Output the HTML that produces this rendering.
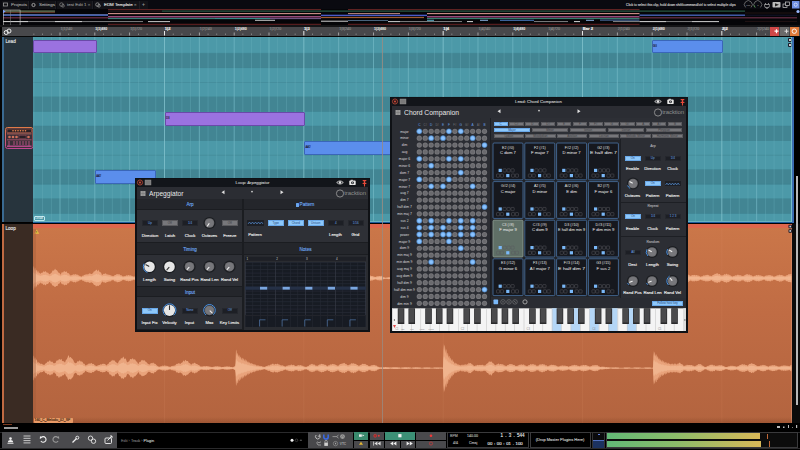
<!DOCTYPE html><html><head><meta charset="utf-8"><style>
html,body{margin:0;padding:0;width:800px;height:450px;overflow:hidden;background:#000;}
body{position:relative;font-family:"Liberation Sans",sans-serif;}
.t{position:absolute;white-space:nowrap;line-height:1;-webkit-text-stroke:0.12px currentColor;}
svg{position:absolute;left:0;top:0;}
</style></head><body>
<div style="position:absolute;left:0px;top:0px;width:800px;height:9px;background:#0a0a10;"></div>
<div style="position:absolute;left:2px;top:1px;width:27px;height:8px;background:#121217;border-right:0.8px solid #1e1e24;box-sizing:border-box;"></div>
<div style="position:absolute;left:30px;top:1px;width:26px;height:8px;background:#121217;border-right:0.8px solid #1e1e24;box-sizing:border-box;"></div>
<div style="position:absolute;left:57px;top:1px;width:36px;height:8px;background:#121217;border-right:0.8px solid #1e1e24;box-sizing:border-box;"></div>
<div style="position:absolute;left:94px;top:1px;width:46px;height:8px;background:#121217;border-right:0.8px solid #1e1e24;box-sizing:border-box;"></div>
<div style="position:absolute;left:140px;top:1px;width:8px;height:8px;background:#121217;"></div>
<div class="t" style="left:11px;top:3.0px;font-size:4.4px;color:#a4a4a4;">Projects</div>
<div class="t" style="left:39px;top:3.0px;font-size:4.4px;color:#a4a4a4;">Settings</div>
<div class="t" style="left:67px;top:3.0px;font-size:4.4px;color:#909090;">test Edit 1 <span style="color:#666">×</span></div>
<div class="t" style="left:104px;top:3.0px;font-size:4.4px;color:#e0e0e0;">EDM Template <span style="color:#777">×</span></div>
<div class="t" style="left:142px;top:2.0px;font-size:5px;color:#999;">+</div>
<div class="t" style="left:626px;top:4.1px;font-size:3.3px;color:#cfcfcf;">Click to select this clip, hold down shift/command/ctrl to select multiple clips</div>
<svg width="800" height="10" style="top:0">
<rect x="3.5" y="3" width="4" height="3" fill="none" stroke="#999" stroke-width="0.8"/>
<circle cx="33.5" cy="5" r="1.6" fill="none" stroke="#aaa" stroke-width="0.9"/>
<circle cx="61.5" cy="4.6" r="1.8" fill="none" stroke="#888" stroke-width="0.7"/><circle cx="63" cy="5.8" r="1.4" fill="none" stroke="#888" stroke-width="0.6"/>
<circle cx="97.5" cy="4.6" r="1.8" fill="none" stroke="#aaa" stroke-width="0.7"/><circle cx="99" cy="5.8" r="1.4" fill="none" stroke="#aaa" stroke-width="0.6"/>
<path d="M745.6 7.4 A3.9 3.9 0 1 1 751 7.4" fill="none" stroke="#888" stroke-width="0.7"/>
<path d="M755.1 7.4 A3.9 3.9 0 1 1 760.5 7.4" fill="none" stroke="#888" stroke-width="0.7"/>
<path d="M755.1 7.4 A3.9 3.9 0 0 1 754 5.5" stroke="#3aaa3a" stroke-width="0.8" fill="none"/>
<text x="748.3" y="5.6" font-size="2.4" fill="#bbb" text-anchor="middle" font-family="Liberation Sans">100</text>
<text x="757.8" y="5.6" font-size="2.4" fill="#bbb" text-anchor="middle" font-family="Liberation Sans">0</text>
<path d="M765.5 3 v1.5 M768.5 3 v1.5 M764.5 4.5 h5 v1 a2.5 2.5 0 0 1 -5 0 z M767 7 v2" stroke="#bbb" stroke-width="0.7" fill="none"/>
<rect x="772.5" y="2" width="8" height="5.6" rx="0.8" fill="#bbb"/><path d="M775 3.2 L779 4.8 L775 6.4 z" fill="#222"/>
<rect x="783" y="4" width="4" height="3.5" fill="none" stroke="#ccc" stroke-width="0.7"/><rect x="785.5" y="2" width="4" height="3.5" fill="#0a0a10" stroke="#ccc" stroke-width="0.7"/>
<rect x="792" y="1" width="7.5" height="7.5" fill="#6e8fe0"/><circle cx="795.7" cy="4.7" r="1.6" fill="none" stroke="#e8eeff" stroke-width="0.7"/>
</svg>
<div style="position:absolute;left:0px;top:9px;width:800px;height:17px;background:#050508;"></div>
<svg width="800" height="26" style="top:0"><rect x="108" y="9.10" width="213" height="1.0" fill="#6a2626"/><rect x="348" y="9.10" width="291.5" height="1.0" fill="#6a2626"/><rect x="745" y="12.60" width="52" height="0.8" fill="#2a1818"/><rect x="745" y="20.90" width="52" height="0.8" fill="#2a1818"/><rect x="745" y="14.80" width="52" height="0.8" fill="#141830"/><rect x="108" y="10.60" width="54" height="1.0" fill="#2a2222"/><rect x="162" y="10.60" width="583" height="1.0" fill="#2f6a50"/><rect x="108" y="13.05" width="213" height="1.1" fill="#d0908a"/><rect x="427" y="13.05" width="212.5" height="1.1" fill="#d0908a"/><rect x="348" y="13.10" width="52" height="1.0" fill="#c08a80"/><rect x="108" y="16.15" width="213" height="1.3" fill="#b0588e"/><rect x="427" y="16.15" width="212.5" height="1.3" fill="#b0588e"/><rect x="108" y="18.10" width="107" height="1.0" fill="#3a8a82"/><rect x="215" y="18.10" width="55" height="1.0" fill="#3a9a98"/><rect x="270" y="18.10" width="51" height="1.0" fill="#7a5a90"/><rect x="427" y="18.10" width="212.5" height="1.0" fill="#3a8a78"/><rect x="108" y="23.80" width="213" height="1.0" fill="#6a2424"/><rect x="348" y="23.80" width="291.5" height="1.0" fill="#6a2424"/><rect x="3" y="10.60" width="52" height="1.0" fill="#8aa070"/><rect x="3" y="12.15" width="52" height="0.9" fill="#6a3a28"/><rect x="3" y="14.50" width="105" height="1.4" fill="#4a68c0"/><rect x="3" y="14.40" width="105" height="0.4" fill="#90a8e0"/><rect x="321" y="14.70" width="106" height="1.4" fill="#4a5ac8"/><rect x="639.5" y="14.55" width="105.5" height="1.3" fill="#4a68c0"/><rect x="3" y="17.20" width="105" height="1.2" fill="#703048"/><rect x="321" y="16.90" width="103" height="1.2" fill="#a05a30"/><rect x="639.5" y="17.20" width="157.5" height="1.2" fill="#6a3048"/><rect x="3" y="21.10" width="25" height="1.0" fill="#e0e0e0"/><rect x="28" y="21.15" width="27" height="0.9" fill="#8a8a8a"/><rect x="55" y="21.10" width="27" height="1.0" fill="#e0e0e0"/><rect x="82" y="21.15" width="61" height="0.9" fill="#8a8a8a"/><rect x="148" y="21.10" width="22" height="1.0" fill="#c8c8c8"/><rect x="255" y="19.80" width="20" height="1.0" fill="#c8c8c8"/><rect x="321" y="20.70" width="27" height="1.0" fill="#d0d0d0"/><rect x="348" y="20.10" width="40" height="0.8" fill="#5a7a9a"/><rect x="388" y="21.10" width="12" height="1.0" fill="#d0d0d0"/><rect x="400" y="21.15" width="62" height="0.9" fill="#8a8a8a"/><rect x="467" y="21.10" width="6" height="1.0" fill="#d8d8d8"/><rect x="427" y="19.80" width="7" height="1.0" fill="#5ab0c8"/><rect x="480" y="19.80" width="8" height="1.0" fill="#8ab0e0"/><rect x="500" y="19.80" width="34" height="1.0" fill="#4a7ac0"/><rect x="534" y="21.15" width="34" height="0.9" fill="#8a8a8a"/><rect x="574" y="21.10" width="6" height="1.0" fill="#d8d8d8"/><rect x="586" y="19.80" width="8" height="1.0" fill="#8ab0e0"/><rect x="613" y="21.15" width="26.5" height="0.9" fill="#909090"/><rect x="639.5" y="21.10" width="26.5" height="1.0" fill="#d8d8d8"/><rect x="666" y="21.15" width="26" height="0.9" fill="#8a8a8a"/><rect x="692" y="21.10" width="27" height="1.0" fill="#d0d0d0"/><rect x="600" y="19.65" width="39.5" height="0.9" fill="#5a80c0"/><rect x="3.3" y="10" width="16.8" height="15.2" fill="none" stroke="#c8c8c8" stroke-width="0.6"/><rect x="10.5" y="10" width="0.5" height="15.2" fill="#888"/><path d="M3 10 L5.8 11.5 L3 13 z" fill="#7aa0ff"/><circle cx="798" cy="11.5" r="1.6" fill="#9ab8ff"/></svg>
<div style="position:absolute;left:0px;top:25px;width:800px;height:2px;background:#141416;"></div>
<div style="position:absolute;left:2px;top:27px;width:798px;height:8.5px;background:#48484b;"></div>
<div style="position:absolute;left:0px;top:35.5px;width:800px;height:1.5px;background:#070707;"></div>
<svg width="800" height="40" style="top:0"><rect x="33.48" y="33.5" width="0.8" height="1.5" fill="#8e8e8e"/><rect x="42.19" y="33.5" width="0.8" height="1.5" fill="#8e8e8e"/><rect x="50.89" y="33.5" width="0.8" height="1.5" fill="#8e8e8e"/><rect x="59.60" y="32.5" width="0.8" height="3" fill="#b8b8b8"/><rect x="68.31" y="33.5" width="0.8" height="1.5" fill="#8e8e8e"/><rect x="77.02" y="33.5" width="0.8" height="1.5" fill="#8e8e8e"/><rect x="85.73" y="33.5" width="0.8" height="1.5" fill="#8e8e8e"/><rect x="94.43" y="32.5" width="0.8" height="3" fill="#b8b8b8"/><rect x="103.14" y="33.5" width="0.8" height="1.5" fill="#8e8e8e"/><rect x="111.85" y="33.5" width="0.8" height="1.5" fill="#8e8e8e"/><rect x="120.56" y="33.5" width="0.8" height="1.5" fill="#8e8e8e"/><rect x="129.27" y="32.5" width="0.8" height="3" fill="#b8b8b8"/><rect x="137.98" y="33.5" width="0.8" height="1.5" fill="#8e8e8e"/><rect x="146.68" y="33.5" width="0.8" height="1.5" fill="#8e8e8e"/><rect x="155.39" y="33.5" width="0.8" height="1.5" fill="#8e8e8e"/><rect x="164.00" y="31" width="1" height="4.5" fill="#e8e8e8"/><rect x="172.81" y="33.5" width="0.8" height="1.5" fill="#8e8e8e"/><rect x="181.52" y="33.5" width="0.8" height="1.5" fill="#8e8e8e"/><rect x="190.22" y="33.5" width="0.8" height="1.5" fill="#8e8e8e"/><rect x="198.93" y="32.5" width="0.8" height="3" fill="#b8b8b8"/><rect x="207.64" y="33.5" width="0.8" height="1.5" fill="#8e8e8e"/><rect x="216.35" y="33.5" width="0.8" height="1.5" fill="#8e8e8e"/><rect x="225.06" y="33.5" width="0.8" height="1.5" fill="#8e8e8e"/><rect x="233.77" y="32.5" width="0.8" height="3" fill="#b8b8b8"/><rect x="242.47" y="33.5" width="0.8" height="1.5" fill="#8e8e8e"/><rect x="251.18" y="33.5" width="0.8" height="1.5" fill="#8e8e8e"/><rect x="259.89" y="33.5" width="0.8" height="1.5" fill="#8e8e8e"/><rect x="268.60" y="32.5" width="0.8" height="3" fill="#b8b8b8"/><rect x="277.31" y="33.5" width="0.8" height="1.5" fill="#8e8e8e"/><rect x="286.01" y="33.5" width="0.8" height="1.5" fill="#8e8e8e"/><rect x="294.72" y="33.5" width="0.8" height="1.5" fill="#8e8e8e"/><rect x="303.33" y="31" width="1" height="4.5" fill="#e8e8e8"/><rect x="312.14" y="33.5" width="0.8" height="1.5" fill="#8e8e8e"/><rect x="320.85" y="33.5" width="0.8" height="1.5" fill="#8e8e8e"/><rect x="329.55" y="33.5" width="0.8" height="1.5" fill="#8e8e8e"/><rect x="338.26" y="32.5" width="0.8" height="3" fill="#b8b8b8"/><rect x="346.97" y="33.5" width="0.8" height="1.5" fill="#8e8e8e"/><rect x="355.68" y="33.5" width="0.8" height="1.5" fill="#8e8e8e"/><rect x="364.39" y="33.5" width="0.8" height="1.5" fill="#8e8e8e"/><rect x="373.10" y="32.5" width="0.8" height="3" fill="#b8b8b8"/><rect x="381.80" y="33.5" width="0.8" height="1.5" fill="#8e8e8e"/><rect x="390.51" y="33.5" width="0.8" height="1.5" fill="#8e8e8e"/><rect x="399.22" y="33.5" width="0.8" height="1.5" fill="#8e8e8e"/><rect x="407.93" y="32.5" width="0.8" height="3" fill="#b8b8b8"/><rect x="416.64" y="33.5" width="0.8" height="1.5" fill="#8e8e8e"/><rect x="425.34" y="33.5" width="0.8" height="1.5" fill="#8e8e8e"/><rect x="434.05" y="33.5" width="0.8" height="1.5" fill="#8e8e8e"/><rect x="442.66" y="31" width="1" height="4.5" fill="#e8e8e8"/><rect x="451.47" y="33.5" width="0.8" height="1.5" fill="#8e8e8e"/><rect x="460.18" y="33.5" width="0.8" height="1.5" fill="#8e8e8e"/><rect x="468.88" y="33.5" width="0.8" height="1.5" fill="#8e8e8e"/><rect x="477.59" y="32.5" width="0.8" height="3" fill="#b8b8b8"/><rect x="486.30" y="33.5" width="0.8" height="1.5" fill="#8e8e8e"/><rect x="495.01" y="33.5" width="0.8" height="1.5" fill="#8e8e8e"/><rect x="503.72" y="33.5" width="0.8" height="1.5" fill="#8e8e8e"/><rect x="512.43" y="32.5" width="0.8" height="3" fill="#b8b8b8"/><rect x="521.13" y="33.5" width="0.8" height="1.5" fill="#8e8e8e"/><rect x="529.84" y="33.5" width="0.8" height="1.5" fill="#8e8e8e"/><rect x="538.55" y="33.5" width="0.8" height="1.5" fill="#8e8e8e"/><rect x="547.26" y="32.5" width="0.8" height="3" fill="#b8b8b8"/><rect x="555.97" y="33.5" width="0.8" height="1.5" fill="#8e8e8e"/><rect x="564.67" y="33.5" width="0.8" height="1.5" fill="#8e8e8e"/><rect x="573.38" y="33.5" width="0.8" height="1.5" fill="#8e8e8e"/><rect x="581.99" y="31" width="1" height="4.5" fill="#e8e8e8"/><rect x="590.80" y="33.5" width="0.8" height="1.5" fill="#8e8e8e"/><rect x="599.51" y="33.5" width="0.8" height="1.5" fill="#8e8e8e"/><rect x="608.21" y="33.5" width="0.8" height="1.5" fill="#8e8e8e"/><rect x="616.92" y="32.5" width="0.8" height="3" fill="#b8b8b8"/><rect x="625.63" y="33.5" width="0.8" height="1.5" fill="#8e8e8e"/><rect x="634.34" y="33.5" width="0.8" height="1.5" fill="#8e8e8e"/><rect x="643.05" y="33.5" width="0.8" height="1.5" fill="#8e8e8e"/><rect x="651.75" y="32.5" width="0.8" height="3" fill="#b8b8b8"/><rect x="660.46" y="33.5" width="0.8" height="1.5" fill="#8e8e8e"/><rect x="669.17" y="33.5" width="0.8" height="1.5" fill="#8e8e8e"/><rect x="677.88" y="33.5" width="0.8" height="1.5" fill="#8e8e8e"/><rect x="686.59" y="32.5" width="0.8" height="3" fill="#b8b8b8"/><rect x="695.30" y="33.5" width="0.8" height="1.5" fill="#8e8e8e"/><rect x="704.00" y="33.5" width="0.8" height="1.5" fill="#8e8e8e"/><rect x="712.71" y="33.5" width="0.8" height="1.5" fill="#8e8e8e"/><rect x="721.32" y="31" width="1" height="4.5" fill="#e8e8e8"/><rect x="730.13" y="33.5" width="0.8" height="1.5" fill="#8e8e8e"/><rect x="738.84" y="33.5" width="0.8" height="1.5" fill="#8e8e8e"/><rect x="747.54" y="33.5" width="0.8" height="1.5" fill="#8e8e8e"/><rect x="756.25" y="32.5" width="0.8" height="3" fill="#b8b8b8"/><rect x="764.96" y="33.5" width="0.8" height="1.5" fill="#8e8e8e"/></svg>
<div class="t" style="left:60.5025px;top:27.8px;font-size:3.6px;color:#8a8a8a;">1|1|240</div>
<div class="t" style="left:95.335px;top:27.8px;font-size:3.6px;color:#dcdcdc;font-weight:bold;">1|1|480</div>
<div class="t" style="left:130.1675px;top:27.8px;font-size:3.6px;color:#8a8a8a;">1|1|720</div>
<div class="t" style="left:164.7px;top:27.2px;font-size:4.2px;color:#f4f4f4;font-weight:bold;">1|2</div>
<div class="t" style="left:199.8325px;top:27.8px;font-size:3.6px;color:#8a8a8a;">1|2|240</div>
<div class="t" style="left:234.66500000000002px;top:27.8px;font-size:3.6px;color:#dcdcdc;font-weight:bold;">1|2|480</div>
<div class="t" style="left:269.4975px;top:27.8px;font-size:3.6px;color:#8a8a8a;">1|2|720</div>
<div class="t" style="left:304.03000000000003px;top:27.2px;font-size:4.2px;color:#f4f4f4;font-weight:bold;">1|3</div>
<div class="t" style="left:339.1625px;top:27.8px;font-size:3.6px;color:#8a8a8a;">1|3|240</div>
<div class="t" style="left:373.995px;top:27.8px;font-size:3.6px;color:#dcdcdc;font-weight:bold;">1|3|480</div>
<div class="t" style="left:408.8275px;top:27.8px;font-size:3.6px;color:#8a8a8a;">1|3|720</div>
<div class="t" style="left:443.36px;top:27.2px;font-size:4.2px;color:#f4f4f4;font-weight:bold;">1|4</div>
<div class="t" style="left:478.4925px;top:27.8px;font-size:3.6px;color:#8a8a8a;">1|4|240</div>
<div class="t" style="left:513.325px;top:27.8px;font-size:3.6px;color:#dcdcdc;font-weight:bold;">1|4|480</div>
<div class="t" style="left:548.1575px;top:27.8px;font-size:3.6px;color:#8a8a8a;">1|4|720</div>
<div class="t" style="left:582.69px;top:27.2px;font-size:4.2px;color:#f4f4f4;font-weight:bold;">Bar 2</div>
<div class="t" style="left:617.8225px;top:27.8px;font-size:3.6px;color:#8a8a8a;">2|1|240</div>
<div class="t" style="left:652.655px;top:27.8px;font-size:3.6px;color:#dcdcdc;font-weight:bold;">2|1|480</div>
<div class="t" style="left:687.4875000000001px;top:27.8px;font-size:3.6px;color:#8a8a8a;">2|1|720</div>
<div class="t" style="left:722.0200000000001px;top:27.2px;font-size:4.2px;color:#f4f4f4;font-weight:bold;">2|2</div>
<div class="t" style="left:757.1525px;top:27.8px;font-size:3.6px;color:#8a8a8a;">2|2|240</div>
<svg width="12" height="12" style="left:2px;top:26px"><circle cx="4.2" cy="6.5" r="2" fill="none" stroke="#eee" stroke-width="1"/><circle cx="7" cy="5" r="2" fill="none" stroke="#eee" stroke-width="1"/></svg>
<div style="position:absolute;left:770px;top:27px;width:9px;height:8.5px;background:#d04848;"></div>
<div style="position:absolute;left:780px;top:27px;width:9px;height:8.5px;background:#6a6a6a;"></div>
<div style="position:absolute;left:790px;top:27px;width:8.5px;height:8.5px;background:#e07a3a;"></div>
<svg width="40" height="10" style="left:768px;top:26px"><path d="M6.5 5.2 h4 M8.5 3.2 v4" stroke="#fff" stroke-width="1.2"/><path d="M16.5 5.2 h4 M18.5 3.2 v4" stroke="#ddd" stroke-width="1"/><circle cx="26.3" cy="5.2" r="2.2" fill="none" stroke="#fff" stroke-width="0.9"/></svg>
<div style="position:absolute;left:0px;top:37px;width:2px;height:386px;background:#050505;"></div>
<div style="position:absolute;left:2px;top:37px;width:2px;height:185px;background:#3a6a92;"></div>
<div style="position:absolute;left:4px;top:37px;width:29px;height:185px;background:#27343d;"></div>
<div style="position:absolute;left:2px;top:223.8px;width:2px;height:199.2px;background:#c06a42;"></div>
<div style="position:absolute;left:4px;top:223.8px;width:29px;height:199.2px;background:#3a2b23;"></div>
<div class="t" style="left:5.5px;top:39.5px;font-size:4.6px;color:#e8e8e8;">Lead</div>
<div class="t" style="left:5.5px;top:226.5px;font-size:4.6px;color:#e8e8e8;">Loop</div>
<svg width="30" height="24" style="left:4px;top:126px">
<defs><linearGradient id="pg" x1="0" y1="0" x2="0" y2="1"><stop offset="0" stop-color="#e07a48"/><stop offset="1" stop-color="#c04890"/></linearGradient></defs>
<rect x="1.5" y="1.5" width="27.5" height="21" rx="2" fill="#3a2f38" stroke="url(#pg)" stroke-width="1"/>
<rect x="3" y="3" width="24.5" height="3.5" fill="#2a2026" stroke="#c86a50" stroke-width="0.5"/>
<g fill="#f08a50"><circle cx="9" cy="4.7" r="0.8"/><circle cx="11.5" cy="4.7" r="0.8"/><circle cx="14" cy="4.7" r="0.8"/><circle cx="16.5" cy="4.7" r="0.8"/><circle cx="19" cy="4.7" r="0.8"/><circle cx="21.5" cy="4.7" r="0.8"/></g>
<rect x="3" y="7.5" width="24.5" height="0.8" fill="#d07060"/>
<g fill="#d0705a"><circle cx="5.5" cy="11" r="1.3"/><circle cx="9" cy="11" r="1.3"/><circle cx="12.5" cy="11" r="1.3"/><circle cx="24.5" cy="11" r="1.3"/></g>
<rect x="15" y="9.7" width="7" height="2.6" fill="#2a2026" stroke="#a05060" stroke-width="0.4"/>
<rect x="3" y="13.5" width="24.5" height="0.7" fill="#c05a78"/>
<g stroke="#d05a90" stroke-width="0.8"><path d="M5 15 v5 M25 15 v5 M10 15 v4 M13 15 v4 M16 15 v4 M19 15 v4 M22 15 v4"/></g>
<rect x="3" y="19.5" width="24.5" height="1.5" fill="#b04a88"/>
</svg>
<div style="position:absolute;left:33px;top:37px;width:759px;height:185px;background:#4c99a8;"></div>
<svg width="800" height="450" style="top:0"><g><rect x="33" y="52.91" width="759" height="0.6" fill="#3c7c88" opacity="0.6"/><rect x="33" y="53.21" width="759" height="14.56" fill="#428593"/><rect x="33" y="67.47" width="759" height="0.6" fill="#3c7c88" opacity="0.6"/><rect x="33" y="82.03" width="759" height="0.6" fill="#3c7c88" opacity="0.6"/><rect x="33" y="96.59" width="759" height="0.6" fill="#3c7c88" opacity="0.6"/><rect x="33" y="96.89" width="759" height="14.56" fill="#428593"/><rect x="33" y="111.15" width="759" height="0.6" fill="#3c7c88" opacity="0.6"/><rect x="33" y="125.71" width="759" height="0.6" fill="#3c7c88" opacity="0.6"/><rect x="33" y="126.01" width="759" height="14.56" fill="#428593"/><rect x="33" y="140.27" width="759" height="0.6" fill="#3c7c88" opacity="0.6"/><rect x="33" y="154.83" width="759" height="0.6" fill="#3c7c88" opacity="0.6"/><rect x="33" y="169.39" width="759" height="0.6" fill="#3c7c88" opacity="0.6"/><rect x="33" y="169.69" width="759" height="14.56" fill="#428593"/><rect x="33" y="183.95" width="759" height="0.6" fill="#3c7c88" opacity="0.6"/><rect x="33" y="198.51" width="759" height="0.6" fill="#3c7c88" opacity="0.6"/><rect x="33" y="198.81" width="759" height="14.56" fill="#428593"/><rect x="33" y="213.07" width="759" height="0.6" fill="#3c7c88" opacity="0.6"/><rect x="33" y="227.63" width="759" height="0.6" fill="#3c7c88" opacity="0.6"/></g></svg>
<svg width="800" height="450" style="top:0"><rect x="33.48" y="37" width="0.8" height="185" fill="#6ab0bc" opacity="0.42"/><rect x="42.19" y="37" width="0.8" height="185" fill="#6ab0bc" opacity="0.42"/><rect x="50.89" y="37" width="0.8" height="185" fill="#6ab0bc" opacity="0.42"/><rect x="59.50" y="37" width="1" height="185" fill="#74b8c4" opacity="0.7"/><rect x="68.31" y="37" width="0.8" height="185" fill="#6ab0bc" opacity="0.42"/><rect x="77.02" y="37" width="0.8" height="185" fill="#6ab0bc" opacity="0.42"/><rect x="85.73" y="37" width="0.8" height="185" fill="#6ab0bc" opacity="0.42"/><rect x="94.33" y="37" width="1" height="185" fill="#74b8c4" opacity="0.7"/><rect x="103.14" y="37" width="0.8" height="185" fill="#6ab0bc" opacity="0.42"/><rect x="111.85" y="37" width="0.8" height="185" fill="#6ab0bc" opacity="0.42"/><rect x="120.56" y="37" width="0.8" height="185" fill="#6ab0bc" opacity="0.42"/><rect x="129.17" y="37" width="1" height="185" fill="#74b8c4" opacity="0.7"/><rect x="137.98" y="37" width="0.8" height="185" fill="#6ab0bc" opacity="0.42"/><rect x="146.68" y="37" width="0.8" height="185" fill="#6ab0bc" opacity="0.42"/><rect x="155.39" y="37" width="0.8" height="185" fill="#6ab0bc" opacity="0.42"/><rect x="164.00" y="37" width="1" height="185" fill="#86c6d0" opacity="0.75"/><rect x="172.81" y="37" width="0.8" height="185" fill="#6ab0bc" opacity="0.42"/><rect x="181.52" y="37" width="0.8" height="185" fill="#6ab0bc" opacity="0.42"/><rect x="190.22" y="37" width="0.8" height="185" fill="#6ab0bc" opacity="0.42"/><rect x="198.83" y="37" width="1" height="185" fill="#74b8c4" opacity="0.7"/><rect x="207.64" y="37" width="0.8" height="185" fill="#6ab0bc" opacity="0.42"/><rect x="216.35" y="37" width="0.8" height="185" fill="#6ab0bc" opacity="0.42"/><rect x="225.06" y="37" width="0.8" height="185" fill="#6ab0bc" opacity="0.42"/><rect x="233.67" y="37" width="1" height="185" fill="#74b8c4" opacity="0.7"/><rect x="242.47" y="37" width="0.8" height="185" fill="#6ab0bc" opacity="0.42"/><rect x="251.18" y="37" width="0.8" height="185" fill="#6ab0bc" opacity="0.42"/><rect x="259.89" y="37" width="0.8" height="185" fill="#6ab0bc" opacity="0.42"/><rect x="268.50" y="37" width="1" height="185" fill="#74b8c4" opacity="0.7"/><rect x="277.31" y="37" width="0.8" height="185" fill="#6ab0bc" opacity="0.42"/><rect x="286.01" y="37" width="0.8" height="185" fill="#6ab0bc" opacity="0.42"/><rect x="294.72" y="37" width="0.8" height="185" fill="#6ab0bc" opacity="0.42"/><rect x="303.33" y="37" width="1" height="185" fill="#86c6d0" opacity="0.75"/><rect x="312.14" y="37" width="0.8" height="185" fill="#6ab0bc" opacity="0.42"/><rect x="320.85" y="37" width="0.8" height="185" fill="#6ab0bc" opacity="0.42"/><rect x="329.55" y="37" width="0.8" height="185" fill="#6ab0bc" opacity="0.42"/><rect x="338.16" y="37" width="1" height="185" fill="#74b8c4" opacity="0.7"/><rect x="346.97" y="37" width="0.8" height="185" fill="#6ab0bc" opacity="0.42"/><rect x="355.68" y="37" width="0.8" height="185" fill="#6ab0bc" opacity="0.42"/><rect x="364.39" y="37" width="0.8" height="185" fill="#6ab0bc" opacity="0.42"/><rect x="373.00" y="37" width="1" height="185" fill="#74b8c4" opacity="0.7"/><rect x="381.80" y="37" width="0.8" height="185" fill="#6ab0bc" opacity="0.42"/><rect x="390.51" y="37" width="0.8" height="185" fill="#6ab0bc" opacity="0.42"/><rect x="399.22" y="37" width="0.8" height="185" fill="#6ab0bc" opacity="0.42"/><rect x="407.83" y="37" width="1" height="185" fill="#74b8c4" opacity="0.7"/><rect x="416.64" y="37" width="0.8" height="185" fill="#6ab0bc" opacity="0.42"/><rect x="425.34" y="37" width="0.8" height="185" fill="#6ab0bc" opacity="0.42"/><rect x="434.05" y="37" width="0.8" height="185" fill="#6ab0bc" opacity="0.42"/><rect x="442.66" y="37" width="1" height="185" fill="#86c6d0" opacity="0.75"/><rect x="451.47" y="37" width="0.8" height="185" fill="#6ab0bc" opacity="0.42"/><rect x="460.18" y="37" width="0.8" height="185" fill="#6ab0bc" opacity="0.42"/><rect x="468.88" y="37" width="0.8" height="185" fill="#6ab0bc" opacity="0.42"/><rect x="477.49" y="37" width="1" height="185" fill="#74b8c4" opacity="0.7"/><rect x="486.30" y="37" width="0.8" height="185" fill="#6ab0bc" opacity="0.42"/><rect x="495.01" y="37" width="0.8" height="185" fill="#6ab0bc" opacity="0.42"/><rect x="503.72" y="37" width="0.8" height="185" fill="#6ab0bc" opacity="0.42"/><rect x="512.33" y="37" width="1" height="185" fill="#74b8c4" opacity="0.7"/><rect x="521.13" y="37" width="0.8" height="185" fill="#6ab0bc" opacity="0.42"/><rect x="529.84" y="37" width="0.8" height="185" fill="#6ab0bc" opacity="0.42"/><rect x="538.55" y="37" width="0.8" height="185" fill="#6ab0bc" opacity="0.42"/><rect x="547.16" y="37" width="1" height="185" fill="#74b8c4" opacity="0.7"/><rect x="555.97" y="37" width="0.8" height="185" fill="#6ab0bc" opacity="0.42"/><rect x="564.67" y="37" width="0.8" height="185" fill="#6ab0bc" opacity="0.42"/><rect x="573.38" y="37" width="0.8" height="185" fill="#6ab0bc" opacity="0.42"/><rect x="581.99" y="37" width="1" height="185" fill="#86c6d0" opacity="0.75"/><rect x="590.80" y="37" width="0.8" height="185" fill="#6ab0bc" opacity="0.42"/><rect x="599.51" y="37" width="0.8" height="185" fill="#6ab0bc" opacity="0.42"/><rect x="608.21" y="37" width="0.8" height="185" fill="#6ab0bc" opacity="0.42"/><rect x="616.82" y="37" width="1" height="185" fill="#74b8c4" opacity="0.7"/><rect x="625.63" y="37" width="0.8" height="185" fill="#6ab0bc" opacity="0.42"/><rect x="634.34" y="37" width="0.8" height="185" fill="#6ab0bc" opacity="0.42"/><rect x="643.05" y="37" width="0.8" height="185" fill="#6ab0bc" opacity="0.42"/><rect x="651.65" y="37" width="1" height="185" fill="#74b8c4" opacity="0.7"/><rect x="660.46" y="37" width="0.8" height="185" fill="#6ab0bc" opacity="0.42"/><rect x="669.17" y="37" width="0.8" height="185" fill="#6ab0bc" opacity="0.42"/><rect x="677.88" y="37" width="0.8" height="185" fill="#6ab0bc" opacity="0.42"/><rect x="686.49" y="37" width="1" height="185" fill="#74b8c4" opacity="0.7"/><rect x="695.30" y="37" width="0.8" height="185" fill="#6ab0bc" opacity="0.42"/><rect x="704.00" y="37" width="0.8" height="185" fill="#6ab0bc" opacity="0.42"/><rect x="712.71" y="37" width="0.8" height="185" fill="#6ab0bc" opacity="0.42"/><rect x="721.32" y="37" width="1" height="185" fill="#86c6d0" opacity="0.75"/><rect x="730.13" y="37" width="0.8" height="185" fill="#6ab0bc" opacity="0.42"/><rect x="738.84" y="37" width="0.8" height="185" fill="#6ab0bc" opacity="0.42"/><rect x="747.54" y="37" width="0.8" height="185" fill="#6ab0bc" opacity="0.42"/><rect x="756.15" y="37" width="1" height="185" fill="#74b8c4" opacity="0.7"/><rect x="764.96" y="37" width="0.8" height="185" fill="#6ab0bc" opacity="0.42"/><rect x="773.67" y="37" width="0.8" height="185" fill="#6ab0bc" opacity="0.42"/><rect x="782.38" y="37" width="0.8" height="185" fill="#6ab0bc" opacity="0.42"/><rect x="790.99" y="37" width="1" height="185" fill="#74b8c4" opacity="0.7"/></svg>
<div style="position:absolute;left:33px;top:39.6px;width:63.5px;height:13.799999999999997px;background:#9b72e0;border:0.8px solid #6a4aa8;box-sizing:border-box;border-radius:1px;"></div>
<div style="position:absolute;left:164.5px;top:112.3px;width:140.5px;height:13.799999999999997px;background:#9b72e0;border:0.8px solid #6a4aa8;box-sizing:border-box;border-radius:1px;"></div>
<div class="t" style="left:166.0px;top:117.3px;font-size:2.8px;color:#1a1a30;">D3</div>
<div style="position:absolute;left:304px;top:141.4px;width:96px;height:13.799999999999983px;background:#5b8eec;border:0.8px solid #3a66b8;box-sizing:border-box;border-radius:1px;"></div>
<div class="t" style="left:305.5px;top:146.4px;font-size:2.8px;color:#1a1a30;">A#2</div>
<div style="position:absolute;left:94.7px;top:170.0px;width:61.3px;height:14.0px;background:#5b8eec;border:0.8px solid #3a66b8;box-sizing:border-box;border-radius:1px;"></div>
<div class="t" style="left:96.2px;top:175.0px;font-size:2.8px;color:#1a1a30;">A#2</div>
<div style="position:absolute;left:651.5px;top:39.6px;width:71.0px;height:13.799999999999997px;background:#5b8eec;border:0.8px solid #3a66b8;box-sizing:border-box;border-radius:1px;"></div>
<div class="t" style="left:653.0px;top:44.6px;font-size:2.8px;color:#1a1a30;">G3</div>
<div style="position:absolute;left:33px;top:220.8px;width:759px;height:0.799999999999983px;background:#6ab2c0;"></div>
<div style="position:absolute;left:33px;top:221.6px;width:761px;height:1.0px;background:#1e5c9c;"></div>
<div style="position:absolute;left:792px;top:37px;width:2px;height:185.6px;background:#3a6cb0;"></div>
<div style="position:absolute;left:0px;top:222.6px;width:800px;height:1.200000000000017px;background:#030405;"></div>
<div style="position:absolute;left:34px;top:216.3px;width:11px;height:5px;border:0.6px solid #bfe8f0;border-radius:1px;background:#4a98a8;box-sizing:border-box"></div>
<div class="t" style="left:35.2px;top:217.3px;font-size:3.4px;color:#f4fcff;-webkit-text-stroke:0;">Lead</div>
<svg width="8" height="12" style="left:786px;top:37px"><rect x="2" y="1" width="4" height="4" rx="1" fill="#1a1a2a"/><rect x="2" y="6" width="4" height="4" rx="1" fill="#1a1a2a"/><rect x="3" y="2" width="2" height="2" fill="#ccc"/><rect x="3" y="7" width="2" height="2" fill="#ccc"/></svg>
<div style="position:absolute;left:33px;top:223.8px;width:759px;height:199.2px;background:linear-gradient(#cb7749,#c06c44 45%,#b3643f)"></div>
<div style="position:absolute;left:33px;top:223.8px;width:759px;height:4.599999999999994px;background:#df664c;"></div>
<div style="position:absolute;left:790.6px;top:228.6px;width:1.3999999999999773px;height:194.4px;background:#d89070;opacity:0.6;"></div>
<div style="position:absolute;left:792px;top:223.8px;width:8px;height:199.2px;background:#0b0b0b;"></div>
<div style="position:absolute;left:796px;top:176px;width:1.6000000000000227px;height:229px;background:#b8b8b8;"></div>
<div style="position:absolute;left:794px;top:37px;width:2px;height:139px;background:#000;"></div>
<div style="position:absolute;left:791px;top:37px;width:1px;height:184.6px;background:#7cc4d2;opacity:0.7;"></div>
<svg width="8" height="12" style="left:786px;top:223.5px"><rect x="2.5" y="0.8" width="3.5" height="3.5" rx="0.8" fill="#1a1a2a"/><rect x="2.5" y="5.2" width="3.5" height="3.5" rx="0.8" fill="#1a1a2a"/><rect x="3.4" y="1.7" width="1.7" height="1.7" fill="#ccc"/><rect x="3.4" y="6.1" width="1.7" height="1.7" fill="#ccc"/></svg>
<svg width="800" height="450" style="top:0"><rect x="164.00" y="228.4" width="1" height="194.6" fill="#e8a070" opacity="0.12"/><rect x="303.33" y="228.4" width="1" height="194.6" fill="#e8a070" opacity="0.12"/><rect x="442.66" y="228.4" width="1" height="194.6" fill="#e8a070" opacity="0.12"/><rect x="581.99" y="228.4" width="1" height="194.6" fill="#e8a070" opacity="0.12"/><rect x="721.32" y="228.4" width="1" height="194.6" fill="#e8a070" opacity="0.12"/></svg>
<div style="position:absolute;left:33px;top:417px;width:759px;height:6px;background:linear-gradient(rgba(0,0,0,0),rgba(60,20,0,0.18))"></div>
<svg width="6" height="6" style="left:33.5px;top:229px"><path d="M2.8 0.6 L5.2 4.8 L0.4 4.8 z" fill="#e8c040"/><rect x="2.5" y="2" width="0.6" height="1.6" fill="#553"/></svg>
<svg width="800" height="450" style="top:0"><polygon points="33.0,268.68 33.5,266.18 34.0,266.55 34.5,270.71 35.0,267.54 35.5,268.25 36.0,271.67 36.5,269.93 37.0,269.66 37.5,272.95 38.0,270.58 38.5,271.68 39.0,273.87 39.5,272.38 40.0,272.97 40.5,274.35 41.0,272.82 41.5,272.77 42.0,272.96 42.5,272.44 43.0,272.24 43.5,271.32 44.0,271.28 44.5,271.97 45.0,271.85 45.5,270.93 46.0,271.41 46.5,272.45 47.0,272.46 47.5,272.64 48.0,272.40 48.5,273.22 49.0,274.02 49.5,274.33 50.0,274.08 50.5,273.66 51.0,272.73 51.5,273.10 52.0,271.83 52.5,270.66 53.0,270.19 53.5,270.77 54.0,270.49 54.5,269.81 55.0,268.62 55.5,269.37 56.0,270.37 56.5,270.10 57.0,270.18 57.5,271.15 58.0,271.70 58.5,272.63 59.0,272.72 59.5,273.01 60.0,273.78 60.5,274.63 61.0,273.95 61.5,272.63 62.0,272.11 62.5,272.46 63.0,272.43 63.5,272.00 64.0,270.77 64.5,271.35 65.0,271.68 65.5,272.01 66.0,271.57 66.5,271.18 67.0,272.14 67.5,273.29 68.0,273.00 68.5,273.31 69.0,273.56 69.5,274.33 70.0,275.25 70.5,275.35 71.0,275.39 71.5,274.99 72.0,275.22 72.5,274.66 73.0,274.45 73.5,274.19 74.0,274.39 74.5,274.87 75.0,274.04 75.5,274.18 76.0,274.33 76.5,274.56 77.0,274.97 77.5,274.57 78.0,274.74 78.5,275.25 79.0,275.70 79.5,275.82 80.0,276.04 80.5,276.28 81.0,276.55 81.5,276.72 82.0,276.25 82.5,275.87 83.0,275.48 83.5,275.71 84.0,275.11 84.5,274.88 85.0,274.48 85.5,274.41 86.0,274.69 86.5,274.37 87.0,274.24 87.5,274.38 88.0,274.36 88.5,274.17 89.0,273.48 89.5,273.50 90.0,273.37 90.5,273.87 91.0,274.12 91.5,274.09 92.0,273.98 92.5,273.31 93.0,273.32 93.5,271.90 94.0,271.27 94.5,271.48 95.0,271.07 95.5,270.48 96.0,270.25 96.5,269.42 97.0,270.04 97.5,271.39 98.0,270.77 98.5,269.58 99.0,270.91 99.5,271.74 100.0,272.33 100.5,272.23 101.0,272.45 101.5,273.84 102.0,274.95 102.5,274.96 103.0,273.92 103.5,273.86 104.0,274.12 104.5,273.93 105.0,273.36 105.5,273.62 106.0,273.41 106.5,274.14 107.0,274.42 107.5,274.33 108.0,274.70 108.5,274.54 109.0,275.10 109.5,274.71 110.0,274.94 110.5,275.18 111.0,275.42 111.5,275.85 112.0,275.80 112.5,276.11 113.0,276.25 113.5,276.11 114.0,275.80 114.5,275.28 115.0,274.93 115.5,275.08 116.0,274.81 116.5,274.18 117.0,273.95 117.5,273.96 118.0,274.65 118.5,274.22 119.0,274.03 119.5,274.17 120.0,274.88 120.5,275.23 121.0,275.13 121.5,275.31 122.0,275.75 122.5,276.16 123.0,276.56 123.5,276.33 124.0,276.17 124.5,276.00 125.0,276.20 125.5,275.89 126.0,275.42 126.5,275.30 127.0,275.47 127.5,275.63 128.0,275.02 128.5,275.04 129.0,275.22 129.5,275.44 130.0,275.38 130.5,275.24 131.0,275.52 131.5,275.76 132.0,276.18 132.5,276.01 133.0,276.28 133.5,276.59 134.0,276.68 134.5,276.56 135.0,276.00 135.5,275.77 136.0,275.79 136.5,275.77 137.0,275.39 137.5,275.02 138.0,275.24 138.5,275.39 139.0,275.34 139.5,275.07 140.0,275.13 140.5,275.37 141.0,275.78 141.5,275.57 142.0,275.70 142.5,275.65 143.0,276.06 143.5,276.50 144.0,276.56 144.5,276.41 145.0,276.24 145.5,276.34 146.0,276.19 146.5,275.55 147.0,275.41 147.5,275.57 148.0,275.69 148.5,275.49 149.0,275.07 149.5,274.99 150.0,275.15 150.5,275.56 151.0,275.36 151.5,275.36 152.0,275.40 152.5,275.77 153.0,276.01 153.5,275.95 154.0,276.26 154.5,276.65 155.0,276.84 155.5,276.37 156.0,275.98 156.5,275.98 157.0,275.87 157.5,275.76 158.0,275.36 158.5,275.20 159.0,275.30 159.5,275.39 160.0,275.24 160.5,275.09 161.0,275.30 161.5,275.36 162.0,275.55 162.5,275.36 163.0,275.47 163.5,275.78 164.0,276.31 164.5,276.38 165.0,276.51 165.5,276.54 166.0,276.42 166.5,276.36 167.0,275.84 167.5,275.63 168.0,275.46 168.5,275.55 169.0,275.47 169.5,275.00 170.0,274.89 170.5,275.03 171.0,275.53 171.5,275.22 172.0,275.16 172.5,275.17 173.0,275.65 173.5,275.93 174.0,275.90 174.5,275.95 175.0,276.28 175.5,276.63 176.0,276.63 176.5,276.37 177.0,275.95 177.5,276.10 178.0,276.02 178.5,275.60 179.0,275.42 179.5,275.15 180.0,275.48 180.5,275.48 181.0,275.22 181.5,274.87 182.0,275.32 182.5,275.52 183.0,275.64 183.5,275.39 184.0,275.64 184.5,275.90 185.0,276.26 185.5,276.18 186.0,276.36 186.5,276.54 187.0,276.50 187.5,276.33 188.0,275.90 188.5,275.72 189.0,275.55 189.5,275.87 190.0,275.34 190.5,275.21 191.0,275.05 191.5,275.43 192.0,275.30 192.5,274.97 193.0,275.21 193.5,275.54 194.0,275.94 194.5,275.78 195.0,275.90 195.5,275.93 196.0,276.36 196.5,276.65 197.0,276.56 197.5,276.15 198.0,276.03 198.5,276.16 199.0,275.84 199.5,275.53 200.0,275.21 200.5,275.12 201.0,275.52 201.5,275.09 202.0,274.76 202.5,274.40 203.0,275.02 203.5,274.72 204.0,274.69 204.5,274.77 205.0,274.82 205.5,275.30 206.0,275.28 206.5,275.34 207.0,275.62 207.5,276.00 208.0,275.61 208.5,274.91 209.0,274.39 209.5,274.21 210.0,274.33 210.5,273.76 211.0,272.89 211.5,272.56 212.0,273.02 212.5,273.48 213.0,272.34 213.5,272.60 214.0,272.19 214.5,273.10 215.0,273.55 215.5,273.06 216.0,273.27 216.5,273.57 217.0,274.58 217.5,274.56 218.0,274.73 218.5,273.81 219.0,273.92 219.5,273.29 220.0,272.58 220.5,271.90 221.0,271.60 221.5,271.50 222.0,271.15 222.5,270.23 223.0,269.63 223.5,270.22 224.0,271.30 224.5,270.29 225.0,270.73 225.5,270.80 226.0,271.90 226.5,272.61 227.0,272.07 227.5,272.74 228.0,273.54 228.5,274.00 229.0,273.19 229.5,271.99 230.0,271.54 230.5,271.05 231.0,270.50 231.5,269.21 232.0,268.20 232.5,269.09 233.0,269.20 233.5,268.48 234.0,267.64 234.5,267.32 235.0,268.80 235.5,271.30 236.0,269.77 236.5,269.29 237.0,271.61 237.5,269.82 238.0,270.31 238.5,272.14 239.0,270.45 239.5,270.02 240.0,272.72 240.5,270.02 241.0,270.80 241.5,272.99 242.0,270.36 242.5,271.01 243.0,272.82 243.5,270.66 244.0,270.97 244.5,272.83 245.0,271.15 245.5,271.02 246.0,273.54 246.5,271.44 247.0,271.79 247.5,273.37 248.0,271.93 248.5,271.83 249.0,274.00 249.5,272.17 250.0,272.71 250.5,273.86 251.0,272.31 251.5,272.70 252.0,274.29 252.5,272.75 253.0,273.14 253.5,274.63 254.0,273.29 254.5,273.37 255.0,274.93 255.5,273.33 256.0,273.69 256.5,275.06 257.0,273.73 257.5,273.84 258.0,275.12 258.5,274.28 259.0,274.44 259.5,275.50 260.0,274.61 260.5,274.67 261.0,275.75 261.5,274.73 262.0,274.60 262.5,274.54 263.0,274.94 263.5,274.45 264.0,274.03 264.5,274.02 265.0,274.18 265.5,274.84 266.0,274.11 266.5,274.53 267.0,274.59 267.5,275.13 268.0,275.07 268.5,275.15 269.0,275.42 269.5,275.92 270.0,276.25 270.5,276.20 271.0,275.76 271.5,275.66 272.0,275.58 272.5,275.27 273.0,274.84 273.5,274.71 274.0,274.78 274.5,274.80 275.0,274.48 275.5,274.43 276.0,274.57 276.5,274.80 277.0,274.86 277.5,274.86 278.0,274.88 278.5,275.12 279.0,275.71 279.5,275.71 280.0,275.80 280.5,276.24 281.0,276.38 281.5,276.24 282.0,275.92 282.5,275.52 283.0,275.43 283.5,275.35 284.0,275.27 284.5,275.02 285.0,274.79 285.5,274.91 286.0,275.20 286.5,274.99 287.0,274.89 287.5,274.79 288.0,275.40 288.5,275.49 289.0,275.35 289.5,275.63 290.0,275.94 290.5,276.41 291.0,276.59 291.5,276.37 292.0,276.10 292.5,276.14 293.0,275.98 293.5,275.80 294.0,275.39 294.5,275.38 295.0,275.30 295.5,275.39 296.0,275.00 296.5,274.98 297.0,275.19 297.5,275.40 298.0,275.48 298.5,275.40 299.0,275.50 299.5,275.93 300.0,276.13 300.5,276.04 301.0,276.17 301.5,276.51 302.0,276.63 302.5,276.38 303.0,275.98 303.5,275.72 304.0,275.73 304.5,275.87 305.0,275.45 305.5,275.03 306.0,275.13 306.5,275.34 307.0,275.47 307.5,275.08 308.0,275.16 308.5,275.30 309.0,275.82 309.5,275.57 310.0,275.59 310.5,275.74 311.0,276.29 311.5,276.45 312.0,276.44 312.5,276.43 313.0,276.25 313.5,276.35 314.0,276.14 314.5,275.70 315.0,275.59 315.5,275.56 316.0,275.55 316.5,275.44 317.0,274.86 317.5,275.12 318.0,275.20 318.5,275.32 319.0,275.26 319.5,275.30 320.0,275.69 320.5,276.09 321.0,276.10 321.5,276.12 322.0,276.24 322.5,276.65 323.0,276.66 323.5,276.28 324.0,276.11 324.5,275.98 325.0,275.98 325.5,275.61 326.0,275.41 326.5,275.24 327.0,275.09 327.5,275.67 328.0,275.23 328.5,274.90 329.0,275.05 329.5,275.45 330.0,275.54 330.5,275.60 331.0,275.59 331.5,275.83 332.0,276.43 332.5,276.39 333.0,276.54 333.5,276.61 334.0,276.32 334.5,276.27 335.0,275.93 335.5,275.54 336.0,275.64 336.5,275.64 337.0,275.30 337.5,275.27 338.0,275.20 338.5,275.37 339.0,275.42 339.5,275.13 340.0,275.29 340.5,275.21 341.0,275.85 341.5,275.84 342.0,275.72 342.5,276.02 343.0,276.24 343.5,276.63 344.0,276.66 344.5,276.22 345.0,275.94 345.5,276.00 346.0,275.99 346.5,275.41 347.0,275.22 347.5,275.21 348.0,275.55 348.5,275.46 349.0,275.10 349.5,274.97 350.0,275.09 350.5,275.80 351.0,275.52 351.5,275.48 352.0,275.52 352.5,276.12 353.0,276.30 353.5,276.35 354.0,276.54 354.5,276.71 355.0,276.65 355.5,276.28 356.0,275.88 356.5,275.72 357.0,275.93 357.5,275.89 358.0,275.50 358.5,275.44 359.0,275.47 359.5,275.61 360.0,275.58 360.5,275.36 361.0,275.48 361.5,275.68 362.0,276.01 362.5,275.92 363.0,276.00 363.5,276.37 364.0,276.71 364.5,276.86 365.0,276.73 365.5,276.55 366.0,276.48 366.5,276.48 367.0,276.26 367.5,275.95 368.0,275.82 368.5,275.82 369.0,275.86 369.5,275.79 370.0,275.60 370.5,275.50 371.0,276.05 371.5,275.89 372.0,275.93 372.5,276.05 373.0,276.17 373.5,276.58 374.0,276.61 374.5,276.68 375.0,276.91 375.5,276.96 376.0,276.86 376.5,276.61 377.0,276.32 377.5,276.31 378.0,276.29 378.5,276.17 379.0,276.04 379.5,275.98 380.0,276.03 380.5,276.21 381.0,275.92 381.5,275.77 382.0,275.99 382.5,276.59 383.0,276.77 383.5,277.13 384.0,277.39 384.5,277.53 385.0,277.61 385.5,277.69 386.0,277.65 386.5,277.61 387.0,277.53 387.5,277.56 388.0,277.34 388.5,277.32 389.0,277.28 389.5,277.36 390.0,277.23 390.5,277.14 391.0,277.15 391.5,277.29 392.0,277.37 392.5,277.27 393.0,277.31 393.5,277.33 394.0,277.50 394.5,277.50 395.0,277.57 395.5,277.63 396.0,277.71 396.5,277.75 397.0,277.64 397.5,277.54 398.0,277.51 398.5,277.48 399.0,277.51 399.5,277.39 400.0,277.35 400.5,277.35 401.0,277.37 401.5,277.30 402.0,277.34 402.5,277.29 403.0,277.42 403.5,277.47 404.0,277.42 404.5,277.49 405.0,277.56 405.5,277.67 406.0,277.71 406.5,277.73 407.0,277.72 407.5,277.68 408.0,277.68 408.5,277.60 409.0,277.46 409.5,277.47 410.0,277.47 410.5,277.49 411.0,277.34 411.5,277.34 412.0,277.35 412.5,277.43 413.0,277.47 413.5,277.39 414.0,277.46 414.5,277.57 415.0,277.62 415.5,277.58 416.0,277.60 416.5,277.68 417.0,277.75 417.5,277.75 418.0,277.75 418.5,277.69 419.0,277.66 419.5,277.66 420.0,277.57 420.5,277.51 421.0,277.46 421.5,277.48 422.0,277.52 422.5,277.49 423.0,277.42 423.5,277.44 424.0,277.56 424.5,277.59 425.0,277.53 425.5,277.56 426.0,277.68 426.5,277.75 427.0,277.75 427.5,277.75 428.0,277.75 428.5,277.75 429.0,277.75 429.5,277.67 430.0,277.64 430.5,277.66 431.0,277.63 431.5,277.57 432.0,277.48 432.5,277.51 433.0,277.58 433.5,277.60 434.0,277.59 434.5,277.53 435.0,277.64 435.5,277.69 436.0,277.67 436.5,277.73 437.0,277.72 437.5,277.75 438.0,277.75 438.5,277.75 439.0,277.75 439.5,277.75 440.0,277.75 440.5,276.05 441.0,273.61 441.5,270.83 442.0,269.54 442.5,267.75 443.0,265.36 443.5,266.00 444.0,269.77 444.5,266.00 445.0,267.37 445.5,270.16 446.0,266.91 446.5,267.60 447.0,270.17 447.5,268.20 448.0,268.12 448.5,271.07 449.0,269.34 449.5,269.50 450.0,271.70 450.5,269.28 451.0,269.29 451.5,272.37 452.0,270.74 452.5,270.60 453.0,272.57 453.5,271.53 454.0,271.79 454.5,273.22 455.0,272.33 455.5,272.33 456.0,274.28 456.5,272.94 457.0,272.97 457.5,274.72 458.0,273.30 458.5,273.76 459.0,275.25 459.5,274.57 460.0,274.53 460.5,275.66 461.0,274.41 461.5,274.47 462.0,275.70 462.5,274.77 463.0,274.71 463.5,275.55 464.0,274.48 464.5,274.79 465.0,275.51 465.5,274.42 466.0,274.76 466.5,275.68 467.0,274.75 467.5,274.75 468.0,275.66 468.5,275.24 469.0,275.57 469.5,276.05 470.0,276.37 470.5,275.75 471.0,275.36 471.5,275.30 472.0,274.96 472.5,274.93 473.0,274.45 473.5,274.28 474.0,274.33 474.5,274.81 475.0,274.60 475.5,273.95 476.0,274.34 476.5,274.44 477.0,275.17 477.5,274.91 478.0,274.97 478.5,275.22 479.0,275.63 479.5,275.82 480.0,275.97 480.5,276.12 481.0,275.70 481.5,275.93 482.0,275.21 482.5,274.78 483.0,274.59 483.5,274.72 484.0,275.02 484.5,274.61 485.0,274.10 485.5,274.41 486.0,274.49 486.5,274.63 487.0,274.61 487.5,274.40 488.0,275.06 488.5,275.46 489.0,275.44 489.5,275.49 490.0,275.63 490.5,276.12 491.0,276.33 491.5,275.81 492.0,275.48 492.5,275.38 493.0,275.54 493.5,275.15 494.0,274.75 494.5,274.67 495.0,274.57 495.5,274.61 496.0,274.30 496.5,274.31 497.0,274.26 497.5,274.67 498.0,274.97 498.5,274.99 499.0,275.02 499.5,275.52 500.0,275.95 500.5,275.87 501.0,276.02 501.5,276.14 502.0,276.09 502.5,275.97 503.0,275.22 503.5,275.17 504.0,275.05 504.5,275.25 505.0,274.77 505.5,274.51 506.0,274.58 506.5,274.42 507.0,274.90 507.5,274.50 508.0,274.43 508.5,274.82 509.0,275.26 509.5,275.29 510.0,275.35 510.5,275.42 511.0,276.03 511.5,276.48 512.0,276.38 512.5,275.85 513.0,275.51 513.5,275.61 514.0,275.62 514.5,274.95 515.0,274.86 515.5,274.93 516.0,274.87 516.5,274.59 517.0,274.50 517.5,274.31 518.0,274.91 518.5,274.91 519.0,274.81 519.5,275.02 520.0,275.38 520.5,275.55 521.0,275.77 521.5,275.74 522.0,276.24 522.5,276.21 523.0,276.35 523.5,275.76 524.0,275.38 524.5,275.24 525.0,275.41 525.5,274.99 526.0,274.61 526.5,274.70 527.0,274.43 527.5,275.04 528.0,274.64 528.5,274.59 529.0,274.70 529.5,275.23 530.0,275.53 530.5,275.29 531.0,275.40 531.5,275.86 532.0,276.06 532.5,276.39 533.0,276.20 533.5,275.95 534.0,275.78 534.5,275.80 535.0,275.24 535.5,274.89 536.0,274.76 536.5,275.25 537.0,274.85 537.5,274.65 538.0,274.51 538.5,274.55 539.0,275.14 539.5,275.11 540.0,274.82 540.5,274.93 541.0,275.48 541.5,275.93 542.0,275.93 542.5,275.98 543.0,276.34 543.5,276.52 544.0,276.16 544.5,275.77 545.0,275.44 545.5,275.48 546.0,275.59 546.5,275.09 547.0,274.66 547.5,274.74 548.0,274.90 548.5,274.98 549.0,274.73 549.5,274.68 550.0,275.05 550.5,275.36 551.0,275.21 551.5,275.21 552.0,275.38 552.5,275.98 553.0,276.26 553.5,276.27 554.0,276.37 554.5,276.16 555.0,276.06 555.5,275.85 556.0,275.24 556.5,275.07 557.0,275.31 557.5,275.35 558.0,274.87 558.5,274.75 559.0,274.94 559.5,275.20 560.0,275.07 560.5,274.85 561.0,275.02 561.5,275.25 562.0,275.61 562.5,275.85 563.0,275.67 563.5,275.94 564.0,276.44 564.5,276.69 565.0,276.12 565.5,275.92 566.0,275.76 566.5,275.84 567.0,275.51 567.5,275.28 568.0,274.93 568.5,275.12 569.0,275.18 569.5,275.14 570.0,274.78 570.5,274.82 571.0,275.12 571.5,275.35 572.0,275.19 572.5,275.31 573.0,275.66 573.5,276.22 574.0,276.20 574.5,276.36 575.0,276.39 575.5,276.36 576.0,276.16 576.5,275.83 577.0,275.59 577.5,275.49 578.0,275.46 578.5,275.27 579.0,275.16 579.5,274.75 580.0,275.09 580.5,275.42 581.0,275.03 581.5,274.86 582.0,275.17 582.5,275.61 583.0,275.78 583.5,275.80 584.0,275.98 584.5,276.26 585.0,276.75 585.5,276.62 586.0,276.34 586.5,275.91 587.0,275.97 587.5,275.88 588.0,275.47 588.5,275.05 589.0,275.18 589.5,275.25 590.0,275.26 590.5,275.01 591.0,274.92 591.5,275.26 592.0,275.71 592.5,275.52 593.0,275.52 593.5,275.46 594.0,276.05 594.5,276.20 595.0,276.28 595.5,276.42 596.0,276.55 596.5,276.59 597.0,276.23 597.5,275.84 598.0,275.72 598.5,275.60 599.0,275.65 599.5,275.29 600.0,274.98 600.5,275.09 601.0,275.24 601.5,275.07 602.0,275.03 602.5,274.63 603.0,274.96 603.5,275.37 604.0,275.28 604.5,275.45 605.0,275.39 605.5,276.01 606.0,276.14 606.5,276.18 607.0,275.67 607.5,275.42 608.0,275.47 608.5,275.02 609.0,274.29 609.5,274.33 610.0,274.14 610.5,274.16 611.0,273.71 611.5,273.37 612.0,273.38 612.5,274.18 613.0,274.10 613.5,273.71 614.0,273.91 614.5,274.00 615.0,274.87 615.5,274.67 616.0,274.99 616.5,275.34 617.0,275.62 617.5,275.36 618.0,274.54 618.5,273.93 619.0,273.87 619.5,274.08 620.0,272.93 620.5,272.23 621.0,272.37 621.5,272.17 622.0,272.94 622.5,272.22 623.0,272.04 623.5,272.38 624.0,272.58 624.5,273.20 625.0,272.52 625.5,273.41 626.0,273.61 626.5,274.35 627.0,274.46 627.5,274.53 628.0,273.84 628.5,273.63 629.0,273.19 629.5,272.16 630.0,271.87 630.5,272.05 631.0,272.02 631.5,271.43 632.0,270.52 632.5,270.58 633.0,271.10 633.5,271.38 634.0,271.22 634.5,271.00 635.0,271.22 635.5,272.49 636.0,272.69 636.5,272.82 637.0,273.25 637.5,273.71 638.0,274.19 638.5,273.19 639.0,272.15 639.5,271.62 640.0,271.57 640.5,271.00 641.0,270.19 641.5,269.36 642.0,269.74 642.5,270.67 643.0,269.30 643.5,269.48 644.0,268.63 644.5,269.80 645.0,271.07 645.5,270.63 646.0,270.48 646.5,270.95 647.0,271.99 647.5,272.56 648.0,273.02 648.5,272.59 649.0,272.35 649.5,272.05 650.0,271.18 650.5,270.44 651.0,269.03 651.5,270.06 652.0,269.75 652.5,268.53 653.0,269.12 653.5,268.84 654.0,271.87 654.5,269.70 655.0,269.76 655.5,271.70 656.0,269.89 656.5,269.63 657.0,272.05 657.5,270.24 658.0,269.82 658.5,272.11 659.0,269.50 659.5,270.00 660.0,272.50 660.5,270.07 661.0,270.49 661.5,272.60 662.0,270.87 662.5,269.98 663.0,272.90 663.5,270.77 664.0,270.29 664.5,272.95 665.0,270.67 665.5,270.69 666.0,272.56 666.5,271.23 667.0,270.74 667.5,273.36 668.0,271.62 668.5,270.88 669.0,273.15 669.5,271.81 670.0,271.66 670.5,273.09 671.0,271.56 671.5,271.92 672.0,273.54 672.5,272.02 673.0,272.21 673.5,273.78 674.0,271.68 674.5,271.98 675.0,273.55 675.5,272.04 676.0,272.32 676.5,274.04 677.0,272.61 677.5,272.12 678.0,274.31 678.5,273.85 679.0,274.46 679.5,275.30 680.0,275.14 680.5,274.19 681.0,273.95 681.5,274.40 682.0,273.74 682.5,272.86 683.0,272.56 683.5,272.63 684.0,273.15 684.5,272.88 685.0,272.48 685.5,272.45 686.0,273.06 686.5,273.26 687.0,273.01 687.5,273.57 688.0,274.25 688.5,274.80 689.0,275.16 689.5,275.17 690.0,275.57 690.5,275.95 691.0,275.77 691.5,275.43 692.0,275.08 692.5,275.08 693.0,275.20 693.5,275.32 694.0,274.85 694.5,274.95 695.0,275.05 695.5,275.58 696.0,275.35 696.5,275.01 697.0,275.12 697.5,275.61 698.0,275.64 698.5,275.55 699.0,275.73 699.5,276.08 700.0,276.41 700.5,276.68 701.0,276.56 701.5,276.26 702.0,276.34 702.5,276.21 703.0,275.78 703.5,275.37 704.0,275.39 704.5,275.38 705.0,275.41 705.5,275.21 706.0,274.82 706.5,274.88 707.0,275.16 707.5,274.81 708.0,274.74 708.5,274.96 709.0,275.43 709.5,275.68 710.0,275.72 710.5,275.66 711.0,276.11 711.5,276.33 712.0,275.86 712.5,275.17 713.0,275.10 713.5,274.86 714.0,274.84 714.5,274.31 715.0,273.61 715.5,273.93 716.0,273.97 716.5,273.61 717.0,273.09 717.5,273.50 718.0,273.51 718.5,274.42 719.0,274.11 719.5,273.88 720.0,274.10 720.5,275.13 721.0,275.26 721.5,275.45 722.0,275.40 722.5,275.18 723.0,275.52 723.5,274.90 724.0,274.43 724.5,274.09 725.0,274.46 725.5,274.69 726.0,273.76 726.5,273.77 727.0,273.97 727.5,274.65 728.0,274.31 728.5,274.48 729.0,274.63 729.5,274.78 730.0,275.41 730.5,275.33 731.0,275.64 731.5,275.90 732.0,276.52 732.5,276.61 733.0,276.17 733.5,275.92 734.0,275.71 734.5,276.07 735.0,275.56 735.5,275.25 736.0,275.23 736.5,275.38 737.0,275.19 737.5,274.86 738.0,274.49 738.5,274.92 739.0,275.32 739.5,275.24 740.0,275.07 740.5,275.30 741.0,275.43 741.5,275.86 742.0,275.77 742.5,276.04 743.0,276.03 743.5,275.87 744.0,275.65 744.5,275.33 745.0,274.79 745.5,274.66 746.0,274.84 746.5,274.32 747.0,274.00 747.5,274.14 748.0,274.55 748.5,274.94 749.0,274.31 749.5,274.38 750.0,274.88 750.5,275.15 751.0,275.18 751.5,275.30 752.0,275.65 752.5,276.06 753.0,276.57 753.5,276.26 754.0,275.91 754.5,275.83 755.0,275.80 755.5,275.72 756.0,275.20 756.5,274.98 757.0,275.07 757.5,275.47 758.0,275.32 758.5,274.85 759.0,275.14 759.5,275.30 760.0,275.72 760.5,275.27 761.0,275.58 761.5,275.82 762.0,275.99 762.5,276.11 763.0,276.13 763.5,276.39 764.0,276.60 764.5,276.50 765.0,276.08 765.5,275.83 766.0,275.62 766.5,275.62 767.0,275.52 767.5,275.44 768.0,275.24 768.5,275.03 769.0,275.54 769.5,275.09 770.0,274.98 770.5,275.33 771.0,275.60 771.5,275.70 772.0,275.57 772.5,275.82 773.0,276.17 773.5,276.42 774.0,276.64 774.5,276.60 775.0,276.37 775.5,276.13 776.0,276.07 776.5,275.81 777.0,275.37 777.5,275.35 778.0,275.39 778.5,275.35 779.0,274.71 779.5,274.77 780.0,274.64 780.5,275.35 781.0,275.19 781.5,274.99 782.0,275.07 782.5,275.36 783.0,275.70 783.5,275.81 784.0,275.75 784.5,276.11 785.0,276.49 785.5,275.95 786.0,275.56 786.5,275.45 787.0,275.07 787.5,275.36 788.0,274.90 788.5,274.24 789.0,274.10 789.5,274.27 790.0,274.56 790.5,273.95 791.0,273.98 791.5,274.10 791.5,282.20 791.0,282.48 790.5,282.22 790.0,281.84 789.5,282.12 789.0,281.99 788.5,282.01 788.0,281.77 787.5,281.28 787.0,281.29 786.5,281.30 786.0,280.65 785.5,280.44 785.0,279.93 784.5,280.24 784.0,280.50 783.5,280.62 783.0,280.74 782.5,281.09 782.0,281.22 781.5,281.39 781.0,281.50 780.5,281.29 780.0,281.67 779.5,281.86 779.0,281.44 778.5,281.06 778.0,281.09 777.5,281.02 777.0,281.11 776.5,280.76 776.0,280.21 775.5,280.17 775.0,280.05 774.5,279.95 774.0,279.84 773.5,279.89 773.0,280.32 772.5,280.69 772.0,280.85 771.5,280.62 771.0,280.94 770.5,281.40 770.0,281.29 769.5,281.32 769.0,280.87 768.5,281.05 768.0,281.15 767.5,281.17 767.0,280.63 766.5,280.81 766.0,280.67 765.5,280.66 765.0,280.21 764.5,279.76 764.0,279.86 763.5,279.86 763.0,280.18 762.5,280.31 762.0,280.22 761.5,280.70 761.0,281.04 760.5,280.87 760.0,280.70 759.5,281.21 759.0,281.60 758.5,281.60 758.0,281.12 757.5,280.93 757.0,281.19 756.5,281.19 756.0,281.23 755.5,280.68 755.0,280.71 754.5,280.62 754.0,280.43 753.5,280.12 753.0,279.88 752.5,280.27 752.0,280.93 751.5,281.13 751.0,280.96 750.5,281.19 750.0,281.70 749.5,282.12 749.0,281.95 748.5,281.85 748.0,281.87 747.5,282.35 747.0,282.33 746.5,281.62 746.0,281.61 745.5,281.63 745.0,281.71 744.5,281.37 744.0,280.77 743.5,280.50 743.0,280.25 742.5,280.40 742.0,280.56 741.5,280.57 741.0,280.85 740.5,281.36 740.0,281.48 739.5,281.35 739.0,281.19 738.5,281.54 738.0,281.89 737.5,281.43 737.0,281.09 736.5,281.12 736.0,281.10 735.5,281.12 735.0,280.89 734.5,280.48 734.0,280.69 733.5,280.61 733.0,280.27 732.5,279.95 732.0,279.95 731.5,280.31 731.0,280.79 730.5,280.82 730.0,280.83 729.5,281.54 729.0,281.96 728.5,282.29 728.0,281.74 727.5,282.03 727.0,282.65 726.5,282.84 726.0,282.16 725.5,282.14 725.0,281.88 724.5,282.16 724.0,282.11 723.5,281.46 723.0,281.14 722.5,281.02 722.0,280.99 721.5,280.78 721.0,280.94 720.5,281.45 720.0,281.93 719.5,282.58 719.0,282.25 718.5,282.10 718.0,282.48 717.5,282.75 717.0,283.19 716.5,282.39 716.0,282.22 715.5,282.35 715.0,282.69 714.5,282.19 714.0,281.44 713.5,281.61 713.0,281.32 712.5,281.15 712.0,280.44 711.5,280.07 711.0,280.40 710.5,280.56 710.0,280.94 709.5,280.92 709.0,280.89 708.5,281.32 708.0,281.56 707.5,281.37 707.0,281.14 706.5,281.27 706.0,281.38 705.5,281.41 705.0,280.91 704.5,280.76 704.0,280.97 703.5,280.78 703.0,280.78 702.5,280.38 702.0,280.28 701.5,280.15 701.0,279.89 700.5,279.72 700.0,279.79 699.5,280.32 699.0,280.72 698.5,280.74 698.0,280.66 697.5,280.88 697.0,281.06 696.5,281.21 696.0,281.25 695.5,280.73 695.0,281.08 694.5,281.40 694.0,281.56 693.5,281.28 693.0,280.94 692.5,281.39 692.0,281.17 691.5,281.10 691.0,280.49 690.5,280.49 690.0,280.88 689.5,281.03 689.0,281.38 688.5,281.68 688.0,282.45 687.5,282.98 687.0,283.12 686.5,282.79 686.0,283.09 685.5,283.78 685.0,283.82 684.5,283.62 684.0,282.75 683.5,283.57 683.0,283.92 682.5,283.38 682.0,282.49 681.5,282.28 681.0,282.47 680.5,281.78 680.0,281.59 679.5,281.25 679.0,281.77 678.5,282.74 678.0,282.38 677.5,284.25 677.0,284.17 676.5,282.24 676.0,284.06 675.5,283.93 675.0,282.39 674.5,284.61 674.0,284.60 673.5,282.72 673.0,284.40 672.5,284.23 672.0,283.17 671.5,284.73 671.0,284.63 670.5,283.09 670.0,284.99 669.5,284.83 669.0,283.02 668.5,284.78 668.0,284.89 667.5,283.13 667.0,285.76 666.5,285.39 666.0,283.19 665.5,285.11 665.0,285.79 664.5,283.94 664.0,285.46 663.5,285.57 663.0,283.77 662.5,285.50 662.0,286.30 661.5,283.61 661.0,286.00 660.5,286.64 660.0,283.88 659.5,286.03 659.0,286.38 658.5,283.87 658.0,286.78 657.5,286.33 657.0,284.06 656.5,287.08 656.0,286.97 655.5,284.38 655.0,287.28 654.5,286.50 654.0,285.02 653.5,287.29 653.0,287.70 652.5,287.82 652.0,286.76 651.5,286.44 651.0,287.27 650.5,286.46 650.0,285.20 649.5,284.23 649.0,283.76 648.5,283.57 648.0,283.62 647.5,284.02 647.0,283.89 646.5,285.66 646.0,286.15 645.5,286.04 645.0,285.36 644.5,286.33 644.0,286.82 643.5,287.61 643.0,286.67 642.5,285.53 642.0,287.04 641.5,287.27 641.0,285.76 640.5,284.58 640.0,284.51 639.5,284.40 639.0,284.02 638.5,283.36 638.0,281.78 637.5,282.78 637.0,283.53 636.5,284.07 636.0,284.12 635.5,284.15 635.0,284.79 634.5,285.70 634.0,285.16 633.5,285.29 633.0,285.60 632.5,285.94 632.0,286.17 631.5,285.22 631.0,284.07 630.5,284.47 630.0,284.60 629.5,284.11 629.0,283.08 628.5,282.36 628.0,282.39 627.5,281.71 627.0,281.89 626.5,282.00 626.0,282.75 625.5,283.19 625.0,283.80 624.5,283.58 624.0,283.51 623.5,284.35 623.0,284.28 622.5,284.57 622.0,283.95 621.5,284.08 621.0,284.45 620.5,283.81 620.0,283.22 619.5,282.65 619.0,282.86 618.5,282.68 618.0,281.95 617.5,281.27 617.0,281.00 616.5,281.28 616.0,281.60 615.5,281.60 615.0,281.67 614.5,282.00 614.0,282.49 613.5,282.97 613.0,282.58 612.5,282.25 612.0,282.72 611.5,283.07 611.0,282.79 610.5,282.36 610.0,282.27 609.5,282.37 609.0,282.05 608.5,281.67 608.0,280.78 607.5,280.78 607.0,280.81 606.5,280.45 606.0,280.17 605.5,280.47 605.0,280.96 604.5,281.28 604.0,281.03 603.5,281.01 603.0,281.22 602.5,281.74 602.0,281.41 601.5,281.20 601.0,281.12 600.5,281.41 600.0,281.38 599.5,281.17 599.0,280.62 598.5,280.72 598.0,280.65 597.5,280.58 597.0,280.33 596.5,279.97 596.0,279.81 595.5,279.91 595.0,280.04 594.5,280.20 594.0,280.44 593.5,280.71 593.0,281.03 592.5,281.08 592.0,280.96 591.5,281.04 591.0,281.59 590.5,281.24 590.0,281.24 589.5,281.01 589.0,281.17 588.5,281.24 588.0,280.98 587.5,280.38 587.0,280.44 586.5,280.54 586.0,280.07 585.5,279.82 585.0,279.67 584.5,280.07 584.0,280.53 583.5,280.76 583.0,280.64 582.5,280.87 582.0,281.02 581.5,281.49 581.0,281.36 580.5,281.14 580.0,281.45 579.5,281.31 579.0,281.55 578.5,281.11 578.0,280.87 577.5,280.83 577.0,280.76 576.5,280.62 576.0,280.15 575.5,280.04 575.0,279.89 574.5,280.07 574.0,280.27 573.5,280.11 573.0,280.53 572.5,281.10 572.0,280.98 571.5,280.82 571.0,280.94 570.5,281.36 570.0,281.77 569.5,281.43 569.0,281.02 568.5,281.19 568.0,281.30 567.5,281.29 567.0,281.04 566.5,280.64 566.0,280.58 565.5,280.43 565.0,280.26 564.5,279.75 564.0,279.86 563.5,280.23 563.0,280.48 562.5,280.54 562.0,280.78 561.5,281.18 561.0,281.42 560.5,281.30 560.0,281.43 559.5,281.35 559.0,281.60 558.5,281.82 558.0,281.35 557.5,280.97 557.0,281.03 556.5,281.36 556.0,281.04 555.5,280.71 555.0,280.21 554.5,280.32 554.0,280.01 553.5,280.14 553.0,280.08 552.5,280.48 552.0,280.82 551.5,281.03 551.0,281.23 550.5,280.91 550.0,281.33 549.5,281.58 549.0,281.63 548.5,281.37 548.0,281.33 547.5,281.70 547.0,281.80 546.5,281.22 546.0,280.83 545.5,280.91 545.0,280.76 544.5,280.55 544.0,280.13 543.5,279.87 543.0,280.00 542.5,280.40 542.0,280.50 541.5,280.47 541.0,281.07 540.5,281.23 540.0,281.41 539.5,281.63 539.0,281.13 538.5,281.79 538.0,281.83 537.5,281.60 537.0,281.37 536.5,281.32 536.0,281.31 535.5,281.34 535.0,280.91 534.5,280.39 534.0,280.56 533.5,280.33 533.0,280.05 532.5,280.13 532.0,280.21 531.5,280.59 531.0,281.15 530.5,281.01 530.0,280.97 529.5,281.44 529.0,281.88 528.5,281.99 528.0,281.71 527.5,281.47 527.0,281.58 526.5,281.63 526.0,281.57 525.5,281.27 525.0,281.16 524.5,281.20 524.0,280.97 523.5,280.55 523.0,280.23 522.5,280.04 522.0,280.20 521.5,280.66 521.0,280.58 520.5,280.58 520.0,281.11 519.5,281.52 519.0,281.76 518.5,281.53 518.0,281.61 517.5,281.90 517.0,281.80 516.5,281.80 516.0,281.38 515.5,281.77 515.0,281.73 514.5,281.52 514.0,280.97 513.5,280.77 513.0,280.85 512.5,280.58 512.0,280.13 511.5,280.04 511.0,280.51 510.5,281.03 510.0,281.07 509.5,281.22 509.0,281.18 508.5,281.59 508.0,282.00 507.5,281.91 507.0,281.63 506.5,281.66 506.0,282.01 505.5,282.06 505.0,281.84 504.5,281.17 504.0,281.56 503.5,281.29 503.0,280.87 502.5,280.61 502.0,280.22 501.5,280.24 501.0,280.46 500.5,280.66 500.0,280.58 499.5,280.85 499.0,281.46 498.5,281.41 498.0,281.50 497.5,281.32 497.0,282.06 496.5,282.21 496.0,281.88 495.5,281.45 495.0,281.86 494.5,281.88 494.0,281.75 493.5,281.28 493.0,281.06 492.5,280.89 492.0,280.86 491.5,280.55 491.0,280.18 490.5,280.19 490.0,280.66 489.5,280.99 489.0,280.99 488.5,281.13 488.0,281.35 487.5,281.67 487.0,282.22 486.5,281.75 486.0,281.67 485.5,282.01 485.0,282.49 484.5,281.90 484.0,281.73 483.5,281.54 483.0,281.74 482.5,281.62 482.0,281.02 481.5,280.52 481.0,280.63 480.5,280.38 480.0,280.26 479.5,280.56 479.0,280.88 478.5,281.23 478.0,281.72 477.5,281.66 477.0,281.44 476.5,281.72 476.0,282.22 475.5,282.37 475.0,282.00 474.5,281.65 474.0,282.11 473.5,282.06 473.0,281.77 472.5,281.47 472.0,281.30 471.5,281.38 471.0,280.86 470.5,280.66 470.0,280.17 469.5,280.36 469.0,280.92 468.5,281.08 468.0,280.78 467.5,281.62 467.0,281.55 466.5,280.78 466.0,281.67 465.5,281.92 465.0,280.68 464.5,281.64 464.0,281.86 463.5,280.80 463.0,281.72 462.5,281.58 462.0,280.93 461.5,281.97 461.0,281.62 460.5,280.72 460.0,281.93 459.5,281.92 459.0,281.18 458.5,282.58 458.0,282.71 457.5,281.67 457.0,283.24 456.5,283.52 456.0,282.23 455.5,283.83 455.0,284.49 454.5,282.70 454.0,285.19 453.5,284.81 453.0,283.87 452.5,285.43 452.0,286.07 451.5,283.92 451.0,286.33 450.5,287.13 450.0,285.01 449.5,287.37 449.0,287.42 448.5,285.08 448.0,287.91 447.5,288.58 447.0,285.88 446.5,289.05 446.0,288.58 445.5,286.44 445.0,290.07 444.5,290.61 444.0,287.58 443.5,290.11 443.0,290.42 442.5,288.67 442.0,287.71 441.5,284.85 441.0,282.75 440.5,280.38 440.0,278.65 439.5,278.65 439.0,278.65 438.5,278.65 438.0,278.65 437.5,278.65 437.0,278.66 436.5,278.68 436.0,278.69 435.5,278.72 435.0,278.78 434.5,278.83 434.0,278.87 433.5,278.83 433.0,278.83 432.5,278.87 432.0,278.90 431.5,278.85 431.0,278.72 430.5,278.77 430.0,278.78 429.5,278.71 429.0,278.66 428.5,278.65 428.0,278.65 427.5,278.65 427.0,278.65 426.5,278.65 426.0,278.72 425.5,278.83 425.0,278.88 424.5,278.84 424.0,278.81 423.5,278.91 423.0,278.98 422.5,278.91 422.0,278.84 421.5,278.88 421.0,278.91 420.5,278.89 420.0,278.86 419.5,278.73 419.0,278.74 418.5,278.74 418.0,278.70 417.5,278.65 417.0,278.65 416.5,278.66 416.0,278.73 415.5,278.78 415.0,278.82 414.5,278.91 414.0,278.93 413.5,278.96 413.0,278.93 412.5,278.89 412.0,279.00 411.5,279.07 411.0,278.97 410.5,278.95 410.0,278.87 409.5,278.92 409.0,278.87 408.5,278.85 408.0,278.68 407.5,278.73 407.0,278.66 406.5,278.68 406.0,278.69 405.5,278.76 405.0,278.83 404.5,278.99 404.0,278.92 403.5,278.94 403.0,279.06 402.5,279.13 402.0,279.07 401.5,279.08 401.0,279.05 400.5,279.07 400.0,279.05 399.5,279.08 399.0,278.91 398.5,278.85 398.0,278.90 397.5,278.88 397.0,278.75 396.5,278.65 396.0,278.69 395.5,278.83 395.0,278.87 394.5,278.88 394.0,278.96 393.5,279.07 393.0,279.16 392.5,279.16 392.0,279.01 391.5,279.13 391.0,279.20 390.5,279.21 390.0,279.12 389.5,279.02 389.0,279.13 388.5,279.14 388.0,279.05 387.5,278.88 387.0,278.81 386.5,278.79 386.0,278.78 385.5,278.77 385.0,278.77 384.5,278.92 384.0,278.97 383.5,279.32 383.0,279.57 382.5,279.82 382.0,280.24 381.5,280.39 381.0,280.59 380.5,280.35 380.0,280.26 379.5,280.54 379.0,280.57 378.5,280.19 378.0,280.07 377.5,280.18 377.0,280.14 376.5,279.87 376.0,279.56 375.5,279.38 375.0,279.50 374.5,279.67 374.0,279.91 373.5,279.93 373.0,280.26 372.5,280.57 372.0,280.56 371.5,280.40 371.0,280.57 370.5,280.80 370.0,280.97 369.5,280.86 369.0,280.40 368.5,280.59 368.0,280.74 367.5,280.52 367.0,280.33 366.5,279.96 366.0,280.03 365.5,279.95 365.0,279.73 364.5,279.52 364.0,279.72 363.5,280.13 363.0,280.38 362.5,280.38 362.0,280.20 361.5,280.55 361.0,280.85 360.5,281.03 360.0,280.97 359.5,280.68 359.0,281.15 358.5,281.01 358.0,280.79 357.5,280.49 357.0,280.51 356.5,280.56 356.0,280.47 355.5,280.19 355.0,279.71 354.5,279.81 354.0,279.86 353.5,279.99 353.0,280.11 352.5,280.34 352.0,280.79 351.5,280.98 351.0,280.87 350.5,280.91 350.0,281.04 349.5,281.36 349.0,281.37 348.5,281.13 348.0,281.03 347.5,281.14 347.0,281.18 346.5,280.92 346.0,280.51 345.5,280.38 345.0,280.25 344.5,280.22 344.0,279.72 343.5,279.72 343.0,280.20 342.5,280.27 342.0,280.57 341.5,280.59 341.0,280.67 340.5,281.24 340.0,281.43 339.5,281.08 339.0,280.94 338.5,281.07 338.0,281.17 337.5,281.22 337.0,281.07 336.5,280.77 336.0,280.84 335.5,280.85 335.0,280.48 334.5,280.06 334.0,280.01 333.5,279.84 333.0,279.98 332.5,280.11 332.0,280.18 331.5,280.65 331.0,280.76 330.5,280.96 330.0,280.93 329.5,280.78 329.0,281.32 328.5,281.35 328.0,281.14 327.5,280.86 327.0,281.22 326.5,281.27 326.0,281.20 325.5,280.83 325.0,280.36 324.5,280.52 324.0,280.44 323.5,280.13 323.0,279.69 322.5,279.90 322.0,280.12 321.5,280.29 321.0,280.31 320.5,280.50 320.0,280.85 319.5,281.17 319.0,281.33 318.5,281.01 318.0,281.04 317.5,281.36 317.0,281.43 316.5,281.31 316.0,280.79 315.5,280.98 315.0,280.98 314.5,280.71 314.0,280.45 313.5,280.19 313.0,280.15 312.5,279.83 312.0,279.80 311.5,279.84 311.0,280.18 310.5,280.65 310.0,280.91 309.5,280.80 309.0,280.67 308.5,281.07 308.0,281.34 307.5,281.20 307.0,281.01 306.5,280.93 306.0,281.08 305.5,281.27 305.0,280.91 304.5,280.54 304.0,280.65 303.5,280.54 303.0,280.35 302.5,279.98 302.0,279.66 301.5,279.85 301.0,280.12 300.5,280.25 300.0,280.41 299.5,280.50 299.0,280.82 298.5,281.08 298.0,281.16 297.5,280.78 297.0,281.42 296.5,281.34 296.0,281.20 295.5,281.11 295.0,281.21 294.5,281.07 294.0,281.13 293.5,280.61 293.0,280.30 292.5,280.37 292.0,280.18 291.5,280.00 291.0,279.91 290.5,280.02 290.0,280.40 289.5,280.83 289.0,281.08 288.5,280.89 288.0,281.10 287.5,281.55 287.0,281.81 286.5,281.53 286.0,281.24 285.5,281.47 285.0,281.79 284.5,281.49 284.0,281.16 283.5,281.18 283.0,281.10 282.5,280.79 282.0,280.60 281.5,280.01 281.0,280.10 280.5,280.23 280.0,280.61 279.5,280.59 279.0,280.54 278.5,281.12 278.0,281.38 277.5,281.71 277.0,281.26 276.5,281.81 276.0,281.99 275.5,282.22 275.0,281.58 274.5,281.28 274.0,281.71 273.5,281.82 273.0,281.31 272.5,281.11 272.0,280.93 271.5,280.74 271.0,280.47 270.5,280.17 270.0,279.95 269.5,280.66 269.0,280.98 268.5,281.40 268.0,281.05 267.5,281.40 267.0,282.03 266.5,281.98 266.0,281.93 265.5,281.58 265.0,282.10 264.5,282.27 264.0,282.22 263.5,281.83 263.0,281.55 262.5,281.54 262.0,281.67 261.5,281.94 261.0,280.71 260.5,281.76 260.0,281.63 259.5,280.85 259.0,282.15 258.5,282.28 258.0,281.10 257.5,282.58 257.0,282.55 256.5,281.56 256.0,282.60 255.5,282.92 255.0,281.68 254.5,283.29 254.0,283.16 253.5,281.77 253.0,283.41 252.5,283.74 252.0,282.12 251.5,283.69 251.0,283.79 250.5,282.46 250.0,283.83 249.5,283.71 249.0,282.46 248.5,284.27 248.0,284.04 247.5,282.98 247.0,284.54 246.5,284.74 246.0,283.20 245.5,284.74 245.0,285.33 244.5,283.47 244.0,285.31 243.5,285.31 243.0,283.76 242.5,285.97 242.0,285.91 241.5,283.66 241.0,286.28 240.5,286.17 240.0,283.67 239.5,286.27 239.0,286.11 238.5,284.05 238.0,286.14 237.5,286.93 237.0,284.21 236.5,286.97 236.0,286.61 235.5,284.73 235.0,287.68 234.5,288.69 234.0,288.25 233.5,287.82 233.0,287.67 232.5,287.78 232.0,288.05 231.5,287.31 231.0,285.94 230.5,285.75 230.0,285.68 229.5,284.41 229.0,283.72 228.5,282.41 228.0,283.12 227.5,283.70 227.0,284.07 226.5,284.38 226.0,284.68 225.5,285.20 225.0,285.88 224.5,285.58 224.0,285.42 223.5,286.05 223.0,286.49 222.5,285.96 222.0,284.83 221.5,285.04 221.0,284.81 220.5,284.76 220.0,283.91 219.5,283.14 219.0,282.86 218.5,282.36 218.0,281.84 217.5,281.52 217.0,281.62 216.5,282.35 216.0,283.33 215.5,283.13 215.0,283.16 214.5,283.70 214.0,283.95 213.5,283.83 213.0,284.06 212.5,283.41 212.0,283.88 211.5,283.86 211.0,283.52 210.5,282.77 210.0,282.42 209.5,282.22 209.0,281.79 208.5,281.47 208.0,280.71 207.5,280.66 207.0,280.65 206.5,281.19 206.0,281.02 205.5,281.15 205.0,281.63 204.5,281.60 204.0,281.64 203.5,281.34 203.0,281.39 202.5,282.03 202.0,281.80 201.5,281.45 201.0,281.06 200.5,280.95 200.0,280.96 199.5,281.04 199.0,280.66 198.5,280.25 198.0,280.38 197.5,280.02 197.0,279.91 196.5,279.68 196.0,279.95 195.5,280.37 195.0,280.52 194.5,280.59 194.0,280.55 193.5,281.07 193.0,281.38 192.5,281.29 192.0,281.14 191.5,280.90 191.0,281.47 190.5,281.13 190.0,280.91 189.5,280.62 189.0,280.71 188.5,280.83 188.0,280.61 187.5,280.21 187.0,279.81 186.5,279.79 186.0,280.00 185.5,280.09 185.0,280.03 184.5,280.33 184.0,280.87 183.5,280.90 183.0,281.06 182.5,280.92 182.0,281.36 181.5,281.31 181.0,281.43 180.5,281.04 180.0,281.04 179.5,281.28 179.0,281.15 178.5,280.88 178.0,280.33 177.5,280.52 177.0,280.29 176.5,280.03 176.0,279.76 175.5,279.71 175.0,280.23 174.5,280.27 174.0,280.48 173.5,280.53 173.0,280.61 172.5,281.10 172.0,281.09 171.5,281.24 171.0,280.84 170.5,281.29 170.0,281.48 169.5,281.34 169.0,280.93 168.5,280.78 168.0,280.95 167.5,280.85 167.0,280.51 166.5,280.07 166.0,280.09 165.5,279.87 165.0,279.81 164.5,280.00 164.0,280.05 163.5,280.69 163.0,280.79 162.5,280.86 162.0,280.74 161.5,281.14 161.0,281.21 160.5,281.24 160.0,281.22 159.5,280.98 159.0,281.13 158.5,281.21 158.0,280.85 157.5,280.60 157.0,280.46 156.5,280.53 156.0,280.48 155.5,280.13 155.0,279.67 154.5,279.90 154.0,280.12 153.5,280.39 153.0,280.50 152.5,280.51 152.0,281.00 151.5,281.20 151.0,281.16 150.5,280.93 150.0,281.01 149.5,281.40 149.0,281.16 148.5,280.97 148.0,280.87 147.5,280.90 147.0,280.92 146.5,280.58 146.0,280.42 145.5,280.09 145.0,280.07 144.5,279.86 144.0,279.94 143.5,279.91 143.0,280.36 142.5,280.50 142.0,280.91 141.5,280.77 141.0,280.93 140.5,281.24 140.0,281.34 139.5,281.34 139.0,280.81 138.5,281.14 138.0,281.19 137.5,281.23 137.0,281.03 136.5,280.58 136.0,280.72 135.5,280.68 135.0,280.25 134.5,279.97 134.0,279.79 133.5,279.82 133.0,280.21 132.5,280.40 132.0,280.26 131.5,280.56 131.0,280.97 130.5,281.17 130.0,280.95 129.5,280.95 129.0,281.09 128.5,281.44 128.0,281.21 127.5,280.81 127.0,280.85 126.5,280.91 126.0,280.90 125.5,280.44 125.0,280.19 124.5,280.29 124.0,280.23 123.5,280.03 123.0,279.80 122.5,280.23 122.0,280.56 121.5,280.90 121.0,281.23 120.5,281.20 120.0,281.78 119.5,281.80 119.0,281.98 118.5,281.88 118.0,281.95 117.5,282.18 117.0,282.56 116.5,281.84 116.0,281.29 115.5,281.46 115.0,281.62 114.5,281.32 114.0,280.78 113.5,280.16 113.0,280.11 112.5,280.23 112.0,280.61 111.5,280.61 111.0,280.78 110.5,281.43 110.0,281.46 109.5,281.46 109.0,281.30 108.5,281.63 108.0,281.79 107.5,282.04 107.0,282.12 106.5,282.24 106.0,282.74 105.5,283.02 105.0,282.54 104.5,282.50 104.0,282.15 103.5,282.46 103.0,282.12 102.5,281.43 102.0,281.69 101.5,282.69 101.0,283.53 100.5,284.63 100.0,284.71 99.5,285.09 99.0,285.54 98.5,286.23 98.0,285.83 97.5,285.71 97.0,285.77 96.5,286.11 96.0,286.68 95.5,285.48 95.0,285.05 94.5,285.09 94.0,284.82 93.5,284.18 93.0,283.25 92.5,283.12 92.0,282.87 91.5,282.27 91.0,282.51 90.5,282.49 90.0,282.88 89.5,282.87 89.0,282.65 88.5,282.15 88.0,281.72 87.5,282.06 87.0,282.42 86.5,282.27 86.0,281.63 85.5,281.72 85.0,282.00 84.5,281.47 84.0,281.22 83.5,280.73 83.0,280.63 82.5,280.70 82.0,280.21 81.5,279.79 81.0,279.80 80.5,280.24 80.0,280.35 79.5,280.52 79.0,280.73 78.5,281.00 78.0,281.72 77.5,281.46 77.0,281.33 76.5,281.69 76.0,282.39 75.5,282.51 75.0,282.31 74.5,281.64 74.0,282.16 73.5,282.30 73.0,282.16 72.5,281.62 72.0,281.48 71.5,281.36 71.0,281.21 70.5,281.27 70.0,281.15 69.5,282.17 69.0,282.66 68.5,283.61 68.0,283.24 67.5,283.35 67.0,284.38 66.5,285.00 66.0,284.92 65.5,284.70 65.0,284.49 64.5,285.52 64.0,285.17 63.5,284.40 63.0,283.55 62.5,284.39 62.0,284.31 61.5,283.73 61.0,282.68 60.5,281.86 60.0,282.54 59.5,283.45 59.0,283.67 58.5,283.76 58.0,284.40 57.5,286.02 57.0,286.08 56.5,286.01 56.0,285.89 55.5,287.07 55.0,286.68 54.5,286.90 54.0,285.80 53.5,286.04 53.0,285.59 52.5,285.53 52.0,284.96 51.5,283.16 51.0,283.41 50.5,283.15 50.0,282.08 49.5,282.01 49.0,282.53 48.5,283.22 48.0,283.97 47.5,284.04 47.0,283.67 46.5,284.12 46.0,285.07 45.5,285.44 45.0,284.79 44.5,284.31 44.0,284.69 43.5,285.07 43.0,284.33 42.5,283.87 42.0,283.14 41.5,283.44 41.0,283.39 40.5,282.17 40.0,283.43 39.5,284.06 39.0,282.64 38.5,284.90 38.0,285.31 37.5,283.82 37.0,285.83 36.5,287.26 36.0,284.97 35.5,287.21 35.0,288.34 34.5,285.62 34.0,290.05 33.5,290.15 33.0,287.12" fill="#eeaa82" opacity="0.9"/><polygon points="33.0,273.44 33.5,272.19 34.0,272.38 34.5,274.46 35.0,272.87 35.5,273.23 36.0,274.93 36.5,274.06 37.0,273.93 37.5,275.57 38.0,274.39 38.5,274.94 39.0,276.04 39.5,275.29 40.0,275.59 40.5,276.28 41.0,275.51 41.5,275.49 42.0,275.58 42.5,275.32 43.0,275.22 43.5,274.76 44.0,274.74 44.5,275.08 45.0,275.02 45.5,274.56 46.0,274.80 46.5,275.32 47.0,275.33 47.5,275.42 48.0,275.30 48.5,275.71 49.0,276.11 49.5,276.26 50.0,276.14 50.5,275.93 51.0,275.47 51.5,275.65 52.0,275.02 52.5,274.43 53.0,274.20 53.5,274.49 54.0,274.34 54.5,274.00 55.0,273.41 55.5,273.79 56.0,274.29 56.5,274.15 57.0,274.19 57.5,274.68 58.0,274.95 58.5,275.41 59.0,275.46 59.5,275.60 60.0,275.99 60.5,276.42 61.0,276.08 61.5,275.41 62.0,275.15 62.5,275.33 63.0,275.31 63.5,275.10 64.0,274.48 64.5,274.78 65.0,274.94 65.5,275.10 66.0,274.89 66.5,274.69 67.0,275.17 67.5,275.74 68.0,275.60 68.5,275.75 69.0,275.88 69.5,276.27 70.0,276.73 70.5,276.77 71.0,276.80 71.5,276.59 72.0,276.71 72.5,276.43 73.0,276.33 73.5,276.19 74.0,276.30 74.5,276.53 75.0,276.12 75.5,276.19 76.0,276.26 76.5,276.38 77.0,276.59 77.5,276.38 78.0,276.47 78.5,276.73 79.0,276.95 79.5,277.01 80.0,277.12 80.5,277.24 81.0,277.37 81.5,277.46 82.0,277.22 82.5,277.04 83.0,276.84 83.5,276.96 84.0,276.65 84.5,276.54 85.0,276.34 85.5,276.31 86.0,276.44 86.5,276.29 87.0,276.22 87.5,276.29 88.0,276.28 88.5,276.18 89.0,275.84 89.5,275.85 90.0,275.78 90.5,276.04 91.0,276.16 91.5,276.15 92.0,276.09 92.5,275.75 93.0,275.76 93.5,275.05 94.0,274.74 94.5,274.84 95.0,274.63 95.5,274.34 96.0,274.22 96.5,273.81 97.0,274.12 97.5,274.80 98.0,274.49 98.5,273.89 99.0,274.56 99.5,274.97 100.0,275.26 100.5,275.22 101.0,275.32 101.5,276.02 102.0,276.58 102.5,276.58 103.0,276.06 103.5,276.03 104.0,276.16 104.5,276.06 105.0,275.78 105.5,275.91 106.0,275.80 106.5,276.17 107.0,276.31 107.5,276.27 108.0,276.45 108.5,276.37 109.0,276.65 109.5,276.46 110.0,276.57 110.5,276.69 111.0,276.81 111.5,277.03 112.0,277.00 112.5,277.15 113.0,277.23 113.5,277.16 114.0,277.00 114.5,276.74 115.0,276.57 115.5,276.64 116.0,276.51 116.5,276.19 117.0,276.07 117.5,276.08 118.0,276.42 118.5,276.21 119.0,276.12 119.5,276.18 120.0,276.54 120.5,276.72 121.0,276.67 121.5,276.76 122.0,276.97 122.5,277.18 123.0,277.38 123.5,277.27 124.0,277.18 124.5,277.10 125.0,277.20 125.5,277.04 126.0,276.81 126.5,276.75 127.0,276.84 127.5,276.92 128.0,276.61 128.5,276.62 129.0,276.71 129.5,276.82 130.0,276.79 130.5,276.72 131.0,276.86 131.5,276.98 132.0,277.19 132.5,277.10 133.0,277.24 133.5,277.39 134.0,277.44 134.5,277.38 135.0,277.10 135.5,276.98 136.0,276.99 136.5,276.99 137.0,276.79 137.5,276.61 138.0,276.72 138.5,276.79 139.0,276.77 139.5,276.64 140.0,276.66 140.5,276.79 141.0,276.99 141.5,276.89 142.0,276.95 142.5,276.92 143.0,277.13 143.5,277.35 144.0,277.38 144.5,277.31 145.0,277.22 145.5,277.27 146.0,277.20 146.5,276.87 147.0,276.81 147.5,276.88 148.0,276.95 148.5,276.85 149.0,276.64 149.5,276.59 150.0,276.68 150.5,276.88 151.0,276.78 151.5,276.78 152.0,276.80 152.5,276.98 153.0,277.10 153.5,277.08 154.0,277.23 154.5,277.42 155.0,277.52 155.5,277.28 156.0,277.09 156.5,277.09 157.0,277.03 157.5,276.98 158.0,276.78 158.5,276.70 159.0,276.75 159.5,276.79 160.0,276.72 160.5,276.65 161.0,276.75 161.5,276.78 162.0,276.88 162.5,276.78 163.0,276.84 163.5,276.99 164.0,277.26 164.5,277.29 165.0,277.36 165.5,277.37 166.0,277.31 166.5,277.28 167.0,277.02 167.5,276.92 168.0,276.83 168.5,276.87 169.0,276.84 169.5,276.60 170.0,276.54 170.5,276.62 171.0,276.86 171.5,276.71 172.0,276.68 172.5,276.69 173.0,276.93 173.5,277.07 174.0,277.05 174.5,277.07 175.0,277.24 175.5,277.42 176.0,277.41 176.5,277.29 177.0,277.07 177.5,277.15 178.0,277.11 178.5,276.90 179.0,276.81 179.5,276.68 180.0,276.84 180.5,276.84 181.0,276.71 181.5,276.53 182.0,276.76 182.5,276.86 183.0,276.92 183.5,276.79 184.0,276.92 184.5,277.05 185.0,277.23 185.5,277.19 186.0,277.28 186.5,277.37 187.0,277.35 187.5,277.27 188.0,277.05 188.5,276.96 189.0,276.88 189.5,277.04 190.0,276.77 190.5,276.71 191.0,276.63 191.5,276.82 192.0,276.75 192.5,276.58 193.0,276.71 193.5,276.87 194.0,277.07 194.5,276.99 195.0,277.05 195.5,277.06 196.0,277.28 196.5,277.42 197.0,277.38 197.5,277.17 198.0,277.12 198.5,277.18 199.0,277.02 199.5,276.86 200.0,276.71 200.5,276.66 201.0,276.86 201.5,276.64 202.0,276.48 202.5,276.30 203.0,276.61 203.5,276.46 204.0,276.44 204.5,276.48 205.0,276.51 205.5,276.75 206.0,276.74 206.5,276.77 207.0,276.91 207.5,277.10 208.0,276.91 208.5,276.56 209.0,276.29 209.5,276.20 210.0,276.27 210.5,275.98 211.0,275.55 211.5,275.38 212.0,275.61 212.5,275.84 213.0,275.27 213.5,275.40 214.0,275.20 214.5,275.65 215.0,275.87 215.5,275.63 216.0,275.73 216.5,275.88 217.0,276.39 217.5,276.38 218.0,276.46 218.5,276.01 219.0,276.06 219.5,275.74 220.0,275.39 220.5,275.05 221.0,274.90 221.5,274.85 222.0,274.67 222.5,274.22 223.0,273.92 223.5,274.21 224.0,274.75 224.5,274.25 225.0,274.47 225.5,274.50 226.0,275.05 226.5,275.40 227.0,275.13 227.5,275.47 228.0,275.87 228.5,276.10 229.0,275.70 229.5,275.09 230.0,274.87 230.5,274.62 231.0,274.35 231.5,273.70 232.0,273.20 232.5,273.65 233.0,273.70 233.5,273.34 234.0,272.92 234.5,272.76 235.0,273.50 235.5,274.75 236.0,273.98 236.5,273.75 237.0,274.91 237.5,274.01 238.0,274.25 238.5,275.17 239.0,274.33 239.5,274.11 240.0,275.46 240.5,274.11 241.0,274.50 241.5,275.59 242.0,274.28 242.5,274.60 243.0,275.51 243.5,274.43 244.0,274.58 244.5,275.52 245.0,274.67 245.5,274.61 246.0,275.87 246.5,274.82 247.0,274.99 247.5,275.78 248.0,275.06 248.5,275.01 249.0,276.10 249.5,275.19 250.0,275.45 250.5,276.03 251.0,275.25 251.5,275.45 252.0,276.25 252.5,275.48 253.0,275.67 253.5,276.42 254.0,275.74 254.5,275.78 255.0,276.56 255.5,275.76 256.0,275.94 256.5,276.63 257.0,275.96 257.5,276.02 258.0,276.66 258.5,276.24 259.0,276.32 259.5,276.85 260.0,276.41 260.5,276.43 261.0,276.97 261.5,276.47 262.0,276.40 262.5,276.37 263.0,276.57 263.5,276.33 264.0,276.12 264.5,276.11 265.0,276.19 265.5,276.52 266.0,276.15 266.5,276.37 267.0,276.39 267.5,276.67 268.0,276.63 268.5,276.67 269.0,276.81 269.5,277.06 270.0,277.23 270.5,277.20 271.0,276.98 271.5,276.93 272.0,276.89 272.5,276.73 273.0,276.52 273.5,276.45 274.0,276.49 274.5,276.50 275.0,276.34 275.5,276.32 276.0,276.38 276.5,276.50 277.0,276.53 277.5,276.53 278.0,276.54 278.5,276.66 279.0,276.95 279.5,276.95 280.0,277.00 280.5,277.22 281.0,277.29 281.5,277.22 282.0,277.06 282.5,276.86 283.0,276.82 283.5,276.78 284.0,276.73 284.5,276.61 285.0,276.50 285.5,276.55 286.0,276.70 286.5,276.59 287.0,276.55 287.5,276.49 288.0,276.80 288.5,276.85 289.0,276.77 289.5,276.91 290.0,277.07 290.5,277.31 291.0,277.39 291.5,277.29 292.0,277.15 292.5,277.17 293.0,277.09 293.5,277.00 294.0,276.79 294.5,276.79 295.0,276.75 295.5,276.79 296.0,276.60 296.5,276.59 297.0,276.69 297.5,276.80 298.0,276.84 298.5,276.80 299.0,276.85 299.5,277.07 300.0,277.17 300.5,277.12 301.0,277.19 301.5,277.35 302.0,277.42 302.5,277.29 303.0,277.09 303.5,276.96 304.0,276.97 304.5,277.04 305.0,276.82 305.5,276.61 306.0,276.66 306.5,276.77 307.0,276.83 307.5,276.64 308.0,276.68 308.5,276.75 309.0,277.01 309.5,276.88 310.0,276.89 310.5,276.97 311.0,277.25 311.5,277.32 312.0,277.32 312.5,277.31 313.0,277.23 313.5,277.27 314.0,277.17 314.5,276.95 315.0,276.90 315.5,276.88 316.0,276.87 316.5,276.82 317.0,276.53 317.5,276.66 318.0,276.70 318.5,276.76 319.0,276.73 319.5,276.75 320.0,276.95 320.5,277.15 321.0,277.15 321.5,277.16 322.0,277.22 322.5,277.42 323.0,277.43 323.5,277.24 324.0,277.16 324.5,277.09 325.0,277.09 325.5,276.91 326.0,276.80 326.5,276.72 327.0,276.65 327.5,276.94 328.0,276.71 328.5,276.55 329.0,276.63 329.5,276.83 330.0,276.87 330.5,276.90 331.0,276.89 331.5,277.02 332.0,277.31 332.5,277.30 333.0,277.37 333.5,277.41 334.0,277.26 334.5,277.23 335.0,277.06 335.5,276.87 336.0,276.92 336.5,276.92 337.0,276.75 337.5,276.73 338.0,276.70 338.5,276.78 339.0,276.81 339.5,276.66 340.0,276.75 340.5,276.70 341.0,277.02 341.5,277.02 342.0,276.96 342.5,277.11 343.0,277.22 343.5,277.42 344.0,277.43 344.5,277.21 345.0,277.07 345.5,277.10 346.0,277.10 346.5,276.81 347.0,276.71 347.5,276.71 348.0,276.88 348.5,276.83 349.0,276.65 349.5,276.59 350.0,276.64 350.5,277.00 351.0,276.86 351.5,276.84 352.0,276.86 352.5,277.16 353.0,277.25 353.5,277.27 354.0,277.37 354.5,277.45 355.0,277.42 355.5,277.24 356.0,277.04 356.5,276.96 357.0,277.06 357.5,277.04 358.0,276.85 358.5,276.82 359.0,276.83 359.5,276.90 360.0,276.89 360.5,276.78 361.0,276.84 361.5,276.94 362.0,277.10 362.5,277.06 363.0,277.10 363.5,277.29 364.0,277.46 364.5,277.53 365.0,277.46 365.5,277.38 366.0,277.34 366.5,277.34 367.0,277.23 367.5,277.08 368.0,277.01 368.5,277.01 369.0,277.03 369.5,277.00 370.0,276.90 370.5,276.85 371.0,277.12 371.5,277.04 372.0,277.06 372.5,277.13 373.0,277.18 373.5,277.39 374.0,277.41 374.5,277.44 375.0,277.56 375.5,277.58 376.0,277.53 376.5,277.41 377.0,277.26 377.5,277.25 378.0,277.24 378.5,277.18 379.0,277.12 379.5,277.09 380.0,277.11 380.5,277.21 381.0,277.06 381.5,276.98 382.0,277.09 382.5,277.39 383.0,277.49 383.5,277.66 384.0,277.80 384.5,277.86 385.0,277.91 385.5,277.94 386.0,277.92 386.5,277.90 387.0,277.87 387.5,277.88 388.0,277.77 388.5,277.76 389.0,277.74 389.5,277.78 390.0,277.72 390.5,277.67 391.0,277.67 391.5,277.74 392.0,277.78 392.5,277.74 393.0,277.76 393.5,277.77 394.0,277.85 394.5,277.85 395.0,277.88 395.5,277.92 396.0,277.96 396.5,277.97 397.0,277.92 397.5,277.87 398.0,277.85 398.5,277.84 399.0,277.85 399.5,277.80 400.0,277.77 400.5,277.77 401.0,277.79 401.5,277.75 402.0,277.77 402.5,277.74 403.0,277.81 403.5,277.83 404.0,277.81 404.5,277.84 405.0,277.88 405.5,277.93 406.0,277.96 406.5,277.97 407.0,277.96 407.5,277.94 408.0,277.94 408.5,277.90 409.0,277.83 409.5,277.84 410.0,277.83 410.5,277.85 411.0,277.77 411.5,277.77 412.0,277.77 412.5,277.82 413.0,277.84 413.5,277.80 414.0,277.83 414.5,277.89 415.0,277.91 415.5,277.89 416.0,277.90 416.5,277.94 417.0,277.97 417.5,277.97 418.0,277.97 418.5,277.95 419.0,277.93 419.5,277.93 420.0,277.88 420.5,277.86 421.0,277.83 421.5,277.84 422.0,277.86 422.5,277.85 423.0,277.81 423.5,277.82 424.0,277.88 424.5,277.90 425.0,277.87 425.5,277.88 426.0,277.94 426.5,277.97 427.0,277.97 427.5,277.97 428.0,277.97 428.5,277.97 429.0,277.97 429.5,277.93 430.0,277.92 430.5,277.93 431.0,277.92 431.5,277.89 432.0,277.84 432.5,277.86 433.0,277.89 433.5,277.90 434.0,277.89 434.5,277.87 435.0,277.92 435.5,277.95 436.0,277.93 436.5,277.96 437.0,277.96 437.5,277.97 438.0,277.97 438.5,277.97 439.0,277.97 439.5,277.97 440.0,277.97 440.5,277.13 441.0,275.90 441.5,274.52 442.0,273.87 442.5,272.97 443.0,271.78 443.5,272.10 444.0,273.98 444.5,272.10 445.0,272.78 445.5,274.18 446.0,272.56 446.5,272.90 447.0,274.18 447.5,273.20 448.0,273.16 448.5,274.64 449.0,273.77 449.5,273.85 450.0,274.95 450.5,273.74 451.0,273.75 451.5,275.29 452.0,274.47 452.5,274.40 453.0,275.39 453.5,274.87 454.0,274.99 454.5,275.71 455.0,275.27 455.5,275.27 456.0,276.24 456.5,275.57 457.0,275.58 457.5,276.46 458.0,275.75 458.5,275.98 459.0,276.72 459.5,276.38 460.0,276.36 460.5,276.93 461.0,276.31 461.5,276.33 462.0,276.95 462.5,276.48 463.0,276.45 463.5,276.88 464.0,276.34 464.5,276.50 465.0,276.85 465.5,276.31 466.0,276.48 466.5,276.94 467.0,276.48 467.5,276.48 468.0,276.93 468.5,276.72 469.0,276.88 469.5,277.13 470.0,277.28 470.5,276.97 471.0,276.78 471.5,276.75 472.0,276.58 472.5,276.56 473.0,276.33 473.5,276.24 474.0,276.26 474.5,276.50 475.0,276.40 475.5,276.07 476.0,276.27 476.5,276.32 477.0,276.69 477.5,276.56 478.0,276.59 478.5,276.71 479.0,276.91 479.5,277.01 480.0,277.08 480.5,277.16 481.0,276.95 481.5,277.06 482.0,276.71 482.5,276.49 483.0,276.40 483.5,276.46 484.0,276.61 484.5,276.41 485.0,276.15 485.5,276.30 486.0,276.35 486.5,276.42 487.0,276.40 487.5,276.30 488.0,276.63 488.5,276.83 489.0,276.82 489.5,276.84 490.0,276.91 490.5,277.16 491.0,277.26 491.5,277.01 492.0,276.84 492.5,276.79 493.0,276.87 493.5,276.68 494.0,276.47 494.5,276.43 495.0,276.39 495.5,276.40 496.0,276.25 496.5,276.26 497.0,276.23 497.5,276.43 498.0,276.58 498.5,276.60 499.0,276.61 499.5,276.86 500.0,277.07 500.5,277.03 501.0,277.11 501.5,277.17 502.0,277.14 502.5,277.09 503.0,276.71 503.5,276.68 504.0,276.63 504.5,276.72 505.0,276.48 505.5,276.35 506.0,276.39 506.5,276.31 507.0,276.55 507.5,276.35 508.0,276.31 508.5,276.51 509.0,276.73 509.5,276.75 510.0,276.77 510.5,276.81 511.0,277.11 511.5,277.34 512.0,277.29 512.5,277.03 513.0,276.86 513.5,276.90 514.0,276.91 514.5,276.58 515.0,276.53 515.5,276.57 516.0,276.53 516.5,276.39 517.0,276.35 517.5,276.25 518.0,276.55 518.5,276.56 519.0,276.51 519.5,276.61 520.0,276.79 520.5,276.88 521.0,276.99 521.5,276.97 522.0,277.22 522.5,277.20 523.0,277.28 523.5,276.98 524.0,276.79 524.5,276.72 525.0,276.80 525.5,276.60 526.0,276.40 526.5,276.45 527.0,276.31 527.5,276.62 528.0,276.42 528.5,276.39 529.0,276.45 529.5,276.72 530.0,276.86 530.5,276.75 531.0,276.80 531.5,277.03 532.0,277.13 532.5,277.29 533.0,277.20 533.5,277.07 534.0,276.99 534.5,277.00 535.0,276.72 535.5,276.55 536.0,276.48 536.5,276.72 537.0,276.52 537.5,276.42 538.0,276.36 538.5,276.37 539.0,276.67 539.5,276.66 540.0,276.51 540.5,276.56 541.0,276.84 541.5,277.07 542.0,277.06 542.5,277.09 543.0,277.27 543.5,277.36 544.0,277.18 544.5,276.99 545.0,276.82 545.5,276.84 546.0,276.90 546.5,276.65 547.0,276.43 547.5,276.47 548.0,276.55 548.5,276.59 549.0,276.47 549.5,276.44 550.0,276.63 550.5,276.78 551.0,276.71 551.5,276.70 552.0,276.79 552.5,277.09 553.0,277.23 553.5,277.24 554.0,277.29 554.5,277.18 555.0,277.13 555.5,277.03 556.0,276.72 556.5,276.63 557.0,276.75 557.5,276.77 558.0,276.54 558.5,276.47 559.0,276.57 559.5,276.70 560.0,276.63 560.5,276.52 561.0,276.61 561.5,276.72 562.0,276.91 562.5,277.02 563.0,276.94 563.5,277.07 564.0,277.32 564.5,277.44 565.0,277.16 565.5,277.06 566.0,276.98 566.5,277.02 567.0,276.86 567.5,276.74 568.0,276.56 568.5,276.66 569.0,276.69 569.5,276.67 570.0,276.49 570.5,276.51 571.0,276.66 571.5,276.78 572.0,276.69 572.5,276.75 573.0,276.93 573.5,277.21 574.0,277.20 574.5,277.28 575.0,277.29 575.5,277.28 576.0,277.18 576.5,277.02 577.0,276.89 577.5,276.84 578.0,276.83 578.5,276.73 579.0,276.68 579.5,276.47 580.0,276.65 580.5,276.81 581.0,276.61 581.5,276.53 582.0,276.68 582.5,276.90 583.0,276.99 583.5,277.00 584.0,277.09 584.5,277.23 585.0,277.47 585.5,277.41 586.0,277.27 586.5,277.06 587.0,277.09 587.5,277.04 588.0,276.83 588.5,276.62 589.0,276.69 589.5,276.72 590.0,276.73 590.5,276.60 591.0,276.56 591.5,276.73 592.0,276.96 592.5,276.86 593.0,276.86 593.5,276.83 594.0,277.12 594.5,277.20 595.0,277.24 595.5,277.31 596.0,277.37 596.5,277.39 597.0,277.22 597.5,277.02 598.0,276.96 598.5,276.90 599.0,276.93 599.5,276.74 600.0,276.59 600.5,276.65 601.0,276.72 601.5,276.63 602.0,276.62 602.5,276.41 603.0,276.58 603.5,276.78 604.0,276.74 604.5,276.83 605.0,276.80 605.5,277.10 606.0,277.17 606.5,277.19 607.0,276.93 607.5,276.81 608.0,276.83 608.5,276.61 609.0,276.25 609.5,276.26 610.0,276.17 610.5,276.18 611.0,275.95 611.5,275.78 612.0,275.79 612.5,276.19 613.0,276.15 613.5,275.95 614.0,276.05 614.5,276.10 615.0,276.54 615.5,276.43 616.0,276.59 616.5,276.77 617.0,276.91 617.5,276.78 618.0,276.37 618.5,276.06 619.0,276.04 619.5,276.14 620.0,275.57 620.5,275.21 621.0,275.29 621.5,275.19 622.0,275.57 622.5,275.21 623.0,275.12 623.5,275.29 624.0,275.39 624.5,275.70 625.0,275.36 625.5,275.80 626.0,275.90 626.5,276.28 627.0,276.33 627.5,276.36 628.0,276.02 628.5,275.91 629.0,275.69 629.5,275.18 630.0,275.03 630.5,275.12 631.0,275.11 631.5,274.81 632.0,274.36 632.5,274.39 633.0,274.65 633.5,274.79 634.0,274.71 634.5,274.60 635.0,274.71 635.5,275.35 636.0,275.45 636.5,275.51 637.0,275.72 637.5,275.96 638.0,276.20 638.5,275.70 639.0,275.17 639.5,274.91 640.0,274.88 640.5,274.60 641.0,274.19 641.5,273.78 642.0,273.97 642.5,274.43 643.0,273.75 643.5,273.84 644.0,273.41 644.5,274.00 645.0,274.64 645.5,274.41 646.0,274.34 646.5,274.58 647.0,275.09 647.5,275.38 648.0,275.61 648.5,275.40 649.0,275.28 649.5,275.13 650.0,274.69 650.5,274.32 651.0,273.62 651.5,274.13 652.0,273.98 652.5,273.37 653.0,273.66 653.5,273.52 654.0,275.03 654.5,273.95 655.0,273.98 655.5,274.95 656.0,274.04 656.5,273.92 657.0,275.13 657.5,274.22 658.0,274.01 658.5,275.16 659.0,273.85 659.5,274.10 660.0,275.35 660.5,274.14 661.0,274.34 661.5,275.40 662.0,274.53 662.5,274.09 663.0,275.55 663.5,274.49 664.0,274.25 664.5,275.58 665.0,274.43 665.5,274.45 666.0,275.38 666.5,274.72 667.0,274.47 667.5,275.78 668.0,274.91 668.5,274.54 669.0,275.68 669.5,275.01 670.0,274.93 670.5,275.65 671.0,274.88 671.5,275.06 672.0,275.87 672.5,275.11 673.0,275.21 673.5,275.99 674.0,274.94 674.5,275.09 675.0,275.87 675.5,275.12 676.0,275.26 676.5,276.12 677.0,275.41 677.5,275.16 678.0,276.25 678.5,276.03 679.0,276.33 679.5,276.75 680.0,276.67 680.5,276.20 681.0,276.08 681.5,276.30 682.0,275.97 682.5,275.53 683.0,275.38 683.5,275.41 684.0,275.68 684.5,275.54 685.0,275.34 685.5,275.33 686.0,275.63 686.5,275.73 687.0,275.61 687.5,275.89 688.0,276.23 688.5,276.50 689.0,276.68 689.5,276.69 690.0,276.88 690.5,277.07 691.0,276.98 691.5,276.82 692.0,276.64 692.5,276.64 693.0,276.70 693.5,276.76 694.0,276.52 694.5,276.58 695.0,276.63 695.5,276.89 696.0,276.78 696.5,276.60 697.0,276.66 697.5,276.90 698.0,276.92 698.5,276.88 699.0,276.96 699.5,277.14 700.0,277.31 700.5,277.44 701.0,277.38 701.5,277.23 702.0,277.27 702.5,277.21 703.0,276.99 703.5,276.79 704.0,276.79 704.5,276.79 705.0,276.80 705.5,276.70 706.0,276.51 706.5,276.54 707.0,276.68 707.5,276.50 708.0,276.47 708.5,276.58 709.0,276.81 709.5,276.94 710.0,276.96 710.5,276.93 711.0,277.16 711.5,277.27 712.0,277.03 712.5,276.68 713.0,276.65 713.5,276.53 714.0,276.52 714.5,276.25 715.0,275.91 715.5,276.06 716.0,276.08 716.5,275.90 717.0,275.65 717.5,275.85 718.0,275.85 718.5,276.31 719.0,276.15 719.5,276.04 720.0,276.15 720.5,276.66 721.0,276.73 721.5,276.82 722.0,276.80 722.5,276.69 723.0,276.86 723.5,276.55 724.0,276.32 724.5,276.15 725.0,276.33 725.5,276.44 726.0,275.98 726.5,275.99 727.0,276.08 727.5,276.42 728.0,276.25 728.5,276.34 729.0,276.41 729.5,276.49 730.0,276.80 730.5,276.77 731.0,276.92 731.5,277.05 732.0,277.36 732.5,277.40 733.0,277.19 733.5,277.06 734.0,276.95 734.5,277.13 735.0,276.88 735.5,276.72 736.0,276.72 736.5,276.79 737.0,276.69 737.5,276.53 738.0,276.34 738.5,276.56 739.0,276.76 739.5,276.72 740.0,276.64 740.5,276.75 741.0,276.82 741.5,277.03 742.0,276.99 742.5,277.12 743.0,277.12 743.5,277.03 744.0,276.93 744.5,276.77 745.0,276.50 745.5,276.43 746.0,276.52 746.5,276.26 747.0,276.10 747.5,276.17 748.0,276.38 748.5,276.57 749.0,276.25 749.5,276.29 750.0,276.54 750.5,276.68 751.0,276.69 751.5,276.75 752.0,276.92 752.5,277.13 753.0,277.39 753.5,277.23 754.0,277.05 754.5,277.01 755.0,277.00 755.5,276.96 756.0,276.70 756.5,276.59 757.0,276.63 757.5,276.83 758.0,276.76 758.5,276.52 759.0,276.67 759.5,276.75 760.0,276.96 760.5,276.74 761.0,276.89 761.5,277.01 762.0,277.10 762.5,277.15 763.0,277.17 763.5,277.30 764.0,277.40 764.5,277.35 765.0,277.14 765.5,277.01 766.0,276.91 766.5,276.91 767.0,276.86 767.5,276.82 768.0,276.72 768.5,276.62 769.0,276.87 769.5,276.64 770.0,276.59 770.5,276.77 771.0,276.90 771.5,276.95 772.0,276.88 772.5,277.01 773.0,277.19 773.5,277.31 774.0,277.42 774.5,277.40 775.0,277.28 775.5,277.16 776.0,277.13 776.5,277.01 777.0,276.78 777.5,276.78 778.0,276.79 778.5,276.77 779.0,276.45 779.5,276.49 780.0,276.42 780.5,276.77 781.0,276.69 781.5,276.59 782.0,276.63 782.5,276.78 783.0,276.95 783.5,277.01 784.0,276.97 784.5,277.16 785.0,277.34 785.5,277.08 786.0,276.88 786.5,276.82 787.0,276.64 787.5,276.78 788.0,276.55 788.5,276.22 789.0,276.15 789.5,276.23 790.0,276.38 790.5,276.07 791.0,276.09 791.5,276.15 791.5,280.20 791.0,280.34 790.5,280.21 790.0,280.02 789.5,280.16 789.0,280.09 788.5,280.10 788.0,279.98 787.5,279.74 787.0,279.75 786.5,279.75 786.0,279.42 785.5,279.32 785.0,279.06 784.5,279.22 784.0,279.35 783.5,279.41 783.0,279.47 782.5,279.65 782.0,279.71 781.5,279.79 781.0,279.85 780.5,279.74 780.0,279.93 779.5,280.03 779.0,279.82 778.5,279.63 778.0,279.65 777.5,279.61 777.0,279.65 776.5,279.48 776.0,279.20 775.5,279.19 775.0,279.13 774.5,279.08 774.0,279.02 773.5,279.04 773.0,279.26 772.5,279.44 772.0,279.53 771.5,279.41 771.0,279.57 770.5,279.80 770.0,279.75 769.5,279.76 769.0,279.53 768.5,279.63 768.0,279.68 767.5,279.69 767.0,279.41 766.5,279.50 766.0,279.43 765.5,279.43 765.0,279.21 764.5,278.98 764.0,279.03 763.5,279.03 763.0,279.19 762.5,279.25 762.0,279.21 761.5,279.45 761.0,279.62 760.5,279.54 760.0,279.45 759.5,279.71 759.0,279.90 758.5,279.90 758.0,279.66 757.5,279.56 757.0,279.69 756.5,279.70 756.0,279.72 755.5,279.44 755.0,279.45 754.5,279.41 754.0,279.31 753.5,279.16 753.0,279.04 752.5,279.23 752.0,279.57 751.5,279.67 751.0,279.58 750.5,279.70 750.0,279.95 749.5,280.16 749.0,280.08 748.5,280.02 748.0,280.04 747.5,280.27 747.0,280.26 746.5,279.91 746.0,279.90 745.5,279.92 745.0,279.96 744.5,279.78 744.0,279.48 743.5,279.35 743.0,279.22 742.5,279.30 742.0,279.38 741.5,279.38 741.0,279.52 740.5,279.78 740.0,279.84 739.5,279.78 739.0,279.70 738.5,279.87 738.0,280.04 737.5,279.81 737.0,279.65 736.5,279.66 736.0,279.65 735.5,279.66 735.0,279.54 734.5,279.34 734.0,279.44 733.5,279.40 733.0,279.23 732.5,279.08 732.0,279.07 731.5,279.25 731.0,279.50 730.5,279.51 730.0,279.51 729.5,279.87 729.0,280.08 728.5,280.25 728.0,279.97 727.5,280.11 727.0,280.42 726.5,280.52 726.0,280.18 725.5,280.17 725.0,280.04 724.5,280.18 724.0,280.15 723.5,279.83 723.0,279.67 722.5,279.61 722.0,279.60 721.5,279.49 721.0,279.57 720.5,279.82 720.0,280.06 719.5,280.39 719.0,280.23 718.5,280.15 718.0,280.34 717.5,280.48 717.0,280.69 716.5,280.30 716.0,280.21 715.5,280.28 715.0,280.44 714.5,280.19 714.0,279.82 713.5,279.91 713.0,279.76 712.5,279.67 712.0,279.32 711.5,279.13 711.0,279.30 710.5,279.38 710.0,279.57 709.5,279.56 709.0,279.54 708.5,279.76 708.0,279.88 707.5,279.79 707.0,279.67 706.5,279.73 706.0,279.79 705.5,279.81 705.0,279.56 704.5,279.48 704.0,279.59 703.5,279.49 703.0,279.49 702.5,279.29 702.0,279.24 701.5,279.18 701.0,279.04 700.5,278.96 700.0,279.00 699.5,279.26 699.0,279.46 698.5,279.47 698.0,279.43 697.5,279.54 697.0,279.63 696.5,279.71 696.0,279.73 695.5,279.47 695.0,279.64 694.5,279.80 694.0,279.88 693.5,279.74 693.0,279.57 692.5,279.79 692.0,279.68 691.5,279.65 691.0,279.35 690.5,279.35 690.0,279.54 689.5,279.61 689.0,279.79 688.5,279.94 688.0,280.33 687.5,280.59 687.0,280.66 686.5,280.50 686.0,280.65 685.5,280.99 685.0,281.01 684.5,280.91 684.0,280.48 683.5,280.88 683.0,281.06 682.5,280.79 682.0,280.35 681.5,280.24 681.0,280.33 680.5,279.99 680.0,279.89 679.5,279.72 679.0,279.98 678.5,280.47 678.0,280.29 677.5,281.22 677.0,281.18 676.5,280.22 676.0,281.13 675.5,281.07 675.0,280.29 674.5,281.40 674.0,281.40 673.5,280.46 673.0,281.30 672.5,281.21 672.0,280.69 671.5,281.47 671.0,281.41 670.5,280.65 670.0,281.59 669.5,281.51 669.0,280.61 668.5,281.49 668.0,281.55 667.5,280.66 667.0,281.98 666.5,281.80 666.0,280.70 665.5,281.65 665.0,282.00 664.5,281.07 664.0,281.83 663.5,281.89 663.0,280.99 662.5,281.85 662.0,282.25 661.5,280.90 661.0,282.10 660.5,282.42 660.0,281.04 659.5,282.12 659.0,282.29 658.5,281.03 658.0,282.49 657.5,282.27 657.0,281.13 656.5,282.64 656.0,282.59 655.5,281.29 655.0,282.74 654.5,282.35 654.0,281.61 653.5,282.75 653.0,282.95 652.5,283.01 652.0,282.48 651.5,282.32 651.0,282.73 650.5,282.33 650.0,281.70 649.5,281.21 649.0,280.98 648.5,280.89 648.0,280.91 647.5,281.11 647.0,281.05 646.5,281.93 646.0,282.18 645.5,282.12 645.0,281.78 644.5,282.26 644.0,282.51 643.5,282.91 643.0,282.44 642.5,281.86 642.0,282.62 641.5,282.73 641.0,281.98 640.5,281.39 640.0,281.35 639.5,281.30 639.0,281.11 638.5,280.78 638.0,279.99 637.5,280.49 637.0,280.86 636.5,281.13 636.0,281.16 635.5,281.18 635.0,281.50 634.5,281.95 634.0,281.68 633.5,281.75 633.0,281.90 632.5,282.07 632.0,282.19 631.5,281.71 631.0,281.14 630.5,281.34 630.0,281.40 629.5,281.15 629.0,280.64 628.5,280.28 628.0,280.30 627.5,279.95 627.0,280.05 626.5,280.10 626.0,280.47 625.5,280.70 625.0,281.00 624.5,280.89 624.0,280.85 623.5,281.28 623.0,281.24 622.5,281.38 622.0,281.08 621.5,281.14 621.0,281.32 620.5,281.00 620.0,280.71 619.5,280.43 619.0,280.53 618.5,280.44 618.0,280.08 617.5,279.74 617.0,279.60 616.5,279.74 616.0,279.90 615.5,279.90 615.0,279.94 614.5,280.10 614.0,280.34 613.5,280.59 613.0,280.39 612.5,280.23 612.0,280.46 611.5,280.64 611.0,280.49 610.5,280.28 610.0,280.24 609.5,280.29 609.0,280.12 608.5,279.94 608.0,279.49 607.5,279.49 607.0,279.50 606.5,279.32 606.0,279.18 605.5,279.34 605.0,279.58 604.5,279.74 604.0,279.62 603.5,279.61 603.0,279.71 602.5,279.97 602.0,279.80 601.5,279.70 601.0,279.66 600.5,279.81 600.0,279.79 599.5,279.68 599.0,279.41 598.5,279.46 598.0,279.43 597.5,279.39 597.0,279.27 596.5,279.08 596.0,279.01 595.5,279.06 595.0,279.12 594.5,279.20 594.0,279.32 593.5,279.46 593.0,279.62 592.5,279.64 592.0,279.58 591.5,279.62 591.0,279.89 590.5,279.72 590.0,279.72 589.5,279.61 589.0,279.69 588.5,279.72 588.0,279.59 587.5,279.29 587.0,279.32 586.5,279.37 586.0,279.13 585.5,279.01 585.0,278.94 584.5,279.13 584.0,279.37 583.5,279.48 583.0,279.42 582.5,279.54 582.0,279.61 581.5,279.85 581.0,279.78 580.5,279.67 580.0,279.83 579.5,279.75 579.0,279.88 578.5,279.66 578.0,279.53 577.5,279.52 577.0,279.48 576.5,279.41 576.0,279.18 575.5,279.12 575.0,279.05 574.5,279.14 574.0,279.24 573.5,279.15 573.0,279.37 572.5,279.65 572.0,279.59 571.5,279.51 571.0,279.57 570.5,279.78 570.0,279.99 569.5,279.81 569.0,279.61 568.5,279.70 568.0,279.75 567.5,279.75 567.0,279.62 566.5,279.42 566.0,279.39 565.5,279.31 565.0,279.23 564.5,278.98 564.0,279.03 563.5,279.21 563.0,279.34 562.5,279.37 562.0,279.49 561.5,279.69 561.0,279.81 560.5,279.75 560.0,279.82 559.5,279.77 559.0,279.90 558.5,280.01 558.0,279.78 557.5,279.58 557.0,279.62 556.5,279.78 556.0,279.62 555.5,279.45 555.0,279.20 554.5,279.26 554.0,279.11 553.5,279.17 553.0,279.14 552.5,279.34 552.0,279.51 551.5,279.62 551.0,279.72 550.5,279.56 550.0,279.76 549.5,279.89 549.0,279.91 548.5,279.78 548.0,279.77 547.5,279.95 547.0,280.00 546.5,279.71 546.0,279.52 545.5,279.55 545.0,279.48 544.5,279.37 544.0,279.17 543.5,279.04 543.0,279.10 542.5,279.30 542.0,279.35 541.5,279.33 541.0,279.64 540.5,279.72 540.0,279.81 539.5,279.91 539.0,279.67 538.5,279.99 538.0,280.02 537.5,279.90 537.0,279.78 536.5,279.76 536.0,279.76 535.5,279.77 535.0,279.56 534.5,279.29 534.0,279.38 533.5,279.27 533.0,279.13 532.5,279.17 532.0,279.20 531.5,279.39 531.0,279.67 530.5,279.60 530.0,279.59 529.5,279.82 529.0,280.04 528.5,280.09 528.0,279.95 527.5,279.84 527.0,279.89 526.5,279.92 526.0,279.88 525.5,279.73 525.0,279.68 524.5,279.70 524.0,279.59 523.5,279.37 523.0,279.21 522.5,279.12 522.0,279.20 521.5,279.43 521.0,279.39 520.5,279.39 520.0,279.66 519.5,279.86 519.0,279.98 518.5,279.87 518.0,279.91 517.5,280.05 517.0,280.00 516.5,280.00 516.0,279.79 515.5,279.98 515.0,279.96 514.5,279.86 514.0,279.58 513.5,279.49 513.0,279.52 512.5,279.39 512.0,279.17 511.5,279.12 511.0,279.36 510.5,279.61 510.0,279.64 509.5,279.71 509.0,279.69 508.5,279.90 508.0,280.10 507.5,280.05 507.0,279.92 506.5,279.93 506.0,280.10 505.5,280.13 505.0,280.02 504.5,279.69 504.0,279.88 503.5,279.75 503.0,279.54 502.5,279.40 502.0,279.21 501.5,279.22 501.0,279.33 500.5,279.43 500.0,279.39 499.5,279.53 499.0,279.83 498.5,279.81 498.0,279.85 497.5,279.76 497.0,280.13 496.5,280.20 496.0,280.04 495.5,279.82 495.0,280.03 494.5,280.04 494.0,279.97 493.5,279.74 493.0,279.63 492.5,279.54 492.0,279.53 491.5,279.38 491.0,279.19 490.5,279.19 490.0,279.43 489.5,279.59 489.0,279.59 488.5,279.67 488.0,279.78 487.5,279.94 487.0,280.21 486.5,279.97 486.0,279.94 485.5,280.10 485.0,280.34 484.5,280.05 484.0,279.97 483.5,279.87 483.0,279.97 482.5,279.91 482.0,279.61 481.5,279.36 481.0,279.41 480.5,279.29 480.0,279.23 479.5,279.38 479.0,279.54 478.5,279.71 478.0,279.96 477.5,279.93 477.0,279.82 476.5,279.96 476.0,280.21 475.5,280.29 475.0,280.10 474.5,279.92 474.0,280.15 473.5,280.13 473.0,279.99 472.5,279.84 472.0,279.75 471.5,279.79 471.0,279.53 470.5,279.43 470.0,279.19 469.5,279.28 469.0,279.56 468.5,279.64 468.0,279.49 467.5,279.91 467.0,279.88 466.5,279.49 466.0,279.94 465.5,280.06 465.0,279.44 464.5,279.92 464.0,280.03 463.5,279.50 463.0,279.96 462.5,279.89 462.0,279.57 461.5,280.09 461.0,279.91 460.5,279.46 460.0,280.06 459.5,280.06 459.0,279.69 458.5,280.39 458.0,280.46 457.5,279.93 457.0,280.72 456.5,280.86 456.0,280.21 455.5,281.01 455.0,281.35 454.5,280.45 454.0,281.70 453.5,281.51 453.0,281.03 452.5,281.82 452.0,282.13 451.5,281.06 451.0,282.27 450.5,282.66 450.0,281.60 449.5,282.79 449.0,282.81 448.5,281.64 448.0,283.06 447.5,283.39 447.0,282.04 446.5,283.62 446.0,283.39 445.5,282.32 445.0,284.14 444.5,284.40 444.0,282.89 443.5,284.15 443.0,284.31 442.5,283.43 442.0,282.96 441.5,281.53 441.0,280.48 440.5,279.29 440.0,278.43 439.5,278.43 439.0,278.43 438.5,278.43 438.0,278.43 437.5,278.43 437.0,278.43 436.5,278.44 436.0,278.44 435.5,278.46 435.0,278.49 434.5,278.52 434.0,278.54 433.5,278.52 433.0,278.52 432.5,278.53 432.0,278.55 431.5,278.52 431.0,278.46 430.5,278.49 430.0,278.49 429.5,278.45 429.0,278.43 428.5,278.43 428.0,278.43 427.5,278.43 427.0,278.43 426.5,278.43 426.0,278.46 425.5,278.52 425.0,278.54 424.5,278.52 424.0,278.50 423.5,278.55 423.0,278.59 422.5,278.56 422.0,278.52 421.5,278.54 421.0,278.55 420.5,278.54 420.0,278.53 419.5,278.47 419.0,278.47 418.5,278.47 418.0,278.45 417.5,278.43 417.0,278.43 416.5,278.43 416.0,278.47 415.5,278.49 415.0,278.51 414.5,278.55 414.0,278.57 413.5,278.58 413.0,278.57 412.5,278.55 412.0,278.60 411.5,278.63 411.0,278.58 410.5,278.57 410.0,278.53 409.5,278.56 409.0,278.54 408.5,278.53 408.0,278.44 407.5,278.47 407.0,278.43 406.5,278.44 406.0,278.44 405.5,278.48 405.0,278.51 404.5,278.59 404.0,278.56 403.5,278.57 403.0,278.63 402.5,278.67 402.0,278.63 401.5,278.64 401.0,278.62 400.5,278.64 400.0,278.62 399.5,278.64 399.0,278.56 398.5,278.52 398.0,278.55 397.5,278.54 397.0,278.47 396.5,278.43 396.0,278.44 395.5,278.52 395.0,278.54 394.5,278.54 394.0,278.58 393.5,278.63 393.0,278.68 392.5,278.68 392.0,278.61 391.5,278.67 391.0,278.70 390.5,278.70 390.0,278.66 389.5,278.61 389.0,278.66 388.5,278.67 388.0,278.62 387.5,278.54 387.0,278.51 386.5,278.50 386.0,278.49 385.5,278.49 385.0,278.49 384.5,278.56 384.0,278.59 383.5,278.76 383.0,278.88 382.5,279.01 382.0,279.22 381.5,279.30 381.0,279.39 380.5,279.27 380.0,279.23 379.5,279.37 379.0,279.39 378.5,279.20 378.0,279.13 377.5,279.19 377.0,279.17 376.5,279.03 376.0,278.88 375.5,278.79 375.0,278.85 374.5,278.94 374.0,279.06 373.5,279.07 373.0,279.23 372.5,279.39 372.0,279.38 371.5,279.30 371.0,279.39 370.5,279.50 370.0,279.59 369.5,279.53 369.0,279.30 368.5,279.39 368.0,279.47 367.5,279.36 367.0,279.27 366.5,279.08 366.0,279.12 365.5,279.08 365.0,278.97 364.5,278.86 364.0,278.96 363.5,279.16 363.0,279.29 362.5,279.29 362.0,279.20 361.5,279.38 361.0,279.53 360.5,279.62 360.0,279.59 359.5,279.44 359.0,279.68 358.5,279.60 358.0,279.50 357.5,279.34 357.0,279.35 356.5,279.38 356.0,279.34 355.5,279.20 355.0,278.96 354.5,279.01 354.0,279.03 353.5,279.10 353.0,279.15 352.5,279.27 352.0,279.49 351.5,279.59 351.0,279.53 350.5,279.56 350.0,279.62 349.5,279.78 349.0,279.79 348.5,279.67 348.0,279.62 347.5,279.67 347.0,279.69 346.5,279.56 346.0,279.36 345.5,279.29 345.0,279.22 344.5,279.21 344.0,278.96 343.5,278.96 343.0,279.20 342.5,279.23 342.0,279.38 341.5,279.39 341.0,279.44 340.5,279.72 340.0,279.81 339.5,279.64 339.0,279.57 338.5,279.64 338.0,279.69 337.5,279.71 337.0,279.63 336.5,279.49 336.0,279.52 335.5,279.52 335.0,279.34 334.5,279.13 334.0,279.10 333.5,279.02 333.0,279.09 332.5,279.16 332.0,279.19 331.5,279.42 331.0,279.48 330.5,279.58 330.0,279.57 329.5,279.49 329.0,279.76 328.5,279.78 328.0,279.67 327.5,279.53 327.0,279.71 326.5,279.74 326.0,279.70 325.5,279.51 325.0,279.28 324.5,279.36 324.0,279.32 323.5,279.16 323.0,278.95 322.5,279.05 322.0,279.16 321.5,279.24 321.0,279.26 320.5,279.35 320.0,279.52 319.5,279.69 319.0,279.77 318.5,279.61 318.0,279.62 317.5,279.78 317.0,279.81 316.5,279.76 316.0,279.49 315.5,279.59 315.0,279.59 314.5,279.46 314.0,279.33 313.5,279.19 313.0,279.17 312.5,279.02 312.0,279.00 311.5,279.02 311.0,279.19 310.5,279.43 310.0,279.56 309.5,279.50 309.0,279.43 308.5,279.64 308.0,279.77 307.5,279.70 307.0,279.61 306.5,279.57 306.0,279.64 305.5,279.74 305.0,279.55 304.5,279.37 304.0,279.42 303.5,279.37 303.0,279.28 302.5,279.09 302.0,278.93 301.5,279.02 301.0,279.16 300.5,279.22 300.0,279.31 299.5,279.35 299.0,279.51 298.5,279.64 298.0,279.68 297.5,279.49 297.0,279.81 296.5,279.77 296.0,279.70 295.5,279.65 295.0,279.70 294.5,279.64 294.0,279.66 293.5,279.40 293.0,279.25 292.5,279.28 292.0,279.19 291.5,279.10 291.0,279.06 290.5,279.11 290.0,279.30 289.5,279.52 289.0,279.64 288.5,279.55 288.0,279.65 287.5,279.87 287.0,280.01 286.5,279.86 286.0,279.72 285.5,279.83 285.0,280.00 284.5,279.85 284.0,279.68 283.5,279.69 283.0,279.65 282.5,279.49 282.0,279.40 281.5,279.11 281.0,279.15 280.5,279.21 280.0,279.40 279.5,279.40 279.0,279.37 278.5,279.66 278.0,279.79 277.5,279.96 277.0,279.73 276.5,280.01 276.0,280.09 275.5,280.21 275.0,279.89 274.5,279.74 274.0,279.96 273.5,280.01 273.0,279.75 272.5,279.65 272.0,279.56 271.5,279.47 271.0,279.34 270.5,279.18 270.0,279.07 269.5,279.43 269.0,279.59 268.5,279.80 268.0,279.62 267.5,279.80 267.0,280.11 266.5,280.09 266.0,280.06 265.5,279.89 265.0,280.15 264.5,280.23 264.0,280.21 263.5,280.01 263.0,279.87 262.5,279.87 262.0,279.93 261.5,280.07 261.0,279.45 260.5,279.98 260.0,279.92 259.5,279.53 259.0,280.17 258.5,280.24 258.0,279.65 257.5,280.39 257.0,280.38 256.5,279.88 256.0,280.40 255.5,280.56 255.0,279.94 254.5,280.75 254.0,280.68 253.5,279.98 253.0,280.80 252.5,280.97 252.0,280.16 251.5,280.94 251.0,280.99 250.5,280.33 250.0,281.01 249.5,280.96 249.0,280.33 248.5,281.23 248.0,281.12 247.5,280.59 247.0,281.37 246.5,281.47 246.0,280.70 245.5,281.47 245.0,281.77 244.5,280.84 244.0,281.76 243.5,281.76 243.0,280.98 242.5,282.08 242.0,282.05 241.5,280.93 241.0,282.24 240.5,282.19 240.0,280.94 239.5,282.24 239.0,282.15 238.5,281.12 238.0,282.17 237.5,282.56 237.0,281.21 236.5,282.58 236.0,282.41 235.5,281.46 235.0,282.94 234.5,283.44 234.0,283.23 233.5,283.01 233.0,282.94 232.5,282.99 232.0,283.13 231.5,282.76 231.0,282.07 230.5,281.97 230.0,281.94 229.5,281.31 229.0,280.96 228.5,280.31 228.0,280.66 227.5,280.95 227.0,281.14 226.5,281.29 226.0,281.44 225.5,281.70 225.0,282.04 224.5,281.89 224.0,281.81 223.5,282.12 223.0,282.35 222.5,282.08 222.0,281.51 221.5,281.62 221.0,281.50 220.5,281.48 220.0,281.06 219.5,280.67 219.0,280.53 218.5,280.28 218.0,280.02 217.5,279.86 217.0,279.91 216.5,280.28 216.0,280.77 215.5,280.67 215.0,280.68 214.5,280.95 214.0,281.08 213.5,281.02 213.0,281.13 212.5,280.80 212.0,281.04 211.5,281.03 211.0,280.86 210.5,280.49 210.0,280.31 209.5,280.21 209.0,279.99 208.5,279.84 208.0,279.45 207.5,279.43 207.0,279.42 206.5,279.69 206.0,279.61 205.5,279.68 205.0,279.91 204.5,279.90 204.0,279.92 203.5,279.77 203.0,279.79 202.5,280.11 202.0,280.00 201.5,279.82 201.0,279.63 200.5,279.57 200.0,279.58 199.5,279.62 199.0,279.43 198.5,279.23 198.0,279.29 197.5,279.11 197.0,279.05 196.5,278.94 196.0,279.08 195.5,279.29 195.0,279.36 194.5,279.39 194.0,279.38 193.5,279.63 193.0,279.79 192.5,279.75 192.0,279.67 191.5,279.55 191.0,279.83 190.5,279.67 190.0,279.56 189.5,279.41 189.0,279.46 188.5,279.52 188.0,279.41 187.5,279.21 187.0,279.01 186.5,278.99 186.0,279.10 185.5,279.14 185.0,279.11 184.5,279.27 184.0,279.54 183.5,279.55 183.0,279.63 182.5,279.56 182.0,279.78 181.5,279.76 181.0,279.81 180.5,279.62 180.0,279.62 179.5,279.74 179.0,279.68 178.5,279.54 178.0,279.27 177.5,279.36 177.0,279.24 176.5,279.11 176.0,278.98 175.5,278.96 175.0,279.21 174.5,279.24 174.0,279.34 173.5,279.37 173.0,279.41 172.5,279.65 172.0,279.65 171.5,279.72 171.0,279.52 170.5,279.74 170.0,279.84 169.5,279.77 169.0,279.57 168.5,279.49 168.0,279.57 167.5,279.52 167.0,279.36 166.5,279.14 166.0,279.14 165.5,279.03 165.0,279.00 164.5,279.10 164.0,279.13 163.5,279.44 163.0,279.49 162.5,279.53 162.0,279.47 161.5,279.67 161.0,279.71 160.5,279.72 160.0,279.71 159.5,279.59 159.0,279.67 158.5,279.70 158.0,279.52 157.5,279.40 157.0,279.33 156.5,279.36 156.0,279.34 155.5,279.16 155.0,278.94 154.5,279.05 154.0,279.16 153.5,279.30 153.0,279.35 152.5,279.35 152.0,279.60 151.5,279.70 151.0,279.68 150.5,279.56 150.0,279.61 149.5,279.80 149.0,279.68 148.5,279.59 148.0,279.54 147.5,279.55 147.0,279.56 146.5,279.39 146.0,279.31 145.5,279.15 145.0,279.14 144.5,279.03 144.0,279.07 143.5,279.06 143.0,279.28 142.5,279.35 142.0,279.56 141.5,279.49 141.0,279.57 140.5,279.72 140.0,279.77 139.5,279.77 139.0,279.50 138.5,279.67 138.0,279.69 137.5,279.72 137.0,279.61 136.5,279.39 136.0,279.46 135.5,279.44 135.0,279.22 134.5,279.08 134.0,279.00 133.5,279.01 133.0,279.21 132.5,279.30 132.0,279.23 131.5,279.38 131.0,279.59 130.5,279.69 130.0,279.57 129.5,279.57 129.0,279.64 128.5,279.82 128.0,279.70 127.5,279.51 127.0,279.53 126.5,279.56 126.0,279.55 125.5,279.32 125.0,279.19 124.5,279.25 124.0,279.21 123.5,279.12 123.0,279.00 122.5,279.22 122.0,279.38 121.5,279.55 121.0,279.72 120.5,279.70 120.0,279.99 119.5,280.00 119.0,280.09 118.5,280.04 118.0,280.07 117.5,280.19 117.0,280.38 116.5,280.02 116.0,279.75 115.5,279.83 115.0,279.91 114.5,279.76 114.0,279.49 113.5,279.18 113.0,279.15 112.5,279.22 112.0,279.40 111.5,279.41 111.0,279.49 110.5,279.82 110.0,279.83 109.5,279.83 109.0,279.75 108.5,279.91 108.0,280.00 107.5,280.12 107.0,280.16 106.5,280.22 106.0,280.47 105.5,280.61 105.0,280.37 104.5,280.35 104.0,280.17 103.5,280.33 103.0,280.16 102.5,279.81 102.0,279.94 101.5,280.44 101.0,280.86 100.5,281.41 100.0,281.46 99.5,281.64 99.0,281.87 98.5,282.22 98.0,282.01 97.5,281.95 97.0,281.98 96.5,282.15 96.0,282.44 95.5,281.84 95.0,281.62 94.5,281.65 94.0,281.51 93.5,281.19 93.0,280.73 92.5,280.66 92.0,280.54 91.5,280.24 91.0,280.35 90.5,280.35 90.0,280.54 89.5,280.53 89.0,280.42 88.5,280.18 88.0,279.96 87.5,280.13 87.0,280.31 86.5,280.24 86.0,279.91 85.5,279.96 85.0,280.10 84.5,279.84 84.0,279.71 83.5,279.47 83.0,279.41 82.5,279.45 82.0,279.20 81.5,278.99 81.0,279.00 80.5,279.22 80.0,279.27 79.5,279.36 79.0,279.47 78.5,279.60 78.0,279.96 77.5,279.83 77.0,279.76 76.5,279.94 76.0,280.29 75.5,280.35 75.0,280.26 74.5,279.92 74.0,280.18 73.5,280.25 73.0,280.18 72.5,279.91 72.0,279.84 71.5,279.78 71.0,279.70 70.5,279.73 70.0,279.67 69.5,280.19 69.0,280.43 68.5,280.91 68.0,280.72 67.5,280.78 67.0,281.29 66.5,281.60 66.0,281.56 65.5,281.45 65.0,281.34 64.5,281.86 64.0,281.68 63.5,281.30 63.0,280.87 62.5,281.29 62.0,281.25 61.5,280.97 61.0,280.44 60.5,280.03 60.0,280.37 59.5,280.82 59.0,280.94 58.5,280.98 58.0,281.30 57.5,282.11 57.0,282.14 56.5,282.11 56.0,282.05 55.5,282.63 55.0,282.44 54.5,282.55 54.0,282.00 53.5,282.12 53.0,281.90 52.5,281.86 52.0,281.58 51.5,280.68 51.0,280.80 50.5,280.67 50.0,280.14 49.5,280.11 49.0,280.36 48.5,280.71 48.0,281.09 47.5,281.12 47.0,280.93 46.5,281.16 46.0,281.63 45.5,281.82 45.0,281.49 44.5,281.26 44.0,281.45 43.5,281.63 43.0,281.26 42.5,281.03 42.0,280.67 41.5,280.82 41.0,280.79 40.5,280.18 40.0,280.81 39.5,281.13 39.0,280.42 38.5,281.55 38.0,281.75 37.5,281.01 37.0,282.02 36.5,282.73 36.0,281.58 35.5,282.71 35.0,283.27 34.5,281.91 34.0,284.12 33.5,284.18 33.0,282.66" fill="#f6c29e" opacity="0.55"/><polygon points="33.0,359.41 33.5,355.40 34.0,356.12 34.5,359.76 35.0,357.16 35.5,358.11 36.0,361.11 36.5,359.04 37.0,360.34 37.5,363.25 38.0,361.81 38.5,362.18 39.0,363.92 39.5,362.87 40.0,363.10 40.5,364.59 41.0,363.49 41.5,363.83 42.0,364.29 42.5,364.17 43.0,364.55 43.5,364.79 44.0,365.25 44.5,364.74 45.0,363.94 45.5,363.40 46.0,363.33 46.5,363.00 47.0,362.23 47.5,361.43 48.0,361.70 48.5,361.67 49.0,361.30 49.5,360.57 50.0,360.37 50.5,361.21 51.0,361.94 51.5,361.79 52.0,361.50 52.5,361.84 53.0,362.60 53.5,363.22 54.0,363.35 54.5,363.37 55.0,363.10 55.5,363.04 56.0,361.53 56.5,360.89 57.0,360.00 57.5,360.50 58.0,360.70 58.5,359.69 59.0,359.17 59.5,359.32 60.0,359.26 60.5,360.02 61.0,359.27 61.5,358.74 62.0,360.63 62.5,361.12 63.0,361.21 63.5,361.27 64.0,361.23 64.5,362.25 65.0,362.59 65.5,361.31 66.0,359.82 66.5,359.73 67.0,358.83 67.5,357.76 68.0,356.15 68.5,355.12 69.0,356.37 69.5,358.16 70.0,356.98 70.5,356.88 71.0,357.46 71.5,358.35 72.0,358.38 72.5,359.08 73.0,359.65 73.5,360.51 74.0,362.00 74.5,362.42 75.0,363.19 75.5,363.28 76.0,362.92 76.5,363.07 77.0,362.00 77.5,361.13 78.0,361.27 78.5,361.82 79.0,360.68 79.5,360.55 80.0,360.40 80.5,361.17 81.0,362.11 81.5,361.15 82.0,361.42 82.5,361.92 83.0,362.64 83.5,363.67 84.0,363.70 84.5,363.73 85.0,364.86 85.5,365.44 86.0,365.40 86.5,364.91 87.0,364.47 87.5,364.59 88.0,364.44 88.5,363.71 89.0,363.15 89.5,363.58 90.0,363.98 90.5,363.40 91.0,363.03 91.5,363.12 92.0,363.54 92.5,364.27 93.0,363.81 93.5,364.02 94.0,364.22 94.5,364.88 95.0,365.41 95.5,365.44 96.0,365.77 96.5,365.88 97.0,365.90 97.5,365.58 98.0,365.28 98.5,365.15 99.0,364.92 99.5,365.03 100.0,364.78 100.5,364.23 101.0,364.28 101.5,364.65 102.0,363.92 102.5,363.97 103.0,363.57 103.5,363.80 104.0,364.32 104.5,363.87 105.0,364.07 105.5,364.47 106.0,364.98 106.5,365.41 107.0,365.09 107.5,364.36 108.0,363.99 108.5,363.77 109.0,362.88 109.5,361.95 110.0,361.90 110.5,361.80 111.0,361.20 111.5,361.04 112.0,359.80 112.5,359.99 113.0,361.28 113.5,360.30 114.0,359.70 114.5,360.74 115.0,360.96 115.5,361.96 116.0,362.19 116.5,362.49 117.0,363.01 117.5,363.51 118.0,363.01 118.5,361.89 119.0,360.64 119.5,360.15 120.0,360.56 120.5,359.38 121.0,358.07 121.5,358.29 122.0,358.64 122.5,358.09 123.0,357.10 123.5,356.47 124.0,358.02 124.5,358.89 125.0,359.30 125.5,358.12 126.0,359.37 126.5,360.81 127.0,362.25 127.5,362.27 128.0,361.97 128.5,361.41 129.0,361.48 129.5,360.83 130.0,359.37 130.5,358.90 131.0,359.10 131.5,359.52 132.0,359.02 132.5,358.16 133.0,358.51 133.5,359.56 134.0,359.82 134.5,359.36 135.0,359.33 135.5,360.16 136.0,361.04 136.5,361.64 137.0,361.40 137.5,362.71 138.0,363.64 138.5,364.12 139.0,362.80 139.5,361.91 140.0,361.84 140.5,362.00 141.0,361.10 141.5,360.33 142.0,359.86 142.5,360.00 143.0,360.89 143.5,360.62 144.0,359.84 144.5,360.40 145.0,360.74 145.5,361.80 146.0,361.84 146.5,362.16 147.0,362.75 147.5,363.45 148.0,363.86 148.5,364.25 149.0,364.33 149.5,364.42 150.0,364.46 150.5,363.26 151.0,363.21 151.5,363.03 152.0,363.32 152.5,363.19 153.0,362.44 153.5,362.70 154.0,363.43 154.5,363.78 155.0,363.75 155.5,364.04 156.0,364.60 156.5,365.18 157.0,365.58 157.5,365.92 158.0,366.30 158.5,366.48 159.0,366.82 159.5,366.74 160.0,366.53 160.5,366.32 161.0,366.36 161.5,366.36 162.0,365.87 162.5,365.82 163.0,365.55 163.5,365.91 164.0,365.83 164.5,365.44 165.0,365.29 165.5,365.77 166.0,366.02 166.5,365.79 167.0,365.78 167.5,366.03 168.0,366.18 168.5,366.45 169.0,366.57 169.5,366.71 170.0,366.82 170.5,366.79 171.0,366.49 171.5,366.06 172.0,365.92 172.5,365.86 173.0,366.15 173.5,365.67 174.0,365.55 174.5,365.54 175.0,365.76 175.5,365.09 176.0,364.43 176.5,363.74 177.0,363.89 177.5,363.85 178.0,363.64 178.5,363.18 179.0,363.02 179.5,363.53 180.0,363.90 180.5,364.05 181.0,362.84 181.5,362.63 182.0,362.97 182.5,361.93 183.0,361.42 183.5,360.31 184.0,361.02 184.5,361.67 185.0,360.36 185.5,359.76 186.0,360.53 186.5,361.07 187.0,361.31 187.5,360.97 188.0,361.05 188.5,362.31 189.0,363.30 189.5,362.97 190.0,363.32 190.5,364.04 191.0,364.75 191.5,364.54 192.0,363.98 192.5,363.55 193.0,363.28 193.5,363.84 194.0,363.11 194.5,362.85 195.0,362.69 195.5,363.50 196.0,363.74 196.5,363.93 197.0,363.88 197.5,364.22 198.0,364.69 198.5,365.12 199.0,365.07 199.5,365.49 200.0,366.09 200.5,366.50 201.0,366.55 201.5,366.57 202.0,366.40 202.5,366.54 203.0,366.35 203.5,366.27 204.0,365.99 204.5,366.10 205.0,366.41 205.5,366.31 206.0,366.12 206.5,366.04 207.0,366.05 207.5,366.36 208.0,366.28 208.5,366.20 209.0,366.44 209.5,366.57 210.0,366.68 210.5,366.72 211.0,366.84 211.5,367.02 212.0,367.19 212.5,367.03 213.0,366.78 213.5,366.73 214.0,366.66 214.5,366.61 215.0,366.49 215.5,366.37 216.0,366.31 216.5,366.49 217.0,366.36 217.5,366.27 218.0,366.16 218.5,366.52 219.0,366.66 219.5,366.53 220.0,366.51 220.5,366.66 221.0,367.00 221.5,367.15 222.0,367.07 222.5,367.11 223.0,367.08 223.5,367.10 224.0,366.83 224.5,366.78 225.0,366.53 225.5,366.63 226.0,366.60 226.5,366.53 227.0,366.31 227.5,366.38 228.0,366.62 228.5,366.64 229.0,366.62 229.5,366.58 230.0,366.73 230.5,366.95 231.0,366.93 231.5,367.03 232.0,367.12 232.5,367.27 233.0,367.35 233.5,366.97 234.0,366.50 234.5,366.33 235.0,366.17 235.5,363.33 236.0,349.43 236.5,351.03 237.0,356.34 237.5,352.76 238.0,353.89 238.5,357.31 239.0,354.66 239.5,355.93 240.0,359.03 240.5,356.59 241.0,357.36 241.5,360.37 242.0,357.69 242.5,357.88 243.0,360.96 243.5,358.27 244.0,358.89 244.5,361.41 245.0,359.03 245.5,359.74 246.0,362.34 246.5,360.02 247.0,360.68 247.5,362.87 248.0,361.17 248.5,362.03 249.0,363.61 249.5,362.37 250.0,362.47 250.5,364.07 251.0,363.09 251.5,363.02 252.0,364.57 252.5,363.59 253.0,363.73 253.5,364.84 254.0,363.99 254.5,364.37 255.0,365.45 255.5,364.50 256.0,364.54 256.5,365.88 257.0,365.24 257.5,365.15 258.0,366.17 258.5,365.35 259.0,365.45 259.5,366.31 260.0,365.72 260.5,365.90 261.0,366.51 261.5,366.03 262.0,366.11 262.5,366.67 263.0,366.66 263.5,366.79 264.0,366.82 264.5,366.93 265.0,366.80 265.5,366.49 266.0,366.21 266.5,366.05 267.0,366.09 267.5,365.69 268.0,365.39 268.5,365.35 269.0,365.16 269.5,365.60 270.0,365.24 270.5,364.61 271.0,364.52 271.5,364.45 272.0,364.37 272.5,363.63 273.0,363.55 273.5,364.00 274.0,364.73 274.5,364.57 275.0,364.07 275.5,363.75 276.0,364.22 276.5,364.35 277.0,363.92 277.5,363.55 278.0,364.02 278.5,364.20 279.0,364.69 279.5,364.52 280.0,364.85 280.5,365.22 281.0,365.60 281.5,365.39 282.0,365.17 282.5,365.18 283.0,365.68 283.5,365.85 284.0,366.04 284.5,366.23 285.0,366.38 285.5,366.57 286.0,366.43 286.5,365.85 287.0,365.76 287.5,365.85 288.0,365.62 288.5,365.23 289.0,365.14 289.5,365.20 290.0,365.25 290.5,365.13 291.0,364.60 291.5,364.53 292.0,364.89 292.5,365.31 293.0,365.00 293.5,364.74 294.0,364.90 294.5,365.53 295.0,365.64 295.5,366.02 296.0,366.00 296.5,365.75 297.0,365.93 297.5,365.44 298.0,365.10 298.5,365.22 299.0,365.18 299.5,365.43 300.0,365.14 300.5,365.05 301.0,365.34 301.5,365.60 302.0,365.65 302.5,365.69 303.0,365.80 303.5,366.16 304.0,366.38 304.5,366.58 305.0,366.70 305.5,366.71 306.0,366.89 306.5,366.86 307.0,366.61 307.5,366.19 308.0,366.03 308.5,365.94 309.0,365.56 309.5,364.84 310.0,364.71 310.5,364.50 311.0,364.54 311.5,364.04 312.0,363.82 312.5,363.98 313.0,364.67 313.5,364.40 314.0,364.47 314.5,364.46 315.0,365.04 315.5,365.71 316.0,365.52 316.5,365.63 317.0,365.76 317.5,365.77 318.0,365.70 318.5,364.93 319.0,364.67 319.5,364.50 320.0,364.62 320.5,364.38 321.0,363.97 321.5,363.63 322.0,363.99 322.5,364.28 323.0,363.96 323.5,364.16 324.0,364.39 324.5,364.73 325.0,364.80 325.5,364.82 326.0,365.22 326.5,365.44 327.0,366.13 327.5,366.13 328.0,365.40 328.5,365.21 329.0,365.40 329.5,365.14 330.0,364.62 330.5,364.42 331.0,364.32 331.5,364.64 332.0,364.27 332.5,363.64 333.0,364.14 333.5,363.98 334.0,364.51 334.5,364.16 335.0,364.32 335.5,364.82 336.0,365.26 336.5,365.23 337.0,365.24 337.5,365.77 338.0,365.96 338.5,365.62 339.0,365.31 339.5,364.53 340.0,364.35 340.5,364.12 341.0,364.11 341.5,363.85 342.0,363.38 342.5,363.44 343.0,363.56 343.5,363.15 344.0,362.74 344.5,363.00 345.0,363.44 345.5,364.28 346.0,363.79 346.5,364.26 347.0,364.64 347.5,365.23 348.0,365.37 348.5,365.31 349.0,364.80 349.5,364.50 350.0,364.84 350.5,364.14 351.0,363.55 351.5,363.16 352.0,363.35 352.5,363.63 353.0,363.17 353.5,363.19 354.0,363.49 354.5,363.77 355.0,363.94 355.5,363.69 356.0,363.88 356.5,364.46 357.0,365.12 357.5,364.95 358.0,365.33 358.5,365.72 359.0,365.96 359.5,365.46 360.0,365.18 360.5,364.92 361.0,364.82 361.5,364.78 362.0,364.09 362.5,363.79 363.0,363.65 363.5,363.99 364.0,364.21 364.5,363.95 365.0,363.77 365.5,364.10 366.0,364.68 366.5,364.74 367.0,365.02 367.5,365.02 368.0,365.57 368.5,366.01 369.0,365.98 369.5,366.16 370.0,365.81 370.5,365.83 371.0,365.80 371.5,365.33 372.0,364.95 372.5,365.21 373.0,365.24 373.5,365.01 374.0,364.69 374.5,364.90 375.0,365.27 375.5,365.52 376.0,365.40 376.5,365.58 377.0,365.93 377.5,366.42 378.0,366.70 378.5,366.76 379.0,367.05 379.5,367.26 380.0,367.42 380.5,367.36 381.0,367.42 381.5,367.30 382.0,367.37 382.5,367.30 383.0,367.14 383.5,367.16 384.0,367.19 384.5,367.19 385.0,367.16 385.5,367.12 386.0,367.12 386.5,367.22 387.0,367.24 387.5,367.26 388.0,367.30 388.5,367.33 389.0,367.52 389.5,367.53 390.0,367.53 390.5,367.61 391.0,367.54 391.5,367.53 392.0,367.44 392.5,367.28 393.0,367.31 393.5,367.35 394.0,367.32 394.5,367.20 395.0,367.13 395.5,367.18 396.0,367.24 396.5,367.21 397.0,367.23 397.5,367.19 398.0,367.39 398.5,367.45 399.0,367.44 399.5,367.43 400.0,367.54 400.5,367.65 401.0,367.65 401.5,367.57 402.0,367.47 402.5,367.46 403.0,367.48 403.5,367.38 404.0,367.25 404.5,367.25 405.0,367.34 405.5,367.30 406.0,367.26 406.5,367.17 407.0,367.33 407.5,367.38 408.0,367.31 408.5,367.31 409.0,367.36 409.5,367.53 410.0,367.59 410.5,367.57 411.0,367.63 411.5,367.65 412.0,367.65 412.5,367.58 413.0,367.50 413.5,367.45 414.0,367.44 414.5,367.47 415.0,367.35 415.5,367.31 416.0,367.28 416.5,367.34 417.0,367.43 417.5,367.33 418.0,367.30 418.5,367.38 419.0,367.49 419.5,367.53 420.0,367.47 420.5,367.55 421.0,367.65 421.5,367.65 422.0,367.65 422.5,367.65 423.0,367.64 423.5,367.63 424.0,367.54 424.5,367.45 425.0,367.42 425.5,367.48 426.0,367.52 426.5,367.42 427.0,367.32 427.5,367.40 428.0,367.50 428.5,367.51 429.0,367.43 429.5,367.46 430.0,367.52 430.5,367.65 431.0,367.64 431.5,367.65 432.0,367.65 432.5,367.65 433.0,367.65 433.5,367.63 434.0,367.62 434.5,367.60 435.0,367.61 435.5,367.56 436.0,367.44 436.5,367.46 437.0,367.50 437.5,367.51 438.0,367.50 438.5,367.46 439.0,367.48 439.5,367.54 440.0,367.63 440.5,367.56 441.0,367.53 441.5,367.61 442.0,367.65 442.5,367.65 443.0,367.36 443.5,342.88 444.0,350.59 444.5,344.53 445.0,346.52 445.5,353.33 446.0,348.73 446.5,350.61 447.0,356.18 447.5,353.18 448.0,352.78 448.5,358.00 449.0,355.74 449.5,356.18 450.0,360.31 450.5,357.48 451.0,358.58 451.5,361.28 452.0,359.35 452.5,359.66 453.0,362.37 453.5,361.35 454.0,361.64 454.5,363.99 455.0,362.85 455.5,362.78 456.0,364.54 456.5,363.24 457.0,363.51 457.5,365.12 458.0,364.11 458.5,364.40 459.0,365.52 459.5,364.85 460.0,364.94 460.5,365.65 461.0,364.79 461.5,364.85 462.0,365.68 462.5,364.63 463.0,364.62 463.5,365.45 464.0,364.16 464.5,364.41 465.0,365.44 465.5,364.18 466.0,364.08 466.5,365.19 467.0,364.05 467.5,363.80 468.0,365.02 468.5,362.86 469.0,362.83 469.5,363.62 470.0,363.25 470.5,363.11 471.0,363.30 471.5,363.88 472.0,364.57 472.5,364.62 473.0,364.68 473.5,365.42 474.0,365.94 474.5,365.96 475.0,365.64 475.5,365.48 476.0,365.39 476.5,365.49 477.0,365.18 477.5,364.65 478.0,364.92 478.5,365.16 479.0,365.04 479.5,364.98 480.0,364.83 480.5,364.88 481.0,365.22 481.5,364.94 482.0,364.71 482.5,364.69 483.0,364.90 483.5,365.46 484.0,365.26 484.5,365.52 485.0,365.43 485.5,365.35 486.0,364.58 486.5,363.95 487.0,363.38 487.5,363.26 488.0,363.30 488.5,362.28 489.0,361.27 489.5,361.54 490.0,362.06 490.5,361.84 491.0,361.44 491.5,361.40 492.0,361.93 492.5,362.94 493.0,363.26 493.5,363.40 494.0,363.66 494.5,364.73 495.0,365.35 495.5,365.35 496.0,364.87 496.5,364.51 497.0,364.42 497.5,364.28 498.0,363.81 498.5,363.61 499.0,363.73 499.5,364.63 500.0,364.25 500.5,364.02 501.0,363.91 501.5,364.21 502.0,364.60 502.5,364.31 503.0,364.33 503.5,364.71 504.0,365.38 504.5,365.34 505.0,365.51 505.5,365.66 506.0,366.01 506.5,365.95 507.0,365.46 507.5,365.03 508.0,364.95 508.5,364.78 509.0,364.65 509.5,364.08 510.0,363.92 510.5,364.11 511.0,364.39 511.5,364.09 512.0,364.23 512.5,364.24 513.0,364.88 513.5,364.97 514.0,364.70 514.5,364.95 515.0,365.43 515.5,365.88 516.0,366.04 516.5,366.06 517.0,365.87 517.5,365.69 518.0,365.79 518.5,365.28 519.0,364.69 519.5,364.77 520.0,364.96 520.5,364.68 521.0,364.37 521.5,364.46 522.0,364.58 522.5,364.94 523.0,364.58 523.5,364.52 524.0,364.60 524.5,365.25 525.0,365.60 525.5,365.56 526.0,365.66 526.5,366.09 527.0,366.20 527.5,365.88 528.0,365.47 528.5,365.32 529.0,365.07 529.5,365.22 530.0,364.85 530.5,364.07 531.0,364.29 531.5,364.52 532.0,364.38 532.5,364.26 533.0,363.87 533.5,364.22 534.0,364.74 534.5,364.64 535.0,364.53 535.5,364.81 536.0,365.58 536.5,365.84 537.0,365.83 537.5,365.76 538.0,365.82 538.5,365.59 539.0,365.14 539.5,364.56 540.0,364.25 540.5,364.43 541.0,364.54 541.5,364.40 542.0,364.16 542.5,363.89 543.0,364.34 543.5,364.46 544.0,364.51 544.5,364.29 545.0,365.00 545.5,365.40 546.0,365.16 546.5,365.27 547.0,365.65 547.5,366.24 548.0,366.32 548.5,365.89 549.0,365.45 549.5,365.53 550.0,365.49 550.5,365.09 551.0,364.85 551.5,364.80 552.0,364.84 552.5,365.04 553.0,364.89 553.5,364.66 554.0,364.94 554.5,365.13 555.0,365.21 555.5,365.23 556.0,365.43 556.5,365.68 557.0,366.21 557.5,366.35 558.0,366.40 558.5,366.51 559.0,366.48 559.5,366.33 560.0,365.97 560.5,365.70 561.0,365.78 561.5,365.73 562.0,365.46 562.5,365.41 563.0,365.16 563.5,365.65 564.0,365.88 564.5,365.49 565.0,365.53 565.5,365.68 566.0,366.04 566.5,365.95 567.0,366.10 567.5,366.07 568.0,366.46 568.5,366.69 569.0,366.57 569.5,366.36 570.0,366.12 570.5,365.92 571.0,365.89 571.5,365.39 572.0,365.19 572.5,365.32 573.0,365.41 573.5,365.14 574.0,364.89 574.5,364.78 575.0,364.90 575.5,365.49 576.0,365.02 576.5,365.22 577.0,365.20 577.5,365.85 578.0,365.99 578.5,365.83 579.0,366.12 579.5,366.31 580.0,366.31 580.5,365.87 581.0,365.26 581.5,365.39 582.0,365.39 582.5,365.43 583.0,364.79 583.5,364.95 584.0,365.10 584.5,365.42 585.0,365.00 585.5,364.94 586.0,365.12 586.5,365.25 587.0,365.58 587.5,365.70 588.0,365.77 588.5,365.94 589.0,366.24 589.5,366.59 590.0,366.53 590.5,366.21 591.0,366.18 591.5,366.01 592.0,365.67 592.5,365.27 593.0,365.24 593.5,365.34 594.0,365.49 594.5,365.17 595.0,364.86 595.5,365.19 596.0,365.28 596.5,365.34 597.0,365.01 597.5,365.37 598.0,365.54 598.5,366.23 599.0,366.16 599.5,366.50 600.0,366.64 600.5,366.94 601.0,366.91 601.5,366.70 602.0,366.62 602.5,366.65 603.0,366.85 603.5,366.83 604.0,366.85 604.5,366.87 605.0,367.17 605.5,367.16 606.0,367.11 606.5,367.06 607.0,367.18 607.5,367.32 608.0,367.30 608.5,367.33 609.0,367.37 609.5,367.47 610.0,367.61 610.5,367.60 611.0,367.63 611.5,367.57 612.0,367.55 612.5,367.54 613.0,367.40 613.5,367.41 614.0,367.45 614.5,367.48 615.0,367.43 615.5,367.36 616.0,367.33 616.5,367.46 617.0,367.44 617.5,367.43 618.0,367.48 618.5,367.50 619.0,367.64 619.5,367.65 620.0,367.65 620.5,367.65 621.0,367.65 621.5,367.65 622.0,367.65 622.5,367.65 623.0,367.65 623.5,367.65 624.0,367.59 624.5,367.52 625.0,367.49 625.5,367.49 626.0,367.56 626.5,367.51 627.0,367.45 627.5,367.46 628.0,367.56 628.5,367.56 629.0,367.59 629.5,367.60 630.0,367.61 630.5,367.65 631.0,367.65 631.5,367.65 632.0,367.65 632.5,367.65 633.0,367.65 633.5,367.64 634.0,367.57 634.5,367.53 635.0,367.58 635.5,367.53 636.0,367.48 636.5,367.45 637.0,367.49 637.5,367.56 638.0,367.49 638.5,367.50 639.0,367.50 639.5,367.58 640.0,367.63 640.5,367.61 641.0,367.65 641.5,367.65 642.0,367.65 642.5,367.65 643.0,367.65 643.5,367.65 644.0,367.64 644.5,367.64 645.0,367.56 645.5,367.51 646.0,367.51 646.5,367.55 647.0,367.50 647.5,367.47 648.0,367.47 648.5,367.48 649.0,367.55 649.5,367.58 650.0,367.57 650.5,367.61 651.0,367.65 651.5,367.65 652.0,367.65 652.5,367.65 653.0,367.55 653.5,350.51 654.0,356.46 654.5,351.47 655.0,353.24 655.5,356.76 656.0,354.34 656.5,354.73 657.0,358.66 657.5,356.21 658.0,356.62 658.5,359.73 659.0,358.19 659.5,358.69 660.0,361.54 660.5,359.33 661.0,360.03 661.5,362.18 662.0,360.12 662.5,360.59 663.0,362.84 663.5,361.17 664.0,361.05 664.5,363.32 665.0,362.10 665.5,362.09 666.0,363.97 666.5,362.45 667.0,362.34 667.5,364.27 668.0,362.76 668.5,362.86 669.0,364.36 669.5,363.43 670.0,363.82 670.5,364.77 671.0,363.84 671.5,363.79 672.0,364.86 672.5,363.61 673.0,363.63 673.5,364.99 674.0,363.60 674.5,363.44 675.0,364.65 675.5,363.40 676.0,363.80 676.5,364.93 677.0,363.87 677.5,363.42 678.0,364.87 678.5,363.25 679.0,363.32 679.5,362.86 680.0,362.59 680.5,363.55 681.0,363.98 681.5,364.37 682.0,363.94 682.5,364.46 683.0,365.17 683.5,365.71 684.0,365.81 684.5,365.94 685.0,365.48 685.5,365.52 686.0,365.43 686.5,365.16 687.0,364.60 687.5,364.93 688.0,365.16 688.5,365.03 689.0,364.92 689.5,364.98 690.0,365.01 690.5,365.36 691.0,365.03 691.5,365.08 692.0,365.25 692.5,365.58 693.0,365.71 693.5,365.78 694.0,365.83 694.5,366.31 695.0,366.53 695.5,365.86 696.0,365.69 696.5,365.27 697.0,365.24 697.5,365.01 698.0,364.34 698.5,364.09 699.0,364.36 699.5,364.32 700.0,364.01 700.5,364.31 701.0,364.19 701.5,364.77 702.0,365.59 702.5,365.59 703.0,365.69 703.5,366.12 704.0,366.54 704.5,366.76 705.0,367.02 705.5,366.98 706.0,366.80 706.5,366.79 707.0,366.31 707.5,365.95 708.0,365.85 708.5,365.70 709.0,365.66 709.5,365.29 710.0,364.80 710.5,364.79 711.0,365.20 711.5,364.77 712.0,364.47 712.5,364.69 713.0,365.15 713.5,365.49 714.0,365.32 714.5,365.21 715.0,365.41 715.5,365.99 716.0,366.12 716.5,365.69 717.0,365.47 717.5,365.65 718.0,365.64 718.5,365.38 719.0,365.00 719.5,365.22 720.0,365.39 720.5,365.56 721.0,365.12 721.5,365.15 722.0,365.45 722.5,365.79 723.0,365.82 723.5,366.01 724.0,366.16 724.5,366.56 725.0,366.85 725.5,366.88 726.0,366.90 726.5,367.03 727.0,366.96 727.5,366.69 728.0,366.50 728.5,366.17 729.0,366.19 729.5,366.21 730.0,365.91 730.5,365.86 731.0,365.79 731.5,365.79 732.0,365.96 732.5,365.72 733.0,365.64 733.5,365.94 734.0,366.13 734.5,366.00 735.0,366.21 735.5,366.31 736.0,366.55 736.5,366.65 737.0,366.55 737.5,366.31 738.0,366.13 738.5,366.05 739.0,365.69 739.5,365.31 740.0,364.97 740.5,364.65 741.0,365.21 741.5,364.38 742.0,363.97 742.5,364.29 743.0,364.55 743.5,364.71 744.0,364.21 744.5,364.50 745.0,364.43 745.5,365.15 746.0,364.99 746.5,365.11 747.0,365.38 747.5,365.80 748.0,365.52 748.5,364.83 749.0,364.35 749.5,364.07 750.0,363.78 750.5,363.88 751.0,363.50 751.5,363.23 752.0,363.25 752.5,363.81 753.0,363.90 753.5,363.90 754.0,363.67 754.5,364.26 755.0,364.73 755.5,364.90 756.0,365.17 756.5,365.60 757.0,366.09 757.5,366.11 758.0,366.20 758.5,366.01 759.0,365.97 759.5,366.01 760.0,365.65 760.5,365.47 761.0,365.28 761.5,365.49 762.0,365.45 762.5,364.90 763.0,364.76 763.5,365.08 764.0,365.49 764.5,365.07 765.0,365.22 765.5,365.52 766.0,365.57 766.5,365.94 767.0,365.99 767.5,366.21 768.0,366.49 768.5,366.69 769.0,366.32 769.5,365.90 770.0,365.61 770.5,365.72 771.0,365.84 771.5,365.43 772.0,365.19 772.5,365.20 773.0,365.25 773.5,365.50 774.0,365.07 774.5,365.22 775.0,365.36 775.5,365.67 776.0,365.80 776.5,365.69 777.0,365.90 777.5,366.35 778.0,366.43 778.5,366.47 779.0,366.55 779.5,366.40 780.0,366.38 780.5,366.21 781.0,366.02 781.5,365.69 782.0,365.67 782.5,365.81 783.0,365.63 783.5,365.49 784.0,365.36 784.5,365.61 785.0,365.77 785.5,365.56 786.0,365.55 786.5,365.65 787.0,365.98 787.5,365.79 788.0,365.76 788.5,365.90 789.0,366.23 789.5,366.31 790.0,365.83 790.5,365.35 791.0,365.11 791.5,364.94 791.5,371.15 791.0,371.25 790.5,370.95 790.0,370.48 789.5,369.98 789.0,369.94 788.5,370.31 788.0,370.40 787.5,370.50 787.0,370.28 786.5,370.50 786.0,370.90 785.5,370.70 785.0,370.41 784.5,370.58 784.0,370.74 783.5,370.81 783.0,370.69 782.5,370.34 782.0,370.50 781.5,370.40 781.0,370.38 780.5,369.96 780.0,369.70 779.5,369.77 779.0,369.62 778.5,369.69 778.0,369.67 777.5,370.05 777.0,370.41 776.5,370.50 776.0,370.62 775.5,370.54 775.0,370.75 774.5,370.91 774.0,371.12 773.5,370.88 773.0,370.85 772.5,371.13 772.0,370.91 771.5,370.79 771.0,370.54 770.5,370.59 770.0,370.40 769.5,370.26 769.0,369.86 768.5,369.64 768.0,369.71 767.5,370.01 767.0,370.36 766.5,370.12 766.0,370.41 765.5,370.94 765.0,371.18 764.5,371.00 764.0,370.84 763.5,371.17 763.0,371.43 762.5,371.13 762.0,370.77 761.5,370.94 761.0,370.88 760.5,370.78 760.0,370.39 759.5,370.09 759.0,370.28 758.5,370.07 758.0,370.02 757.5,369.86 757.0,370.27 756.5,370.82 756.0,371.29 755.5,371.22 755.0,371.25 754.5,371.79 754.0,372.44 753.5,372.65 753.0,372.53 752.5,372.35 752.0,372.82 751.5,373.09 751.0,373.02 750.5,372.07 750.0,372.08 749.5,372.13 749.0,371.90 748.5,371.32 748.0,370.53 747.5,370.50 747.0,370.71 746.5,371.04 746.0,371.04 745.5,371.16 745.0,371.46 744.5,371.71 744.0,371.88 743.5,371.53 743.0,371.76 742.5,371.81 742.0,371.95 741.5,371.52 741.0,371.17 740.5,371.28 740.0,371.50 739.5,370.88 739.0,370.49 738.5,370.16 738.0,370.18 737.5,369.95 737.0,369.62 736.5,369.43 736.0,369.73 735.5,369.98 735.0,369.98 734.5,370.03 734.0,370.02 733.5,370.35 733.0,370.53 732.5,370.37 732.0,370.16 731.5,370.35 731.0,370.52 730.5,370.58 730.0,370.20 729.5,369.93 729.0,370.01 728.5,370.02 728.0,369.76 727.5,369.38 727.0,369.25 726.5,369.23 726.0,369.31 725.5,369.31 725.0,369.42 724.5,369.68 724.0,370.02 723.5,370.16 723.0,370.27 722.5,370.31 722.0,370.85 721.5,371.05 721.0,371.17 720.5,370.86 720.0,371.11 719.5,371.12 719.0,371.12 718.5,370.85 718.0,370.56 717.5,370.86 717.0,370.80 716.5,370.52 716.0,370.04 715.5,370.10 715.0,370.73 714.5,371.13 714.0,371.07 713.5,370.85 713.0,371.16 712.5,371.49 712.0,371.47 711.5,371.16 711.0,370.90 710.5,371.45 710.0,371.19 709.5,371.09 709.0,370.48 708.5,370.62 708.0,370.47 707.5,370.29 707.0,369.87 706.5,369.43 706.0,369.38 705.5,369.35 705.0,369.21 704.5,369.39 704.0,369.77 703.5,370.15 703.0,370.68 702.5,370.67 702.0,370.69 701.5,371.48 701.0,371.87 700.5,371.97 700.0,372.17 699.5,371.79 699.0,371.77 698.5,372.17 698.0,371.70 697.5,371.19 697.0,370.89 696.5,371.08 696.0,370.59 695.5,370.26 695.0,369.80 694.5,370.06 694.0,370.46 693.5,370.50 693.0,370.61 692.5,370.47 692.0,371.19 691.5,371.27 691.0,371.00 690.5,370.78 690.0,371.05 689.5,371.52 689.0,371.30 688.5,371.21 688.0,371.18 687.5,371.19 687.0,371.33 686.5,371.06 686.0,370.58 685.5,370.49 685.0,370.70 684.5,370.32 684.0,370.41 683.5,370.47 683.0,371.04 682.5,371.82 682.0,372.07 681.5,371.94 681.0,372.36 680.5,373.05 680.0,373.44 679.5,372.98 679.0,372.60 678.5,373.31 678.0,371.46 677.5,372.65 677.0,372.72 676.5,371.41 676.0,372.60 675.5,372.61 675.0,371.41 674.5,372.33 674.0,372.44 673.5,371.46 673.0,372.56 672.5,372.65 672.0,371.57 671.5,372.51 671.0,372.49 670.5,371.47 670.0,372.81 669.5,372.88 669.0,371.63 668.5,373.23 668.0,373.08 667.5,371.84 667.0,373.79 666.5,373.91 666.0,372.21 665.5,374.50 665.0,374.42 664.5,372.74 664.0,375.02 663.5,375.46 663.0,373.66 662.5,376.03 662.0,375.63 661.5,373.90 661.0,377.09 660.5,377.35 660.0,374.35 659.5,377.54 659.0,378.95 658.5,376.38 658.0,380.10 657.5,380.03 657.0,377.50 656.5,382.26 656.0,381.89 655.5,378.64 655.0,383.59 654.5,383.48 654.0,379.59 653.5,385.23 653.0,368.64 652.5,368.55 652.0,368.55 651.5,368.55 651.0,368.55 650.5,368.64 650.0,368.68 649.5,368.63 649.0,368.65 648.5,368.72 648.0,368.77 647.5,368.71 647.0,368.67 646.5,368.64 646.0,368.67 645.5,368.70 645.0,368.60 644.5,368.55 644.0,368.55 643.5,368.55 643.0,368.55 642.5,368.55 642.0,368.55 641.5,368.55 641.0,368.55 640.5,368.59 640.0,368.55 639.5,368.62 639.0,368.71 638.5,368.73 638.0,368.66 637.5,368.64 637.0,368.73 636.5,368.76 636.0,368.68 635.5,368.63 635.0,368.60 634.5,368.64 634.0,368.58 633.5,368.55 633.0,368.55 632.5,368.55 632.0,368.55 631.5,368.55 631.0,368.55 630.5,368.55 630.0,368.58 629.5,368.62 629.0,368.66 628.5,368.62 628.0,368.65 627.5,368.74 627.0,368.72 626.5,368.69 626.0,368.66 625.5,368.72 625.0,368.69 624.5,368.69 624.0,368.60 623.5,368.58 623.0,368.58 622.5,368.55 622.0,368.55 621.5,368.55 621.0,368.55 620.5,368.55 620.0,368.55 619.5,368.57 619.0,368.58 618.5,368.68 618.0,368.74 617.5,368.73 617.0,368.70 616.5,368.77 616.0,368.85 615.5,368.87 615.0,368.79 614.5,368.72 614.0,368.81 613.5,368.84 613.0,368.72 612.5,368.67 612.0,368.64 611.5,368.60 611.0,368.58 610.5,368.60 610.0,368.62 609.5,368.68 609.0,368.82 608.5,368.93 608.0,368.93 607.5,368.90 607.0,369.02 606.5,369.15 606.0,369.05 605.5,369.07 605.0,369.01 604.5,369.24 604.0,369.37 603.5,369.36 603.0,369.39 602.5,369.57 602.0,369.60 601.5,369.58 601.0,369.39 600.5,369.27 600.0,369.52 599.5,369.76 599.0,369.95 598.5,370.13 598.0,370.48 597.5,371.05 597.0,371.11 596.5,370.78 596.0,370.74 595.5,371.08 595.0,371.47 594.5,371.10 594.0,370.95 593.5,370.94 593.0,371.08 592.5,370.71 592.0,370.44 591.5,370.23 591.0,370.26 590.5,370.10 590.0,369.65 589.5,369.66 589.0,369.87 588.5,370.27 588.0,370.38 587.5,370.53 587.0,370.62 586.5,370.66 586.0,370.96 585.5,371.06 585.0,371.01 584.5,370.75 584.0,371.22 583.5,371.50 583.0,371.17 582.5,370.73 582.0,370.85 581.5,371.03 581.0,370.86 580.5,370.39 580.0,370.04 579.5,369.97 579.0,370.16 578.5,370.23 578.0,370.32 577.5,370.52 577.0,370.92 576.5,370.96 576.0,371.15 575.5,370.92 575.0,371.09 574.5,371.20 574.0,371.42 573.5,370.93 573.0,370.96 572.5,370.99 572.0,371.14 571.5,370.60 571.0,370.34 570.5,370.24 570.0,370.22 569.5,369.85 569.0,369.47 568.5,369.49 568.0,369.80 567.5,370.12 567.0,370.28 566.5,370.25 566.0,370.15 565.5,370.46 565.0,370.58 564.5,370.74 564.0,370.35 563.5,370.73 563.0,371.03 562.5,370.96 562.0,370.62 561.5,370.45 561.0,370.54 560.5,370.51 560.0,370.38 559.5,369.88 559.0,369.74 558.5,369.76 558.0,369.86 557.5,369.98 557.0,370.10 556.5,370.57 556.0,370.64 555.5,371.00 555.0,370.83 554.5,371.10 554.0,371.44 553.5,371.52 553.0,371.56 552.5,371.17 552.0,371.32 551.5,371.37 551.0,371.35 550.5,371.14 550.0,370.55 549.5,370.90 549.0,370.74 548.5,370.29 548.0,369.90 547.5,370.09 547.0,370.57 546.5,370.89 546.0,370.97 545.5,370.81 545.0,371.22 544.5,371.70 544.0,371.91 543.5,371.48 543.0,371.68 542.5,372.34 542.0,372.42 541.5,372.01 541.0,371.70 540.5,371.53 540.0,371.79 539.5,371.45 539.0,370.86 538.5,370.48 538.0,370.54 537.5,370.28 537.0,370.31 536.5,370.39 536.0,370.62 535.5,371.17 535.0,371.58 534.5,371.52 534.0,371.33 533.5,371.85 533.0,372.11 532.5,371.86 532.0,371.90 531.5,371.70 531.0,371.74 530.5,371.98 530.0,371.60 529.5,371.04 529.0,370.99 528.5,371.13 528.0,370.65 527.5,370.24 527.0,369.89 526.5,370.10 526.0,370.54 525.5,370.58 525.0,370.76 524.5,371.07 524.0,371.34 523.5,371.62 523.0,371.48 522.5,371.23 522.0,371.72 521.5,371.65 521.0,371.68 520.5,371.30 520.0,371.32 519.5,371.37 519.0,371.37 518.5,371.04 518.0,370.38 517.5,370.58 517.0,370.53 516.5,370.24 516.0,369.99 515.5,370.19 515.0,370.86 514.5,371.21 514.0,371.42 513.5,371.31 513.0,371.67 512.5,371.98 512.0,371.90 511.5,371.76 511.0,371.72 510.5,372.26 510.0,372.12 509.5,372.26 509.0,371.42 508.5,371.50 508.0,371.55 507.5,371.16 507.0,370.82 506.5,370.41 506.0,370.26 505.5,370.31 505.0,370.69 504.5,370.64 504.0,370.83 503.5,371.32 503.0,371.76 502.5,371.71 502.0,371.78 501.5,371.97 501.0,372.31 500.5,372.11 500.0,372.25 499.5,371.96 499.0,372.21 498.5,372.27 498.0,372.38 497.5,371.68 497.0,371.64 496.5,371.55 496.0,371.50 495.5,370.97 495.0,370.80 494.5,371.87 494.0,372.78 493.5,372.76 493.0,373.02 492.5,373.46 492.0,374.49 491.5,375.43 491.0,375.42 490.5,374.12 490.0,374.79 489.5,374.46 489.0,374.86 488.5,373.68 488.0,372.81 487.5,373.02 487.0,373.01 486.5,372.05 486.0,371.48 485.5,371.05 485.0,370.72 484.5,370.77 484.0,371.00 483.5,370.78 483.0,371.08 482.5,371.29 482.0,371.62 481.5,371.29 481.0,371.15 480.5,371.50 480.0,371.18 479.5,371.10 479.0,371.07 478.5,371.31 478.0,371.36 477.5,371.30 477.0,371.06 476.5,370.66 476.0,371.03 475.5,370.86 475.0,370.69 474.5,370.07 474.0,370.26 473.5,370.72 473.0,371.23 472.5,371.41 472.0,371.71 471.5,372.13 471.0,372.75 470.5,373.19 470.0,372.95 469.5,372.83 469.0,373.22 468.5,373.26 468.0,371.27 467.5,372.05 467.0,372.34 466.5,371.04 466.0,371.83 465.5,372.09 465.0,370.77 464.5,372.09 464.0,372.02 463.5,370.79 463.0,371.44 462.5,371.43 462.0,370.57 461.5,371.60 461.0,371.32 460.5,370.31 460.0,371.28 459.5,371.59 459.0,370.66 458.5,372.03 458.0,372.28 457.5,371.25 457.0,372.45 456.5,373.03 456.0,371.68 455.5,373.09 455.0,373.23 454.5,372.19 454.0,374.47 453.5,375.29 453.0,373.39 452.5,375.72 452.0,376.72 451.5,374.97 451.0,377.95 450.5,378.86 450.0,376.10 449.5,379.71 449.0,380.16 448.5,378.70 448.0,383.77 447.5,384.07 447.0,380.56 446.5,386.27 446.0,387.71 445.5,383.36 445.0,389.27 444.5,391.99 444.0,385.26 443.5,393.07 443.0,368.78 442.5,368.55 442.0,368.55 441.5,368.58 441.0,368.65 440.5,368.62 440.0,368.60 439.5,368.62 439.0,368.69 438.5,368.75 438.0,368.72 437.5,368.64 437.0,368.73 436.5,368.75 436.0,368.69 435.5,368.64 435.0,368.62 434.5,368.66 434.0,368.58 433.5,368.55 433.0,368.55 432.5,368.55 432.0,368.55 431.5,368.55 431.0,368.55 430.5,368.58 430.0,368.65 429.5,368.75 429.0,368.74 428.5,368.72 428.0,368.73 427.5,368.80 427.0,368.85 426.5,368.84 426.0,368.70 425.5,368.75 425.0,368.73 424.5,368.77 424.0,368.67 423.5,368.61 423.0,368.56 422.5,368.58 422.0,368.55 421.5,368.55 421.0,368.55 420.5,368.63 420.0,368.70 419.5,368.73 419.0,368.67 418.5,368.75 418.0,368.83 417.5,368.88 417.0,368.82 416.5,368.85 416.0,368.86 415.5,368.89 415.0,368.80 414.5,368.76 414.0,368.73 413.5,368.80 413.0,368.70 412.5,368.62 412.0,368.55 411.5,368.55 411.0,368.57 410.5,368.60 410.0,368.65 409.5,368.71 409.0,368.78 408.5,368.84 408.0,368.81 407.5,368.78 407.0,368.88 406.5,368.95 406.0,368.99 405.5,368.93 405.0,368.87 404.5,368.97 404.0,368.94 403.5,368.79 403.0,368.74 402.5,368.74 402.0,368.70 401.5,368.63 401.0,368.55 400.5,368.55 400.0,368.67 399.5,368.75 399.0,368.75 398.5,368.78 398.0,368.88 397.5,368.98 397.0,369.01 396.5,368.93 396.0,368.92 395.5,369.00 395.0,369.07 394.5,369.06 394.0,368.89 393.5,368.89 393.0,368.93 392.5,368.85 392.0,368.79 391.5,368.69 391.0,368.66 390.5,368.61 390.0,368.67 389.5,368.67 389.0,368.71 388.5,368.88 388.0,368.91 387.5,368.91 387.0,368.88 386.5,369.00 386.0,369.04 385.5,369.12 385.0,369.10 384.5,369.02 384.0,369.03 383.5,369.11 383.0,369.05 382.5,368.90 382.0,368.88 381.5,368.89 381.0,368.83 380.5,368.84 380.0,368.76 379.5,368.96 379.0,369.17 378.5,369.42 378.0,369.61 377.5,369.82 377.0,370.17 376.5,370.67 376.0,370.78 375.5,370.67 375.0,371.11 374.5,371.37 374.0,371.34 373.5,371.05 373.0,370.79 372.5,371.12 372.0,371.30 371.5,371.03 371.0,370.41 370.5,370.40 370.0,370.22 369.5,369.98 369.0,370.18 368.5,370.25 368.0,370.69 367.5,371.30 367.0,371.22 366.5,371.19 366.0,371.24 365.5,371.87 365.0,372.45 364.5,372.11 364.0,371.90 363.5,371.84 363.0,372.56 362.5,372.10 362.0,372.01 361.5,371.43 361.0,371.58 360.5,371.32 360.0,371.27 359.5,370.68 359.0,370.37 358.5,370.50 358.0,371.22 357.5,371.19 357.0,371.27 356.5,371.72 356.0,372.20 355.5,372.67 355.0,372.28 354.5,372.36 354.0,372.91 353.5,373.26 353.0,373.10 352.5,372.26 352.0,372.52 351.5,372.84 351.0,372.51 350.5,372.15 350.0,371.26 349.5,371.29 349.0,371.48 348.5,370.77 348.0,370.74 347.5,370.90 347.0,371.57 346.5,372.14 346.0,372.13 345.5,371.88 345.0,372.87 344.5,372.97 344.0,373.22 343.5,372.51 343.0,372.36 342.5,373.04 342.0,372.82 341.5,372.50 341.0,372.01 340.5,372.08 340.0,371.77 339.5,371.66 339.0,371.10 338.5,370.57 338.0,370.41 337.5,370.50 337.0,370.66 336.5,370.94 336.0,371.14 335.5,371.34 335.0,371.87 334.5,372.02 334.0,371.56 333.5,372.06 333.0,372.25 332.5,372.35 332.0,372.14 331.5,371.84 331.0,372.05 330.5,372.06 330.0,371.72 329.5,370.99 329.0,370.90 328.5,371.06 328.0,370.63 327.5,370.16 327.0,370.00 326.5,370.66 326.0,370.97 325.5,371.15 325.0,371.05 324.5,371.37 324.0,371.69 323.5,372.05 323.0,372.08 322.5,371.75 322.0,372.26 321.5,372.42 321.0,372.10 320.5,371.98 320.0,371.26 319.5,371.49 319.0,371.63 318.5,371.01 318.0,370.47 317.5,370.54 317.0,370.42 316.5,370.41 316.0,370.65 315.5,370.51 315.0,371.22 314.5,371.59 314.0,371.56 313.5,371.78 313.0,371.50 312.5,372.09 312.0,372.36 311.5,371.91 311.0,371.31 310.5,371.66 310.0,371.52 309.5,371.16 309.0,370.74 308.5,370.26 308.0,370.20 307.5,370.00 307.0,369.75 306.5,369.24 306.0,369.35 305.5,369.41 305.0,369.53 304.5,369.62 304.0,369.80 303.5,370.25 303.0,370.37 302.5,370.61 302.0,370.61 301.5,370.62 301.0,370.91 300.5,371.13 300.0,370.96 299.5,370.70 299.0,371.05 298.5,371.16 298.0,371.05 297.5,370.49 297.0,370.35 296.5,370.29 296.0,370.21 295.5,370.36 295.0,370.47 294.5,370.62 294.0,371.19 293.5,371.25 293.0,371.30 292.5,370.98 292.0,371.21 291.5,371.43 291.0,371.45 290.5,370.90 290.0,371.06 289.5,371.06 289.0,371.25 288.5,371.00 288.0,370.32 287.5,370.52 287.0,370.39 286.5,370.27 286.0,369.91 285.5,369.61 285.0,369.84 284.5,369.97 284.0,370.26 283.5,370.29 283.0,370.44 282.5,371.01 282.0,371.18 281.5,371.05 281.0,370.63 280.5,371.28 280.0,371.43 279.5,371.75 279.0,371.69 278.5,371.70 278.0,372.34 277.5,372.49 277.0,372.54 276.5,371.96 276.0,372.43 275.5,372.18 275.0,371.99 274.5,371.44 274.0,371.51 273.5,372.47 273.0,372.69 272.5,372.15 272.0,371.67 271.5,371.88 271.0,372.10 270.5,371.79 270.0,370.95 269.5,370.84 269.0,370.78 268.5,370.88 268.0,370.87 267.5,370.49 267.0,370.25 266.5,370.10 266.0,370.01 265.5,369.64 265.0,369.36 264.5,369.21 264.0,369.30 263.5,369.51 263.0,369.40 262.5,369.64 262.0,370.10 261.5,370.12 261.0,369.72 260.5,370.45 260.0,370.35 259.5,369.81 259.0,370.67 258.5,370.87 258.0,370.07 257.5,370.81 257.0,371.14 256.5,370.30 256.0,371.46 255.5,371.61 255.0,370.67 254.5,372.16 254.0,372.28 253.5,371.13 253.0,372.28 252.5,372.40 252.0,371.63 251.5,373.25 251.0,373.27 250.5,371.96 250.0,373.45 249.5,374.19 249.0,372.46 248.5,374.59 248.0,374.65 247.5,373.11 247.0,375.66 246.5,375.62 246.0,374.23 245.5,376.49 245.0,376.25 244.5,374.71 244.0,377.77 243.5,377.52 243.0,375.69 242.5,378.29 242.0,378.78 241.5,376.31 241.0,379.50 240.5,379.78 240.0,376.71 239.5,381.12 239.0,380.54 238.5,378.72 238.0,383.31 237.5,383.13 237.0,379.89 236.5,384.48 236.0,386.00 235.5,373.31 235.0,370.09 234.5,369.97 234.0,369.67 233.5,369.31 233.0,368.85 232.5,368.89 232.0,369.07 231.5,369.22 231.0,369.35 230.5,369.26 230.0,369.37 229.5,369.58 229.0,369.66 228.5,369.55 228.0,369.48 227.5,369.66 227.0,369.78 226.5,369.78 226.0,369.45 225.5,369.50 225.0,369.64 224.5,369.52 224.0,369.27 223.5,369.10 223.0,369.13 222.5,368.99 222.0,369.10 221.5,369.14 221.0,369.28 220.5,369.38 220.0,369.62 219.5,369.70 219.0,369.65 218.5,369.82 218.0,369.96 217.5,369.93 217.0,369.94 216.5,369.78 216.0,369.82 215.5,369.97 215.0,369.81 214.5,369.65 214.0,369.55 213.5,369.50 213.0,369.36 212.5,369.15 212.0,369.02 211.5,369.15 211.0,369.36 210.5,369.40 210.0,369.47 209.5,369.51 209.0,369.95 208.5,370.07 208.0,369.92 207.5,369.82 207.0,370.01 206.5,370.17 206.0,370.20 205.5,370.03 205.0,369.79 204.5,370.06 204.0,370.14 203.5,370.05 203.0,369.84 202.5,369.69 202.0,369.83 201.5,369.60 201.0,369.71 200.5,369.64 200.0,370.23 199.5,370.57 199.0,370.83 198.5,371.07 198.0,371.35 197.5,371.95 197.0,372.38 196.5,372.75 196.0,372.17 195.5,372.64 195.0,373.38 194.5,373.38 194.0,372.71 193.5,372.61 193.0,372.76 192.5,372.81 192.0,372.37 191.5,371.56 191.0,371.40 190.5,372.00 190.0,372.84 189.5,372.78 189.0,372.98 188.5,374.05 188.0,374.55 187.5,374.85 187.0,374.43 186.5,374.90 186.0,375.68 185.5,376.10 185.0,375.43 184.5,375.06 184.0,375.03 183.5,375.82 183.0,375.47 182.5,374.20 182.0,373.17 181.5,373.19 181.0,373.37 180.5,372.55 180.0,372.18 179.5,372.74 179.0,373.22 178.5,373.02 178.0,372.87 177.5,372.32 177.0,372.57 176.5,372.58 176.0,371.68 175.5,371.02 175.0,370.56 174.5,370.65 174.0,370.63 173.5,370.41 173.0,370.24 172.5,370.13 172.0,370.23 171.5,370.15 171.0,369.76 170.5,369.44 170.0,369.40 169.5,369.49 169.0,369.70 168.5,369.79 168.0,369.95 167.5,370.37 167.0,370.29 166.5,370.28 166.0,370.25 165.5,370.70 165.0,370.80 164.5,370.57 164.0,370.36 163.5,370.37 163.0,370.40 162.5,370.45 162.0,370.39 161.5,370.02 161.0,370.05 160.5,369.77 160.0,369.66 159.5,369.44 159.0,369.45 158.5,369.71 158.0,370.03 157.5,370.32 157.0,370.44 156.5,370.94 156.0,371.80 155.5,372.33 155.0,372.10 154.5,372.20 154.0,372.82 153.5,373.78 153.0,373.57 152.5,373.01 152.0,372.94 151.5,373.29 151.0,373.03 150.5,372.45 150.0,371.82 149.5,371.95 149.0,371.67 148.5,371.80 148.0,372.17 147.5,372.73 147.0,373.46 146.5,373.96 146.0,375.01 145.5,374.74 145.0,374.92 144.5,375.58 144.0,376.04 143.5,375.91 143.0,375.51 142.5,376.27 142.0,376.35 141.5,376.12 141.0,374.74 140.5,374.62 140.0,374.70 139.5,374.16 139.0,373.03 138.5,372.07 138.0,372.85 137.5,373.59 137.0,374.31 136.5,374.72 136.0,375.18 135.5,375.89 135.0,376.55 134.5,376.57 134.0,376.36 133.5,377.45 133.0,378.55 132.5,377.76 132.0,377.09 131.5,376.51 131.0,377.46 130.5,377.02 130.0,376.03 129.5,375.13 129.0,374.84 128.5,374.36 128.0,373.61 127.5,373.97 127.0,374.21 126.5,375.80 126.0,376.66 125.5,377.36 125.0,377.55 124.5,377.11 124.0,378.47 123.5,378.69 123.0,379.26 122.5,377.65 122.0,378.28 121.5,378.80 121.0,377.52 120.5,376.75 120.0,375.82 119.5,376.15 119.0,375.90 118.5,374.25 118.0,373.71 117.5,372.63 117.0,373.07 116.5,374.07 116.0,374.49 115.5,374.12 115.0,374.74 114.5,376.16 114.0,376.48 113.5,375.78 113.0,375.77 112.5,376.38 112.0,376.58 111.5,375.60 111.0,374.72 110.5,374.62 110.0,374.63 109.5,374.32 109.0,373.26 108.5,372.10 108.0,372.10 107.5,371.95 107.0,371.08 106.5,370.91 106.0,371.33 105.5,371.54 105.0,371.91 104.5,372.22 104.0,371.74 103.5,372.18 103.0,372.37 102.5,372.46 102.0,372.19 101.5,371.75 101.0,371.96 100.5,371.97 100.0,371.39 99.5,370.97 99.0,371.31 98.5,371.05 98.0,371.02 97.5,370.83 97.0,370.10 96.5,370.23 96.0,370.51 95.5,370.68 95.0,370.76 94.5,371.28 94.0,371.91 93.5,372.15 93.0,372.11 92.5,371.98 92.0,372.54 91.5,373.16 91.0,372.75 90.5,372.99 90.0,372.65 89.5,372.62 89.0,372.83 88.5,372.53 88.0,371.95 87.5,371.93 87.0,372.00 86.5,371.38 86.0,370.94 85.5,370.79 85.0,371.53 84.5,372.38 84.0,372.62 83.5,372.93 83.0,373.16 82.5,374.03 82.0,375.12 81.5,374.67 81.0,374.02 80.5,375.13 80.0,375.28 79.5,375.73 79.0,375.31 78.5,374.96 78.0,375.22 77.5,375.02 77.0,374.19 76.5,373.19 76.0,372.97 75.5,372.73 75.0,373.03 74.5,373.85 74.0,373.86 73.5,375.86 73.0,376.93 72.5,377.38 72.0,377.89 71.5,378.44 71.0,379.51 70.5,379.51 70.0,379.09 69.5,378.77 69.0,379.56 68.5,379.98 68.0,379.49 67.5,378.18 67.0,376.53 66.5,376.86 66.0,376.02 65.5,374.68 65.0,373.50 64.5,373.85 64.0,374.95 63.5,375.31 63.0,375.20 62.5,375.19 62.0,375.88 61.5,376.51 61.0,376.54 60.5,376.73 60.0,376.23 59.5,377.16 59.0,377.89 58.5,377.50 58.0,376.00 57.5,376.04 57.0,376.51 56.5,375.95 56.0,374.18 55.5,373.44 55.0,373.53 54.5,372.61 54.0,372.44 53.5,372.56 53.0,373.54 52.5,373.92 52.0,375.06 51.5,374.32 51.0,374.21 50.5,375.00 50.0,375.60 49.5,375.08 49.0,374.37 48.5,374.11 48.0,374.59 47.5,374.58 47.0,374.23 46.5,372.93 46.0,373.19 45.5,373.00 45.0,372.49 44.5,371.49 44.0,370.93 43.5,371.09 43.0,371.94 42.5,372.05 42.0,371.99 41.5,372.32 41.0,372.43 40.5,371.83 40.0,372.98 39.5,373.18 39.0,372.30 38.5,374.42 38.0,374.27 37.5,372.94 37.0,375.69 36.5,376.72 36.0,375.33 35.5,378.04 35.0,378.45 34.5,376.44 34.0,379.54 33.5,380.65 33.0,376.82" fill="#eeaa82" opacity="0.9"/><polygon points="33.0,363.75 33.5,361.75 34.0,362.11 34.5,363.93 35.0,362.63 35.5,363.11 36.0,364.60 36.5,363.57 37.0,364.22 37.5,365.68 38.0,364.96 38.5,365.14 39.0,366.01 39.5,365.48 40.0,365.60 40.5,366.34 41.0,365.79 41.5,365.96 42.0,366.20 42.5,366.13 43.0,366.33 43.5,366.44 44.0,366.68 44.5,366.42 45.0,366.02 45.5,365.75 46.0,365.72 46.5,365.55 47.0,365.17 47.5,364.76 48.0,364.90 48.5,364.88 49.0,364.70 49.5,364.34 50.0,364.23 50.5,364.66 51.0,365.02 51.5,364.94 52.0,364.80 52.5,364.97 53.0,365.35 53.5,365.66 54.0,365.73 54.5,365.73 55.0,365.60 55.5,365.57 56.0,364.81 56.5,364.50 57.0,364.05 57.5,364.30 58.0,364.40 58.5,363.89 59.0,363.63 59.5,363.71 60.0,363.68 60.5,364.06 61.0,363.68 61.5,363.42 62.0,364.37 62.5,364.61 63.0,364.65 63.5,364.69 64.0,364.66 64.5,365.17 65.0,365.35 65.5,364.70 66.0,363.96 66.5,363.92 67.0,363.46 67.5,362.93 68.0,362.12 68.5,361.61 69.0,362.23 69.5,363.13 70.0,362.54 70.5,362.49 71.0,362.78 71.5,363.23 72.0,363.24 72.5,363.59 73.0,363.87 73.5,364.30 74.0,365.05 74.5,365.26 75.0,365.65 75.5,365.69 76.0,365.51 76.5,365.58 77.0,365.05 77.5,364.62 78.0,364.69 78.5,364.96 79.0,364.39 79.5,364.32 80.0,364.25 80.5,364.63 81.0,365.11 81.5,364.63 82.0,364.76 82.5,365.01 83.0,365.37 83.5,365.89 84.0,365.90 84.5,365.92 85.0,366.48 85.5,366.77 86.0,366.75 86.5,366.51 87.0,366.28 87.5,366.35 88.0,366.27 88.5,365.91 89.0,365.62 89.5,365.84 90.0,366.04 90.5,365.75 91.0,365.57 91.5,365.61 92.0,365.82 92.5,366.18 93.0,365.96 93.5,366.06 94.0,366.16 94.5,366.49 95.0,366.76 95.5,366.77 96.0,366.93 96.5,366.99 97.0,367.00 97.5,366.84 98.0,366.69 98.5,366.63 99.0,366.51 99.5,366.57 100.0,366.44 100.5,366.17 101.0,366.19 101.5,366.37 102.0,366.01 102.5,366.04 103.0,365.84 103.5,365.95 104.0,366.21 104.5,365.98 105.0,366.09 105.5,366.29 106.0,366.54 106.5,366.75 107.0,366.60 107.5,366.23 108.0,366.04 108.5,365.94 109.0,365.49 109.5,365.02 110.0,365.00 110.5,364.95 111.0,364.65 111.5,364.57 112.0,363.95 112.5,364.05 113.0,364.69 113.5,364.20 114.0,363.90 114.5,364.42 115.0,364.53 115.5,365.03 116.0,365.15 116.5,365.29 117.0,365.55 117.5,365.81 118.0,365.55 118.5,365.00 119.0,364.37 119.5,364.12 120.0,364.33 120.5,363.74 121.0,363.09 121.5,363.20 122.0,363.37 122.5,363.09 123.0,362.60 123.5,362.29 124.0,363.06 124.5,363.49 125.0,363.70 125.5,363.11 126.0,363.73 126.5,364.45 127.0,365.18 127.5,365.18 128.0,365.04 128.5,364.76 129.0,364.79 129.5,364.47 130.0,363.74 130.5,363.50 131.0,363.60 131.5,363.81 132.0,363.56 132.5,363.13 133.0,363.30 133.5,363.83 134.0,363.96 134.5,363.73 135.0,363.71 135.5,364.13 136.0,364.57 136.5,364.87 137.0,364.75 137.5,365.40 138.0,365.87 138.5,366.11 139.0,365.45 139.5,365.01 140.0,364.97 140.5,365.05 141.0,364.60 141.5,364.22 142.0,363.98 142.5,364.05 143.0,364.50 143.5,364.36 144.0,363.97 144.5,364.25 145.0,364.42 145.5,364.95 146.0,364.97 146.5,365.13 147.0,365.42 147.5,365.78 148.0,365.98 148.5,366.17 149.0,366.21 149.5,366.26 150.0,366.28 150.5,365.68 151.0,365.65 151.5,365.56 152.0,365.71 152.5,365.65 153.0,365.27 153.5,365.40 154.0,365.77 154.5,365.94 155.0,365.93 155.5,366.07 156.0,366.35 156.5,366.64 157.0,366.84 157.5,367.01 158.0,367.20 158.5,367.29 159.0,367.46 159.5,367.42 160.0,367.32 160.5,367.21 161.0,367.23 161.5,367.23 162.0,366.99 162.5,366.96 163.0,366.83 163.5,367.00 164.0,366.97 164.5,366.77 165.0,366.70 165.5,366.93 166.0,367.06 166.5,366.95 167.0,366.94 167.5,367.06 168.0,367.14 168.5,367.27 169.0,367.34 169.5,367.40 170.0,367.46 170.5,367.45 171.0,367.29 171.5,367.08 172.0,367.01 172.5,366.98 173.0,367.12 173.5,366.88 174.0,366.82 174.5,366.82 175.0,366.93 175.5,366.59 176.0,366.27 176.5,365.92 177.0,366.00 177.5,365.98 178.0,365.87 178.5,365.64 179.0,365.56 179.5,365.81 180.0,366.00 180.5,366.07 181.0,365.47 181.5,365.36 182.0,365.53 182.5,365.01 183.0,364.76 183.5,364.21 184.0,364.56 184.5,364.88 185.0,364.23 185.5,363.93 186.0,364.31 186.5,364.59 187.0,364.70 187.5,364.54 188.0,364.58 188.5,365.20 189.0,365.70 189.5,365.53 190.0,365.71 190.5,366.07 191.0,366.43 191.5,366.32 192.0,366.04 192.5,365.83 193.0,365.69 193.5,365.97 194.0,365.60 194.5,365.47 195.0,365.39 195.5,365.80 196.0,365.92 196.5,366.02 197.0,365.99 197.5,366.16 198.0,366.40 198.5,366.61 199.0,366.58 199.5,366.79 200.0,367.10 200.5,367.30 201.0,367.33 201.5,367.33 202.0,367.25 202.5,367.32 203.0,367.22 203.5,367.19 204.0,367.05 204.5,367.10 205.0,367.25 205.5,367.21 206.0,367.11 206.5,367.07 207.0,367.07 207.5,367.23 208.0,367.19 208.5,367.15 209.0,367.27 209.5,367.34 210.0,367.39 210.5,367.41 211.0,367.47 211.5,367.56 212.0,367.64 212.5,367.56 213.0,367.44 213.5,367.41 214.0,367.38 214.5,367.35 215.0,367.29 215.5,367.24 216.0,367.21 216.5,367.30 217.0,367.23 217.5,367.19 218.0,367.13 218.5,367.31 219.0,367.38 219.5,367.32 220.0,367.30 220.5,367.38 221.0,367.55 221.5,367.63 222.0,367.58 222.5,367.61 223.0,367.59 223.5,367.60 224.0,367.47 224.5,367.44 225.0,367.32 225.5,367.37 226.0,367.35 226.5,367.32 227.0,367.21 227.5,367.24 228.0,367.36 228.5,367.37 229.0,367.36 229.5,367.34 230.0,367.41 230.5,367.52 231.0,367.52 231.5,367.56 232.0,367.61 232.5,367.68 233.0,367.72 233.5,367.53 234.0,367.30 234.5,367.22 235.0,367.13 235.5,365.72 236.0,358.77 236.5,359.57 237.0,362.22 237.5,360.43 238.0,361.00 238.5,362.71 239.0,361.38 239.5,362.02 240.0,363.56 240.5,362.34 241.0,362.73 241.5,364.24 242.0,362.89 242.5,362.99 243.0,364.53 243.5,363.19 244.0,363.50 244.5,364.76 245.0,363.56 245.5,363.92 246.0,365.22 246.5,364.06 247.0,364.39 247.5,365.49 248.0,364.63 248.5,365.06 249.0,365.85 249.5,365.24 250.0,365.29 250.5,366.09 251.0,365.59 251.5,365.56 252.0,366.34 252.5,365.85 253.0,365.91 253.5,366.47 254.0,366.04 254.5,366.23 255.0,366.77 255.5,366.30 256.0,366.32 256.5,366.99 257.0,366.67 257.5,366.62 258.0,367.13 258.5,366.73 259.0,366.78 259.5,367.20 260.0,366.91 260.5,367.00 261.0,367.30 261.5,367.07 262.0,367.11 262.5,367.39 263.0,367.38 263.5,367.44 264.0,367.46 264.5,367.52 265.0,367.45 265.5,367.30 266.0,367.15 266.5,367.08 267.0,367.09 267.5,366.90 268.0,366.74 268.5,366.72 269.0,366.63 269.5,366.85 270.0,366.67 270.5,366.36 271.0,366.31 271.5,366.27 272.0,366.23 272.5,365.86 273.0,365.83 273.5,366.05 274.0,366.41 274.5,366.34 275.0,366.09 275.5,365.92 276.0,366.16 276.5,366.22 277.0,366.01 277.5,365.83 278.0,366.06 278.5,366.15 279.0,366.40 279.5,366.31 280.0,366.47 280.5,366.66 281.0,366.85 281.5,366.75 282.0,366.64 282.5,366.64 283.0,366.89 283.5,366.98 284.0,367.07 284.5,367.17 285.0,367.24 285.5,367.34 286.0,367.26 286.5,366.97 287.0,366.93 287.5,366.97 288.0,366.86 288.5,366.67 289.0,366.62 289.5,366.65 290.0,366.68 290.5,366.61 291.0,366.35 291.5,366.32 292.0,366.50 292.5,366.71 293.0,366.55 293.5,366.42 294.0,366.50 294.5,366.81 295.0,366.87 295.5,367.06 296.0,367.05 296.5,366.92 297.0,367.01 297.5,366.77 298.0,366.60 298.5,366.66 299.0,366.64 299.5,366.76 300.0,366.62 300.5,366.58 301.0,366.72 301.5,366.85 302.0,366.87 302.5,366.89 303.0,366.95 303.5,367.13 304.0,367.24 304.5,367.34 305.0,367.40 305.5,367.41 306.0,367.50 306.5,367.48 307.0,367.36 307.5,367.14 308.0,367.06 308.5,367.02 309.0,366.83 309.5,366.47 310.0,366.40 310.5,366.30 311.0,366.32 311.5,366.07 312.0,365.96 312.5,366.04 313.0,366.39 313.5,366.25 314.0,366.29 314.5,366.28 315.0,366.57 315.5,366.90 316.0,366.81 316.5,366.86 317.0,366.93 317.5,366.94 318.0,366.90 318.5,366.52 319.0,366.39 319.5,366.30 320.0,366.36 320.5,366.24 321.0,366.04 321.5,365.87 322.0,366.05 322.5,366.19 323.0,366.03 323.5,366.13 324.0,366.25 324.5,366.42 325.0,366.45 325.5,366.46 326.0,366.66 326.5,366.77 327.0,367.11 327.5,367.11 328.0,366.75 328.5,366.66 329.0,366.75 329.5,366.62 330.0,366.36 330.5,366.26 331.0,366.21 331.5,366.37 332.0,366.18 332.5,365.87 333.0,366.12 333.5,366.04 334.0,366.31 334.5,366.13 335.0,366.21 335.5,366.46 336.0,366.68 336.5,366.67 337.0,366.67 337.5,366.93 338.0,367.03 338.5,366.86 339.0,366.70 339.5,366.32 340.0,366.22 340.5,366.11 341.0,366.10 341.5,365.97 342.0,365.74 342.5,365.77 343.0,365.83 343.5,365.62 344.0,365.42 344.5,365.55 345.0,365.77 345.5,366.19 346.0,365.94 346.5,366.18 347.0,366.37 347.5,366.66 348.0,366.74 348.5,366.70 349.0,366.45 349.5,366.30 350.0,366.47 350.5,366.12 351.0,365.82 351.5,365.63 352.0,365.73 352.5,365.87 353.0,365.64 353.5,365.65 354.0,365.80 354.5,365.94 355.0,366.02 355.5,365.89 356.0,365.99 356.5,366.28 357.0,366.61 357.5,366.52 358.0,366.71 358.5,366.91 359.0,367.03 359.5,366.78 360.0,366.64 360.5,366.51 361.0,366.46 361.5,366.44 362.0,366.10 362.5,365.95 363.0,365.87 363.5,366.04 364.0,366.15 364.5,366.02 365.0,365.94 365.5,366.10 366.0,366.39 366.5,366.42 367.0,366.56 367.5,366.56 368.0,366.83 368.5,367.06 369.0,367.04 369.5,367.13 370.0,366.95 370.5,366.97 371.0,366.95 371.5,366.71 372.0,366.53 372.5,366.66 373.0,366.67 373.5,366.56 374.0,366.39 374.5,366.50 375.0,366.68 375.5,366.81 376.0,366.75 376.5,366.84 377.0,367.01 377.5,367.26 378.0,367.40 378.5,367.43 379.0,367.58 379.5,367.68 380.0,367.76 380.5,367.73 381.0,367.76 381.5,367.70 382.0,367.73 382.5,367.70 383.0,367.62 383.5,367.63 384.0,367.65 384.5,367.64 385.0,367.63 385.5,367.61 386.0,367.61 386.5,367.66 387.0,367.67 387.5,367.68 388.0,367.70 388.5,367.72 389.0,367.81 389.5,367.81 390.0,367.81 390.5,367.85 391.0,367.82 391.5,367.82 392.0,367.77 392.5,367.69 393.0,367.71 393.5,367.72 394.0,367.71 394.5,367.65 395.0,367.62 395.5,367.64 396.0,367.67 396.5,367.66 397.0,367.66 397.5,367.65 398.0,367.75 398.5,367.78 399.0,367.77 399.5,367.77 400.0,367.82 400.5,367.88 401.0,367.88 401.5,367.84 402.0,367.78 402.5,367.78 403.0,367.79 403.5,367.74 404.0,367.67 404.5,367.67 405.0,367.72 405.5,367.70 406.0,367.68 406.5,367.64 407.0,367.72 407.5,367.74 408.0,367.70 408.5,367.70 409.0,367.73 409.5,367.82 410.0,367.85 410.5,367.83 411.0,367.87 411.5,367.88 412.0,367.88 412.5,367.84 413.0,367.80 413.5,367.77 414.0,367.77 414.5,367.79 415.0,367.72 415.5,367.71 416.0,367.69 416.5,367.72 417.0,367.76 417.5,367.71 418.0,367.70 418.5,367.74 419.0,367.79 419.5,367.82 420.0,367.79 420.5,367.82 421.0,367.88 421.5,367.88 422.0,367.88 422.5,367.88 423.0,367.87 423.5,367.87 424.0,367.82 424.5,367.77 425.0,367.76 425.5,367.79 426.0,367.81 426.5,367.76 427.0,367.71 427.5,367.75 428.0,367.80 428.5,367.81 429.0,367.76 429.5,367.78 430.0,367.81 430.5,367.88 431.0,367.87 431.5,367.88 432.0,367.88 432.5,367.88 433.0,367.88 433.5,367.87 434.0,367.86 434.5,367.85 435.0,367.85 435.5,367.83 436.0,367.77 436.5,367.78 437.0,367.80 437.5,367.81 438.0,367.80 438.5,367.78 439.0,367.79 439.5,367.82 440.0,367.86 440.5,367.83 441.0,367.82 441.5,367.85 442.0,367.88 442.5,367.88 443.0,367.73 443.5,355.49 444.0,359.35 444.5,356.31 445.0,357.31 445.5,360.71 446.0,358.41 446.5,359.35 447.0,362.14 447.5,360.64 448.0,360.44 448.5,363.05 449.0,361.92 449.5,362.14 450.0,364.20 450.5,362.79 451.0,363.34 451.5,364.69 452.0,363.72 452.5,363.88 453.0,365.24 453.5,364.72 454.0,364.87 454.5,366.05 455.0,365.47 455.5,365.44 456.0,366.32 456.5,365.67 457.0,365.81 457.5,366.61 458.0,366.10 458.5,366.25 459.0,366.81 459.5,366.48 460.0,366.52 460.5,366.87 461.0,366.44 461.5,366.47 462.0,366.89 462.5,366.37 463.0,366.36 463.5,366.78 464.0,366.13 464.5,366.26 465.0,366.77 465.5,366.14 466.0,366.09 466.5,366.65 467.0,366.08 467.5,365.95 468.0,366.56 468.5,365.48 469.0,365.46 469.5,365.86 470.0,365.67 470.5,365.61 471.0,365.70 471.5,365.99 472.0,366.33 472.5,366.36 473.0,366.39 473.5,366.76 474.0,367.02 474.5,367.03 475.0,366.87 475.5,366.79 476.0,366.75 476.5,366.80 477.0,366.64 477.5,366.37 478.0,366.51 478.5,366.63 479.0,366.57 479.5,366.54 480.0,366.46 480.5,366.49 481.0,366.66 481.5,366.52 482.0,366.41 482.5,366.40 483.0,366.50 483.5,366.78 484.0,366.68 484.5,366.81 485.0,366.76 485.5,366.72 486.0,366.34 486.5,366.02 487.0,365.74 487.5,365.68 488.0,365.70 488.5,365.19 489.0,364.69 489.5,364.82 490.0,365.08 490.5,364.97 491.0,364.77 491.5,364.75 492.0,365.01 492.5,365.52 493.0,365.68 493.5,365.75 494.0,365.88 494.5,366.41 495.0,366.73 495.5,366.72 496.0,366.49 496.5,366.31 497.0,366.26 497.5,366.19 498.0,365.95 498.5,365.85 499.0,365.92 499.5,366.37 500.0,366.17 500.5,366.06 501.0,366.00 501.5,366.15 502.0,366.35 502.5,366.20 503.0,366.22 503.5,366.41 504.0,366.74 504.5,366.72 505.0,366.80 505.5,366.88 506.0,367.06 506.5,367.02 507.0,366.78 507.5,366.56 508.0,366.52 508.5,366.44 509.0,366.38 509.5,366.09 510.0,366.01 510.5,366.10 511.0,366.25 511.5,366.09 512.0,366.17 512.5,366.17 513.0,366.49 513.5,366.53 514.0,366.40 514.5,366.52 515.0,366.76 515.5,366.99 516.0,367.07 516.5,367.08 517.0,366.98 517.5,366.90 518.0,366.94 518.5,366.69 519.0,366.40 519.5,366.44 520.0,366.53 520.5,366.39 521.0,366.24 521.5,366.28 522.0,366.34 522.5,366.52 523.0,366.34 523.5,366.31 524.0,366.35 524.5,366.67 525.0,366.85 525.5,366.83 526.0,366.88 526.5,367.09 527.0,367.15 527.5,366.99 528.0,366.78 528.5,366.71 529.0,366.59 529.5,366.66 530.0,366.47 530.5,366.09 531.0,366.20 531.5,366.31 532.0,366.24 532.5,366.18 533.0,365.98 533.5,366.16 534.0,366.42 534.5,366.37 535.0,366.32 535.5,366.45 536.0,366.84 536.5,366.97 537.0,366.96 537.5,366.93 538.0,366.96 538.5,366.84 539.0,366.62 539.5,366.33 540.0,366.18 540.5,366.27 541.0,366.32 541.5,366.25 542.0,366.13 542.5,365.99 543.0,366.22 543.5,366.28 544.0,366.30 544.5,366.20 545.0,366.55 545.5,366.75 546.0,366.63 546.5,366.68 547.0,366.88 547.5,367.17 548.0,367.21 548.5,367.00 549.0,366.77 549.5,366.82 550.0,366.79 550.5,366.59 551.0,366.48 551.5,366.45 552.0,366.47 552.5,366.57 553.0,366.49 553.5,366.38 554.0,366.52 554.5,366.62 555.0,366.65 555.5,366.66 556.0,366.77 556.5,366.89 557.0,367.15 557.5,367.22 558.0,367.25 558.5,367.30 559.0,367.29 559.5,367.21 560.0,367.03 560.5,366.90 561.0,366.94 561.5,366.92 562.0,366.78 562.5,366.75 563.0,366.63 563.5,366.88 564.0,366.99 564.5,366.80 565.0,366.81 565.5,366.89 566.0,367.07 566.5,367.02 567.0,367.10 567.5,367.09 568.0,367.28 568.5,367.40 569.0,367.34 569.5,367.23 570.0,367.11 570.5,367.01 571.0,366.99 571.5,366.75 572.0,366.64 572.5,366.71 573.0,366.76 573.5,366.62 574.0,366.49 574.5,366.44 575.0,366.50 575.5,366.79 576.0,366.56 576.5,366.66 577.0,366.65 577.5,366.97 578.0,367.05 578.5,366.97 579.0,367.11 579.5,367.21 580.0,367.21 580.5,366.99 581.0,366.68 581.5,366.74 582.0,366.74 582.5,366.77 583.0,366.45 583.5,366.53 584.0,366.60 584.5,366.76 585.0,366.55 585.5,366.52 586.0,366.61 586.5,366.67 587.0,366.84 587.5,366.90 588.0,366.94 588.5,367.02 589.0,367.17 589.5,367.35 590.0,367.31 590.5,367.16 591.0,367.14 591.5,367.06 592.0,366.89 592.5,366.69 593.0,366.67 593.5,366.72 594.0,366.79 594.5,366.64 595.0,366.48 595.5,366.64 596.0,366.69 596.5,366.72 597.0,366.56 597.5,366.73 598.0,366.82 598.5,367.17 599.0,367.13 599.5,367.30 600.0,367.37 600.5,367.52 601.0,367.50 601.5,367.40 602.0,367.36 602.5,367.37 603.0,367.47 603.5,367.46 604.0,367.48 604.5,367.49 605.0,367.63 605.5,367.63 606.0,367.61 606.5,367.58 607.0,367.64 607.5,367.71 608.0,367.70 608.5,367.72 609.0,367.74 609.5,367.78 610.0,367.85 610.5,367.85 611.0,367.86 611.5,367.83 612.0,367.83 612.5,367.82 613.0,367.75 613.5,367.76 614.0,367.77 614.5,367.79 615.0,367.76 615.5,367.73 616.0,367.71 616.5,367.78 617.0,367.77 617.5,367.76 618.0,367.79 618.5,367.80 619.0,367.87 619.5,367.88 620.0,367.88 620.5,367.88 621.0,367.88 621.5,367.88 622.0,367.88 622.5,367.88 623.0,367.88 623.5,367.88 624.0,367.84 624.5,367.81 625.0,367.79 625.5,367.79 626.0,367.83 626.5,367.81 627.0,367.78 627.5,367.78 628.0,367.83 628.5,367.83 629.0,367.85 629.5,367.85 630.0,367.85 630.5,367.88 631.0,367.88 631.5,367.88 632.0,367.88 632.5,367.88 633.0,367.88 633.5,367.87 634.0,367.83 634.5,367.82 635.0,367.84 635.5,367.82 636.0,367.79 636.5,367.78 637.0,367.79 637.5,367.83 638.0,367.79 638.5,367.80 639.0,367.80 639.5,367.84 640.0,367.87 640.5,367.86 641.0,367.88 641.5,367.88 642.0,367.88 642.5,367.88 643.0,367.88 643.5,367.88 644.0,367.87 644.5,367.87 645.0,367.83 645.5,367.80 646.0,367.80 646.5,367.82 647.0,367.80 647.5,367.78 648.0,367.78 648.5,367.79 649.0,367.83 649.5,367.84 650.0,367.84 650.5,367.85 651.0,367.88 651.5,367.88 652.0,367.88 652.5,367.88 653.0,367.83 653.5,359.30 654.0,362.28 654.5,359.78 655.0,360.67 655.5,362.43 656.0,361.22 656.5,361.42 657.0,363.38 657.5,362.15 658.0,362.36 658.5,363.91 659.0,363.14 659.5,363.39 660.0,364.82 660.5,363.72 661.0,364.07 661.5,365.14 662.0,364.11 662.5,364.35 663.0,365.47 663.5,364.64 664.0,364.58 664.5,365.71 665.0,365.10 665.5,365.09 666.0,366.04 666.5,365.27 667.0,365.22 667.5,366.19 668.0,365.43 668.5,365.48 669.0,366.23 669.5,365.77 670.0,365.96 670.5,366.44 671.0,365.97 671.5,365.95 672.0,366.48 672.5,365.85 673.0,365.87 673.5,366.55 674.0,365.85 674.5,365.77 675.0,366.37 675.5,365.75 676.0,365.95 676.5,366.51 677.0,365.99 677.5,365.76 678.0,366.49 678.5,365.68 679.0,365.71 679.5,365.48 680.0,365.35 680.5,365.82 681.0,366.04 681.5,366.24 682.0,366.02 682.5,366.28 683.0,366.64 683.5,366.91 684.0,366.96 684.5,367.02 685.0,366.79 685.5,366.81 686.0,366.76 686.5,366.63 687.0,366.35 687.5,366.51 688.0,366.63 688.5,366.56 689.0,366.51 689.5,366.54 690.0,366.55 690.5,366.73 691.0,366.56 691.5,366.59 692.0,366.67 692.5,366.84 693.0,366.91 693.5,366.94 694.0,366.97 694.5,367.20 695.0,367.31 695.5,366.98 696.0,366.90 696.5,366.69 697.0,366.67 697.5,366.55 698.0,366.22 698.5,366.09 699.0,366.23 699.5,366.21 700.0,366.06 700.5,366.20 701.0,366.15 701.5,366.43 702.0,366.85 702.5,366.84 703.0,366.89 703.5,367.11 704.0,367.32 704.5,367.43 705.0,367.56 705.5,367.54 706.0,367.45 706.5,367.44 707.0,367.21 707.5,367.03 708.0,366.97 708.5,366.90 709.0,366.88 709.5,366.70 710.0,366.45 710.5,366.45 711.0,366.65 711.5,366.44 712.0,366.28 712.5,366.40 713.0,366.63 713.5,366.79 714.0,366.71 714.5,366.65 715.0,366.75 715.5,367.05 716.0,367.11 716.5,366.89 717.0,366.79 717.5,366.88 718.0,366.87 718.5,366.74 719.0,366.55 719.5,366.66 720.0,366.74 720.5,366.83 721.0,366.61 721.5,366.62 722.0,366.77 722.5,366.95 723.0,366.96 723.5,367.05 724.0,367.13 724.5,367.33 725.0,367.48 725.5,367.49 726.0,367.50 726.5,367.57 727.0,367.53 727.5,367.40 728.0,367.30 728.5,367.13 729.0,367.15 729.5,367.15 730.0,367.00 730.5,366.98 731.0,366.94 731.5,366.95 732.0,367.03 732.5,366.91 733.0,366.87 733.5,367.02 734.0,367.12 734.5,367.05 735.0,367.15 735.5,367.20 736.0,367.33 736.5,367.38 737.0,367.33 737.5,367.21 738.0,367.12 738.5,367.07 739.0,366.89 739.5,366.70 740.0,366.54 740.5,366.37 741.0,366.66 741.5,366.24 742.0,366.03 742.5,366.20 743.0,366.33 743.5,366.40 744.0,366.15 744.5,366.30 745.0,366.27 745.5,366.63 746.0,366.55 746.5,366.61 747.0,366.74 747.5,366.95 748.0,366.81 748.5,366.46 749.0,366.23 749.5,366.08 750.0,365.94 750.5,365.99 751.0,365.80 751.5,365.66 752.0,365.68 752.5,365.95 753.0,366.00 753.5,366.00 754.0,365.88 754.5,366.18 755.0,366.41 755.5,366.50 756.0,366.63 756.5,366.85 757.0,367.09 757.5,367.11 758.0,367.15 758.5,367.06 759.0,367.04 759.5,367.06 760.0,366.87 760.5,366.79 761.0,366.69 761.5,366.80 762.0,366.78 762.5,366.50 763.0,366.43 763.5,366.59 764.0,366.79 764.5,366.59 765.0,366.66 765.5,366.81 766.0,366.84 766.5,367.02 767.0,367.04 767.5,367.16 768.0,367.29 768.5,367.40 769.0,367.21 769.5,367.00 770.0,366.85 770.5,366.91 771.0,366.97 771.5,366.77 772.0,366.64 772.5,366.65 773.0,366.67 773.5,366.80 774.0,366.58 774.5,366.66 775.0,366.73 775.5,366.88 776.0,366.95 776.5,366.90 777.0,367.00 777.5,367.22 778.0,367.26 778.5,367.29 779.0,367.33 779.5,367.25 780.0,367.24 780.5,367.15 781.0,367.06 781.5,366.89 782.0,366.89 782.5,366.95 783.0,366.86 783.5,366.79 784.0,366.73 784.5,366.86 785.0,366.94 785.5,366.83 786.0,366.83 786.5,366.87 787.0,367.04 787.5,366.94 788.0,366.93 788.5,367.00 789.0,367.17 789.5,367.21 790.0,366.96 790.5,366.72 791.0,366.60 791.5,366.52 791.5,369.63 791.0,369.68 790.5,369.52 790.0,369.29 789.5,369.04 789.0,369.02 788.5,369.20 788.0,369.25 787.5,369.30 787.0,369.19 786.5,369.30 786.0,369.50 785.5,369.40 785.0,369.25 784.5,369.34 784.0,369.42 783.5,369.45 783.0,369.39 782.5,369.22 782.0,369.30 781.5,369.25 781.0,369.24 780.5,369.03 780.0,368.90 779.5,368.93 779.0,368.86 778.5,368.90 778.0,368.89 777.5,369.08 777.0,369.26 776.5,369.30 776.0,369.36 775.5,369.32 775.0,369.42 774.5,369.50 774.0,369.61 773.5,369.49 773.0,369.48 772.5,369.62 772.0,369.50 771.5,369.45 771.0,369.32 770.5,369.35 770.0,369.25 769.5,369.18 769.0,368.98 768.5,368.87 768.0,368.91 767.5,369.06 767.0,369.23 766.5,369.11 766.0,369.25 765.5,369.52 765.0,369.64 764.5,369.55 764.0,369.47 763.5,369.63 763.0,369.77 762.5,369.62 762.0,369.43 761.5,369.52 761.0,369.49 760.5,369.44 760.0,369.25 759.5,369.10 759.0,369.19 758.5,369.08 758.0,369.06 757.5,368.98 757.0,369.18 756.5,369.46 756.0,369.69 755.5,369.66 755.0,369.67 754.5,369.95 754.0,370.27 753.5,370.38 753.0,370.32 752.5,370.22 752.0,370.46 751.5,370.59 751.0,370.56 750.5,370.08 750.0,370.09 749.5,370.11 749.0,370.00 748.5,369.71 748.0,369.32 747.5,369.30 747.0,369.40 746.5,369.57 746.0,369.57 745.5,369.63 745.0,369.78 744.5,369.90 744.0,369.99 743.5,369.82 743.0,369.93 742.5,369.96 742.0,370.02 741.5,369.81 741.0,369.63 740.5,369.69 740.0,369.80 739.5,369.49 739.0,369.29 738.5,369.13 738.0,369.14 737.5,369.02 737.0,368.86 736.5,368.76 736.0,368.92 735.5,369.04 735.0,369.04 734.5,369.07 734.0,369.06 733.5,369.22 733.0,369.31 732.5,369.23 732.0,369.13 731.5,369.23 731.0,369.31 730.5,369.34 730.0,369.15 729.5,369.01 729.0,369.05 728.5,369.06 728.0,368.93 727.5,368.74 727.0,368.67 726.5,368.66 726.0,368.70 725.5,368.70 725.0,368.76 724.5,368.89 724.0,369.06 723.5,369.13 723.0,369.19 722.5,369.21 722.0,369.47 721.5,369.57 721.0,369.63 720.5,369.48 720.0,369.61 719.5,369.61 719.0,369.61 718.5,369.48 718.0,369.33 717.5,369.48 717.0,369.45 716.5,369.31 716.0,369.07 715.5,369.10 715.0,369.41 714.5,369.62 714.0,369.58 713.5,369.48 713.0,369.63 712.5,369.79 712.0,369.79 711.5,369.63 711.0,369.50 710.5,369.78 710.0,369.65 709.5,369.59 709.0,369.29 708.5,369.36 708.0,369.29 707.5,369.19 707.0,368.98 706.5,368.77 706.0,368.74 705.5,368.72 705.0,368.66 704.5,368.75 704.0,368.93 703.5,369.13 703.0,369.39 702.5,369.38 702.0,369.39 701.5,369.79 701.0,369.98 700.5,370.03 700.0,370.14 699.5,369.94 699.0,369.93 698.5,370.13 698.0,369.90 697.5,369.64 697.0,369.49 696.5,369.59 696.0,369.35 695.5,369.18 695.0,368.95 694.5,369.08 694.0,369.28 693.5,369.30 693.0,369.35 692.5,369.28 692.0,369.65 691.5,369.69 691.0,369.55 690.5,369.44 690.0,369.57 689.5,369.81 689.0,369.70 688.5,369.65 688.0,369.64 687.5,369.64 687.0,369.72 686.5,369.58 686.0,369.34 685.5,369.30 685.0,369.40 684.5,369.21 684.0,369.25 683.5,369.29 683.0,369.57 682.5,369.96 682.0,370.09 681.5,370.02 681.0,370.23 680.5,370.58 680.0,370.77 679.5,370.54 679.0,370.35 678.5,370.70 678.0,369.78 677.5,370.37 677.0,370.41 676.5,369.76 676.0,370.35 675.5,370.36 675.0,369.75 674.5,370.22 674.0,370.27 673.5,369.78 673.0,370.33 672.5,370.37 672.0,369.84 671.5,370.31 671.0,370.29 670.5,369.78 670.0,370.46 669.5,370.49 669.0,369.86 668.5,370.67 668.0,370.59 667.5,369.97 667.0,370.94 666.5,371.00 666.0,370.16 665.5,371.30 665.0,371.26 664.5,370.42 664.0,371.56 663.5,371.78 663.0,370.88 662.5,372.06 662.0,371.87 661.5,371.00 661.0,372.59 660.5,372.73 660.0,371.22 659.5,372.82 659.0,373.53 658.5,372.24 658.0,374.10 657.5,374.07 657.0,372.80 656.5,375.18 656.0,375.00 655.5,373.37 655.0,375.85 654.5,375.79 654.0,373.85 653.5,376.66 653.0,368.37 652.5,368.33 652.0,368.33 651.5,368.33 651.0,368.33 650.5,368.37 650.0,368.39 649.5,368.37 649.0,368.37 648.5,368.41 648.0,368.43 647.5,368.41 647.0,368.38 646.5,368.37 646.0,368.38 645.5,368.40 645.0,368.35 644.5,368.33 644.0,368.33 643.5,368.33 643.0,368.33 642.5,368.33 642.0,368.33 641.5,368.33 641.0,368.33 640.5,368.34 640.0,368.33 639.5,368.36 639.0,368.40 638.5,368.42 638.0,368.38 637.5,368.37 637.0,368.41 636.5,368.43 636.0,368.39 635.5,368.37 635.0,368.35 634.5,368.37 634.0,368.34 633.5,368.33 633.0,368.33 632.5,368.33 632.0,368.33 631.5,368.33 631.0,368.33 630.5,368.33 630.0,368.34 629.5,368.36 629.0,368.38 628.5,368.36 628.0,368.37 627.5,368.42 627.0,368.41 626.5,368.40 626.0,368.38 625.5,368.41 625.0,368.40 624.5,368.39 624.0,368.35 623.5,368.34 623.0,368.34 622.5,368.33 622.0,368.33 621.5,368.33 621.0,368.33 620.5,368.33 620.0,368.33 619.5,368.33 619.0,368.34 618.5,368.39 618.0,368.42 617.5,368.42 617.0,368.40 616.5,368.44 616.0,368.48 615.5,368.49 615.0,368.45 614.5,368.41 614.0,368.46 613.5,368.47 613.0,368.41 612.5,368.39 612.0,368.37 611.5,368.35 611.0,368.34 610.5,368.35 610.0,368.36 609.5,368.39 609.0,368.46 608.5,368.51 608.0,368.51 607.5,368.50 607.0,368.56 606.5,368.62 606.0,368.58 605.5,368.58 605.0,368.56 604.5,368.67 604.0,368.73 603.5,368.73 603.0,368.74 602.5,368.84 602.0,368.85 601.5,368.84 601.0,368.74 600.5,368.68 600.0,368.81 599.5,368.93 599.0,369.03 598.5,369.11 598.0,369.29 597.5,369.58 597.0,369.61 596.5,369.44 596.0,369.42 595.5,369.59 595.0,369.78 594.5,369.60 594.0,369.52 593.5,369.52 593.0,369.59 592.5,369.40 592.0,369.27 591.5,369.16 591.0,369.18 590.5,369.10 590.0,368.87 589.5,368.88 589.0,368.98 588.5,369.18 588.0,369.24 587.5,369.31 587.0,369.36 586.5,369.38 586.0,369.53 585.5,369.58 585.0,369.56 584.5,369.43 584.0,369.66 583.5,369.80 583.0,369.63 582.5,369.42 582.0,369.47 581.5,369.57 581.0,369.48 580.5,369.24 580.0,369.07 579.5,369.03 579.0,369.13 578.5,369.16 578.0,369.21 577.5,369.31 577.0,369.51 576.5,369.53 576.0,369.63 575.5,369.51 575.0,369.60 574.5,369.65 574.0,369.76 573.5,369.52 573.0,369.53 572.5,369.54 572.0,369.62 571.5,369.35 571.0,369.22 570.5,369.17 570.0,369.16 569.5,368.98 569.0,368.78 568.5,368.79 568.0,368.95 567.5,369.11 567.0,369.19 566.5,369.17 566.0,369.12 565.5,369.28 565.0,369.34 564.5,369.42 564.0,369.23 563.5,369.42 563.0,369.57 562.5,369.53 562.0,369.36 561.5,369.28 561.0,369.32 560.5,369.31 560.0,369.24 559.5,368.99 559.0,368.92 558.5,368.93 558.0,368.98 557.5,369.04 557.0,369.10 556.5,369.34 556.0,369.37 555.5,369.55 555.0,369.46 554.5,369.60 554.0,369.77 553.5,369.81 553.0,369.83 552.5,369.63 552.0,369.71 551.5,369.73 551.0,369.72 550.5,369.62 550.0,369.33 549.5,369.50 549.0,369.42 548.5,369.20 548.0,369.00 547.5,369.10 547.0,369.33 546.5,369.50 546.0,369.53 545.5,369.46 545.0,369.66 544.5,369.90 544.0,370.01 543.5,369.79 543.0,369.89 542.5,370.22 542.0,370.26 541.5,370.06 541.0,369.90 540.5,369.82 540.0,369.94 539.5,369.77 539.0,369.48 538.5,369.29 538.0,369.32 537.5,369.19 537.0,369.20 536.5,369.24 536.0,369.36 535.5,369.64 535.0,369.84 534.5,369.81 534.0,369.72 533.5,369.97 533.0,370.10 532.5,369.98 532.0,370.00 531.5,369.90 531.0,369.92 530.5,370.04 530.0,369.85 529.5,369.57 529.0,369.54 528.5,369.62 528.0,369.37 527.5,369.17 527.0,368.99 526.5,369.10 526.0,369.32 525.5,369.34 525.0,369.43 524.5,369.59 524.0,369.72 523.5,369.86 523.0,369.79 522.5,369.67 522.0,369.91 521.5,369.87 521.0,369.89 520.5,369.70 520.0,369.71 519.5,369.73 519.0,369.74 518.5,369.57 518.0,369.24 517.5,369.34 517.0,369.32 516.5,369.17 516.0,369.05 515.5,369.15 515.0,369.48 514.5,369.66 514.0,369.76 513.5,369.70 513.0,369.89 512.5,370.04 512.0,370.00 511.5,369.93 511.0,369.91 510.5,370.18 510.0,370.11 509.5,370.18 509.0,369.76 508.5,369.80 508.0,369.83 507.5,369.63 507.0,369.46 506.5,369.25 506.0,369.18 505.5,369.21 505.0,369.39 504.5,369.37 504.0,369.46 503.5,369.71 503.0,369.93 502.5,369.91 502.0,369.94 501.5,370.04 501.0,370.21 500.5,370.10 500.0,370.18 499.5,370.03 499.0,370.15 498.5,370.18 498.0,370.24 497.5,369.89 497.0,369.87 496.5,369.83 496.0,369.80 495.5,369.54 495.0,369.45 494.5,369.99 494.0,370.44 493.5,370.43 493.0,370.56 492.5,370.78 492.0,371.29 491.5,371.77 491.0,371.76 490.5,371.11 490.0,371.45 489.5,371.28 489.0,371.48 488.5,370.89 488.0,370.46 487.5,370.56 487.0,370.55 486.5,370.08 486.0,369.79 485.5,369.58 485.0,369.41 484.5,369.43 484.0,369.55 483.5,369.44 483.0,369.59 482.5,369.70 482.0,369.86 481.5,369.70 481.0,369.62 480.5,369.80 480.0,369.64 479.5,369.60 479.0,369.59 478.5,369.71 478.0,369.73 477.5,369.70 477.0,369.58 476.5,369.38 476.0,369.57 475.5,369.48 475.0,369.39 474.5,369.09 474.0,369.18 473.5,369.41 473.0,369.66 472.5,369.76 472.0,369.91 471.5,370.11 471.0,370.42 470.5,370.64 470.0,370.52 469.5,370.47 469.0,370.66 468.5,370.68 468.0,369.69 467.5,370.08 467.0,370.22 466.5,369.57 466.0,369.97 465.5,370.10 465.0,369.44 464.5,370.09 464.0,370.06 463.5,369.45 463.0,369.77 462.5,369.77 462.0,369.34 461.5,369.85 461.0,369.71 460.5,369.21 460.0,369.69 459.5,369.85 459.0,369.38 458.5,370.06 458.0,370.19 457.5,369.67 457.0,370.27 456.5,370.56 456.0,369.89 455.5,370.59 455.0,370.67 454.5,370.15 454.0,371.28 453.5,371.70 453.0,370.75 452.5,371.91 452.0,372.41 451.5,371.54 451.0,373.02 450.5,373.48 450.0,372.10 449.5,373.90 449.0,374.13 448.5,373.40 448.0,375.93 447.5,376.09 447.0,374.33 446.5,377.18 446.0,377.91 445.5,375.73 445.0,378.68 444.5,380.04 444.0,376.68 443.5,380.58 443.0,368.44 442.5,368.33 442.0,368.33 441.5,368.34 441.0,368.37 440.5,368.36 440.0,368.35 439.5,368.36 439.0,368.40 438.5,368.42 438.0,368.41 437.5,368.37 437.0,368.41 436.5,368.42 436.0,368.40 435.5,368.37 435.0,368.36 434.5,368.38 434.0,368.34 433.5,368.33 433.0,368.33 432.5,368.33 432.0,368.33 431.5,368.33 431.0,368.33 430.5,368.34 430.0,368.37 429.5,368.42 429.0,368.42 428.5,368.41 428.0,368.42 427.5,368.45 427.0,368.47 426.5,368.47 426.0,368.40 425.5,368.42 425.0,368.42 424.5,368.43 424.0,368.39 423.5,368.35 423.0,368.33 422.5,368.34 422.0,368.33 421.5,368.33 421.0,368.33 420.5,368.36 420.0,368.40 419.5,368.41 419.0,368.38 418.5,368.42 418.0,368.47 417.5,368.49 417.0,368.46 416.5,368.47 416.0,368.48 415.5,368.49 415.0,368.45 414.5,368.43 414.0,368.41 413.5,368.45 413.0,368.40 412.5,368.36 412.0,368.33 411.5,368.33 411.0,368.33 410.5,368.35 410.0,368.37 409.5,368.40 409.0,368.44 408.5,368.47 408.0,368.45 407.5,368.44 407.0,368.49 406.5,368.52 406.0,368.55 405.5,368.51 405.0,368.48 404.5,368.54 404.0,368.52 403.5,368.45 403.0,368.42 402.5,368.42 402.0,368.40 401.5,368.36 401.0,368.33 400.5,368.33 400.0,368.39 399.5,368.42 399.0,368.42 398.5,368.44 398.0,368.49 397.5,368.54 397.0,368.56 396.5,368.51 396.0,368.51 395.5,368.55 395.0,368.58 394.5,368.58 394.0,368.49 393.5,368.50 393.0,368.52 392.5,368.48 392.0,368.45 391.5,368.39 391.0,368.38 390.5,368.36 390.0,368.39 389.5,368.39 389.0,368.40 388.5,368.49 388.0,368.50 387.5,368.50 387.0,368.49 386.5,368.55 386.0,368.57 385.5,368.61 385.0,368.60 384.5,368.56 384.0,368.56 383.5,368.60 383.0,368.58 382.5,368.50 382.0,368.49 381.5,368.50 381.0,368.47 380.5,368.47 380.0,368.43 379.5,368.53 379.0,368.63 378.5,368.76 378.0,368.86 377.5,368.96 377.0,369.13 376.5,369.38 376.0,369.44 375.5,369.38 375.0,369.61 374.5,369.73 374.0,369.72 373.5,369.57 373.0,369.44 372.5,369.61 372.0,369.70 371.5,369.56 371.0,369.25 370.5,369.25 370.0,369.16 369.5,369.04 369.0,369.14 368.5,369.18 368.0,369.39 367.5,369.70 367.0,369.66 366.5,369.64 366.0,369.67 365.5,369.99 365.0,370.27 364.5,370.11 364.0,370.00 363.5,369.97 363.0,370.33 362.5,370.10 362.0,370.06 361.5,369.77 361.0,369.84 360.5,369.71 360.0,369.68 359.5,369.39 359.0,369.24 358.5,369.30 358.0,369.66 357.5,369.65 357.0,369.68 356.5,369.91 356.0,370.15 355.5,370.39 355.0,370.19 354.5,370.23 354.0,370.50 353.5,370.68 353.0,370.60 352.5,370.18 352.0,370.31 351.5,370.47 351.0,370.30 350.5,370.12 350.0,369.68 349.5,369.70 349.0,369.79 348.5,369.43 348.0,369.42 347.5,369.50 347.0,369.84 346.5,370.12 346.0,370.11 345.5,369.99 345.0,370.49 344.5,370.53 344.0,370.66 343.5,370.31 343.0,370.23 342.5,370.57 342.0,370.46 341.5,370.30 341.0,370.05 340.5,370.09 340.0,369.93 339.5,369.88 339.0,369.60 338.5,369.34 338.0,369.25 337.5,369.30 337.0,369.38 336.5,369.52 336.0,369.62 335.5,369.72 335.0,369.98 334.5,370.06 334.0,369.83 333.5,370.08 333.0,370.17 332.5,370.23 332.0,370.12 331.5,369.97 331.0,370.08 330.5,370.08 330.0,369.91 329.5,369.54 329.0,369.50 328.5,369.58 328.0,369.36 327.5,369.13 327.0,369.05 326.5,369.38 326.0,369.54 325.5,369.62 325.0,369.58 324.5,369.74 324.0,369.90 323.5,370.08 323.0,370.09 322.5,369.93 322.0,370.18 321.5,370.26 321.0,370.10 320.5,370.04 320.0,369.68 319.5,369.80 319.0,369.86 318.5,369.55 318.0,369.28 317.5,369.32 317.0,369.26 316.5,369.25 316.0,369.38 315.5,369.31 315.0,369.66 314.5,369.85 314.0,369.83 313.5,369.94 313.0,369.80 312.5,370.09 312.0,370.23 311.5,370.00 311.0,369.70 310.5,369.88 310.0,369.81 309.5,369.63 309.0,369.42 308.5,369.18 308.0,369.15 307.5,369.05 307.0,368.92 306.5,368.67 306.0,368.72 305.5,368.76 305.0,368.82 304.5,368.86 304.0,368.95 303.5,369.17 303.0,369.23 302.5,369.35 302.0,369.36 301.5,369.36 301.0,369.50 300.5,369.61 300.0,369.53 299.5,369.40 299.0,369.57 298.5,369.63 298.0,369.58 297.5,369.30 297.0,369.22 296.5,369.20 296.0,369.15 295.5,369.23 295.0,369.28 294.5,369.36 294.0,369.65 293.5,369.68 293.0,369.70 292.5,369.54 292.0,369.65 291.5,369.76 291.0,369.78 290.5,369.50 290.0,369.58 289.5,369.58 289.0,369.68 288.5,369.55 288.0,369.21 287.5,369.31 287.0,369.24 286.5,369.18 286.0,369.00 285.5,368.85 285.0,368.97 284.5,369.03 284.0,369.18 283.5,369.19 283.0,369.27 282.5,369.56 282.0,369.64 281.5,369.58 281.0,369.36 280.5,369.69 280.0,369.77 279.5,369.93 279.0,369.89 278.5,369.90 278.0,370.22 277.5,370.30 277.0,370.32 276.5,370.03 276.0,370.26 275.5,370.14 275.0,370.04 274.5,369.77 274.0,369.81 273.5,370.28 273.0,370.39 272.5,370.12 272.0,369.88 271.5,369.99 271.0,370.10 270.5,369.94 270.0,369.53 269.5,369.47 269.0,369.44 268.5,369.49 268.0,369.49 267.5,369.29 267.0,369.17 266.5,369.10 266.0,369.05 265.5,368.87 265.0,368.73 264.5,368.66 264.0,368.70 263.5,368.81 263.0,368.75 262.5,368.87 262.0,369.10 261.5,369.11 261.0,368.91 260.5,369.28 260.0,369.22 259.5,368.96 259.0,369.39 258.5,369.49 258.0,369.08 257.5,369.46 257.0,369.62 256.5,369.20 256.0,369.78 255.5,369.85 255.0,369.38 254.5,370.13 254.0,370.19 253.5,369.62 253.0,370.19 252.5,370.25 252.0,369.86 251.5,370.68 251.0,370.69 250.5,370.03 250.0,370.77 249.5,371.14 249.0,370.28 248.5,371.35 248.0,371.37 247.5,370.61 247.0,371.88 246.5,371.86 246.0,371.17 245.5,372.29 245.0,372.18 244.5,371.40 244.0,372.94 243.5,372.81 243.0,371.89 242.5,373.20 242.0,373.44 241.5,372.21 241.0,373.80 240.5,373.94 240.0,372.40 239.5,374.61 239.0,374.32 238.5,373.41 238.0,375.70 237.5,375.62 237.0,374.00 236.5,376.29 236.0,377.05 235.5,370.70 235.0,369.10 234.5,369.04 234.0,368.88 233.5,368.70 233.0,368.47 232.5,368.50 232.0,368.58 231.5,368.66 231.0,368.72 230.5,368.68 230.0,368.73 229.5,368.84 229.0,368.88 228.5,368.83 228.0,368.79 227.5,368.88 227.0,368.94 226.5,368.94 226.0,368.77 225.5,368.80 225.0,368.87 224.5,368.81 224.0,368.69 223.5,368.60 223.0,368.61 222.5,368.55 222.0,368.60 221.5,368.62 221.0,368.69 220.5,368.74 220.0,368.86 219.5,368.90 219.0,368.87 218.5,368.96 218.0,369.03 217.5,369.01 217.0,369.02 216.5,368.94 216.0,368.96 215.5,369.03 215.0,368.96 214.5,368.87 214.0,368.83 213.5,368.80 213.0,368.73 212.5,368.62 212.0,368.56 211.5,368.63 211.0,368.73 210.5,368.75 210.0,368.78 209.5,368.80 209.0,369.03 208.5,369.09 208.0,369.01 207.5,368.96 207.0,369.06 206.5,369.14 206.0,369.15 205.5,369.07 205.0,368.94 204.5,369.08 204.0,369.12 203.5,369.07 203.0,368.97 202.5,368.89 202.0,368.96 201.5,368.85 201.0,368.91 200.5,368.87 200.0,369.16 199.5,369.33 199.0,369.47 198.5,369.59 198.0,369.72 197.5,370.02 197.0,370.24 196.5,370.43 196.0,370.14 195.5,370.37 195.0,370.74 194.5,370.74 194.0,370.40 193.5,370.35 193.0,370.43 192.5,370.46 192.0,370.24 191.5,369.83 191.0,369.75 190.5,370.05 190.0,370.47 189.5,370.44 189.0,370.54 188.5,371.07 188.0,371.33 187.5,371.47 187.0,371.27 186.5,371.50 186.0,371.89 185.5,372.10 185.0,371.76 184.5,371.58 184.0,371.56 183.5,371.96 183.0,371.78 182.5,371.15 182.0,370.64 181.5,370.64 181.0,370.73 180.5,370.33 180.0,370.14 179.5,370.42 179.0,370.66 178.5,370.56 178.0,370.49 177.5,370.21 177.0,370.34 176.5,370.34 176.0,369.89 175.5,369.56 175.0,369.33 174.5,369.38 174.0,369.36 173.5,369.25 173.0,369.17 172.5,369.12 172.0,369.16 171.5,369.12 171.0,368.93 170.5,368.77 170.0,368.75 169.5,368.80 169.0,368.90 168.5,368.95 168.0,369.02 167.5,369.24 167.0,369.19 166.5,369.19 166.0,369.17 165.5,369.40 165.0,369.45 164.5,369.34 164.0,369.23 163.5,369.23 163.0,369.25 162.5,369.28 162.0,369.25 161.5,369.06 161.0,369.07 160.5,368.94 160.0,368.88 159.5,368.77 159.0,368.77 158.5,368.91 158.0,369.06 157.5,369.21 157.0,369.27 156.5,369.52 156.0,369.95 155.5,370.22 155.0,370.10 154.5,370.15 154.0,370.46 153.5,370.94 153.0,370.83 152.5,370.55 152.0,370.52 151.5,370.69 151.0,370.57 150.5,370.28 150.0,369.96 149.5,370.03 149.0,369.88 148.5,369.95 148.0,370.13 147.5,370.41 147.0,370.78 146.5,371.03 146.0,371.55 145.5,371.42 145.0,371.51 144.5,371.84 144.0,372.07 143.5,372.00 143.0,371.80 142.5,372.18 142.0,372.23 141.5,372.11 141.0,371.42 140.5,371.36 140.0,371.40 139.5,371.13 139.0,370.57 138.5,370.09 138.0,370.48 137.5,370.85 137.0,371.21 136.5,371.41 136.0,371.64 135.5,371.99 135.0,372.32 134.5,372.33 134.0,372.23 133.5,372.77 133.0,373.32 132.5,372.93 132.0,372.60 131.5,372.30 131.0,372.78 130.5,372.56 130.0,372.07 129.5,371.62 129.0,371.47 128.5,371.23 128.0,370.85 127.5,371.04 127.0,371.15 126.5,371.95 126.0,372.38 125.5,372.73 125.0,372.83 124.5,372.61 124.0,373.29 123.5,373.40 123.0,373.68 122.5,372.87 122.0,373.19 121.5,373.45 121.0,372.81 120.5,372.42 120.0,371.96 119.5,372.12 119.0,372.00 118.5,371.17 118.0,370.90 117.5,370.36 117.0,370.59 116.5,371.08 116.0,371.29 115.5,371.11 115.0,371.42 114.5,372.13 114.0,372.29 113.5,371.94 113.0,371.94 112.5,372.24 112.0,372.34 111.5,371.85 111.0,371.41 110.5,371.36 110.0,371.36 109.5,371.21 109.0,370.68 108.5,370.10 108.0,370.10 107.5,370.02 107.0,369.59 106.5,369.50 106.0,369.71 105.5,369.82 105.0,370.00 104.5,370.16 104.0,369.92 103.5,370.14 103.0,370.24 102.5,370.28 102.0,370.14 101.5,369.93 101.0,370.03 100.5,370.04 100.0,369.74 99.5,369.53 99.0,369.71 98.5,369.58 98.0,369.56 97.5,369.46 97.0,369.10 96.5,369.16 96.0,369.30 95.5,369.39 95.0,369.43 94.5,369.69 94.0,370.01 93.5,370.13 93.0,370.10 92.5,370.04 92.0,370.32 91.5,370.63 91.0,370.42 90.5,370.54 90.0,370.38 89.5,370.36 89.0,370.47 88.5,370.31 88.0,370.02 87.5,370.01 87.0,370.05 86.5,369.74 86.0,369.52 85.5,369.44 85.0,369.82 84.5,370.24 84.0,370.36 83.5,370.52 83.0,370.63 82.5,371.06 82.0,371.61 81.5,371.39 81.0,371.06 80.5,371.61 80.0,371.69 79.5,371.91 79.0,371.71 78.5,371.53 78.0,371.66 77.5,371.56 77.0,371.15 76.5,370.64 76.0,370.53 75.5,370.42 75.0,370.56 74.5,370.98 74.0,370.98 73.5,371.98 73.0,372.52 72.5,372.74 72.0,373.00 71.5,373.27 71.0,373.80 70.5,373.81 70.0,373.60 69.5,373.44 69.0,373.83 68.5,374.04 68.0,373.79 67.5,373.14 67.0,372.31 66.5,372.48 66.0,372.06 65.5,371.39 65.0,370.80 64.5,370.98 64.0,371.53 63.5,371.71 63.0,371.65 62.5,371.65 62.0,371.99 61.5,372.31 61.0,372.32 60.5,372.42 60.0,372.16 59.5,372.63 59.0,372.99 58.5,372.80 58.0,372.05 57.5,372.07 57.0,372.30 56.5,372.02 56.0,371.14 55.5,370.77 55.0,370.82 54.5,370.35 54.0,370.27 53.5,370.33 53.0,370.82 52.5,371.01 52.0,371.58 51.5,371.21 51.0,371.16 50.5,371.55 50.0,371.85 49.5,371.59 49.0,371.24 48.5,371.10 48.0,371.34 47.5,371.34 47.0,371.17 46.5,370.51 46.0,370.65 45.5,370.55 45.0,370.30 44.5,369.80 44.0,369.52 43.5,369.60 43.0,370.02 42.5,370.07 42.0,370.04 41.5,370.21 41.0,370.26 40.5,369.97 40.0,370.54 39.5,370.64 39.0,370.20 38.5,371.26 38.0,371.18 37.5,370.52 37.0,371.89 36.5,372.41 36.0,371.71 35.5,373.07 35.0,373.28 34.5,372.27 34.0,373.82 33.5,374.37 33.0,372.46" fill="#f6c29e" opacity="0.55"/></svg>
<div style="position:absolute;left:33px;top:228.6px;width:3px;height:194.4px;background:#9a5a3a;opacity:0.35;"></div>
<div style="position:absolute;left:382.2px;top:37px;width:1.3000000000000114px;height:386px;background:#9a8a80;opacity:0.8;"></div>
<div style="position:absolute;left:33.5px;top:417.6px;width:39px;height:5px;background:#e99a66;border-radius:0.8px"></div>
<div class="t" style="left:34.6px;top:418.9px;font-size:3.4px;color:#3a1e0c;">160_C_Melodic_02_SP</div>
<div style="position:absolute;left:0px;top:423px;width:800px;height:9px;background:#000;"></div>
<div style="position:absolute;left:4px;top:427px;width:14px;height:1.6000000000000227px;background:#9a9a9a;"></div>
<div style="position:absolute;left:3px;top:424px;width:9px;height:0.8000000000000114px;background:#7a3a20;"></div>
<svg width="30" height="10" style="left:770px;top:422px"><g fill="#bbb"><rect x="7" y="4" width="3" height="2"/><rect x="13" y="4.5" width="1.5" height="1.5"/><rect x="18" y="3" width="1" height="3"/><rect x="22" y="5" width="0.8" height="0.8"/><rect x="26" y="3" width="1.2" height="3"/></g></svg>
<div style="position:absolute;left:0px;top:431.5px;width:800px;height:0.8000000000000114px;background:#2a2a2c;"></div>
<div style="position:absolute;left:0px;top:447.8px;width:800px;height:0.8000000000000114px;background:#2a2a2c;"></div>
<div style="position:absolute;left:2px;top:432px;width:115px;height:16px;background:#4a4a4d;"></div>
<svg width="120" height="18" style="left:0;top:431px">
<g fill="#f0f0f0" stroke="none">
<circle cx="10.5" cy="7.6" r="1.3"/><path d="M8 11.2 h5 v-0.6 a2.5 1.6 0 0 0 -5 0 z"/><rect x="7.5" y="11.8" width="6" height="0.9"/>
</g>
<g fill="#c8c8c8"><rect x="23.5" y="4.5" width="7" height="1"/><rect x="23.5" y="6.8" width="7" height="1"/><rect x="23.5" y="9.1" width="7" height="1"/><rect x="23.5" y="11.4" width="7" height="1"/></g>
<path d="M41.2 6.5 A2.8 2.8 0 1 1 40.9 10" fill="none" stroke="#f4f4f4" stroke-width="1.1"/><path d="M40 5 L42 6.8 L39.8 8 z" fill="#f4f4f4"/>
<path d="M57.8 6.5 A2.8 2.8 0 1 0 58.1 10" fill="none" stroke="#9a9a9a" stroke-width="1.1"/><path d="M59 5 L57 6.8 L59.2 8 z" fill="#9a9a9a"/>
<path d="M72.5 11.5 L76.5 7.5" stroke="#f0f0f0" stroke-width="1.3"/><circle cx="77.3" cy="6.7" r="1.5" fill="none" stroke="#f0f0f0" stroke-width="0.9"/>
<circle cx="90.5" cy="7.2" r="2.2" fill="none" stroke="#e8e8e8" stroke-width="0.9"/><circle cx="93.5" cy="10.2" r="2.2" fill="none" stroke="#e8e8e8" stroke-width="0.9"/>
<rect x="105" y="7" width="6.5" height="5.5" rx="1" fill="none" stroke="#f0f0f0" stroke-width="0.9"/><path d="M107.5 9.5 L112 5 M110 5 h2 v2" stroke="#f0f0f0" stroke-width="0.9" fill="none"/>
</g></svg>
<div class="t" style="left:121px;top:439.6px;font-size:3.8px;color:#c8c8c8;"><span style="color:#6a6a6a">Edit</span> <span style="color:#5a5a5a">›</span> <span style="color:#7a7a7a">Track</span> <span style="color:#5a5a5a">›</span> Plugin</div>
<svg width="20" height="10" style="left:288px;top:435px"><circle cx="4" cy="5.3" r="1.5" fill="#f4f4f4"/><circle cx="8.5" cy="5.3" r="1.3" fill="none" stroke="#666" stroke-width="0.5"/><path d="M11.5 5.8 l1.5 -1.5 l1.2 1.5 z" fill="#666"/></svg>
<div style="position:absolute;left:308.2px;top:432.2px;width:44.60000000000002px;height:15.800000000000011px;background:#48484b;"></div>
<svg width="50" height="18" style="left:306px;top:431px">
<path d="M10.2 4 a2.3 2.3 0 1 0 3.6 0.5" stroke="#c8c8c8" stroke-width="0.9" fill="none"/><path d="M13.8 3.2 v2 h-2" stroke="#c8c8c8" stroke-width="0.8" fill="none"/>
<path d="M17.8 3.6 v2.3 a2.2 2.2 0 0 0 4.4 0 v-2.3" stroke="#3a6ae8" stroke-width="1.5" fill="none"/>
<path d="M26.5 5.6 h4 M30.5 5.6 l2 -1.5 M30.5 5.6 l2 1.5" stroke="#b0b0b0" stroke-width="0.7" fill="none"/>
<circle cx="36.5" cy="5.6" r="2.4" fill="#9a9a9a"/><path d="M35 6.5 l1.5 -2 l1.5 2" stroke="#555" stroke-width="0.5" fill="none"/>
<path d="M10.5 11.5 l1.5 2.5 h3 M11 10.8 l2 1 l2 -1" stroke="#b8b8b8" stroke-width="0.7" fill="none"/>
<rect x="18.3" y="11.6" width="3.6" height="3.3" fill="#d0d0d0"/><path d="M18.9 11.6 v-1 a1.2 1.2 0 0 1 2.4 0 v1" stroke="#d0d0d0" stroke-width="0.6" fill="none"/>
<circle cx="29.5" cy="12.6" r="2.2" fill="none" stroke="#999" stroke-width="0.6"/><path d="M29 11.5 l1.4 1.1 l-1.4 1.1 z" fill="#aaa"/>
<text x="33.8" y="14" font-size="3.2" fill="#aaa" font-family="Liberation Sans" font-weight="bold">VTC</text>
</svg>
<div style="position:absolute;left:354px;top:432px;width:14px;height:8px;background:#3a8a6e;"></div>
<div style="position:absolute;left:354px;top:441px;width:14px;height:7px;background:#4a4a4d;"></div>
<div style="position:absolute;left:370px;top:432px;width:13.5px;height:8px;background:#4a4a4d;"></div>
<div style="position:absolute;left:370px;top:441px;width:13.5px;height:7px;background:#4a4a4d;"></div>
<div style="position:absolute;left:385px;top:432px;width:30px;height:8px;background:#3c9076;"></div>
<div style="position:absolute;left:385px;top:441px;width:14.5px;height:7px;background:#4a4a4d;"></div>
<div style="position:absolute;left:400.5px;top:441px;width:14.5px;height:7px;background:#4a4a4d;"></div>
<div style="position:absolute;left:416px;top:432px;width:30px;height:8px;background:#4a4a4d;"></div>
<div style="position:absolute;left:416px;top:441px;width:30px;height:7px;background:#4a4a4d;"></div>
<svg width="100" height="18" style="left:350px;top:431px">
<rect x="9" y="3.4" width="2.8" height="2.4" fill="#eee"/><path d="M12.5 3.6 l1.8 1 l-1.8 1 z" fill="#eee"/>
<path d="M11 10.8 l2 3 h-4 z" fill="#e8b830"/>
<circle cx="25.2" cy="4.8" r="1.5" fill="#a02a2a" stroke="#d04040" stroke-width="0.6"/><circle cx="28.8" cy="4.8" r="1" fill="#e03a3a"/>
<path d="M23.6 10.6 v4" stroke="#ddd" stroke-width="0.8"/><path d="M27.4 10.6 l-3 2 l3 2 z M30.6 10.6 l-3 2 l3 2 z" fill="#ddd"/>
<rect x="48.3" y="3.1" width="3.2" height="3.2" fill="#f2f2f2"/>
<path d="M43.2 10.6 l-3 2 l3 2 z M46.4 10.6 l-3 2 l3 2 z" fill="#eee"/>
<path d="M56.6 10.6 l3 2 l-3 2 z M59.8 10.6 l3 2 l-3 2 z" fill="#eee"/>
<circle cx="81" cy="4.8" r="1.3" fill="#f03838"/>
<circle cx="81" cy="12.5" r="1.6" fill="none" stroke="#e03a3a" stroke-width="0.6"/>
</svg>
<div style="position:absolute;left:447px;top:432px;width:81.5px;height:16px;background:#000;border:0.8px solid #3a3a3c;box-sizing:border-box;"></div>
<div class="t" style="left:450px;top:434.5px;font-size:3.6px;color:#a8a8a8;">BPM</div>
<div class="t" style="left:467px;top:434.5px;font-size:3.6px;color:#b8b8b8;">140.00</div>
<div class="t" style="left:500.5px;top:434.0px;font-size:4.5px;color:#e8e8e8;word-spacing:1px;">1 . 3 . 544</div>
<div class="t" style="left:453px;top:442.2px;font-size:3.6px;color:#b0b0b0;">4/4</div>
<div class="t" style="left:469px;top:442.2px;font-size:3.6px;color:#b8b8b8;">Cmaj</div>
<div class="t" style="left:487.5px;top:441.8px;font-size:4.3px;color:#e8e8e8;word-spacing:0.5px;">00 : 00 : 01 . 100</div>
<div style="position:absolute;left:529.5px;top:432px;width:61.0px;height:16px;background:#000;border:0.8px solid #3a3a3c;box-sizing:border-box;"></div>
<div class="t" style="left:530.00px;top:438.0px;width:60px;text-align:center;font-size:4.0px;color:#d0d0d0;">(Drop Master Plugins Here)</div>
<div style="position:absolute;left:592px;top:432px;width:13px;height:16px;background:#0a0a0c;border:0.6px solid #333;box-sizing:border-box;"></div>
<div style="position:absolute;left:593px;top:441px;width:11px;height:6.5px;background:#1c3260;"></div>
<div style="position:absolute;left:593px;top:439.5px;width:11px;height:1.0px;background:#5070c0;"></div>
<div style="position:absolute;left:598px;top:433.5px;width:1.5px;height:1.5px;background:#6080e0;"></div>
<div style="position:absolute;left:605.5px;top:432px;width:192.0px;height:16px;background:#0c0c0c;border:0.8px solid #3a3a3c;box-sizing:border-box;"></div>
<div style="position:absolute;left:607px;top:433.3px;width:153px;height:6px;background:linear-gradient(90deg,#62b876,#8cbc6a 45%,#d8b858)"></div>
<div style="position:absolute;left:607px;top:440.8px;width:154px;height:6px;background:linear-gradient(90deg,#62b876,#8cbc6a 45%,#d8b858)"></div>
<div style="position:absolute;left:767px;top:433.5px;width:0.7999999999999545px;height:5.5px;background:#c06838;"></div>
<div style="position:absolute;left:769px;top:441px;width:0.7999999999999545px;height:5.5px;background:#c06838;"></div>
<div style="position:absolute;left:135px;top:178px;width:235px;height:154px;background:#0f1115;"></div>
<div style="position:absolute;left:136px;top:179px;width:233px;height:8px;background:#12151a;"></div>
<svg width="235" height="10" style="left:135px;top:178px">
<circle cx="5" cy="4.5" r="2.6" fill="#2a1616" stroke="#b84a3a" stroke-width="0.8"/><circle cx="5" cy="4.5" r="0.9" fill="#e05040"/>
<rect x="10" y="2" width="6" height="5" fill="#7a7a7a" stroke="#999" stroke-width="0.4"/>
<g transform="translate(199.5,0)">
<path d="M2.2 4.5 Q5.5 1.4 8.8 4.5 Q5.5 7.6 2.2 4.5 z" fill="none" stroke="#e8e8e8" stroke-width="0.8"/><circle cx="5.5" cy="4.5" r="1.2" fill="#e8e8e8"/>
<rect x="14.8" y="2.5" width="6.4" height="4.6" rx="0.9" fill="#e8e8e8"/><rect x="16.2" y="1.8" width="2.2" height="1" fill="#e8e8e8"/><circle cx="18" cy="4.8" r="1.4" fill="#12151a"/><circle cx="18" cy="4.8" r="0.6" fill="#e8e8e8"/>
<path d="M28.6 2.6 h2.8 M30 2.6 v2.8 M28.6 5.4 h2.8 M30 5.4 v2.6" stroke="#e84a3a" stroke-width="1.1" stroke-linecap="round"/>
</g></svg>
<div class="t" style="left:212.50px;top:180.5px;width:80px;text-align:center;font-size:4.3px;color:#c8c8c8;">Loop: Arpeggiator</div>
<div style="position:absolute;left:137px;top:187px;width:231px;height:12px;background:#2b2d33;"></div>
<svg width="10" height="10" style="left:139.5px;top:190px"><rect x="0.5" y="1" width="5" height="5" fill="#9a9a9a"/><path d="M3 1 v5 M0.5 3.5 h5" stroke="#6a6a6a" stroke-width="0.4"/></svg>
<div class="t" style="left:149px;top:190.8px;font-size:7.1px;color:#e8e8e8;transform:scaleX(0.94);transform-origin:0 0;-webkit-text-stroke:0;">Arpeggiator</div>
<svg width="235" height="10" style="left:135px;top:188px"><path d="M89.5 2.3 L86.5 4.3 L89.5 6.3 z" fill="#e0e0e0"/><circle cx="117" cy="3.6" r="0.9" fill="#d0d0d0"/><path d="M145.5 2.3 L148.5 4.3 L145.5 6.3 z" fill="#e0e0e0"/></svg>
<svg width="12" height="12" style="left:335px;top:188px"><circle cx="5" cy="5.5" r="3.6" fill="none" stroke="#a0a0a0" stroke-width="0.8"/></svg>
<div class="t" style="left:344.3px;top:189.8px;font-size:6.0px;color:#8e8e8e;letter-spacing:-0.1px;-webkit-text-stroke:0;">tracktion</div>
<div style="position:absolute;left:137px;top:199px;width:231px;height:131px;background:#1b1d21;"></div>
<div style="position:absolute;left:137px;top:199px;width:105px;height:11px;background:#24262b;"></div>
<div style="position:absolute;left:137px;top:209.4px;width:105px;height:0.5999999999999943px;background:#1b1d21;"></div>
<div class="t" style="left:165.00px;top:203.0px;width:50px;text-align:center;font-size:4.6px;color:#6eaaf4;">Arp</div>
<div style="position:absolute;left:137px;top:210px;width:105px;height:33px;background:#2e3036;"></div>
<div style="position:absolute;left:137px;top:242.4px;width:105px;height:0.5999999999999943px;background:#1b1d21;"></div>
<div style="position:absolute;left:137px;top:243px;width:105px;height:12px;background:#24262b;"></div>
<div style="position:absolute;left:137px;top:254.4px;width:105px;height:0.5999999999999943px;background:#1b1d21;"></div>
<div class="t" style="left:165.00px;top:247.5px;width:50px;text-align:center;font-size:4.6px;color:#6eaaf4;">Timing</div>
<div style="position:absolute;left:137px;top:255px;width:105px;height:32px;background:#2e3036;"></div>
<div style="position:absolute;left:137px;top:286.4px;width:105px;height:0.6000000000000227px;background:#1b1d21;"></div>
<div style="position:absolute;left:137px;top:287px;width:105px;height:10px;background:#24262b;"></div>
<div style="position:absolute;left:137px;top:296.4px;width:105px;height:0.6000000000000227px;background:#1b1d21;"></div>
<div class="t" style="left:165.00px;top:290.5px;width:50px;text-align:center;font-size:4.6px;color:#6eaaf4;">Input</div>
<div style="position:absolute;left:137px;top:297px;width:105px;height:33px;background:#2e3036;"></div>
<div style="position:absolute;left:137px;top:329.4px;width:105px;height:0.6000000000000227px;background:#1b1d21;"></div>
<div style="position:absolute;left:244px;top:199px;width:124px;height:11px;background:#24262b;"></div>
<div style="position:absolute;left:244px;top:209.4px;width:124px;height:0.5999999999999943px;background:#1b1d21;"></div>
<div class="t" style="left:280.00px;top:203.0px;width:50px;text-align:center;font-size:4.6px;color:#6eaaf4;"></div>
<div class="t" style="left:280.00px;top:203.2px;width:50px;text-align:center;font-size:4.6px;color:#6eaaf4;"><span style="display:inline-block;width:3.4px;height:3.4px;background:#6aa6ee;border-radius:0.5px;vertical-align:-0.3px;margin-right:0.6px"></span>Pattern</div>
<div style="position:absolute;left:244px;top:210px;width:124px;height:33px;background:#2e3036;"></div>
<div style="position:absolute;left:244px;top:242.4px;width:124px;height:0.5999999999999943px;background:#1b1d21;"></div>
<div style="position:absolute;left:244px;top:243px;width:124px;height:12px;background:#24262b;"></div>
<div style="position:absolute;left:244px;top:254.4px;width:124px;height:0.5999999999999943px;background:#1b1d21;"></div>
<div class="t" style="left:280.50px;top:247.5px;width:50px;text-align:center;font-size:4.6px;color:#6eaaf4;">Notes</div>
<div style="position:absolute;left:244px;top:255px;width:124px;height:75px;background:#2a2c31;"></div>
<div style="position:absolute;left:142px;top:220px;width:16px;height:6px;background:#1d1f25;border:0.5px solid #25272d;box-sizing:border-box;"></div>
<div class="t" style="left:130.00px;top:221.5px;width:40px;text-align:center;font-size:3.0px;color:#6ea8f0;-webkit-text-stroke:0;">Up</div>
<div style="position:absolute;left:162px;top:220px;width:15.5px;height:6px;background:#77777b;border:0.5px solid #5a5a5e;box-sizing:border-box;"></div>
<div class="t" style="left:149.75px;top:221.5px;width:40px;text-align:center;font-size:3.0px;color:#3a3a3e;-webkit-text-stroke:0;">Off</div>
<div style="position:absolute;left:182px;top:220px;width:16px;height:6px;background:#1d1f25;border:0.5px solid #25272d;box-sizing:border-box;"></div>
<div class="t" style="left:170.00px;top:221.5px;width:40px;text-align:center;font-size:3.0px;color:#6ea8f0;-webkit-text-stroke:0;">1/4</div>
<div style="position:absolute;left:222px;top:220px;width:15.5px;height:6px;background:#77777b;border:0.5px solid #5a5a5e;box-sizing:border-box;"></div>
<div class="t" style="left:209.75px;top:221.5px;width:40px;text-align:center;font-size:3.0px;color:#3a3a3e;-webkit-text-stroke:0;">Off</div>
<div class="t" style="left:135.00px;top:233.8px;width:30px;text-align:center;font-size:4.2px;color:#f2f2f2;">Direction</div>
<div class="t" style="left:155.00px;top:233.8px;width:30px;text-align:center;font-size:4.2px;color:#f2f2f2;">Latch</div>
<div class="t" style="left:175.00px;top:233.8px;width:30px;text-align:center;font-size:4.2px;color:#f2f2f2;">Clock</div>
<div class="t" style="left:194.50px;top:233.8px;width:30px;text-align:center;font-size:4.2px;color:#f2f2f2;">Octaves</div>
<div class="t" style="left:214.80px;top:233.8px;width:30px;text-align:center;font-size:4.2px;color:#f2f2f2;">Freeze</div>
<div class="t" style="left:134.50px;top:277.6px;width:30px;text-align:center;font-size:4.2px;color:#f2f2f2;">Length</div>
<div class="t" style="left:154.50px;top:277.6px;width:30px;text-align:center;font-size:4.2px;color:#f2f2f2;">Swing</div>
<div class="t" style="left:174.50px;top:277.6px;width:30px;text-align:center;font-size:4.2px;color:#f2f2f2;">Rand Pos</div>
<div class="t" style="left:194.50px;top:277.6px;width:30px;text-align:center;font-size:4.2px;color:#f2f2f2;">Rand Len</div>
<div class="t" style="left:214.50px;top:277.6px;width:30px;text-align:center;font-size:4.2px;color:#f2f2f2;">Rand Vel</div>
<div style="position:absolute;left:142px;top:307.5px;width:15.5px;height:6.0px;background:#8ec8fa;border:0.5px solid #6aa8e8;box-sizing:border-box;"></div>
<div class="t" style="left:129.75px;top:309.0px;width:40px;text-align:center;font-size:3.0px;color:#2a4a7a;-webkit-text-stroke:0;">On</div>
<div style="position:absolute;left:182px;top:307.5px;width:15.5px;height:6.0px;background:#1d1f25;border:0.5px solid #25272d;box-sizing:border-box;"></div>
<div class="t" style="left:169.75px;top:309.0px;width:40px;text-align:center;font-size:3.0px;color:#6ea8f0;-webkit-text-stroke:0;">None</div>
<div style="position:absolute;left:222px;top:307.5px;width:15.5px;height:6.0px;background:#1d1f25;border:0.5px solid #25272d;box-sizing:border-box;"></div>
<div class="t" style="left:209.75px;top:309.0px;width:40px;text-align:center;font-size:3.0px;color:#6ea8f0;-webkit-text-stroke:0;">Off</div>
<div class="t" style="left:134.50px;top:321px;width:30px;text-align:center;font-size:4.2px;color:#f2f2f2;">Input Fix</div>
<div class="t" style="left:154.50px;top:321px;width:30px;text-align:center;font-size:4.2px;color:#f2f2f2;">Velocity</div>
<div class="t" style="left:174.50px;top:321px;width:30px;text-align:center;font-size:4.2px;color:#f2f2f2;">Input</div>
<div class="t" style="left:194.50px;top:321px;width:30px;text-align:center;font-size:4.2px;color:#f2f2f2;">Max</div>
<div class="t" style="left:214.50px;top:321px;width:30px;text-align:center;font-size:4.2px;color:#f2f2f2;">Key Limits</div>
<svg width="800" height="450" style="top:0"><circle cx="209.5" cy="223" r="6.1" fill="#1c1e22"/><circle cx="209.5" cy="223" r="4.8" fill="#6a6a6e"/><circle cx="209.5" cy="223" r="4.0" fill="#77777b"/><path d="M209.04 223.66 L207.44 225.95" stroke="#f0f0f0" stroke-width="1.1" stroke-linecap="round"/><circle cx="149.5" cy="266.7" r="6.6" fill="#1c1e22"/><path d="M147.38 272.53 A6.2 6.2 0 0 1 144.13 263.60" stroke="#4a94e8" stroke-width="1.0" fill="none"/><circle cx="149.5" cy="266.7" r="5.3" fill="#e6e6e6"/><path d="M148.81 266.30 L145.95 264.65" stroke="#333" stroke-width="1.1" stroke-linecap="round"/><circle cx="169.5" cy="266.7" r="6.6" fill="#1c1e22"/><circle cx="169.5" cy="266.7" r="5.3" fill="#e6e6e6"/><path d="M168.99 267.31 L166.86 269.84" stroke="#333" stroke-width="1.1" stroke-linecap="round"/><circle cx="189.5" cy="266.7" r="6.1" fill="#1c1e22"/><circle cx="189.5" cy="266.7" r="4.8" fill="#6a6a6e"/><circle cx="189.5" cy="266.7" r="4.0" fill="#77777b"/><path d="M188.99 267.31 L187.19 269.46" stroke="#f0f0f0" stroke-width="1.1" stroke-linecap="round"/><circle cx="209.5" cy="266.7" r="6.1" fill="#1c1e22"/><circle cx="209.5" cy="266.7" r="4.8" fill="#6a6a6e"/><circle cx="209.5" cy="266.7" r="4.0" fill="#77777b"/><path d="M208.99 267.31 L207.19 269.46" stroke="#f0f0f0" stroke-width="1.1" stroke-linecap="round"/><circle cx="229.5" cy="266.7" r="6.1" fill="#1c1e22"/><circle cx="229.5" cy="266.7" r="4.8" fill="#6a6a6e"/><circle cx="229.5" cy="266.7" r="4.0" fill="#77777b"/><path d="M228.99 267.31 L227.19 269.46" stroke="#f0f0f0" stroke-width="1.1" stroke-linecap="round"/><circle cx="169.5" cy="310.3" r="6.8999999999999995" fill="#1c1e22"/><path d="M165.77 315.62 A6.5 6.5 0 1 1 173.68 315.28" stroke="#4a94e8" stroke-width="1.0" fill="none"/><circle cx="169.5" cy="310.3" r="5.6" fill="#e6e6e6"/><path d="M169.50 309.50 L169.50 305.90" stroke="#333" stroke-width="1.1" stroke-linecap="round"/><circle cx="209.5" cy="310.3" r="6.2" fill="#1c1e22"/><path d="M206.17 315.05 A5.800000000000001 5.800000000000001 0 1 1 213.23 314.74" stroke="#4a94e8" stroke-width="1.0" fill="none"/><circle cx="209.5" cy="310.3" r="4.9" fill="#6a6a6e"/><circle cx="209.5" cy="310.3" r="4.1000000000000005" fill="#77777b"/><path d="M210.07 310.87 L212.12 312.92" stroke="#f0f0f0" stroke-width="1.1" stroke-linecap="round"/></svg>
<div style="position:absolute;left:247px;top:220px;width:16.5px;height:6px;background:#1d1f25;"></div>
<svg width="18" height="8" style="left:247px;top:219px"><path d="M1 5 l1.5 -2 l1.5 2 l1.5 -2 l1.5 2 l1.5 -2 l1.5 2 l1.5 -2 l1.5 2 l1.5 -2 l1.5 2" stroke="#5a9ae8" stroke-width="0.6" fill="none"/></svg>
<div style="position:absolute;left:268px;top:220px;width:15.5px;height:6px;background:#8ec8fa;border:0.5px solid #6aa8e8;box-sizing:border-box;"></div>
<div class="t" style="left:255.75px;top:221.5px;width:40px;text-align:center;font-size:3.0px;color:#2a4a7a;-webkit-text-stroke:0;">Type</div>
<div style="position:absolute;left:288px;top:220px;width:15.5px;height:6px;background:#8ec8fa;border:0.5px solid #6aa8e8;box-sizing:border-box;"></div>
<div class="t" style="left:275.75px;top:221.5px;width:40px;text-align:center;font-size:3.0px;color:#2a4a7a;-webkit-text-stroke:0;">Chord</div>
<div style="position:absolute;left:308px;top:220px;width:15.5px;height:6px;background:#8ec8fa;border:0.5px solid #6aa8e8;box-sizing:border-box;"></div>
<div class="t" style="left:295.75px;top:221.5px;width:40px;text-align:center;font-size:3.0px;color:#2a4a7a;-webkit-text-stroke:0;">Unison</div>
<div style="position:absolute;left:328px;top:220px;width:15.5px;height:6px;background:#1d1f25;border:0.5px solid #25272d;box-sizing:border-box;"></div>
<div class="t" style="left:315.75px;top:221.5px;width:40px;text-align:center;font-size:3.0px;color:#6ea8f0;-webkit-text-stroke:0;">4</div>
<div style="position:absolute;left:348px;top:220px;width:15.5px;height:6px;background:#1d1f25;border:0.5px solid #25272d;box-sizing:border-box;"></div>
<div class="t" style="left:335.75px;top:221.5px;width:40px;text-align:center;font-size:3.0px;color:#6ea8f0;-webkit-text-stroke:0;">1/16</div>
<div class="t" style="left:240.00px;top:233.4px;width:30px;text-align:center;font-size:4.2px;color:#f2f2f2;">Pattern</div>
<div class="t" style="left:320.50px;top:233.4px;width:30px;text-align:center;font-size:4.2px;color:#f2f2f2;">Length</div>
<div class="t" style="left:340.50px;top:233.4px;width:30px;text-align:center;font-size:4.2px;color:#f2f2f2;">Grid</div>
<svg width="800" height="450" style="top:0"><rect x="245" y="256.8" width="121" height="4" fill="#1e2026"/><text x="246.5" y="260.4" font-size="3" fill="#ccc" font-family="Liberation Sans">1</text><text x="276.3" y="260.4" font-size="3" fill="#ccc" font-family="Liberation Sans">2</text><text x="306.1" y="260.4" font-size="3" fill="#ccc" font-family="Liberation Sans">3</text><text x="335.9" y="260.4" font-size="3" fill="#ccc" font-family="Liberation Sans">4</text><rect x="245" y="262" width="121" height="53" fill="#171b23"/><rect x="245" y="262.00" width="121" height="0.5" fill="#2c313c"/><rect x="245" y="265.60" width="121" height="0.5" fill="#2c313c"/><rect x="245" y="269.20" width="121" height="0.5" fill="#2c313c"/><rect x="245" y="272.80" width="121" height="0.5" fill="#2c313c"/><rect x="245" y="276.40" width="121" height="0.5" fill="#2c313c"/><rect x="245" y="280.00" width="121" height="0.5" fill="#2c313c"/><rect x="245" y="283.60" width="121" height="0.5" fill="#2c313c"/><rect x="245" y="287.20" width="121" height="0.5" fill="#2c313c"/><rect x="245" y="290.80" width="121" height="0.5" fill="#2c313c"/><rect x="245" y="294.40" width="121" height="0.5" fill="#2c313c"/><rect x="245" y="298.00" width="121" height="0.5" fill="#2c313c"/><rect x="245" y="301.60" width="121" height="0.5" fill="#2c313c"/><rect x="245" y="305.20" width="121" height="0.5" fill="#2c313c"/><rect x="245" y="308.80" width="121" height="0.5" fill="#2c313c"/><rect x="245" y="312.40" width="121" height="0.5" fill="#2c313c"/><rect x="245.00" y="262" width="0.6" height="53" fill="#3a3f4a"/><rect x="252.50" y="262" width="0.6" height="53" fill="#262b35"/><rect x="260.00" y="262" width="0.6" height="53" fill="#262b35"/><rect x="267.50" y="262" width="0.6" height="53" fill="#262b35"/><rect x="275.00" y="262" width="0.6" height="53" fill="#3a3f4a"/><rect x="282.50" y="262" width="0.6" height="53" fill="#262b35"/><rect x="290.00" y="262" width="0.6" height="53" fill="#262b35"/><rect x="297.50" y="262" width="0.6" height="53" fill="#262b35"/><rect x="305.00" y="262" width="0.6" height="53" fill="#3a3f4a"/><rect x="312.50" y="262" width="0.6" height="53" fill="#262b35"/><rect x="320.00" y="262" width="0.6" height="53" fill="#262b35"/><rect x="327.50" y="262" width="0.6" height="53" fill="#262b35"/><rect x="335.00" y="262" width="0.6" height="53" fill="#3a3f4a"/><rect x="342.50" y="262" width="0.6" height="53" fill="#262b35"/><rect x="350.00" y="262" width="0.6" height="53" fill="#262b35"/><rect x="357.50" y="262" width="0.6" height="53" fill="#262b35"/><rect x="365.00" y="262" width="0.6" height="53" fill="#3a3f4a"/><rect x="245" y="286.5" width="121" height="3.3" fill="#253046"/><rect x="260.00" y="286.8" width="7.2" height="2.8" fill="#7aa6e0"/><rect x="282.60" y="286.8" width="7.2" height="2.8" fill="#7aa6e0"/><rect x="305.20" y="286.8" width="7.2" height="2.8" fill="#7aa6e0"/><rect x="327.80" y="286.8" width="7.2" height="2.8" fill="#7aa6e0"/><rect x="350.40" y="286.8" width="7.2" height="2.8" fill="#7aa6e0"/><rect x="245" y="315.6" width="121" height="11.4" fill="#171b23"/><rect x="245.00" y="315.6" width="0.5" height="11.4" fill="#262b35"/><rect x="252.50" y="315.6" width="0.5" height="11.4" fill="#262b35"/><rect x="260.00" y="315.6" width="0.5" height="11.4" fill="#262b35"/><rect x="267.50" y="315.6" width="0.5" height="11.4" fill="#262b35"/><rect x="275.00" y="315.6" width="0.5" height="11.4" fill="#262b35"/><rect x="282.50" y="315.6" width="0.5" height="11.4" fill="#262b35"/><rect x="290.00" y="315.6" width="0.5" height="11.4" fill="#262b35"/><rect x="297.50" y="315.6" width="0.5" height="11.4" fill="#262b35"/><rect x="305.00" y="315.6" width="0.5" height="11.4" fill="#262b35"/><rect x="312.50" y="315.6" width="0.5" height="11.4" fill="#262b35"/><rect x="320.00" y="315.6" width="0.5" height="11.4" fill="#262b35"/><rect x="327.50" y="315.6" width="0.5" height="11.4" fill="#262b35"/><rect x="335.00" y="315.6" width="0.5" height="11.4" fill="#262b35"/><rect x="342.50" y="315.6" width="0.5" height="11.4" fill="#262b35"/><rect x="350.00" y="315.6" width="0.5" height="11.4" fill="#262b35"/><rect x="357.50" y="315.6" width="0.5" height="11.4" fill="#262b35"/><rect x="365.00" y="315.6" width="0.5" height="11.4" fill="#262b35"/><path d="M259.50 326.5 V319.8 H265.50" stroke="#5a86c0" stroke-width="0.6" fill="none"/><path d="M282.10 326.5 V319.8 H288.10" stroke="#5a86c0" stroke-width="0.6" fill="none"/><path d="M304.70 326.5 V319.8 H310.70" stroke="#5a86c0" stroke-width="0.6" fill="none"/><path d="M327.30 326.5 V319.8 H333.30" stroke="#5a86c0" stroke-width="0.6" fill="none"/><path d="M349.90 326.5 V319.8 H355.90" stroke="#5a86c0" stroke-width="0.6" fill="none"/></svg>
<div style="position:absolute;left:242px;top:199px;width:2px;height:131px;background:#1b1d21;"></div>
<div style="position:absolute;left:390px;top:97px;width:298px;height:236px;background:#0f1115;"></div>
<div style="position:absolute;left:391px;top:98px;width:296px;height:8px;background:#12151a;"></div>
<svg width="298" height="10" style="left:390px;top:97px">
<circle cx="5" cy="4.5" r="2.6" fill="#2a1616" stroke="#b84a3a" stroke-width="0.8"/><circle cx="5" cy="4.5" r="0.9" fill="#e05040"/>
<rect x="10" y="2" width="6" height="5" fill="#7a7a7a" stroke="#999" stroke-width="0.4"/>
<g transform="translate(262.5,0)">
<path d="M2.2 4.5 Q5.5 1.4 8.8 4.5 Q5.5 7.6 2.2 4.5 z" fill="none" stroke="#e8e8e8" stroke-width="0.8"/><circle cx="5.5" cy="4.5" r="1.2" fill="#e8e8e8"/>
<rect x="14.8" y="2.5" width="6.4" height="4.6" rx="0.9" fill="#e8e8e8"/><rect x="16.2" y="1.8" width="2.2" height="1" fill="#e8e8e8"/><circle cx="18" cy="4.8" r="1.4" fill="#12151a"/><circle cx="18" cy="4.8" r="0.6" fill="#e8e8e8"/>
<path d="M28.6 2.6 h2.8 M30 2.6 v2.8 M28.6 5.4 h2.8 M30 5.4 v2.6" stroke="#e84a3a" stroke-width="1.1" stroke-linecap="round"/>
</g></svg>
<div class="t" style="left:498.50px;top:99.5px;width:80px;text-align:center;font-size:4.3px;color:#c8c8c8;">Lead: Chord Companion</div>
<div style="position:absolute;left:392px;top:106px;width:294px;height:12px;background:#2b2d33;"></div>
<svg width="10" height="10" style="left:394.5px;top:109px"><rect x="0.5" y="1" width="5" height="5" fill="#9a9a9a"/><path d="M3 1 v5 M0.5 3.5 h5" stroke="#6a6a6a" stroke-width="0.4"/></svg>
<div class="t" style="left:404px;top:108.6px;font-size:7.9px;color:#e8e8e8;transform:scaleX(0.86);transform-origin:0 0;-webkit-text-stroke:0;">Chord Companion</div>
<svg width="298" height="10" style="left:390px;top:107px"><path d="M110.5 2.3 L107.5 4.3 L110.5 6.3 z" fill="#e0e0e0"/><circle cx="149" cy="3.6" r="0.9" fill="#d0d0d0"/><path d="M187.5 2.3 L190.5 4.3 L187.5 6.3 z" fill="#e0e0e0"/></svg>
<svg width="12" height="12" style="left:653px;top:107px"><circle cx="5" cy="5.5" r="3.6" fill="none" stroke="#a0a0a0" stroke-width="0.8"/></svg>
<div class="t" style="left:662.3px;top:108.8px;font-size:6.0px;color:#8e8e8e;letter-spacing:-0.1px;-webkit-text-stroke:0;">tracktion</div>
<div style="position:absolute;left:392px;top:118px;width:294px;height:213px;background:#1d1f24;"></div>
<div style="position:absolute;left:392px;top:118px;width:97.5px;height:189.5px;background:#2b2d33;"></div>
<svg width="800" height="450" style="top:0"><text x="419.30" y="126.2" font-size="3.2" fill="#6aa0e8" text-anchor="middle" font-family="Liberation Sans">C</text><text x="425.23" y="126.2" font-size="2.6" fill="#7a7a7e" text-anchor="middle" font-family="Liberation Sans">C#</text><text x="431.16" y="126.2" font-size="3.2" fill="#6aa0e8" text-anchor="middle" font-family="Liberation Sans">D</text><text x="437.09" y="126.2" font-size="2.6" fill="#7a7a7e" text-anchor="middle" font-family="Liberation Sans">D#</text><text x="443.02" y="126.2" font-size="3.2" fill="#6aa0e8" text-anchor="middle" font-family="Liberation Sans">E</text><text x="448.95" y="126.2" font-size="3.2" fill="#6aa0e8" text-anchor="middle" font-family="Liberation Sans">F</text><text x="454.88" y="126.2" font-size="2.6" fill="#7a7a7e" text-anchor="middle" font-family="Liberation Sans">F#</text><text x="460.81" y="126.2" font-size="3.2" fill="#6aa0e8" text-anchor="middle" font-family="Liberation Sans">G</text><text x="466.74" y="126.2" font-size="2.6" fill="#7a7a7e" text-anchor="middle" font-family="Liberation Sans">G#</text><text x="472.67" y="126.2" font-size="3.2" fill="#6aa0e8" text-anchor="middle" font-family="Liberation Sans">A</text><text x="478.60" y="126.2" font-size="2.6" fill="#7a7a7e" text-anchor="middle" font-family="Liberation Sans">A#</text><text x="484.53" y="126.2" font-size="3.2" fill="#6aa0e8" text-anchor="middle" font-family="Liberation Sans">B</text><text x="404.5" y="132.50" font-size="3.4" fill="#dcdcdf" text-anchor="middle" font-family="Liberation Sans">major</text><circle cx="419.30" cy="131.30" r="2.65" fill="#74b2f4" stroke="#3d6aa0" stroke-width="0.4"/><circle cx="419.30" cy="131.30" r="1.6" fill="#8cc4ff"/><circle cx="425.23" cy="131.30" r="2.6" fill="#76767a"/><circle cx="425.23" cy="131.30" r="1.7" fill="#6a6a6e"/><circle cx="431.16" cy="131.30" r="2.6" fill="#76767a"/><circle cx="431.16" cy="131.30" r="1.7" fill="#6a6a6e"/><circle cx="437.09" cy="131.30" r="2.6" fill="#76767a"/><circle cx="437.09" cy="131.30" r="1.7" fill="#6a6a6e"/><circle cx="443.02" cy="131.30" r="2.6" fill="#76767a"/><circle cx="443.02" cy="131.30" r="1.7" fill="#6a6a6e"/><circle cx="448.95" cy="131.30" r="2.65" fill="#74b2f4" stroke="#3d6aa0" stroke-width="0.4"/><circle cx="448.95" cy="131.30" r="1.6" fill="#8cc4ff"/><circle cx="454.88" cy="131.30" r="2.6" fill="#76767a"/><circle cx="454.88" cy="131.30" r="1.7" fill="#6a6a6e"/><circle cx="460.81" cy="131.30" r="2.65" fill="#74b2f4" stroke="#3d6aa0" stroke-width="0.4"/><circle cx="460.81" cy="131.30" r="1.6" fill="#8cc4ff"/><circle cx="466.74" cy="131.30" r="2.6" fill="#76767a"/><circle cx="466.74" cy="131.30" r="1.7" fill="#6a6a6e"/><circle cx="472.67" cy="131.30" r="2.6" fill="#76767a"/><circle cx="472.67" cy="131.30" r="1.7" fill="#6a6a6e"/><circle cx="478.60" cy="131.30" r="2.6" fill="#76767a"/><circle cx="478.60" cy="131.30" r="1.7" fill="#6a6a6e"/><circle cx="484.53" cy="131.30" r="2.6" fill="#76767a"/><circle cx="484.53" cy="131.30" r="1.7" fill="#6a6a6e"/><text x="404.5" y="139.38" font-size="3.4" fill="#dcdcdf" text-anchor="middle" font-family="Liberation Sans">minor</text><circle cx="419.30" cy="138.18" r="2.6" fill="#76767a"/><circle cx="419.30" cy="138.18" r="1.7" fill="#6a6a6e"/><circle cx="425.23" cy="138.18" r="2.6" fill="#76767a"/><circle cx="425.23" cy="138.18" r="1.7" fill="#6a6a6e"/><circle cx="431.16" cy="138.18" r="2.65" fill="#74b2f4" stroke="#3d6aa0" stroke-width="0.4"/><circle cx="431.16" cy="138.18" r="1.6" fill="#8cc4ff"/><circle cx="437.09" cy="138.18" r="2.6" fill="#76767a"/><circle cx="437.09" cy="138.18" r="1.7" fill="#6a6a6e"/><circle cx="443.02" cy="138.18" r="2.65" fill="#74b2f4" stroke="#3d6aa0" stroke-width="0.4"/><circle cx="443.02" cy="138.18" r="1.6" fill="#8cc4ff"/><circle cx="448.95" cy="138.18" r="2.6" fill="#76767a"/><circle cx="448.95" cy="138.18" r="1.7" fill="#6a6a6e"/><circle cx="454.88" cy="138.18" r="2.6" fill="#76767a"/><circle cx="454.88" cy="138.18" r="1.7" fill="#6a6a6e"/><circle cx="460.81" cy="138.18" r="2.6" fill="#76767a"/><circle cx="460.81" cy="138.18" r="1.7" fill="#6a6a6e"/><circle cx="466.74" cy="138.18" r="2.6" fill="#76767a"/><circle cx="466.74" cy="138.18" r="1.7" fill="#6a6a6e"/><circle cx="472.67" cy="138.18" r="2.65" fill="#74b2f4" stroke="#3d6aa0" stroke-width="0.4"/><circle cx="472.67" cy="138.18" r="1.6" fill="#8cc4ff"/><circle cx="478.60" cy="138.18" r="2.6" fill="#76767a"/><circle cx="478.60" cy="138.18" r="1.7" fill="#6a6a6e"/><circle cx="484.53" cy="138.18" r="2.6" fill="#76767a"/><circle cx="484.53" cy="138.18" r="1.7" fill="#6a6a6e"/><text x="404.5" y="146.26" font-size="3.4" fill="#dcdcdf" text-anchor="middle" font-family="Liberation Sans">dim</text><circle cx="419.30" cy="145.06" r="2.6" fill="#76767a"/><circle cx="419.30" cy="145.06" r="1.7" fill="#6a6a6e"/><circle cx="425.23" cy="145.06" r="2.6" fill="#76767a"/><circle cx="425.23" cy="145.06" r="1.7" fill="#6a6a6e"/><circle cx="431.16" cy="145.06" r="2.6" fill="#76767a"/><circle cx="431.16" cy="145.06" r="1.7" fill="#6a6a6e"/><circle cx="437.09" cy="145.06" r="2.6" fill="#76767a"/><circle cx="437.09" cy="145.06" r="1.7" fill="#6a6a6e"/><circle cx="443.02" cy="145.06" r="2.6" fill="#76767a"/><circle cx="443.02" cy="145.06" r="1.7" fill="#6a6a6e"/><circle cx="448.95" cy="145.06" r="2.6" fill="#76767a"/><circle cx="448.95" cy="145.06" r="1.7" fill="#6a6a6e"/><circle cx="454.88" cy="145.06" r="2.6" fill="#76767a"/><circle cx="454.88" cy="145.06" r="1.7" fill="#6a6a6e"/><circle cx="460.81" cy="145.06" r="2.6" fill="#76767a"/><circle cx="460.81" cy="145.06" r="1.7" fill="#6a6a6e"/><circle cx="466.74" cy="145.06" r="2.6" fill="#76767a"/><circle cx="466.74" cy="145.06" r="1.7" fill="#6a6a6e"/><circle cx="472.67" cy="145.06" r="2.6" fill="#76767a"/><circle cx="472.67" cy="145.06" r="1.7" fill="#6a6a6e"/><circle cx="478.60" cy="145.06" r="2.6" fill="#76767a"/><circle cx="478.60" cy="145.06" r="1.7" fill="#6a6a6e"/><circle cx="484.53" cy="145.06" r="2.65" fill="#74b2f4" stroke="#3d6aa0" stroke-width="0.4"/><circle cx="484.53" cy="145.06" r="1.6" fill="#8cc4ff"/><text x="404.5" y="153.14" font-size="3.4" fill="#dcdcdf" text-anchor="middle" font-family="Liberation Sans">aug</text><circle cx="419.30" cy="151.94" r="2.6" fill="#76767a"/><circle cx="419.30" cy="151.94" r="1.7" fill="#6a6a6e"/><circle cx="425.23" cy="151.94" r="2.6" fill="#76767a"/><circle cx="425.23" cy="151.94" r="1.7" fill="#6a6a6e"/><circle cx="431.16" cy="151.94" r="2.6" fill="#76767a"/><circle cx="431.16" cy="151.94" r="1.7" fill="#6a6a6e"/><circle cx="437.09" cy="151.94" r="2.6" fill="#76767a"/><circle cx="437.09" cy="151.94" r="1.7" fill="#6a6a6e"/><circle cx="443.02" cy="151.94" r="2.6" fill="#76767a"/><circle cx="443.02" cy="151.94" r="1.7" fill="#6a6a6e"/><circle cx="448.95" cy="151.94" r="2.6" fill="#76767a"/><circle cx="448.95" cy="151.94" r="1.7" fill="#6a6a6e"/><circle cx="454.88" cy="151.94" r="2.6" fill="#76767a"/><circle cx="454.88" cy="151.94" r="1.7" fill="#6a6a6e"/><circle cx="460.81" cy="151.94" r="2.6" fill="#76767a"/><circle cx="460.81" cy="151.94" r="1.7" fill="#6a6a6e"/><circle cx="466.74" cy="151.94" r="2.6" fill="#76767a"/><circle cx="466.74" cy="151.94" r="1.7" fill="#6a6a6e"/><circle cx="472.67" cy="151.94" r="2.6" fill="#76767a"/><circle cx="472.67" cy="151.94" r="1.7" fill="#6a6a6e"/><circle cx="478.60" cy="151.94" r="2.6" fill="#76767a"/><circle cx="478.60" cy="151.94" r="1.7" fill="#6a6a6e"/><circle cx="484.53" cy="151.94" r="2.6" fill="#76767a"/><circle cx="484.53" cy="151.94" r="1.7" fill="#6a6a6e"/><text x="404.5" y="160.02" font-size="3.4" fill="#dcdcdf" text-anchor="middle" font-family="Liberation Sans">major 6</text><circle cx="419.30" cy="158.82" r="2.65" fill="#74b2f4" stroke="#3d6aa0" stroke-width="0.4"/><circle cx="419.30" cy="158.82" r="1.6" fill="#8cc4ff"/><circle cx="425.23" cy="158.82" r="2.6" fill="#76767a"/><circle cx="425.23" cy="158.82" r="1.7" fill="#6a6a6e"/><circle cx="431.16" cy="158.82" r="2.6" fill="#76767a"/><circle cx="431.16" cy="158.82" r="1.7" fill="#6a6a6e"/><circle cx="437.09" cy="158.82" r="2.6" fill="#76767a"/><circle cx="437.09" cy="158.82" r="1.7" fill="#6a6a6e"/><circle cx="443.02" cy="158.82" r="2.6" fill="#76767a"/><circle cx="443.02" cy="158.82" r="1.7" fill="#6a6a6e"/><circle cx="448.95" cy="158.82" r="2.65" fill="#74b2f4" stroke="#3d6aa0" stroke-width="0.4"/><circle cx="448.95" cy="158.82" r="1.6" fill="#8cc4ff"/><circle cx="454.88" cy="158.82" r="2.6" fill="#76767a"/><circle cx="454.88" cy="158.82" r="1.7" fill="#6a6a6e"/><circle cx="460.81" cy="158.82" r="2.65" fill="#74b2f4" stroke="#3d6aa0" stroke-width="0.4"/><circle cx="460.81" cy="158.82" r="1.6" fill="#8cc4ff"/><circle cx="466.74" cy="158.82" r="2.6" fill="#76767a"/><circle cx="466.74" cy="158.82" r="1.7" fill="#6a6a6e"/><circle cx="472.67" cy="158.82" r="2.6" fill="#76767a"/><circle cx="472.67" cy="158.82" r="1.7" fill="#6a6a6e"/><circle cx="478.60" cy="158.82" r="2.6" fill="#76767a"/><circle cx="478.60" cy="158.82" r="1.7" fill="#6a6a6e"/><circle cx="484.53" cy="158.82" r="2.6" fill="#76767a"/><circle cx="484.53" cy="158.82" r="1.7" fill="#6a6a6e"/><text x="404.5" y="166.90" font-size="3.4" fill="#dcdcdf" text-anchor="middle" font-family="Liberation Sans">minor 6</text><circle cx="419.30" cy="165.70" r="2.6" fill="#76767a"/><circle cx="419.30" cy="165.70" r="1.7" fill="#6a6a6e"/><circle cx="425.23" cy="165.70" r="2.6" fill="#76767a"/><circle cx="425.23" cy="165.70" r="1.7" fill="#6a6a6e"/><circle cx="431.16" cy="165.70" r="2.65" fill="#74b2f4" stroke="#3d6aa0" stroke-width="0.4"/><circle cx="431.16" cy="165.70" r="1.6" fill="#8cc4ff"/><circle cx="437.09" cy="165.70" r="2.6" fill="#76767a"/><circle cx="437.09" cy="165.70" r="1.7" fill="#6a6a6e"/><circle cx="443.02" cy="165.70" r="2.6" fill="#76767a"/><circle cx="443.02" cy="165.70" r="1.7" fill="#6a6a6e"/><circle cx="448.95" cy="165.70" r="2.6" fill="#76767a"/><circle cx="448.95" cy="165.70" r="1.7" fill="#6a6a6e"/><circle cx="454.88" cy="165.70" r="2.6" fill="#76767a"/><circle cx="454.88" cy="165.70" r="1.7" fill="#6a6a6e"/><circle cx="460.81" cy="165.70" r="2.6" fill="#76767a"/><circle cx="460.81" cy="165.70" r="1.7" fill="#6a6a6e"/><circle cx="466.74" cy="165.70" r="2.6" fill="#76767a"/><circle cx="466.74" cy="165.70" r="1.7" fill="#6a6a6e"/><circle cx="472.67" cy="165.70" r="2.6" fill="#76767a"/><circle cx="472.67" cy="165.70" r="1.7" fill="#6a6a6e"/><circle cx="478.60" cy="165.70" r="2.6" fill="#76767a"/><circle cx="478.60" cy="165.70" r="1.7" fill="#6a6a6e"/><circle cx="484.53" cy="165.70" r="2.6" fill="#76767a"/><circle cx="484.53" cy="165.70" r="1.7" fill="#6a6a6e"/><text x="404.5" y="173.78" font-size="3.4" fill="#dcdcdf" text-anchor="middle" font-family="Liberation Sans">dom 7</text><circle cx="419.30" cy="172.58" r="2.6" fill="#76767a"/><circle cx="419.30" cy="172.58" r="1.7" fill="#6a6a6e"/><circle cx="425.23" cy="172.58" r="2.6" fill="#76767a"/><circle cx="425.23" cy="172.58" r="1.7" fill="#6a6a6e"/><circle cx="431.16" cy="172.58" r="2.6" fill="#76767a"/><circle cx="431.16" cy="172.58" r="1.7" fill="#6a6a6e"/><circle cx="437.09" cy="172.58" r="2.6" fill="#76767a"/><circle cx="437.09" cy="172.58" r="1.7" fill="#6a6a6e"/><circle cx="443.02" cy="172.58" r="2.6" fill="#76767a"/><circle cx="443.02" cy="172.58" r="1.7" fill="#6a6a6e"/><circle cx="448.95" cy="172.58" r="2.6" fill="#76767a"/><circle cx="448.95" cy="172.58" r="1.7" fill="#6a6a6e"/><circle cx="454.88" cy="172.58" r="2.6" fill="#76767a"/><circle cx="454.88" cy="172.58" r="1.7" fill="#6a6a6e"/><circle cx="460.81" cy="172.58" r="2.65" fill="#74b2f4" stroke="#3d6aa0" stroke-width="0.4"/><circle cx="460.81" cy="172.58" r="1.6" fill="#8cc4ff"/><circle cx="466.74" cy="172.58" r="2.6" fill="#76767a"/><circle cx="466.74" cy="172.58" r="1.7" fill="#6a6a6e"/><circle cx="472.67" cy="172.58" r="2.6" fill="#76767a"/><circle cx="472.67" cy="172.58" r="1.7" fill="#6a6a6e"/><circle cx="478.60" cy="172.58" r="2.6" fill="#76767a"/><circle cx="478.60" cy="172.58" r="1.7" fill="#6a6a6e"/><circle cx="484.53" cy="172.58" r="2.6" fill="#76767a"/><circle cx="484.53" cy="172.58" r="1.7" fill="#6a6a6e"/><text x="404.5" y="180.66" font-size="3.4" fill="#dcdcdf" text-anchor="middle" font-family="Liberation Sans">major 7</text><circle cx="419.30" cy="179.46" r="2.65" fill="#74b2f4" stroke="#3d6aa0" stroke-width="0.4"/><circle cx="419.30" cy="179.46" r="1.6" fill="#8cc4ff"/><circle cx="425.23" cy="179.46" r="2.6" fill="#76767a"/><circle cx="425.23" cy="179.46" r="1.7" fill="#6a6a6e"/><circle cx="431.16" cy="179.46" r="2.6" fill="#76767a"/><circle cx="431.16" cy="179.46" r="1.7" fill="#6a6a6e"/><circle cx="437.09" cy="179.46" r="2.6" fill="#76767a"/><circle cx="437.09" cy="179.46" r="1.7" fill="#6a6a6e"/><circle cx="443.02" cy="179.46" r="2.6" fill="#76767a"/><circle cx="443.02" cy="179.46" r="1.7" fill="#6a6a6e"/><circle cx="448.95" cy="179.46" r="2.65" fill="#74b2f4" stroke="#3d6aa0" stroke-width="0.4"/><circle cx="448.95" cy="179.46" r="1.6" fill="#8cc4ff"/><circle cx="454.88" cy="179.46" r="2.6" fill="#76767a"/><circle cx="454.88" cy="179.46" r="1.7" fill="#6a6a6e"/><circle cx="460.81" cy="179.46" r="2.6" fill="#76767a"/><circle cx="460.81" cy="179.46" r="1.7" fill="#6a6a6e"/><circle cx="466.74" cy="179.46" r="2.6" fill="#76767a"/><circle cx="466.74" cy="179.46" r="1.7" fill="#6a6a6e"/><circle cx="472.67" cy="179.46" r="2.6" fill="#76767a"/><circle cx="472.67" cy="179.46" r="1.7" fill="#6a6a6e"/><circle cx="478.60" cy="179.46" r="2.6" fill="#76767a"/><circle cx="478.60" cy="179.46" r="1.7" fill="#6a6a6e"/><circle cx="484.53" cy="179.46" r="2.6" fill="#76767a"/><circle cx="484.53" cy="179.46" r="1.7" fill="#6a6a6e"/><text x="404.5" y="187.54" font-size="3.4" fill="#dcdcdf" text-anchor="middle" font-family="Liberation Sans">minor 7</text><circle cx="419.30" cy="186.34" r="2.6" fill="#76767a"/><circle cx="419.30" cy="186.34" r="1.7" fill="#6a6a6e"/><circle cx="425.23" cy="186.34" r="2.6" fill="#76767a"/><circle cx="425.23" cy="186.34" r="1.7" fill="#6a6a6e"/><circle cx="431.16" cy="186.34" r="2.65" fill="#74b2f4" stroke="#3d6aa0" stroke-width="0.4"/><circle cx="431.16" cy="186.34" r="1.6" fill="#8cc4ff"/><circle cx="437.09" cy="186.34" r="2.6" fill="#76767a"/><circle cx="437.09" cy="186.34" r="1.7" fill="#6a6a6e"/><circle cx="443.02" cy="186.34" r="2.65" fill="#74b2f4" stroke="#3d6aa0" stroke-width="0.4"/><circle cx="443.02" cy="186.34" r="1.6" fill="#8cc4ff"/><circle cx="448.95" cy="186.34" r="2.6" fill="#76767a"/><circle cx="448.95" cy="186.34" r="1.7" fill="#6a6a6e"/><circle cx="454.88" cy="186.34" r="2.6" fill="#76767a"/><circle cx="454.88" cy="186.34" r="1.7" fill="#6a6a6e"/><circle cx="460.81" cy="186.34" r="2.6" fill="#76767a"/><circle cx="460.81" cy="186.34" r="1.7" fill="#6a6a6e"/><circle cx="466.74" cy="186.34" r="2.6" fill="#76767a"/><circle cx="466.74" cy="186.34" r="1.7" fill="#6a6a6e"/><circle cx="472.67" cy="186.34" r="2.65" fill="#74b2f4" stroke="#3d6aa0" stroke-width="0.4"/><circle cx="472.67" cy="186.34" r="1.6" fill="#8cc4ff"/><circle cx="478.60" cy="186.34" r="2.6" fill="#76767a"/><circle cx="478.60" cy="186.34" r="1.7" fill="#6a6a6e"/><circle cx="484.53" cy="186.34" r="2.6" fill="#76767a"/><circle cx="484.53" cy="186.34" r="1.7" fill="#6a6a6e"/><text x="404.5" y="194.42" font-size="3.4" fill="#dcdcdf" text-anchor="middle" font-family="Liberation Sans">aug 7</text><circle cx="419.30" cy="193.22" r="2.6" fill="#76767a"/><circle cx="419.30" cy="193.22" r="1.7" fill="#6a6a6e"/><circle cx="425.23" cy="193.22" r="2.6" fill="#76767a"/><circle cx="425.23" cy="193.22" r="1.7" fill="#6a6a6e"/><circle cx="431.16" cy="193.22" r="2.6" fill="#76767a"/><circle cx="431.16" cy="193.22" r="1.7" fill="#6a6a6e"/><circle cx="437.09" cy="193.22" r="2.6" fill="#76767a"/><circle cx="437.09" cy="193.22" r="1.7" fill="#6a6a6e"/><circle cx="443.02" cy="193.22" r="2.6" fill="#76767a"/><circle cx="443.02" cy="193.22" r="1.7" fill="#6a6a6e"/><circle cx="448.95" cy="193.22" r="2.6" fill="#76767a"/><circle cx="448.95" cy="193.22" r="1.7" fill="#6a6a6e"/><circle cx="454.88" cy="193.22" r="2.6" fill="#76767a"/><circle cx="454.88" cy="193.22" r="1.7" fill="#6a6a6e"/><circle cx="460.81" cy="193.22" r="2.6" fill="#76767a"/><circle cx="460.81" cy="193.22" r="1.7" fill="#6a6a6e"/><circle cx="466.74" cy="193.22" r="2.6" fill="#76767a"/><circle cx="466.74" cy="193.22" r="1.7" fill="#6a6a6e"/><circle cx="472.67" cy="193.22" r="2.6" fill="#76767a"/><circle cx="472.67" cy="193.22" r="1.7" fill="#6a6a6e"/><circle cx="478.60" cy="193.22" r="2.6" fill="#76767a"/><circle cx="478.60" cy="193.22" r="1.7" fill="#6a6a6e"/><circle cx="484.53" cy="193.22" r="2.6" fill="#76767a"/><circle cx="484.53" cy="193.22" r="1.7" fill="#6a6a6e"/><text x="404.5" y="201.30" font-size="3.4" fill="#dcdcdf" text-anchor="middle" font-family="Liberation Sans">dim 7</text><circle cx="419.30" cy="200.10" r="2.6" fill="#76767a"/><circle cx="419.30" cy="200.10" r="1.7" fill="#6a6a6e"/><circle cx="425.23" cy="200.10" r="2.6" fill="#76767a"/><circle cx="425.23" cy="200.10" r="1.7" fill="#6a6a6e"/><circle cx="431.16" cy="200.10" r="2.6" fill="#76767a"/><circle cx="431.16" cy="200.10" r="1.7" fill="#6a6a6e"/><circle cx="437.09" cy="200.10" r="2.6" fill="#76767a"/><circle cx="437.09" cy="200.10" r="1.7" fill="#6a6a6e"/><circle cx="443.02" cy="200.10" r="2.6" fill="#76767a"/><circle cx="443.02" cy="200.10" r="1.7" fill="#6a6a6e"/><circle cx="448.95" cy="200.10" r="2.6" fill="#76767a"/><circle cx="448.95" cy="200.10" r="1.7" fill="#6a6a6e"/><circle cx="454.88" cy="200.10" r="2.6" fill="#76767a"/><circle cx="454.88" cy="200.10" r="1.7" fill="#6a6a6e"/><circle cx="460.81" cy="200.10" r="2.6" fill="#76767a"/><circle cx="460.81" cy="200.10" r="1.7" fill="#6a6a6e"/><circle cx="466.74" cy="200.10" r="2.6" fill="#76767a"/><circle cx="466.74" cy="200.10" r="1.7" fill="#6a6a6e"/><circle cx="472.67" cy="200.10" r="2.6" fill="#76767a"/><circle cx="472.67" cy="200.10" r="1.7" fill="#6a6a6e"/><circle cx="478.60" cy="200.10" r="2.6" fill="#76767a"/><circle cx="478.60" cy="200.10" r="1.7" fill="#6a6a6e"/><circle cx="484.53" cy="200.10" r="2.6" fill="#76767a"/><circle cx="484.53" cy="200.10" r="1.7" fill="#6a6a6e"/><text x="404.5" y="208.18" font-size="3.4" fill="#dcdcdf" text-anchor="middle" font-family="Liberation Sans">half dim 7</text><circle cx="419.30" cy="206.98" r="2.6" fill="#76767a"/><circle cx="419.30" cy="206.98" r="1.7" fill="#6a6a6e"/><circle cx="425.23" cy="206.98" r="2.6" fill="#76767a"/><circle cx="425.23" cy="206.98" r="1.7" fill="#6a6a6e"/><circle cx="431.16" cy="206.98" r="2.6" fill="#76767a"/><circle cx="431.16" cy="206.98" r="1.7" fill="#6a6a6e"/><circle cx="437.09" cy="206.98" r="2.6" fill="#76767a"/><circle cx="437.09" cy="206.98" r="1.7" fill="#6a6a6e"/><circle cx="443.02" cy="206.98" r="2.6" fill="#76767a"/><circle cx="443.02" cy="206.98" r="1.7" fill="#6a6a6e"/><circle cx="448.95" cy="206.98" r="2.6" fill="#76767a"/><circle cx="448.95" cy="206.98" r="1.7" fill="#6a6a6e"/><circle cx="454.88" cy="206.98" r="2.6" fill="#76767a"/><circle cx="454.88" cy="206.98" r="1.7" fill="#6a6a6e"/><circle cx="460.81" cy="206.98" r="2.6" fill="#76767a"/><circle cx="460.81" cy="206.98" r="1.7" fill="#6a6a6e"/><circle cx="466.74" cy="206.98" r="2.6" fill="#76767a"/><circle cx="466.74" cy="206.98" r="1.7" fill="#6a6a6e"/><circle cx="472.67" cy="206.98" r="2.6" fill="#76767a"/><circle cx="472.67" cy="206.98" r="1.7" fill="#6a6a6e"/><circle cx="478.60" cy="206.98" r="2.6" fill="#76767a"/><circle cx="478.60" cy="206.98" r="1.7" fill="#6a6a6e"/><circle cx="484.53" cy="206.98" r="2.65" fill="#74b2f4" stroke="#3d6aa0" stroke-width="0.4"/><circle cx="484.53" cy="206.98" r="1.6" fill="#8cc4ff"/><text x="404.5" y="215.06" font-size="3.4" fill="#dcdcdf" text-anchor="middle" font-family="Liberation Sans">min maj 7</text><circle cx="419.30" cy="213.86" r="2.6" fill="#76767a"/><circle cx="419.30" cy="213.86" r="1.7" fill="#6a6a6e"/><circle cx="425.23" cy="213.86" r="2.6" fill="#76767a"/><circle cx="425.23" cy="213.86" r="1.7" fill="#6a6a6e"/><circle cx="431.16" cy="213.86" r="2.6" fill="#76767a"/><circle cx="431.16" cy="213.86" r="1.7" fill="#6a6a6e"/><circle cx="437.09" cy="213.86" r="2.6" fill="#76767a"/><circle cx="437.09" cy="213.86" r="1.7" fill="#6a6a6e"/><circle cx="443.02" cy="213.86" r="2.6" fill="#76767a"/><circle cx="443.02" cy="213.86" r="1.7" fill="#6a6a6e"/><circle cx="448.95" cy="213.86" r="2.6" fill="#76767a"/><circle cx="448.95" cy="213.86" r="1.7" fill="#6a6a6e"/><circle cx="454.88" cy="213.86" r="2.6" fill="#76767a"/><circle cx="454.88" cy="213.86" r="1.7" fill="#6a6a6e"/><circle cx="460.81" cy="213.86" r="2.6" fill="#76767a"/><circle cx="460.81" cy="213.86" r="1.7" fill="#6a6a6e"/><circle cx="466.74" cy="213.86" r="2.6" fill="#76767a"/><circle cx="466.74" cy="213.86" r="1.7" fill="#6a6a6e"/><circle cx="472.67" cy="213.86" r="2.6" fill="#76767a"/><circle cx="472.67" cy="213.86" r="1.7" fill="#6a6a6e"/><circle cx="478.60" cy="213.86" r="2.6" fill="#76767a"/><circle cx="478.60" cy="213.86" r="1.7" fill="#6a6a6e"/><circle cx="484.53" cy="213.86" r="2.6" fill="#76767a"/><circle cx="484.53" cy="213.86" r="1.7" fill="#6a6a6e"/><text x="404.5" y="221.94" font-size="3.4" fill="#dcdcdf" text-anchor="middle" font-family="Liberation Sans">sus 2</text><circle cx="419.30" cy="220.74" r="2.65" fill="#74b2f4" stroke="#3d6aa0" stroke-width="0.4"/><circle cx="419.30" cy="220.74" r="1.6" fill="#8cc4ff"/><circle cx="425.23" cy="220.74" r="2.6" fill="#76767a"/><circle cx="425.23" cy="220.74" r="1.7" fill="#6a6a6e"/><circle cx="431.16" cy="220.74" r="2.65" fill="#74b2f4" stroke="#3d6aa0" stroke-width="0.4"/><circle cx="431.16" cy="220.74" r="1.6" fill="#8cc4ff"/><circle cx="437.09" cy="220.74" r="2.6" fill="#76767a"/><circle cx="437.09" cy="220.74" r="1.7" fill="#6a6a6e"/><circle cx="443.02" cy="220.74" r="2.6" fill="#76767a"/><circle cx="443.02" cy="220.74" r="1.7" fill="#6a6a6e"/><circle cx="448.95" cy="220.74" r="2.65" fill="#74b2f4" stroke="#3d6aa0" stroke-width="0.4"/><circle cx="448.95" cy="220.74" r="1.6" fill="#8cc4ff"/><circle cx="454.88" cy="220.74" r="2.6" fill="#76767a"/><circle cx="454.88" cy="220.74" r="1.7" fill="#6a6a6e"/><circle cx="460.81" cy="220.74" r="2.65" fill="#74b2f4" stroke="#3d6aa0" stroke-width="0.4"/><circle cx="460.81" cy="220.74" r="1.6" fill="#8cc4ff"/><circle cx="466.74" cy="220.74" r="2.6" fill="#76767a"/><circle cx="466.74" cy="220.74" r="1.7" fill="#6a6a6e"/><circle cx="472.67" cy="220.74" r="2.65" fill="#74b2f4" stroke="#3d6aa0" stroke-width="0.4"/><circle cx="472.67" cy="220.74" r="1.6" fill="#8cc4ff"/><circle cx="478.60" cy="220.74" r="2.6" fill="#76767a"/><circle cx="478.60" cy="220.74" r="1.7" fill="#6a6a6e"/><circle cx="484.53" cy="220.74" r="2.6" fill="#76767a"/><circle cx="484.53" cy="220.74" r="1.7" fill="#6a6a6e"/><text x="404.5" y="228.82" font-size="3.4" fill="#dcdcdf" text-anchor="middle" font-family="Liberation Sans">sus 4</text><circle cx="419.30" cy="227.62" r="2.65" fill="#74b2f4" stroke="#3d6aa0" stroke-width="0.4"/><circle cx="419.30" cy="227.62" r="1.6" fill="#8cc4ff"/><circle cx="425.23" cy="227.62" r="2.6" fill="#76767a"/><circle cx="425.23" cy="227.62" r="1.7" fill="#6a6a6e"/><circle cx="431.16" cy="227.62" r="2.65" fill="#74b2f4" stroke="#3d6aa0" stroke-width="0.4"/><circle cx="431.16" cy="227.62" r="1.6" fill="#8cc4ff"/><circle cx="437.09" cy="227.62" r="2.6" fill="#76767a"/><circle cx="437.09" cy="227.62" r="1.7" fill="#6a6a6e"/><circle cx="443.02" cy="227.62" r="2.65" fill="#74b2f4" stroke="#3d6aa0" stroke-width="0.4"/><circle cx="443.02" cy="227.62" r="1.6" fill="#8cc4ff"/><circle cx="448.95" cy="227.62" r="2.6" fill="#76767a"/><circle cx="448.95" cy="227.62" r="1.7" fill="#6a6a6e"/><circle cx="454.88" cy="227.62" r="2.6" fill="#76767a"/><circle cx="454.88" cy="227.62" r="1.7" fill="#6a6a6e"/><circle cx="460.81" cy="227.62" r="2.65" fill="#74b2f4" stroke="#3d6aa0" stroke-width="0.4"/><circle cx="460.81" cy="227.62" r="1.6" fill="#8cc4ff"/><circle cx="466.74" cy="227.62" r="2.6" fill="#76767a"/><circle cx="466.74" cy="227.62" r="1.7" fill="#6a6a6e"/><circle cx="472.67" cy="227.62" r="2.65" fill="#74b2f4" stroke="#3d6aa0" stroke-width="0.4"/><circle cx="472.67" cy="227.62" r="1.6" fill="#8cc4ff"/><circle cx="478.60" cy="227.62" r="2.6" fill="#76767a"/><circle cx="478.60" cy="227.62" r="1.7" fill="#6a6a6e"/><circle cx="484.53" cy="227.62" r="2.6" fill="#76767a"/><circle cx="484.53" cy="227.62" r="1.7" fill="#6a6a6e"/><text x="404.5" y="235.70" font-size="3.4" fill="#dcdcdf" text-anchor="middle" font-family="Liberation Sans">power</text><circle cx="419.30" cy="234.50" r="2.65" fill="#74b2f4" stroke="#3d6aa0" stroke-width="0.4"/><circle cx="419.30" cy="234.50" r="1.6" fill="#8cc4ff"/><circle cx="425.23" cy="234.50" r="2.6" fill="#76767a"/><circle cx="425.23" cy="234.50" r="1.7" fill="#6a6a6e"/><circle cx="431.16" cy="234.50" r="2.65" fill="#74b2f4" stroke="#3d6aa0" stroke-width="0.4"/><circle cx="431.16" cy="234.50" r="1.6" fill="#8cc4ff"/><circle cx="437.09" cy="234.50" r="2.6" fill="#76767a"/><circle cx="437.09" cy="234.50" r="1.7" fill="#6a6a6e"/><circle cx="443.02" cy="234.50" r="2.65" fill="#74b2f4" stroke="#3d6aa0" stroke-width="0.4"/><circle cx="443.02" cy="234.50" r="1.6" fill="#8cc4ff"/><circle cx="448.95" cy="234.50" r="2.65" fill="#74b2f4" stroke="#3d6aa0" stroke-width="0.4"/><circle cx="448.95" cy="234.50" r="1.6" fill="#8cc4ff"/><circle cx="454.88" cy="234.50" r="2.6" fill="#76767a"/><circle cx="454.88" cy="234.50" r="1.7" fill="#6a6a6e"/><circle cx="460.81" cy="234.50" r="2.65" fill="#74b2f4" stroke="#3d6aa0" stroke-width="0.4"/><circle cx="460.81" cy="234.50" r="1.6" fill="#8cc4ff"/><circle cx="466.74" cy="234.50" r="2.6" fill="#76767a"/><circle cx="466.74" cy="234.50" r="1.7" fill="#6a6a6e"/><circle cx="472.67" cy="234.50" r="2.65" fill="#74b2f4" stroke="#3d6aa0" stroke-width="0.4"/><circle cx="472.67" cy="234.50" r="1.6" fill="#8cc4ff"/><circle cx="478.60" cy="234.50" r="2.6" fill="#76767a"/><circle cx="478.60" cy="234.50" r="1.7" fill="#6a6a6e"/><circle cx="484.53" cy="234.50" r="2.6" fill="#76767a"/><circle cx="484.53" cy="234.50" r="1.7" fill="#6a6a6e"/><text x="404.5" y="242.58" font-size="3.4" fill="#dcdcdf" text-anchor="middle" font-family="Liberation Sans">major 9</text><circle cx="419.30" cy="241.38" r="2.65" fill="#74b2f4" stroke="#3d6aa0" stroke-width="0.4"/><circle cx="419.30" cy="241.38" r="1.6" fill="#8cc4ff"/><circle cx="425.23" cy="241.38" r="2.6" fill="#76767a"/><circle cx="425.23" cy="241.38" r="1.7" fill="#6a6a6e"/><circle cx="431.16" cy="241.38" r="2.6" fill="#76767a"/><circle cx="431.16" cy="241.38" r="1.7" fill="#6a6a6e"/><circle cx="437.09" cy="241.38" r="2.6" fill="#76767a"/><circle cx="437.09" cy="241.38" r="1.7" fill="#6a6a6e"/><circle cx="443.02" cy="241.38" r="2.6" fill="#76767a"/><circle cx="443.02" cy="241.38" r="1.7" fill="#6a6a6e"/><circle cx="448.95" cy="241.38" r="2.65" fill="#74b2f4" stroke="#3d6aa0" stroke-width="0.4"/><circle cx="448.95" cy="241.38" r="1.6" fill="#8cc4ff"/><circle cx="454.88" cy="241.38" r="2.6" fill="#76767a"/><circle cx="454.88" cy="241.38" r="1.7" fill="#6a6a6e"/><circle cx="460.81" cy="241.38" r="2.6" fill="#76767a"/><circle cx="460.81" cy="241.38" r="1.7" fill="#6a6a6e"/><circle cx="466.74" cy="241.38" r="2.6" fill="#76767a"/><circle cx="466.74" cy="241.38" r="1.7" fill="#6a6a6e"/><circle cx="472.67" cy="241.38" r="2.6" fill="#76767a"/><circle cx="472.67" cy="241.38" r="1.7" fill="#6a6a6e"/><circle cx="478.60" cy="241.38" r="2.6" fill="#76767a"/><circle cx="478.60" cy="241.38" r="1.7" fill="#6a6a6e"/><circle cx="484.53" cy="241.38" r="2.6" fill="#76767a"/><circle cx="484.53" cy="241.38" r="1.7" fill="#6a6a6e"/><text x="404.5" y="249.46" font-size="3.4" fill="#dcdcdf" text-anchor="middle" font-family="Liberation Sans">dom 9</text><circle cx="419.30" cy="248.26" r="2.6" fill="#76767a"/><circle cx="419.30" cy="248.26" r="1.7" fill="#6a6a6e"/><circle cx="425.23" cy="248.26" r="2.6" fill="#76767a"/><circle cx="425.23" cy="248.26" r="1.7" fill="#6a6a6e"/><circle cx="431.16" cy="248.26" r="2.6" fill="#76767a"/><circle cx="431.16" cy="248.26" r="1.7" fill="#6a6a6e"/><circle cx="437.09" cy="248.26" r="2.6" fill="#76767a"/><circle cx="437.09" cy="248.26" r="1.7" fill="#6a6a6e"/><circle cx="443.02" cy="248.26" r="2.6" fill="#76767a"/><circle cx="443.02" cy="248.26" r="1.7" fill="#6a6a6e"/><circle cx="448.95" cy="248.26" r="2.6" fill="#76767a"/><circle cx="448.95" cy="248.26" r="1.7" fill="#6a6a6e"/><circle cx="454.88" cy="248.26" r="2.6" fill="#76767a"/><circle cx="454.88" cy="248.26" r="1.7" fill="#6a6a6e"/><circle cx="460.81" cy="248.26" r="2.65" fill="#74b2f4" stroke="#3d6aa0" stroke-width="0.4"/><circle cx="460.81" cy="248.26" r="1.6" fill="#8cc4ff"/><circle cx="466.74" cy="248.26" r="2.6" fill="#76767a"/><circle cx="466.74" cy="248.26" r="1.7" fill="#6a6a6e"/><circle cx="472.67" cy="248.26" r="2.6" fill="#76767a"/><circle cx="472.67" cy="248.26" r="1.7" fill="#6a6a6e"/><circle cx="478.60" cy="248.26" r="2.6" fill="#76767a"/><circle cx="478.60" cy="248.26" r="1.7" fill="#6a6a6e"/><circle cx="484.53" cy="248.26" r="2.6" fill="#76767a"/><circle cx="484.53" cy="248.26" r="1.7" fill="#6a6a6e"/><text x="404.5" y="256.34" font-size="3.4" fill="#dcdcdf" text-anchor="middle" font-family="Liberation Sans">min maj 9</text><circle cx="419.30" cy="255.14" r="2.6" fill="#76767a"/><circle cx="419.30" cy="255.14" r="1.7" fill="#6a6a6e"/><circle cx="425.23" cy="255.14" r="2.6" fill="#76767a"/><circle cx="425.23" cy="255.14" r="1.7" fill="#6a6a6e"/><circle cx="431.16" cy="255.14" r="2.6" fill="#76767a"/><circle cx="431.16" cy="255.14" r="1.7" fill="#6a6a6e"/><circle cx="437.09" cy="255.14" r="2.6" fill="#76767a"/><circle cx="437.09" cy="255.14" r="1.7" fill="#6a6a6e"/><circle cx="443.02" cy="255.14" r="2.6" fill="#76767a"/><circle cx="443.02" cy="255.14" r="1.7" fill="#6a6a6e"/><circle cx="448.95" cy="255.14" r="2.6" fill="#76767a"/><circle cx="448.95" cy="255.14" r="1.7" fill="#6a6a6e"/><circle cx="454.88" cy="255.14" r="2.6" fill="#76767a"/><circle cx="454.88" cy="255.14" r="1.7" fill="#6a6a6e"/><circle cx="460.81" cy="255.14" r="2.6" fill="#76767a"/><circle cx="460.81" cy="255.14" r="1.7" fill="#6a6a6e"/><circle cx="466.74" cy="255.14" r="2.6" fill="#76767a"/><circle cx="466.74" cy="255.14" r="1.7" fill="#6a6a6e"/><circle cx="472.67" cy="255.14" r="2.6" fill="#76767a"/><circle cx="472.67" cy="255.14" r="1.7" fill="#6a6a6e"/><circle cx="478.60" cy="255.14" r="2.6" fill="#76767a"/><circle cx="478.60" cy="255.14" r="1.7" fill="#6a6a6e"/><circle cx="484.53" cy="255.14" r="2.6" fill="#76767a"/><circle cx="484.53" cy="255.14" r="1.7" fill="#6a6a6e"/><text x="404.5" y="263.22" font-size="3.4" fill="#dcdcdf" text-anchor="middle" font-family="Liberation Sans">min dom 9</text><circle cx="419.30" cy="262.02" r="2.6" fill="#76767a"/><circle cx="419.30" cy="262.02" r="1.7" fill="#6a6a6e"/><circle cx="425.23" cy="262.02" r="2.6" fill="#76767a"/><circle cx="425.23" cy="262.02" r="1.7" fill="#6a6a6e"/><circle cx="431.16" cy="262.02" r="2.65" fill="#74b2f4" stroke="#3d6aa0" stroke-width="0.4"/><circle cx="431.16" cy="262.02" r="1.6" fill="#8cc4ff"/><circle cx="437.09" cy="262.02" r="2.6" fill="#76767a"/><circle cx="437.09" cy="262.02" r="1.7" fill="#6a6a6e"/><circle cx="443.02" cy="262.02" r="2.6" fill="#76767a"/><circle cx="443.02" cy="262.02" r="1.7" fill="#6a6a6e"/><circle cx="448.95" cy="262.02" r="2.6" fill="#76767a"/><circle cx="448.95" cy="262.02" r="1.7" fill="#6a6a6e"/><circle cx="454.88" cy="262.02" r="2.6" fill="#76767a"/><circle cx="454.88" cy="262.02" r="1.7" fill="#6a6a6e"/><circle cx="460.81" cy="262.02" r="2.6" fill="#76767a"/><circle cx="460.81" cy="262.02" r="1.7" fill="#6a6a6e"/><circle cx="466.74" cy="262.02" r="2.6" fill="#76767a"/><circle cx="466.74" cy="262.02" r="1.7" fill="#6a6a6e"/><circle cx="472.67" cy="262.02" r="2.65" fill="#74b2f4" stroke="#3d6aa0" stroke-width="0.4"/><circle cx="472.67" cy="262.02" r="1.6" fill="#8cc4ff"/><circle cx="478.60" cy="262.02" r="2.6" fill="#76767a"/><circle cx="478.60" cy="262.02" r="1.7" fill="#6a6a6e"/><circle cx="484.53" cy="262.02" r="2.6" fill="#76767a"/><circle cx="484.53" cy="262.02" r="1.7" fill="#6a6a6e"/><text x="404.5" y="270.10" font-size="3.4" fill="#dcdcdf" text-anchor="middle" font-family="Liberation Sans">aug maj 9</text><circle cx="419.30" cy="268.90" r="2.6" fill="#76767a"/><circle cx="419.30" cy="268.90" r="1.7" fill="#6a6a6e"/><circle cx="425.23" cy="268.90" r="2.6" fill="#76767a"/><circle cx="425.23" cy="268.90" r="1.7" fill="#6a6a6e"/><circle cx="431.16" cy="268.90" r="2.6" fill="#76767a"/><circle cx="431.16" cy="268.90" r="1.7" fill="#6a6a6e"/><circle cx="437.09" cy="268.90" r="2.6" fill="#76767a"/><circle cx="437.09" cy="268.90" r="1.7" fill="#6a6a6e"/><circle cx="443.02" cy="268.90" r="2.6" fill="#76767a"/><circle cx="443.02" cy="268.90" r="1.7" fill="#6a6a6e"/><circle cx="448.95" cy="268.90" r="2.6" fill="#76767a"/><circle cx="448.95" cy="268.90" r="1.7" fill="#6a6a6e"/><circle cx="454.88" cy="268.90" r="2.6" fill="#76767a"/><circle cx="454.88" cy="268.90" r="1.7" fill="#6a6a6e"/><circle cx="460.81" cy="268.90" r="2.6" fill="#76767a"/><circle cx="460.81" cy="268.90" r="1.7" fill="#6a6a6e"/><circle cx="466.74" cy="268.90" r="2.6" fill="#76767a"/><circle cx="466.74" cy="268.90" r="1.7" fill="#6a6a6e"/><circle cx="472.67" cy="268.90" r="2.6" fill="#76767a"/><circle cx="472.67" cy="268.90" r="1.7" fill="#6a6a6e"/><circle cx="478.60" cy="268.90" r="2.6" fill="#76767a"/><circle cx="478.60" cy="268.90" r="1.7" fill="#6a6a6e"/><circle cx="484.53" cy="268.90" r="2.6" fill="#76767a"/><circle cx="484.53" cy="268.90" r="1.7" fill="#6a6a6e"/><text x="404.5" y="276.98" font-size="3.4" fill="#dcdcdf" text-anchor="middle" font-family="Liberation Sans">aug dom 9</text><circle cx="419.30" cy="275.78" r="2.6" fill="#76767a"/><circle cx="419.30" cy="275.78" r="1.7" fill="#6a6a6e"/><circle cx="425.23" cy="275.78" r="2.6" fill="#76767a"/><circle cx="425.23" cy="275.78" r="1.7" fill="#6a6a6e"/><circle cx="431.16" cy="275.78" r="2.6" fill="#76767a"/><circle cx="431.16" cy="275.78" r="1.7" fill="#6a6a6e"/><circle cx="437.09" cy="275.78" r="2.6" fill="#76767a"/><circle cx="437.09" cy="275.78" r="1.7" fill="#6a6a6e"/><circle cx="443.02" cy="275.78" r="2.6" fill="#76767a"/><circle cx="443.02" cy="275.78" r="1.7" fill="#6a6a6e"/><circle cx="448.95" cy="275.78" r="2.6" fill="#76767a"/><circle cx="448.95" cy="275.78" r="1.7" fill="#6a6a6e"/><circle cx="454.88" cy="275.78" r="2.6" fill="#76767a"/><circle cx="454.88" cy="275.78" r="1.7" fill="#6a6a6e"/><circle cx="460.81" cy="275.78" r="2.6" fill="#76767a"/><circle cx="460.81" cy="275.78" r="1.7" fill="#6a6a6e"/><circle cx="466.74" cy="275.78" r="2.6" fill="#76767a"/><circle cx="466.74" cy="275.78" r="1.7" fill="#6a6a6e"/><circle cx="472.67" cy="275.78" r="2.6" fill="#76767a"/><circle cx="472.67" cy="275.78" r="1.7" fill="#6a6a6e"/><circle cx="478.60" cy="275.78" r="2.6" fill="#76767a"/><circle cx="478.60" cy="275.78" r="1.7" fill="#6a6a6e"/><circle cx="484.53" cy="275.78" r="2.6" fill="#76767a"/><circle cx="484.53" cy="275.78" r="1.7" fill="#6a6a6e"/><text x="404.5" y="283.86" font-size="3.4" fill="#dcdcdf" text-anchor="middle" font-family="Liberation Sans">half dim 9</text><circle cx="419.30" cy="282.66" r="2.6" fill="#76767a"/><circle cx="419.30" cy="282.66" r="1.7" fill="#6a6a6e"/><circle cx="425.23" cy="282.66" r="2.6" fill="#76767a"/><circle cx="425.23" cy="282.66" r="1.7" fill="#6a6a6e"/><circle cx="431.16" cy="282.66" r="2.6" fill="#76767a"/><circle cx="431.16" cy="282.66" r="1.7" fill="#6a6a6e"/><circle cx="437.09" cy="282.66" r="2.6" fill="#76767a"/><circle cx="437.09" cy="282.66" r="1.7" fill="#6a6a6e"/><circle cx="443.02" cy="282.66" r="2.6" fill="#76767a"/><circle cx="443.02" cy="282.66" r="1.7" fill="#6a6a6e"/><circle cx="448.95" cy="282.66" r="2.6" fill="#76767a"/><circle cx="448.95" cy="282.66" r="1.7" fill="#6a6a6e"/><circle cx="454.88" cy="282.66" r="2.6" fill="#76767a"/><circle cx="454.88" cy="282.66" r="1.7" fill="#6a6a6e"/><circle cx="460.81" cy="282.66" r="2.6" fill="#76767a"/><circle cx="460.81" cy="282.66" r="1.7" fill="#6a6a6e"/><circle cx="466.74" cy="282.66" r="2.6" fill="#76767a"/><circle cx="466.74" cy="282.66" r="1.7" fill="#6a6a6e"/><circle cx="472.67" cy="282.66" r="2.6" fill="#76767a"/><circle cx="472.67" cy="282.66" r="1.7" fill="#6a6a6e"/><circle cx="478.60" cy="282.66" r="2.6" fill="#76767a"/><circle cx="478.60" cy="282.66" r="1.7" fill="#6a6a6e"/><circle cx="484.53" cy="282.66" r="2.6" fill="#76767a"/><circle cx="484.53" cy="282.66" r="1.7" fill="#6a6a6e"/><text x="404.5" y="290.74" font-size="3.4" fill="#dcdcdf" text-anchor="middle" font-family="Liberation Sans" textLength="21" lengthAdjust="spacingAndGlyphs">half dim min 9</text><circle cx="419.30" cy="289.54" r="2.6" fill="#76767a"/><circle cx="419.30" cy="289.54" r="1.7" fill="#6a6a6e"/><circle cx="425.23" cy="289.54" r="2.6" fill="#76767a"/><circle cx="425.23" cy="289.54" r="1.7" fill="#6a6a6e"/><circle cx="431.16" cy="289.54" r="2.6" fill="#76767a"/><circle cx="431.16" cy="289.54" r="1.7" fill="#6a6a6e"/><circle cx="437.09" cy="289.54" r="2.6" fill="#76767a"/><circle cx="437.09" cy="289.54" r="1.7" fill="#6a6a6e"/><circle cx="443.02" cy="289.54" r="2.6" fill="#76767a"/><circle cx="443.02" cy="289.54" r="1.7" fill="#6a6a6e"/><circle cx="448.95" cy="289.54" r="2.6" fill="#76767a"/><circle cx="448.95" cy="289.54" r="1.7" fill="#6a6a6e"/><circle cx="454.88" cy="289.54" r="2.6" fill="#76767a"/><circle cx="454.88" cy="289.54" r="1.7" fill="#6a6a6e"/><circle cx="460.81" cy="289.54" r="2.6" fill="#76767a"/><circle cx="460.81" cy="289.54" r="1.7" fill="#6a6a6e"/><circle cx="466.74" cy="289.54" r="2.6" fill="#76767a"/><circle cx="466.74" cy="289.54" r="1.7" fill="#6a6a6e"/><circle cx="472.67" cy="289.54" r="2.6" fill="#76767a"/><circle cx="472.67" cy="289.54" r="1.7" fill="#6a6a6e"/><circle cx="478.60" cy="289.54" r="2.6" fill="#76767a"/><circle cx="478.60" cy="289.54" r="1.7" fill="#6a6a6e"/><circle cx="484.53" cy="289.54" r="2.65" fill="#74b2f4" stroke="#3d6aa0" stroke-width="0.4"/><circle cx="484.53" cy="289.54" r="1.6" fill="#8cc4ff"/><text x="404.5" y="297.62" font-size="3.4" fill="#dcdcdf" text-anchor="middle" font-family="Liberation Sans">dim 9</text><circle cx="419.30" cy="296.42" r="2.6" fill="#76767a"/><circle cx="419.30" cy="296.42" r="1.7" fill="#6a6a6e"/><circle cx="425.23" cy="296.42" r="2.6" fill="#76767a"/><circle cx="425.23" cy="296.42" r="1.7" fill="#6a6a6e"/><circle cx="431.16" cy="296.42" r="2.6" fill="#76767a"/><circle cx="431.16" cy="296.42" r="1.7" fill="#6a6a6e"/><circle cx="437.09" cy="296.42" r="2.6" fill="#76767a"/><circle cx="437.09" cy="296.42" r="1.7" fill="#6a6a6e"/><circle cx="443.02" cy="296.42" r="2.6" fill="#76767a"/><circle cx="443.02" cy="296.42" r="1.7" fill="#6a6a6e"/><circle cx="448.95" cy="296.42" r="2.6" fill="#76767a"/><circle cx="448.95" cy="296.42" r="1.7" fill="#6a6a6e"/><circle cx="454.88" cy="296.42" r="2.6" fill="#76767a"/><circle cx="454.88" cy="296.42" r="1.7" fill="#6a6a6e"/><circle cx="460.81" cy="296.42" r="2.6" fill="#76767a"/><circle cx="460.81" cy="296.42" r="1.7" fill="#6a6a6e"/><circle cx="466.74" cy="296.42" r="2.6" fill="#76767a"/><circle cx="466.74" cy="296.42" r="1.7" fill="#6a6a6e"/><circle cx="472.67" cy="296.42" r="2.6" fill="#76767a"/><circle cx="472.67" cy="296.42" r="1.7" fill="#6a6a6e"/><circle cx="478.60" cy="296.42" r="2.6" fill="#76767a"/><circle cx="478.60" cy="296.42" r="1.7" fill="#6a6a6e"/><circle cx="484.53" cy="296.42" r="2.6" fill="#76767a"/><circle cx="484.53" cy="296.42" r="1.7" fill="#6a6a6e"/><text x="404.5" y="304.50" font-size="3.4" fill="#dcdcdf" text-anchor="middle" font-family="Liberation Sans">dim min 9</text><circle cx="419.30" cy="303.30" r="2.6" fill="#76767a"/><circle cx="419.30" cy="303.30" r="1.7" fill="#6a6a6e"/><circle cx="425.23" cy="303.30" r="2.6" fill="#76767a"/><circle cx="425.23" cy="303.30" r="1.7" fill="#6a6a6e"/><circle cx="431.16" cy="303.30" r="2.6" fill="#76767a"/><circle cx="431.16" cy="303.30" r="1.7" fill="#6a6a6e"/><circle cx="437.09" cy="303.30" r="2.6" fill="#76767a"/><circle cx="437.09" cy="303.30" r="1.7" fill="#6a6a6e"/><circle cx="443.02" cy="303.30" r="2.6" fill="#76767a"/><circle cx="443.02" cy="303.30" r="1.7" fill="#6a6a6e"/><circle cx="448.95" cy="303.30" r="2.6" fill="#76767a"/><circle cx="448.95" cy="303.30" r="1.7" fill="#6a6a6e"/><circle cx="454.88" cy="303.30" r="2.6" fill="#76767a"/><circle cx="454.88" cy="303.30" r="1.7" fill="#6a6a6e"/><circle cx="460.81" cy="303.30" r="2.6" fill="#76767a"/><circle cx="460.81" cy="303.30" r="1.7" fill="#6a6a6e"/><circle cx="466.74" cy="303.30" r="2.6" fill="#76767a"/><circle cx="466.74" cy="303.30" r="1.7" fill="#6a6a6e"/><circle cx="472.67" cy="303.30" r="2.6" fill="#76767a"/><circle cx="472.67" cy="303.30" r="1.7" fill="#6a6a6e"/><circle cx="478.60" cy="303.30" r="2.6" fill="#76767a"/><circle cx="478.60" cy="303.30" r="1.7" fill="#6a6a6e"/><circle cx="484.53" cy="303.30" r="2.6" fill="#76767a"/><circle cx="484.53" cy="303.30" r="1.7" fill="#6a6a6e"/></svg>
<div style="position:absolute;left:491px;top:118px;width:195px;height:22px;background:#2d2f35;"></div>
<div style="position:absolute;left:493.5px;top:121.8px;width:14.300000000000011px;height:4.400000000000006px;background:#8ec8fa;border:0.5px solid #6aa8e8;box-sizing:border-box;"></div>
<div class="t" style="left:480.65px;top:122.5px;width:40px;text-align:center;font-size:3.0px;color:#2a4a7a;-webkit-text-stroke:0;">C</div>
<div style="position:absolute;left:509.35px;top:121.8px;width:14.299999999999955px;height:4.400000000000006px;background:#77777b;border:0.5px solid #5a5a5e;box-sizing:border-box;"></div>
<div class="t" style="left:496.50px;top:122.5px;width:40px;text-align:center;font-size:3.0px;color:#3a3a3e;-webkit-text-stroke:0;">C#</div>
<div style="position:absolute;left:525.2px;top:121.8px;width:14.299999999999955px;height:4.400000000000006px;background:#77777b;border:0.5px solid #5a5a5e;box-sizing:border-box;"></div>
<div class="t" style="left:512.35px;top:122.5px;width:40px;text-align:center;font-size:3.0px;color:#3a3a3e;-webkit-text-stroke:0;">D</div>
<div style="position:absolute;left:541.05px;top:121.8px;width:14.300000000000068px;height:4.400000000000006px;background:#77777b;border:0.5px solid #5a5a5e;box-sizing:border-box;"></div>
<div class="t" style="left:528.20px;top:122.5px;width:40px;text-align:center;font-size:3.0px;color:#3a3a3e;-webkit-text-stroke:0;">D#</div>
<div style="position:absolute;left:556.9px;top:121.8px;width:14.300000000000068px;height:4.400000000000006px;background:#77777b;border:0.5px solid #5a5a5e;box-sizing:border-box;"></div>
<div class="t" style="left:544.05px;top:122.5px;width:40px;text-align:center;font-size:3.0px;color:#3a3a3e;-webkit-text-stroke:0;">E</div>
<div style="position:absolute;left:572.75px;top:121.8px;width:14.299999999999955px;height:4.400000000000006px;background:#77777b;border:0.5px solid #5a5a5e;box-sizing:border-box;"></div>
<div class="t" style="left:559.90px;top:122.5px;width:40px;text-align:center;font-size:3.0px;color:#3a3a3e;-webkit-text-stroke:0;">F</div>
<div style="position:absolute;left:588.6px;top:121.8px;width:14.299999999999955px;height:4.400000000000006px;background:#77777b;border:0.5px solid #5a5a5e;box-sizing:border-box;"></div>
<div class="t" style="left:575.75px;top:122.5px;width:40px;text-align:center;font-size:3.0px;color:#3a3a3e;-webkit-text-stroke:0;">F#</div>
<div style="position:absolute;left:604.45px;top:121.8px;width:14.299999999999955px;height:4.400000000000006px;background:#77777b;border:0.5px solid #5a5a5e;box-sizing:border-box;"></div>
<div class="t" style="left:591.60px;top:122.5px;width:40px;text-align:center;font-size:3.0px;color:#3a3a3e;-webkit-text-stroke:0;">G</div>
<div style="position:absolute;left:620.3px;top:121.8px;width:14.300000000000068px;height:4.400000000000006px;background:#77777b;border:0.5px solid #5a5a5e;box-sizing:border-box;"></div>
<div class="t" style="left:607.45px;top:122.5px;width:40px;text-align:center;font-size:3.0px;color:#3a3a3e;-webkit-text-stroke:0;">G#</div>
<div style="position:absolute;left:636.15px;top:121.8px;width:14.300000000000068px;height:4.400000000000006px;background:#77777b;border:0.5px solid #5a5a5e;box-sizing:border-box;"></div>
<div class="t" style="left:623.30px;top:122.5px;width:40px;text-align:center;font-size:3.0px;color:#3a3a3e;-webkit-text-stroke:0;">A</div>
<div style="position:absolute;left:652.0px;top:121.8px;width:14.299999999999955px;height:4.400000000000006px;background:#77777b;border:0.5px solid #5a5a5e;box-sizing:border-box;"></div>
<div class="t" style="left:639.15px;top:122.5px;width:40px;text-align:center;font-size:3.0px;color:#3a3a3e;-webkit-text-stroke:0;">A#</div>
<div style="position:absolute;left:667.85px;top:121.8px;width:14.299999999999955px;height:4.400000000000006px;background:#77777b;border:0.5px solid #5a5a5e;box-sizing:border-box;"></div>
<div class="t" style="left:655.00px;top:122.5px;width:40px;text-align:center;font-size:3.0px;color:#3a3a3e;-webkit-text-stroke:0;">B</div>
<div style="position:absolute;left:493.5px;top:127.7px;width:36.799999999999955px;height:4.6000000000000085px;background:#8ec8fa;border:0.5px solid #6aa8e8;box-sizing:border-box;"></div>
<div class="t" style="left:491.90px;top:128.5px;width:40px;text-align:center;font-size:3.0px;color:#2a4a7a;-webkit-text-stroke:0;">Major</div>
<div style="position:absolute;left:531.55px;top:127.7px;width:36.80000000000007px;height:4.6000000000000085px;background:#77777b;border:0.5px solid #5a5a5e;box-sizing:border-box;"></div>
<div class="t" style="left:529.95px;top:128.5px;width:40px;text-align:center;font-size:3.0px;color:#3a3a3e;-webkit-text-stroke:0;">Minor</div>
<div style="position:absolute;left:569.6px;top:127.7px;width:36.799999999999955px;height:4.6000000000000085px;background:#77777b;border:0.5px solid #5a5a5e;box-sizing:border-box;"></div>
<div class="t" style="left:568.00px;top:128.5px;width:40px;text-align:center;font-size:3.0px;color:#3a3a3e;-webkit-text-stroke:0;">Ionian</div>
<div style="position:absolute;left:607.65px;top:127.7px;width:36.80000000000007px;height:4.6000000000000085px;background:#77777b;border:0.5px solid #5a5a5e;box-sizing:border-box;"></div>
<div class="t" style="left:606.05px;top:128.5px;width:40px;text-align:center;font-size:3.0px;color:#3a3a3e;-webkit-text-stroke:0;">Dorian</div>
<div style="position:absolute;left:645.7px;top:127.7px;width:36.799999999999955px;height:4.6000000000000085px;background:#77777b;border:0.5px solid #5a5a5e;box-sizing:border-box;"></div>
<div class="t" style="left:644.10px;top:128.5px;width:40px;text-align:center;font-size:3.0px;color:#3a3a3e;-webkit-text-stroke:0;">Phrygian</div>
<div style="position:absolute;left:493.5px;top:133.8px;width:30.5px;height:4.599999999999994px;background:#77777b;border:0.5px solid #5a5a5e;box-sizing:border-box;"></div>
<div class="t" style="left:488.75px;top:134.60000000000002px;width:40px;text-align:center;font-size:3.0px;color:#3a3a3e;-webkit-text-stroke:0;">Lydian</div>
<div style="position:absolute;left:525.2px;top:133.8px;width:30.5px;height:4.599999999999994px;background:#77777b;border:0.5px solid #5a5a5e;box-sizing:border-box;"></div>
<div class="t" style="left:520.45px;top:134.60000000000002px;width:40px;text-align:center;font-size:3.0px;color:#3a3a3e;-webkit-text-stroke:0;">Mixolydian</div>
<div style="position:absolute;left:556.9px;top:133.8px;width:30.5px;height:4.599999999999994px;background:#77777b;border:0.5px solid #5a5a5e;box-sizing:border-box;"></div>
<div class="t" style="left:552.15px;top:134.60000000000002px;width:40px;text-align:center;font-size:3.0px;color:#3a3a3e;-webkit-text-stroke:0;">Aeolian</div>
<div style="position:absolute;left:588.6px;top:133.8px;width:30.5px;height:4.599999999999994px;background:#77777b;border:0.5px solid #5a5a5e;box-sizing:border-box;"></div>
<div class="t" style="left:583.85px;top:134.60000000000002px;width:40px;text-align:center;font-size:3.0px;color:#3a3a3e;-webkit-text-stroke:0;">Locrian</div>
<div style="position:absolute;left:620.3px;top:133.8px;width:30.5px;height:4.599999999999994px;background:#77777b;border:0.5px solid #5a5a5e;box-sizing:border-box;"></div>
<div class="t" style="left:615.55px;top:134.60000000000002px;width:40px;text-align:center;font-size:3.0px;color:#3a3a3e;-webkit-text-stroke:0;">Melodic Minor</div>
<div style="position:absolute;left:652.0px;top:133.8px;width:30.5px;height:4.599999999999994px;background:#77777b;border:0.5px solid #5a5a5e;box-sizing:border-box;"></div>
<div class="t" style="left:647.25px;top:134.60000000000002px;width:40px;text-align:center;font-size:3.0px;color:#3a3a3e;-webkit-text-stroke:0;">Harmonic Minor</div>
<div style="position:absolute;left:491px;top:140px;width:129px;height:157px;background:#222429;"></div>
<svg width="800" height="450" style="top:0"><rect x="493.00" y="143.00" width="30" height="36.8" rx="1" fill="#16181e" stroke="#4a74a6" stroke-width="0.8"/><text x="508.00" y="148.60" font-size="3.6" fill="#e8e8e8" text-anchor="middle" font-family="Liberation Sans">E2 (#0)</text><text x="508.00" y="154.00" font-size="4.2" fill="#f4f4f4" text-anchor="middle" font-family="Liberation Sans">C dom 7</text><rect x="498.60" y="168.80" width="3.2" height="3.2" fill="#7ab8f8"/><rect x="503.00" y="168.80" width="3.2" height="3.2" rx="0.6" fill="none" stroke="#5a5a60" stroke-width="0.5"/><rect x="507.00" y="168.80" width="3.2" height="3.2" rx="0.6" fill="none" stroke="#5a5a60" stroke-width="0.5"/><rect x="511.00" y="168.80" width="3.2" height="3.2" rx="0.6" fill="none" stroke="#5a5a60" stroke-width="0.5"/><rect x="496.50" y="174.00" width="3.2" height="3.2" rx="0.6" fill="none" stroke="#5a5a60" stroke-width="0.5"/><rect x="500.30" y="174.00" width="3.2" height="3.2" rx="0.6" fill="none" stroke="#5a5a60" stroke-width="0.5"/><rect x="506.20" y="174.00" width="3.2" height="3.2" fill="#7ab8f8"/><rect x="511.50" y="174.00" width="3.2" height="3.2" rx="0.6" fill="none" stroke="#5a5a60" stroke-width="0.5"/><rect x="515.30" y="174.00" width="3.2" height="3.2" rx="0.6" fill="none" stroke="#5a5a60" stroke-width="0.5"/><rect x="524.80" y="143.00" width="30" height="36.8" rx="1" fill="#16181e" stroke="#4a74a6" stroke-width="0.8"/><text x="539.80" y="148.60" font-size="3.6" fill="#e8e8e8" text-anchor="middle" font-family="Liberation Sans">F2 (#1)</text><text x="539.80" y="154.00" font-size="4.2" fill="#f4f4f4" text-anchor="middle" font-family="Liberation Sans">F major 7</text><rect x="530.40" y="168.80" width="3.2" height="3.2" fill="#7ab8f8"/><rect x="534.80" y="168.80" width="3.2" height="3.2" rx="0.6" fill="none" stroke="#5a5a60" stroke-width="0.5"/><rect x="538.80" y="168.80" width="3.2" height="3.2" rx="0.6" fill="none" stroke="#5a5a60" stroke-width="0.5"/><rect x="542.80" y="168.80" width="3.2" height="3.2" rx="0.6" fill="none" stroke="#5a5a60" stroke-width="0.5"/><rect x="528.30" y="174.00" width="3.2" height="3.2" rx="0.6" fill="none" stroke="#5a5a60" stroke-width="0.5"/><rect x="532.10" y="174.00" width="3.2" height="3.2" rx="0.6" fill="none" stroke="#5a5a60" stroke-width="0.5"/><rect x="538.00" y="174.00" width="3.2" height="3.2" fill="#7ab8f8"/><rect x="543.30" y="174.00" width="3.2" height="3.2" rx="0.6" fill="none" stroke="#5a5a60" stroke-width="0.5"/><rect x="547.10" y="174.00" width="3.2" height="3.2" rx="0.6" fill="none" stroke="#5a5a60" stroke-width="0.5"/><rect x="556.60" y="143.00" width="30" height="36.8" rx="1" fill="#16181e" stroke="#4a74a6" stroke-width="0.8"/><text x="571.60" y="148.60" font-size="3.6" fill="#e8e8e8" text-anchor="middle" font-family="Liberation Sans">F#2 (#2)</text><text x="571.60" y="154.00" font-size="4.2" fill="#f4f4f4" text-anchor="middle" font-family="Liberation Sans">D minor 7</text><rect x="562.20" y="168.80" width="3.2" height="3.2" fill="#7ab8f8"/><rect x="566.60" y="168.80" width="3.2" height="3.2" rx="0.6" fill="none" stroke="#5a5a60" stroke-width="0.5"/><rect x="570.60" y="168.80" width="3.2" height="3.2" rx="0.6" fill="none" stroke="#5a5a60" stroke-width="0.5"/><rect x="574.60" y="168.80" width="3.2" height="3.2" rx="0.6" fill="none" stroke="#5a5a60" stroke-width="0.5"/><rect x="560.10" y="174.00" width="3.2" height="3.2" rx="0.6" fill="none" stroke="#5a5a60" stroke-width="0.5"/><rect x="563.90" y="174.00" width="3.2" height="3.2" rx="0.6" fill="none" stroke="#5a5a60" stroke-width="0.5"/><rect x="569.80" y="174.00" width="3.2" height="3.2" fill="#7ab8f8"/><rect x="575.10" y="174.00" width="3.2" height="3.2" rx="0.6" fill="none" stroke="#5a5a60" stroke-width="0.5"/><rect x="578.90" y="174.00" width="3.2" height="3.2" rx="0.6" fill="none" stroke="#5a5a60" stroke-width="0.5"/><rect x="588.40" y="143.00" width="30" height="36.8" rx="1" fill="#16181e" stroke="#4a74a6" stroke-width="0.8"/><text x="603.40" y="148.60" font-size="3.6" fill="#e8e8e8" text-anchor="middle" font-family="Liberation Sans">G2 (#3)</text><text x="603.40" y="154.00" font-size="4.2" fill="#f4f4f4" text-anchor="middle" font-family="Liberation Sans" textLength="27" lengthAdjust="spacingAndGlyphs">E half dim 7</text><rect x="594.00" y="168.80" width="3.2" height="3.2" fill="#7ab8f8"/><rect x="598.40" y="168.80" width="3.2" height="3.2" rx="0.6" fill="none" stroke="#5a5a60" stroke-width="0.5"/><rect x="602.40" y="168.80" width="3.2" height="3.2" rx="0.6" fill="none" stroke="#5a5a60" stroke-width="0.5"/><rect x="606.40" y="168.80" width="3.2" height="3.2" rx="0.6" fill="none" stroke="#5a5a60" stroke-width="0.5"/><rect x="591.90" y="174.00" width="3.2" height="3.2" rx="0.6" fill="none" stroke="#5a5a60" stroke-width="0.5"/><rect x="595.70" y="174.00" width="3.2" height="3.2" rx="0.6" fill="none" stroke="#5a5a60" stroke-width="0.5"/><rect x="601.60" y="174.00" width="3.2" height="3.2" fill="#7ab8f8"/><rect x="606.90" y="174.00" width="3.2" height="3.2" rx="0.6" fill="none" stroke="#5a5a60" stroke-width="0.5"/><rect x="610.70" y="174.00" width="3.2" height="3.2" rx="0.6" fill="none" stroke="#5a5a60" stroke-width="0.5"/><rect x="493.00" y="181.60" width="30" height="36.8" rx="1" fill="#16181e" stroke="#4a74a6" stroke-width="0.8"/><text x="508.00" y="187.20" font-size="3.6" fill="#e8e8e8" text-anchor="middle" font-family="Liberation Sans">G#2 (#4)</text><text x="508.00" y="192.60" font-size="4.2" fill="#f4f4f4" text-anchor="middle" font-family="Liberation Sans">C major</text><rect x="498.60" y="207.40" width="3.2" height="3.2" fill="#7ab8f8"/><rect x="503.00" y="207.40" width="3.2" height="3.2" rx="0.6" fill="none" stroke="#5a5a60" stroke-width="0.5"/><rect x="507.00" y="207.40" width="3.2" height="3.2" rx="0.6" fill="none" stroke="#5a5a60" stroke-width="0.5"/><rect x="511.00" y="207.40" width="3.2" height="3.2" rx="0.6" fill="none" stroke="#5a5a60" stroke-width="0.5"/><rect x="496.50" y="212.60" width="3.2" height="3.2" rx="0.6" fill="none" stroke="#5a5a60" stroke-width="0.5"/><rect x="500.30" y="212.60" width="3.2" height="3.2" rx="0.6" fill="none" stroke="#5a5a60" stroke-width="0.5"/><rect x="506.20" y="212.60" width="3.2" height="3.2" fill="#7ab8f8"/><rect x="511.50" y="212.60" width="3.2" height="3.2" rx="0.6" fill="none" stroke="#5a5a60" stroke-width="0.5"/><rect x="515.30" y="212.60" width="3.2" height="3.2" rx="0.6" fill="none" stroke="#5a5a60" stroke-width="0.5"/><rect x="524.80" y="181.60" width="30" height="36.8" rx="1" fill="#16181e" stroke="#4a74a6" stroke-width="0.8"/><text x="539.80" y="187.20" font-size="3.6" fill="#e8e8e8" text-anchor="middle" font-family="Liberation Sans">A2 (#5)</text><text x="539.80" y="192.60" font-size="4.2" fill="#f4f4f4" text-anchor="middle" font-family="Liberation Sans">D minor</text><rect x="530.40" y="207.40" width="3.2" height="3.2" fill="#7ab8f8"/><rect x="534.80" y="207.40" width="3.2" height="3.2" rx="0.6" fill="none" stroke="#5a5a60" stroke-width="0.5"/><rect x="538.80" y="207.40" width="3.2" height="3.2" rx="0.6" fill="none" stroke="#5a5a60" stroke-width="0.5"/><rect x="542.80" y="207.40" width="3.2" height="3.2" rx="0.6" fill="none" stroke="#5a5a60" stroke-width="0.5"/><rect x="528.30" y="212.60" width="3.2" height="3.2" rx="0.6" fill="none" stroke="#5a5a60" stroke-width="0.5"/><rect x="532.10" y="212.60" width="3.2" height="3.2" rx="0.6" fill="none" stroke="#5a5a60" stroke-width="0.5"/><rect x="538.00" y="212.60" width="3.2" height="3.2" fill="#7ab8f8"/><rect x="543.30" y="212.60" width="3.2" height="3.2" rx="0.6" fill="none" stroke="#5a5a60" stroke-width="0.5"/><rect x="547.10" y="212.60" width="3.2" height="3.2" rx="0.6" fill="none" stroke="#5a5a60" stroke-width="0.5"/><rect x="556.60" y="181.60" width="30" height="36.8" rx="1" fill="#16181e" stroke="#4a74a6" stroke-width="0.8"/><text x="571.60" y="187.20" font-size="3.6" fill="#e8e8e8" text-anchor="middle" font-family="Liberation Sans">A#2 (#6)</text><text x="571.60" y="192.60" font-size="4.2" fill="#f4f4f4" text-anchor="middle" font-family="Liberation Sans">E dim</text><rect x="562.20" y="207.40" width="3.2" height="3.2" fill="#7ab8f8"/><rect x="566.60" y="207.40" width="3.2" height="3.2" rx="0.6" fill="none" stroke="#5a5a60" stroke-width="0.5"/><rect x="570.60" y="207.40" width="3.2" height="3.2" rx="0.6" fill="none" stroke="#5a5a60" stroke-width="0.5"/><rect x="574.60" y="207.40" width="3.2" height="3.2" rx="0.6" fill="none" stroke="#5a5a60" stroke-width="0.5"/><rect x="560.10" y="212.60" width="3.2" height="3.2" rx="0.6" fill="none" stroke="#5a5a60" stroke-width="0.5"/><rect x="563.90" y="212.60" width="3.2" height="3.2" rx="0.6" fill="none" stroke="#5a5a60" stroke-width="0.5"/><rect x="569.80" y="212.60" width="3.2" height="3.2" fill="#7ab8f8"/><rect x="575.10" y="212.60" width="3.2" height="3.2" rx="0.6" fill="none" stroke="#5a5a60" stroke-width="0.5"/><rect x="578.90" y="212.60" width="3.2" height="3.2" rx="0.6" fill="none" stroke="#5a5a60" stroke-width="0.5"/><rect x="588.40" y="181.60" width="30" height="36.8" rx="1" fill="#16181e" stroke="#4a74a6" stroke-width="0.8"/><text x="603.40" y="187.20" font-size="3.6" fill="#e8e8e8" text-anchor="middle" font-family="Liberation Sans">B2 (#7)</text><text x="603.40" y="192.60" font-size="4.2" fill="#f4f4f4" text-anchor="middle" font-family="Liberation Sans">F major 6</text><rect x="594.00" y="207.40" width="3.2" height="3.2" fill="#7ab8f8"/><rect x="598.40" y="207.40" width="3.2" height="3.2" rx="0.6" fill="none" stroke="#5a5a60" stroke-width="0.5"/><rect x="602.40" y="207.40" width="3.2" height="3.2" rx="0.6" fill="none" stroke="#5a5a60" stroke-width="0.5"/><rect x="606.40" y="207.40" width="3.2" height="3.2" rx="0.6" fill="none" stroke="#5a5a60" stroke-width="0.5"/><rect x="591.90" y="212.60" width="3.2" height="3.2" rx="0.6" fill="none" stroke="#5a5a60" stroke-width="0.5"/><rect x="595.70" y="212.60" width="3.2" height="3.2" rx="0.6" fill="none" stroke="#5a5a60" stroke-width="0.5"/><rect x="601.60" y="212.60" width="3.2" height="3.2" fill="#7ab8f8"/><rect x="606.90" y="212.60" width="3.2" height="3.2" rx="0.6" fill="none" stroke="#5a5a60" stroke-width="0.5"/><rect x="610.70" y="212.60" width="3.2" height="3.2" rx="0.6" fill="none" stroke="#5a5a60" stroke-width="0.5"/><rect x="493.00" y="220.20" width="30" height="36.8" rx="1" fill="#5f6f66" stroke="#8fa096" stroke-width="0.8"/><text x="508.00" y="225.80" font-size="3.6" fill="#e8e8e8" text-anchor="middle" font-family="Liberation Sans">C3 (#8)</text><text x="508.00" y="231.20" font-size="4.2" fill="#f4f4f4" text-anchor="middle" font-family="Liberation Sans">F major 9</text><rect x="498.60" y="246.00" width="3.2" height="3.2" fill="#7ab8f8"/><rect x="503.00" y="246.00" width="3.2" height="3.2" rx="0.6" fill="none" stroke="#5a5a60" stroke-width="0.5"/><rect x="507.00" y="246.00" width="3.2" height="3.2" rx="0.6" fill="none" stroke="#5a5a60" stroke-width="0.5"/><rect x="511.00" y="246.00" width="3.2" height="3.2" rx="0.6" fill="none" stroke="#5a5a60" stroke-width="0.5"/><rect x="496.50" y="251.20" width="3.2" height="3.2" rx="0.6" fill="none" stroke="#5a5a60" stroke-width="0.5"/><rect x="500.30" y="251.20" width="3.2" height="3.2" rx="0.6" fill="none" stroke="#5a5a60" stroke-width="0.5"/><rect x="506.20" y="251.20" width="3.2" height="3.2" fill="#7ab8f8"/><rect x="511.50" y="251.20" width="3.2" height="3.2" rx="0.6" fill="none" stroke="#5a5a60" stroke-width="0.5"/><rect x="515.30" y="251.20" width="3.2" height="3.2" rx="0.6" fill="none" stroke="#5a5a60" stroke-width="0.5"/><rect x="524.80" y="220.20" width="30" height="36.8" rx="1" fill="#16181e" stroke="#4a74a6" stroke-width="0.8"/><text x="539.80" y="225.80" font-size="3.6" fill="#e8e8e8" text-anchor="middle" font-family="Liberation Sans">C#3 (#9)</text><text x="539.80" y="231.20" font-size="4.2" fill="#f4f4f4" text-anchor="middle" font-family="Liberation Sans">C dom 9</text><rect x="530.40" y="246.00" width="3.2" height="3.2" fill="#7ab8f8"/><rect x="534.80" y="246.00" width="3.2" height="3.2" rx="0.6" fill="none" stroke="#5a5a60" stroke-width="0.5"/><rect x="538.80" y="246.00" width="3.2" height="3.2" rx="0.6" fill="none" stroke="#5a5a60" stroke-width="0.5"/><rect x="542.80" y="246.00" width="3.2" height="3.2" rx="0.6" fill="none" stroke="#5a5a60" stroke-width="0.5"/><rect x="528.30" y="251.20" width="3.2" height="3.2" rx="0.6" fill="none" stroke="#5a5a60" stroke-width="0.5"/><rect x="532.10" y="251.20" width="3.2" height="3.2" rx="0.6" fill="none" stroke="#5a5a60" stroke-width="0.5"/><rect x="538.00" y="251.20" width="3.2" height="3.2" fill="#7ab8f8"/><rect x="543.30" y="251.20" width="3.2" height="3.2" rx="0.6" fill="none" stroke="#5a5a60" stroke-width="0.5"/><rect x="547.10" y="251.20" width="3.2" height="3.2" rx="0.6" fill="none" stroke="#5a5a60" stroke-width="0.5"/><rect x="556.60" y="220.20" width="30" height="36.8" rx="1" fill="#16181e" stroke="#4a74a6" stroke-width="0.8"/><text x="571.60" y="225.80" font-size="3.6" fill="#e8e8e8" text-anchor="middle" font-family="Liberation Sans">D3 (#10)</text><text x="571.60" y="231.20" font-size="4.2" fill="#f4f4f4" text-anchor="middle" font-family="Liberation Sans" textLength="27" lengthAdjust="spacingAndGlyphs">E half dim min 9</text><rect x="562.20" y="246.00" width="3.2" height="3.2" fill="#7ab8f8"/><rect x="566.60" y="246.00" width="3.2" height="3.2" rx="0.6" fill="none" stroke="#5a5a60" stroke-width="0.5"/><rect x="570.60" y="246.00" width="3.2" height="3.2" rx="0.6" fill="none" stroke="#5a5a60" stroke-width="0.5"/><rect x="574.60" y="246.00" width="3.2" height="3.2" rx="0.6" fill="none" stroke="#5a5a60" stroke-width="0.5"/><rect x="560.10" y="251.20" width="3.2" height="3.2" rx="0.6" fill="none" stroke="#5a5a60" stroke-width="0.5"/><rect x="563.90" y="251.20" width="3.2" height="3.2" rx="0.6" fill="none" stroke="#5a5a60" stroke-width="0.5"/><rect x="569.80" y="251.20" width="3.2" height="3.2" fill="#7ab8f8"/><rect x="575.10" y="251.20" width="3.2" height="3.2" rx="0.6" fill="none" stroke="#5a5a60" stroke-width="0.5"/><rect x="578.90" y="251.20" width="3.2" height="3.2" rx="0.6" fill="none" stroke="#5a5a60" stroke-width="0.5"/><rect x="588.40" y="220.20" width="30" height="36.8" rx="1" fill="#16181e" stroke="#4a74a6" stroke-width="0.8"/><text x="603.40" y="225.80" font-size="3.6" fill="#e8e8e8" text-anchor="middle" font-family="Liberation Sans">D#3 (#11)</text><text x="603.40" y="231.20" font-size="4.2" fill="#f4f4f4" text-anchor="middle" font-family="Liberation Sans">F dim min 9</text><rect x="594.00" y="246.00" width="3.2" height="3.2" fill="#7ab8f8"/><rect x="598.40" y="246.00" width="3.2" height="3.2" rx="0.6" fill="none" stroke="#5a5a60" stroke-width="0.5"/><rect x="602.40" y="246.00" width="3.2" height="3.2" rx="0.6" fill="none" stroke="#5a5a60" stroke-width="0.5"/><rect x="606.40" y="246.00" width="3.2" height="3.2" rx="0.6" fill="none" stroke="#5a5a60" stroke-width="0.5"/><rect x="591.90" y="251.20" width="3.2" height="3.2" rx="0.6" fill="none" stroke="#5a5a60" stroke-width="0.5"/><rect x="595.70" y="251.20" width="3.2" height="3.2" rx="0.6" fill="none" stroke="#5a5a60" stroke-width="0.5"/><rect x="601.60" y="251.20" width="3.2" height="3.2" fill="#7ab8f8"/><rect x="606.90" y="251.20" width="3.2" height="3.2" rx="0.6" fill="none" stroke="#5a5a60" stroke-width="0.5"/><rect x="610.70" y="251.20" width="3.2" height="3.2" rx="0.6" fill="none" stroke="#5a5a60" stroke-width="0.5"/><rect x="493.00" y="258.80" width="30" height="36.8" rx="1" fill="#16181e" stroke="#4a74a6" stroke-width="0.8"/><text x="508.00" y="264.40" font-size="3.6" fill="#e8e8e8" text-anchor="middle" font-family="Liberation Sans">E3 (#12)</text><text x="508.00" y="269.80" font-size="4.2" fill="#f4f4f4" text-anchor="middle" font-family="Liberation Sans">G minor 6</text><rect x="498.60" y="284.60" width="3.2" height="3.2" fill="#7ab8f8"/><rect x="503.00" y="284.60" width="3.2" height="3.2" rx="0.6" fill="none" stroke="#5a5a60" stroke-width="0.5"/><rect x="507.00" y="284.60" width="3.2" height="3.2" rx="0.6" fill="none" stroke="#5a5a60" stroke-width="0.5"/><rect x="511.00" y="284.60" width="3.2" height="3.2" rx="0.6" fill="none" stroke="#5a5a60" stroke-width="0.5"/><rect x="496.50" y="289.80" width="3.2" height="3.2" rx="0.6" fill="none" stroke="#5a5a60" stroke-width="0.5"/><rect x="500.30" y="289.80" width="3.2" height="3.2" rx="0.6" fill="none" stroke="#5a5a60" stroke-width="0.5"/><rect x="506.20" y="289.80" width="3.2" height="3.2" fill="#7ab8f8"/><rect x="511.50" y="289.80" width="3.2" height="3.2" rx="0.6" fill="none" stroke="#5a5a60" stroke-width="0.5"/><rect x="515.30" y="289.80" width="3.2" height="3.2" rx="0.6" fill="none" stroke="#5a5a60" stroke-width="0.5"/><rect x="524.80" y="258.80" width="30" height="36.8" rx="1" fill="#16181e" stroke="#4a74a6" stroke-width="0.8"/><text x="539.80" y="264.40" font-size="3.6" fill="#e8e8e8" text-anchor="middle" font-family="Liberation Sans">F3 (#13)</text><text x="539.80" y="269.80" font-size="4.2" fill="#f4f4f4" text-anchor="middle" font-family="Liberation Sans">A# major 7</text><rect x="530.40" y="284.60" width="3.2" height="3.2" fill="#7ab8f8"/><rect x="534.80" y="284.60" width="3.2" height="3.2" rx="0.6" fill="none" stroke="#5a5a60" stroke-width="0.5"/><rect x="538.80" y="284.60" width="3.2" height="3.2" rx="0.6" fill="none" stroke="#5a5a60" stroke-width="0.5"/><rect x="542.80" y="284.60" width="3.2" height="3.2" rx="0.6" fill="none" stroke="#5a5a60" stroke-width="0.5"/><rect x="528.30" y="289.80" width="3.2" height="3.2" rx="0.6" fill="none" stroke="#5a5a60" stroke-width="0.5"/><rect x="532.10" y="289.80" width="3.2" height="3.2" rx="0.6" fill="none" stroke="#5a5a60" stroke-width="0.5"/><rect x="538.00" y="289.80" width="3.2" height="3.2" fill="#7ab8f8"/><rect x="543.30" y="289.80" width="3.2" height="3.2" rx="0.6" fill="none" stroke="#5a5a60" stroke-width="0.5"/><rect x="547.10" y="289.80" width="3.2" height="3.2" rx="0.6" fill="none" stroke="#5a5a60" stroke-width="0.5"/><rect x="556.60" y="258.80" width="30" height="36.8" rx="1" fill="#16181e" stroke="#4a74a6" stroke-width="0.8"/><text x="571.60" y="264.40" font-size="3.6" fill="#e8e8e8" text-anchor="middle" font-family="Liberation Sans">F#3 (#14)</text><text x="571.60" y="269.80" font-size="4.2" fill="#f4f4f4" text-anchor="middle" font-family="Liberation Sans" textLength="27" lengthAdjust="spacingAndGlyphs">E half dim 7</text><rect x="562.20" y="284.60" width="3.2" height="3.2" fill="#7ab8f8"/><rect x="566.60" y="284.60" width="3.2" height="3.2" rx="0.6" fill="none" stroke="#5a5a60" stroke-width="0.5"/><rect x="570.60" y="284.60" width="3.2" height="3.2" rx="0.6" fill="none" stroke="#5a5a60" stroke-width="0.5"/><rect x="574.60" y="284.60" width="3.2" height="3.2" rx="0.6" fill="none" stroke="#5a5a60" stroke-width="0.5"/><rect x="560.10" y="289.80" width="3.2" height="3.2" rx="0.6" fill="none" stroke="#5a5a60" stroke-width="0.5"/><rect x="563.90" y="289.80" width="3.2" height="3.2" rx="0.6" fill="none" stroke="#5a5a60" stroke-width="0.5"/><rect x="569.80" y="289.80" width="3.2" height="3.2" fill="#7ab8f8"/><rect x="575.10" y="289.80" width="3.2" height="3.2" rx="0.6" fill="none" stroke="#5a5a60" stroke-width="0.5"/><rect x="578.90" y="289.80" width="3.2" height="3.2" rx="0.6" fill="none" stroke="#5a5a60" stroke-width="0.5"/><rect x="588.40" y="258.80" width="30" height="36.8" rx="1" fill="#16181e" stroke="#4a74a6" stroke-width="0.8"/><text x="603.40" y="264.40" font-size="3.6" fill="#e8e8e8" text-anchor="middle" font-family="Liberation Sans">G3 (#15)</text><text x="603.40" y="269.80" font-size="4.2" fill="#f4f4f4" text-anchor="middle" font-family="Liberation Sans">F sus 2</text><rect x="594.00" y="284.60" width="3.2" height="3.2" fill="#7ab8f8"/><rect x="598.40" y="284.60" width="3.2" height="3.2" rx="0.6" fill="none" stroke="#5a5a60" stroke-width="0.5"/><rect x="602.40" y="284.60" width="3.2" height="3.2" rx="0.6" fill="none" stroke="#5a5a60" stroke-width="0.5"/><rect x="606.40" y="284.60" width="3.2" height="3.2" rx="0.6" fill="none" stroke="#5a5a60" stroke-width="0.5"/><rect x="591.90" y="289.80" width="3.2" height="3.2" rx="0.6" fill="none" stroke="#5a5a60" stroke-width="0.5"/><rect x="595.70" y="289.80" width="3.2" height="3.2" rx="0.6" fill="none" stroke="#5a5a60" stroke-width="0.5"/><rect x="601.60" y="289.80" width="3.2" height="3.2" fill="#7ab8f8"/><rect x="606.90" y="289.80" width="3.2" height="3.2" rx="0.6" fill="none" stroke="#5a5a60" stroke-width="0.5"/><rect x="610.70" y="289.80" width="3.2" height="3.2" rx="0.6" fill="none" stroke="#5a5a60" stroke-width="0.5"/></svg>
<div style="position:absolute;left:491px;top:297px;width:195px;height:10.5px;background:#2a2c32;"></div>
<svg width="40" height="10" style="left:490px;top:297px"><rect x="3.5" y="2.6" width="4.6" height="4.6" rx="0.6" fill="#7ab8f8"/><circle cx="13" cy="4.9" r="2.3" fill="none" stroke="#8a8a8a" stroke-width="0.5"/><circle cx="19" cy="4.9" r="2.3" fill="none" stroke="#8a8a8a" stroke-width="0.5"/><circle cx="25" cy="4.9" r="2.3" fill="none" stroke="#8a8a8a" stroke-width="0.5"/><path d="M12 4.9 h2 M19 3.8 v2.2 M24 4 l2 1.8" stroke="#999" stroke-width="0.5"/><circle cx="35" cy="4.9" r="2.1" fill="none" stroke="#aaa" stroke-width="0.9"/></svg>
<div style="position:absolute;left:652px;top:300.8px;width:31px;height:5.0px;background:#8ec8fa;border:0.5px solid #6aa8e8;box-sizing:border-box;"></div>
<div class="t" style="left:647.50px;top:301.8px;width:40px;text-align:center;font-size:3.0px;color:#2a4a7a;-webkit-text-stroke:0;">Follow host key</div>
<div style="position:absolute;left:620px;top:139px;width:66px;height:159px;background:#2c2e34;"></div>
<div style="position:absolute;left:620px;top:139px;width:1px;height:159px;background:#1d1f24;"></div>
<div class="t" style="left:638.00px;top:144.5px;width:30px;text-align:center;font-size:3.6px;color:#a8a8ac;">Arp</div>
<div style="position:absolute;left:625px;top:156px;width:15.5px;height:5px;background:#8ec8fa;border:0.5px solid #6aa8e8;box-sizing:border-box;"></div>
<div class="t" style="left:612.75px;top:157.0px;width:40px;text-align:center;font-size:3.0px;color:#2a4a7a;-webkit-text-stroke:0;">On</div>
<div style="position:absolute;left:645px;top:156px;width:15.5px;height:5px;background:#1d1f25;border:0.5px solid #25272d;box-sizing:border-box;"></div>
<div class="t" style="left:632.75px;top:157.0px;width:40px;text-align:center;font-size:3.0px;color:#6ea8f0;-webkit-text-stroke:0;">Up</div>
<div style="position:absolute;left:665px;top:156px;width:15.5px;height:5px;background:#1d1f25;border:0.5px solid #25272d;box-sizing:border-box;"></div>
<div class="t" style="left:652.75px;top:157.0px;width:40px;text-align:center;font-size:3.0px;color:#6ea8f0;-webkit-text-stroke:0;">1/4</div>
<div class="t" style="left:617.50px;top:167.2px;width:30px;text-align:center;font-size:4.2px;color:#f2f2f2;">Enable</div>
<div class="t" style="left:637.50px;top:167.2px;width:30px;text-align:center;font-size:4.2px;color:#f2f2f2;">Direction</div>
<div class="t" style="left:657.50px;top:167.2px;width:30px;text-align:center;font-size:4.2px;color:#f2f2f2;">Clock</div>
<div style="position:absolute;left:645px;top:181px;width:15.5px;height:5px;background:#8ec8fa;border:0.5px solid #6aa8e8;box-sizing:border-box;"></div>
<div class="t" style="left:632.75px;top:182.0px;width:40px;text-align:center;font-size:3.0px;color:#2a4a7a;-webkit-text-stroke:0;">On</div>
<div style="position:absolute;left:665px;top:181px;width:16px;height:5px;background:#1d1f25;"></div>
<div class="t" style="left:617.50px;top:194.3px;width:30px;text-align:center;font-size:4.2px;color:#f2f2f2;">Octaves</div>
<div class="t" style="left:637.50px;top:194.3px;width:30px;text-align:center;font-size:4.2px;color:#f2f2f2;">Pattern</div>
<div class="t" style="left:657.50px;top:194.3px;width:30px;text-align:center;font-size:4.2px;color:#f2f2f2;">Pattern</div>
<div style="position:absolute;left:621px;top:201.5px;width:65px;height:0.6999999999999886px;background:#1d1f24;"></div>
<div class="t" style="left:638.00px;top:204.6px;width:30px;text-align:center;font-size:3.4px;color:#a8a8ac;">Repeat</div>
<div style="position:absolute;left:625px;top:214.3px;width:16px;height:5.0px;background:#8ec8fa;border:0.5px solid #6aa8e8;box-sizing:border-box;"></div>
<div class="t" style="left:613.00px;top:215.3px;width:40px;text-align:center;font-size:3.0px;color:#2a4a7a;-webkit-text-stroke:0;">On</div>
<div style="position:absolute;left:645px;top:214.3px;width:16px;height:5.0px;background:#1d1f25;border:0.5px solid #25272d;box-sizing:border-box;"></div>
<div class="t" style="left:633.00px;top:215.3px;width:40px;text-align:center;font-size:3.0px;color:#6ea8f0;-webkit-text-stroke:0;">1/4</div>
<div style="position:absolute;left:665px;top:214.3px;width:16px;height:5.0px;background:#1d1f25;border:0.5px solid #25272d;box-sizing:border-box;"></div>
<div class="t" style="left:653.00px;top:215.3px;width:40px;text-align:center;font-size:3.0px;color:#6ea8f0;-webkit-text-stroke:0;">1 2 3</div>
<div class="t" style="left:617.50px;top:227.4px;width:30px;text-align:center;font-size:4.2px;color:#f2f2f2;">Enable</div>
<div class="t" style="left:637.50px;top:227.4px;width:30px;text-align:center;font-size:4.2px;color:#f2f2f2;">Clock</div>
<div class="t" style="left:657.50px;top:227.4px;width:30px;text-align:center;font-size:4.2px;color:#f2f2f2;">Pattern</div>
<div style="position:absolute;left:621px;top:236px;width:65px;height:0.6999999999999886px;background:#1d1f24;"></div>
<div class="t" style="left:638.00px;top:240.5px;width:30px;text-align:center;font-size:3.4px;color:#a8a8ac;">Random</div>
<div style="position:absolute;left:625px;top:249.5px;width:16px;height:5.0px;background:#1d1f25;border:0.5px solid #25272d;box-sizing:border-box;"></div>
<div class="t" style="left:613.00px;top:250.5px;width:40px;text-align:center;font-size:3.0px;color:#6ea8f0;-webkit-text-stroke:0;">All</div>
<div class="t" style="left:617.50px;top:263.2px;width:30px;text-align:center;font-size:4.2px;color:#f2f2f2;">Dest</div>
<div class="t" style="left:637.50px;top:263.2px;width:30px;text-align:center;font-size:4.2px;color:#f2f2f2;">Length</div>
<div class="t" style="left:657.50px;top:263.2px;width:30px;text-align:center;font-size:4.2px;color:#f2f2f2;">Swing</div>
<div class="t" style="left:617.50px;top:291.2px;width:30px;text-align:center;font-size:4.2px;color:#f2f2f2;">Rand Pos</div>
<div class="t" style="left:637.50px;top:291.2px;width:30px;text-align:center;font-size:4.2px;color:#f2f2f2;">Rand Len</div>
<div class="t" style="left:657.50px;top:291.2px;width:30px;text-align:center;font-size:4.2px;color:#f2f2f2;">Rand Vel</div>
<svg width="800" height="450" style="top:0"><circle cx="633" cy="183.5" r="6.1" fill="#1c1e22"/><path d="M630.15 188.44 A5.7 5.7 0 0 1 627.64 185.45" stroke="#4a94e8" stroke-width="1.0" fill="none"/><circle cx="633" cy="183.5" r="4.8" fill="#6a6a6e"/><circle cx="633" cy="183.5" r="4.0" fill="#77777b"/><path d="M632.31 183.10 L629.88 181.70" stroke="#f0f0f0" stroke-width="1.1" stroke-linecap="round"/><circle cx="652" cy="252" r="6.1" fill="#1c1e22"/><path d="M647.97 256.03 A5.7 5.7 0 0 1 647.06 249.15" stroke="#4a94e8" stroke-width="1.0" fill="none"/><circle cx="652" cy="252" r="4.8" fill="#6a6a6e"/><circle cx="652" cy="252" r="4.0" fill="#77777b"/><path d="M651.31 251.60 L648.88 250.20" stroke="#f0f0f0" stroke-width="1.1" stroke-linecap="round"/><circle cx="672.5" cy="252" r="6.1" fill="#1c1e22"/><path d="M667.56 254.85 A5.7 5.7 0 0 1 667.56 249.15" stroke="#4a94e8" stroke-width="1.0" fill="none"/><circle cx="672.5" cy="252" r="4.8" fill="#6a6a6e"/><circle cx="672.5" cy="252" r="4.0" fill="#77777b"/><path d="M671.81 251.60 L669.38 250.20" stroke="#f0f0f0" stroke-width="1.1" stroke-linecap="round"/><circle cx="633" cy="281" r="6.1" fill="#1c1e22"/><path d="M628.63 284.66 A5.7 5.7 0 0 1 627.64 282.95" stroke="#4a94e8" stroke-width="1.0" fill="none"/><circle cx="633" cy="281" r="4.8" fill="#6a6a6e"/><circle cx="633" cy="281" r="4.0" fill="#77777b"/><path d="M632.25 281.27 L629.62 282.23" stroke="#f0f0f0" stroke-width="1.1" stroke-linecap="round"/><circle cx="652" cy="281" r="6.1" fill="#1c1e22"/><path d="M647.63 284.66 A5.7 5.7 0 0 1 646.64 282.95" stroke="#4a94e8" stroke-width="1.0" fill="none"/><circle cx="652" cy="281" r="4.8" fill="#6a6a6e"/><circle cx="652" cy="281" r="4.0" fill="#77777b"/><path d="M651.25 281.27 L648.62 282.23" stroke="#f0f0f0" stroke-width="1.1" stroke-linecap="round"/><circle cx="672.5" cy="281" r="6.1" fill="#1c1e22"/><path d="M668.47 285.03 A5.7 5.7 0 0 1 669.65 276.06" stroke="#4a94e8" stroke-width="1.0" fill="none"/><circle cx="672.5" cy="281" r="4.8" fill="#6a6a6e"/><circle cx="672.5" cy="281" r="4.0" fill="#77777b"/><path d="M671.99 280.39 L670.19 278.24" stroke="#f0f0f0" stroke-width="1.1" stroke-linecap="round"/></svg>
<svg width="18" height="8" style="left:664px;top:180px"><path d="M1.5 5 l1.4 -2 l1.4 2 l1.4 -2 l1.4 2 l1.4 -2 l1.4 2 l1.4 -2 l1.4 2 l1.4 -2 l1.4 2" stroke="#5a9ae8" stroke-width="0.6" fill="none"/></svg>
<svg width="800" height="450" style="top:0"><rect x="392" y="308.3" width="294" height="22.69999999999999" fill="#f4f4f4"/><rect x="392.30" y="308.3" width="0.6" height="22.69999999999999" fill="#c8c8c8"/><text x="396.80" y="330" font-size="2.6" fill="#888" text-anchor="middle" font-family="Liberation Sans">C1</text><rect x="401.69" y="308.3" width="0.6" height="22.69999999999999" fill="#c8c8c8"/><rect x="411.07" y="308.3" width="0.6" height="22.69999999999999" fill="#c8c8c8"/><rect x="420.46" y="308.3" width="0.6" height="22.69999999999999" fill="#c8c8c8"/><rect x="429.84" y="308.3" width="0.6" height="22.69999999999999" fill="#c8c8c8"/><rect x="439.23" y="308.3" width="0.6" height="22.69999999999999" fill="#c8c8c8"/><rect x="448.61" y="308.3" width="0.6" height="22.69999999999999" fill="#c8c8c8"/><rect x="458.00" y="308.3" width="0.6" height="22.69999999999999" fill="#c8c8c8"/><text x="462.50" y="330" font-size="2.6" fill="#888" text-anchor="middle" font-family="Liberation Sans">C2</text><rect x="467.39" y="308.3" width="0.6" height="22.69999999999999" fill="#c8c8c8"/><rect x="476.77" y="308.3" width="0.6" height="22.69999999999999" fill="#c8c8c8"/><rect x="486.16" y="308.3" width="0.6" height="22.69999999999999" fill="#c8c8c8"/><rect x="495.54" y="308.3" width="0.6" height="22.69999999999999" fill="#c8c8c8"/><rect x="504.93" y="308.3" width="0.6" height="22.69999999999999" fill="#c8c8c8"/><rect x="514.31" y="308.3" width="0.6" height="22.69999999999999" fill="#c8c8c8"/><rect x="523.70" y="308.3" width="0.6" height="22.69999999999999" fill="#c8c8c8"/><text x="528.20" y="330" font-size="2.6" fill="#888" text-anchor="middle" font-family="Liberation Sans">C3</text><rect x="533.09" y="308.3" width="0.6" height="22.69999999999999" fill="#c8c8c8"/><rect x="542.47" y="308.3" width="0.6" height="22.69999999999999" fill="#c8c8c8"/><rect x="551.86" y="308.3" width="9.39" height="22.69999999999999" fill="#b4d6f6"/><rect x="551.86" y="308.3" width="0.6" height="22.69999999999999" fill="#c8c8c8"/><rect x="561.24" y="308.3" width="0.6" height="22.69999999999999" fill="#c8c8c8"/><rect x="570.63" y="308.3" width="9.39" height="22.69999999999999" fill="#b4d6f6"/><rect x="570.63" y="308.3" width="0.6" height="22.69999999999999" fill="#c8c8c8"/><rect x="580.01" y="308.3" width="0.6" height="22.69999999999999" fill="#c8c8c8"/><rect x="589.40" y="308.3" width="9.39" height="22.69999999999999" fill="#b4d6f6"/><rect x="589.40" y="308.3" width="0.6" height="22.69999999999999" fill="#c8c8c8"/><text x="593.90" y="330" font-size="2.6" fill="#888" text-anchor="middle" font-family="Liberation Sans">C4</text><rect x="598.79" y="308.3" width="0.6" height="22.69999999999999" fill="#c8c8c8"/><rect x="608.17" y="308.3" width="9.39" height="22.69999999999999" fill="#b4d6f6"/><rect x="608.17" y="308.3" width="0.6" height="22.69999999999999" fill="#c8c8c8"/><rect x="617.56" y="308.3" width="0.6" height="22.69999999999999" fill="#c8c8c8"/><rect x="626.94" y="308.3" width="9.39" height="22.69999999999999" fill="#b4d6f6"/><rect x="626.94" y="308.3" width="0.6" height="22.69999999999999" fill="#c8c8c8"/><rect x="636.33" y="308.3" width="0.6" height="22.69999999999999" fill="#c8c8c8"/><rect x="645.71" y="308.3" width="0.6" height="22.69999999999999" fill="#c8c8c8"/><rect x="655.10" y="308.3" width="0.6" height="22.69999999999999" fill="#c8c8c8"/><text x="659.60" y="330" font-size="2.6" fill="#888" text-anchor="middle" font-family="Liberation Sans">C5</text><rect x="664.49" y="308.3" width="0.6" height="22.69999999999999" fill="#c8c8c8"/><rect x="673.87" y="308.3" width="0.6" height="22.69999999999999" fill="#c8c8c8"/><rect x="683.26" y="308.3" width="0.6" height="22.69999999999999" fill="#c8c8c8"/><rect x="397.75" y="308.3" width="6.57" height="15.7" fill="#2a2a2c"/><rect x="398.43" y="308.3" width="5.2" height="14.2" fill="#4a4a4c"/><rect x="408.45" y="308.3" width="6.57" height="15.7" fill="#2a2a2c"/><rect x="409.13" y="308.3" width="5.2" height="14.2" fill="#4a4a4c"/><rect x="425.25" y="308.3" width="6.57" height="15.7" fill="#2a2a2c"/><rect x="425.93" y="308.3" width="5.2" height="14.2" fill="#4a4a4c"/><rect x="435.95" y="308.3" width="6.57" height="15.7" fill="#2a2a2c"/><rect x="436.63" y="308.3" width="5.2" height="14.2" fill="#4a4a4c"/><rect x="446.65" y="308.3" width="6.57" height="15.7" fill="#2a2a2c"/><rect x="447.33" y="308.3" width="5.2" height="14.2" fill="#4a4a4c"/><rect x="463.45" y="308.3" width="6.57" height="15.7" fill="#2a2a2c"/><rect x="464.13" y="308.3" width="5.2" height="14.2" fill="#4a4a4c"/><rect x="474.15" y="308.3" width="6.57" height="15.7" fill="#2a2a2c"/><rect x="474.83" y="308.3" width="5.2" height="14.2" fill="#4a4a4c"/><rect x="490.95" y="308.3" width="6.57" height="15.7" fill="#2a2a2c"/><rect x="491.63" y="308.3" width="5.2" height="14.2" fill="#4a4a4c"/><rect x="501.65" y="308.3" width="6.57" height="15.7" fill="#2a2a2c"/><rect x="502.33" y="308.3" width="5.2" height="14.2" fill="#4a4a4c"/><rect x="512.35" y="308.3" width="6.57" height="15.7" fill="#2a2a2c"/><rect x="513.03" y="308.3" width="5.2" height="14.2" fill="#4a4a4c"/><rect x="529.15" y="308.3" width="6.57" height="15.7" fill="#2a2a2c"/><rect x="529.83" y="308.3" width="5.2" height="14.2" fill="#4a4a4c"/><rect x="539.85" y="308.3" width="6.57" height="15.7" fill="#2a2a2c"/><rect x="540.53" y="308.3" width="5.2" height="14.2" fill="#4a4a4c"/><rect x="556.65" y="308.3" width="6.57" height="15.7" fill="#2a2a2c"/><rect x="557.33" y="308.3" width="5.2" height="14.2" fill="#4a4a4c"/><rect x="567.35" y="308.3" width="6.57" height="15.7" fill="#2a2a2c"/><rect x="568.03" y="308.3" width="5.2" height="14.2" fill="#4a4a4c"/><rect x="578.05" y="308.3" width="6.57" height="15.7" fill="#2a2a2c"/><rect x="578.73" y="308.3" width="5.2" height="14.2" fill="#4a4a4c"/><rect x="594.85" y="308.3" width="6.57" height="15.7" fill="#2a2a2c"/><rect x="595.53" y="308.3" width="5.2" height="14.2" fill="#4a4a4c"/><rect x="605.55" y="308.3" width="6.57" height="15.7" fill="#2a2a2c"/><rect x="606.23" y="308.3" width="5.2" height="14.2" fill="#4a4a4c"/><rect x="622.35" y="308.3" width="6.57" height="15.7" fill="#2a2a2c"/><rect x="623.03" y="308.3" width="5.2" height="14.2" fill="#4a4a4c"/><rect x="633.05" y="308.3" width="6.57" height="15.7" fill="#2a2a2c"/><rect x="633.73" y="308.3" width="5.2" height="14.2" fill="#4a4a4c"/><rect x="643.75" y="308.3" width="6.57" height="15.7" fill="#2a2a2c"/><rect x="644.43" y="308.3" width="5.2" height="14.2" fill="#4a4a4c"/><rect x="660.55" y="308.3" width="6.57" height="15.7" fill="#2a2a2c"/><rect x="661.23" y="308.3" width="5.2" height="14.2" fill="#4a4a4c"/><rect x="671.25" y="308.3" width="6.57" height="15.7" fill="#2a2a2c"/><rect x="671.93" y="308.3" width="5.2" height="14.2" fill="#4a4a4c"/><rect x="683.5" y="308.3" width="2.5" height="22.69999999999999" fill="#ddd"/><path d="M685.3 319 l-1.5 1 l1.5 1 z" fill="#555"/><path d="M393.5 320 l1.5 -1 l0 2 z" fill="#555"/><path d="M393 325 l3 0 l-1.5 3 z" fill="#e04848"/><text x="401.00" y="330" font-size="2.3" fill="#777" font-family="Liberation Sans">Ign</text><text x="410.20" y="330" font-size="2.3" fill="#777" font-family="Liberation Sans">Lrn</text><text x="419.40" y="330" font-size="2.3" fill="#777" font-family="Liberation Sans">HMT</text><text x="428.60" y="330" font-size="2.3" fill="#777" font-family="Liberation Sans">Foo1</text></svg>
</body></html>
